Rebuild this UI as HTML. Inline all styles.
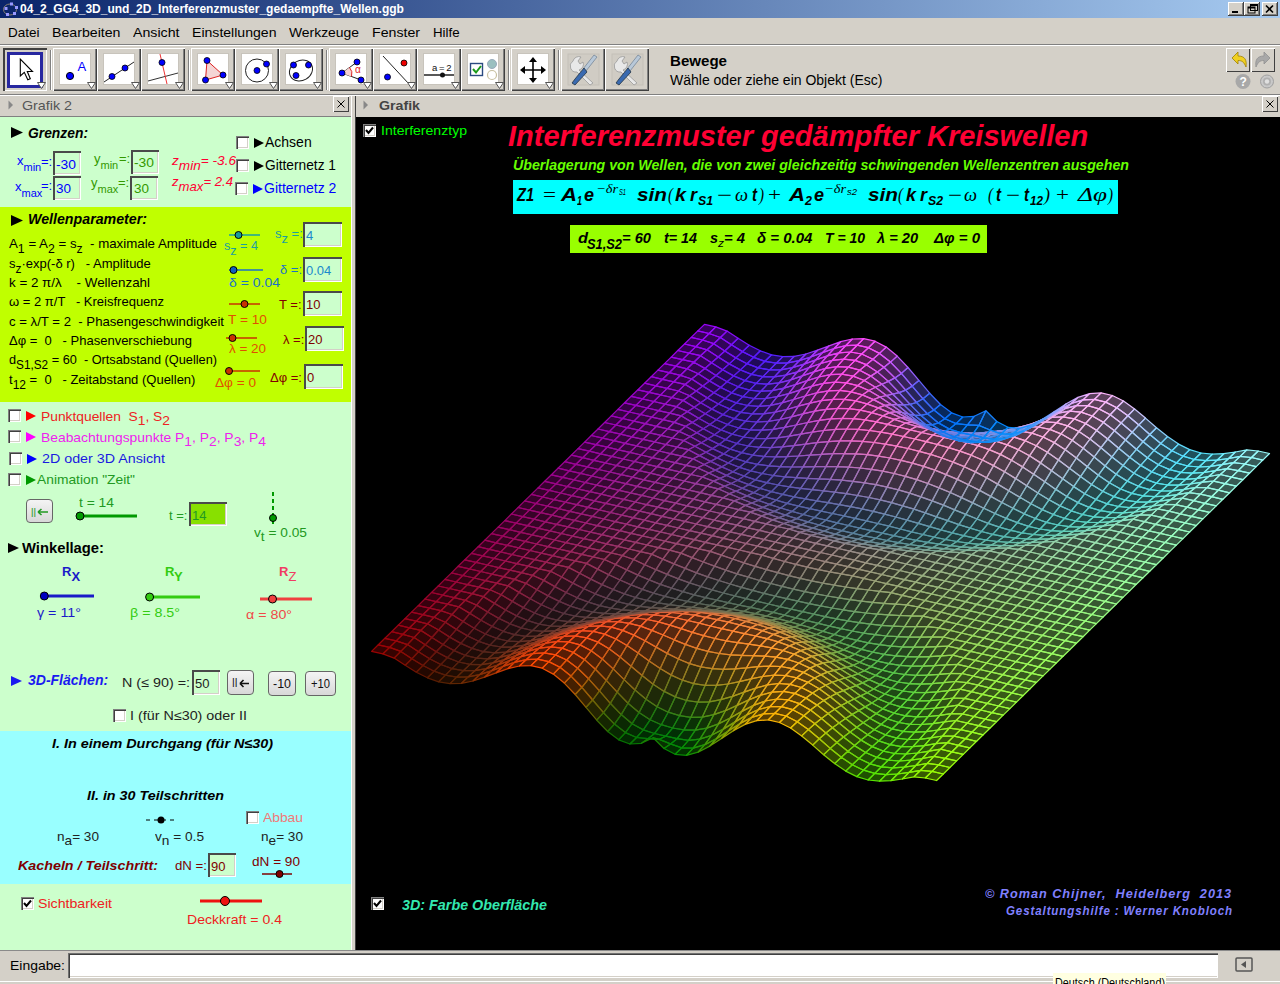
<!DOCTYPE html><html><head><meta charset="utf-8"><style>html,body{margin:0;padding:0;width:1280px;height:984px;overflow:hidden;background:#d4d0c8;}.t{position:absolute;white-space:nowrap;line-height:1;font-family:'Liberation Sans', sans-serif;transform-origin:0 0;}.r{position:absolute;}</style></head><body><div class="r" style="left:0px;top:0px;width:1280px;height:18px;background:linear-gradient(to right,#0a246a,#a6caf0);"></div>
<svg class="r" style="left:2px;top:1px" width="16" height="16"><ellipse cx="8" cy="8.5" rx="6.5" ry="5.5" fill="none" stroke="#8a8070" stroke-width="1"/><rect x="2.5" y="6" width="3" height="3" fill="#99f" /><rect x="8" y="1.5" width="3" height="3" fill="#99f"/><rect x="13" y="5" width="3" height="3" fill="#99f"/><rect x="4" y="12" width="3" height="3" fill="#99f"/><rect x="11" y="11" width="3" height="3" fill="#99f"/></svg>
<div class="t" style="left:20.00px;top:2.84px;font-size:12px;color:#fff;font-weight:bold;">04_2_GG4_3D_und_2D_Interferenzmuster_gedaempfte_Wellen.ggb</div>
<div class="r" style="left:1228px;top:2px;width:16px;height:14px;background:#d4d0c8;box-shadow:inset -1px -1px #404040,inset 1px 1px #fff,inset -2px -2px #808080;"></div>
<div class="r" style="left:1244px;top:2px;width:16px;height:14px;background:#d4d0c8;box-shadow:inset -1px -1px #404040,inset 1px 1px #fff,inset -2px -2px #808080;"></div>
<div class="r" style="left:1262px;top:2px;width:16px;height:14px;background:#d4d0c8;box-shadow:inset -1px -1px #404040,inset 1px 1px #fff,inset -2px -2px #808080;"></div>
<svg class="r" style="left:1228px;top:2px" width="52" height="14"><rect x="4" y="9" width="6" height="2" fill="#000"/><rect x="20" y="5" width="7" height="6" fill="none" stroke="#000" stroke-width="1"/><rect x="20" y="5" width="7" height="1.5" fill="#000"/><rect x="22.5" y="2.5" width="7" height="6" fill="none" stroke="#000" stroke-width="1"/><rect x="22" y="2" width="8" height="2" fill="#000"/><path d="M38 3.5 L45 10.5 M45 3.5 L38 10.5" stroke="#000" stroke-width="1.6"/></svg>
<div class="r" style="left:0px;top:18px;width:1280px;height:77px;background:#d4d0c8;"></div>
<div class="t" style="transform:scaleX(1.0376);left:7.50px;top:25.99px;font-size:13px;color:#000;">Datei</div>
<div class="t" style="transform:scaleX(1.0892);left:52.00px;top:25.99px;font-size:13px;color:#000;">Bearbeiten</div>
<div class="t" style="transform:scaleX(1.0905);left:132.80px;top:25.99px;font-size:13px;color:#000;">Ansicht</div>
<div class="t" style="transform:scaleX(1.0825);left:192.20px;top:25.99px;font-size:13px;color:#000;">Einstellungen</div>
<div class="t" style="transform:scaleX(1.0684);left:289.00px;top:25.99px;font-size:13px;color:#000;">Werkzeuge</div>
<div class="t" style="transform:scaleX(1.0890);left:372.00px;top:25.99px;font-size:13px;color:#000;">Fenster</div>
<div class="t" style="transform:scaleX(1.0225);left:432.80px;top:25.99px;font-size:13px;color:#000;">Hilfe</div>
<div class="r" style="left:0px;top:44px;width:1280px;height:1px;background:#808080;"></div>
<div class="r" style="left:0px;top:45px;width:1280px;height:1px;background:#fff;"></div>
<div class="r" style="left:0px;top:94px;width:1280px;height:1px;background:#808080;"></div>
<div class="r" style="left:0px;top:95px;width:1280px;height:1px;background:#fff;"></div>
<div class="r" style="left:49.5px;top:50px;width:1px;height:40px;background:#808080;"></div>
<div class="r" style="left:50.5px;top:50px;width:1px;height:40px;background:#fff;"></div>
<div class="r" style="left:187.5px;top:50px;width:1px;height:40px;background:#808080;"></div>
<div class="r" style="left:188.5px;top:50px;width:1px;height:40px;background:#fff;"></div>
<div class="r" style="left:325.5px;top:50px;width:1px;height:40px;background:#808080;"></div>
<div class="r" style="left:326.5px;top:50px;width:1px;height:40px;background:#fff;"></div>
<div class="r" style="left:507.5px;top:50px;width:1px;height:40px;background:#808080;"></div>
<div class="r" style="left:508.5px;top:50px;width:1px;height:40px;background:#fff;"></div>
<div class="r" style="left:557.5px;top:50px;width:1px;height:40px;background:#808080;"></div>
<div class="r" style="left:558.5px;top:50px;width:1px;height:40px;background:#fff;"></div>
<div class="r" style="left:3px;top:48px;width:44px;height:43px;background:#d4d0c8;box-shadow:inset 2px 2px #404040,inset -1px -1px #fff;"></div>
<div class="r" style="left:53px;top:48px;width:44px;height:43px;background:#d4d0c8;box-shadow:inset 1px 1px #fff,inset -1px -1px #404040,inset -2px -2px #808080;"></div>
<div class="r" style="left:97px;top:48px;width:44px;height:43px;background:#d4d0c8;box-shadow:inset 1px 1px #fff,inset -1px -1px #404040,inset -2px -2px #808080;"></div>
<div class="r" style="left:141px;top:48px;width:44px;height:43px;background:#d4d0c8;box-shadow:inset 1px 1px #fff,inset -1px -1px #404040,inset -2px -2px #808080;"></div>
<div class="r" style="left:191px;top:48px;width:44px;height:43px;background:#d4d0c8;box-shadow:inset 1px 1px #fff,inset -1px -1px #404040,inset -2px -2px #808080;"></div>
<div class="r" style="left:235px;top:48px;width:44px;height:43px;background:#d4d0c8;box-shadow:inset 1px 1px #fff,inset -1px -1px #404040,inset -2px -2px #808080;"></div>
<div class="r" style="left:279px;top:48px;width:44px;height:43px;background:#d4d0c8;box-shadow:inset 1px 1px #fff,inset -1px -1px #404040,inset -2px -2px #808080;"></div>
<div class="r" style="left:329px;top:48px;width:44px;height:43px;background:#d4d0c8;box-shadow:inset 1px 1px #fff,inset -1px -1px #404040,inset -2px -2px #808080;"></div>
<div class="r" style="left:373px;top:48px;width:44px;height:43px;background:#d4d0c8;box-shadow:inset 1px 1px #fff,inset -1px -1px #404040,inset -2px -2px #808080;"></div>
<div class="r" style="left:417px;top:48px;width:44px;height:43px;background:#d4d0c8;box-shadow:inset 1px 1px #fff,inset -1px -1px #404040,inset -2px -2px #808080;"></div>
<div class="r" style="left:461px;top:48px;width:44px;height:43px;background:#d4d0c8;box-shadow:inset 1px 1px #fff,inset -1px -1px #404040,inset -2px -2px #808080;"></div>
<div class="r" style="left:511px;top:48px;width:44px;height:43px;background:#d4d0c8;box-shadow:inset 1px 1px #fff,inset -1px -1px #404040,inset -2px -2px #808080;"></div>
<div class="r" style="left:561px;top:48px;width:44px;height:43px;background:#d4d0c8;box-shadow:inset 1px 1px #fff,inset -1px -1px #404040,inset -2px -2px #808080;"></div>
<div class="r" style="left:605px;top:48px;width:44px;height:43px;background:#d4d0c8;box-shadow:inset 1px 1px #fff,inset -1px -1px #404040,inset -2px -2px #808080;"></div>
<svg class="r" style="left:7px;top:52px" width="36" height="36"><rect x="1.5" y="1.5" width="33" height="33" fill="#fff" stroke="#2828a0" stroke-width="3"/><path d="M13.3 7 L13.3 24 L17.3 20.3 L20.8 27.8 L23.3 26.8 L20.3 19.5 L25.5 19.5 Z" fill="#fff" stroke="#000" stroke-width="1.1" stroke-linejoin="miter"/></svg>
<svg class="r" style="left:37px;top:82px" width="9" height="7"><path d="M0.5 0.5 L8.5 0.5 L4.5 6.5 Z" fill="#fff" stroke="#555"/></svg>
<div class="r" style="left:59px;top:53px;width:32px;height:32px;background:#fff;box-shadow:inset 0 0 0 1px #c8c4bc;"></div>
<svg class="r" style="left:60px;top:54px" width="30" height="30"><circle cx="10" cy="22" r="3.6" fill="#00f" stroke="#000" stroke-width="1"/><text x="17.5" y="17" font-family="Liberation Sans" font-size="13" fill="#00f">A</text></svg>
<svg class="r" style="left:87px;top:82px" width="9" height="7"><path d="M0.5 0.5 L8.5 0.5 L4.5 6.5 Z" fill="#fff" stroke="#555"/></svg>
<div class="r" style="left:103px;top:53px;width:32px;height:32px;background:#fff;box-shadow:inset 0 0 0 1px #c8c4bc;"></div>
<svg class="r" style="left:104px;top:54px" width="30" height="30"><path d="M0 28 L30 8" stroke="#222" stroke-width="1"/><circle cx="8" cy="22.5" r="3" fill="#00f" stroke="#000" stroke-width="0.8"/><circle cx="21" cy="14" r="3" fill="#00f" stroke="#000" stroke-width="0.8"/></svg>
<svg class="r" style="left:131px;top:82px" width="9" height="7"><path d="M0.5 0.5 L8.5 0.5 L4.5 6.5 Z" fill="#fff" stroke="#555"/></svg>
<div class="r" style="left:147px;top:53px;width:32px;height:32px;background:#fff;box-shadow:inset 0 0 0 1px #c8c4bc;"></div>
<svg class="r" style="left:148px;top:54px" width="30" height="30"><path d="M0 27 L30 19" stroke="#333" stroke-width="1"/><path d="M12 0 L19 30" stroke="#e33" stroke-width="1"/><circle cx="14" cy="8.5" r="3" fill="#00f" stroke="#000" stroke-width="0.8"/></svg>
<svg class="r" style="left:175px;top:82px" width="9" height="7"><path d="M0.5 0.5 L8.5 0.5 L4.5 6.5 Z" fill="#fff" stroke="#555"/></svg>
<div class="r" style="left:197px;top:53px;width:32px;height:32px;background:#fff;box-shadow:inset 0 0 0 1px #c8c4bc;"></div>
<svg class="r" style="left:198px;top:54px" width="30" height="30"><path d="M9 6.5 L25 21 L7.5 26 Z" fill="#f4d4d4" stroke="#d22" stroke-width="1"/><circle cx="9" cy="6.5" r="3" fill="#00f" stroke="#000" stroke-width="0.8"/><circle cx="25" cy="21" r="3" fill="#00f" stroke="#000" stroke-width="0.8"/><circle cx="7.5" cy="26" r="3" fill="#00f" stroke="#000" stroke-width="0.8"/></svg>
<svg class="r" style="left:225px;top:82px" width="9" height="7"><path d="M0.5 0.5 L8.5 0.5 L4.5 6.5 Z" fill="#fff" stroke="#555"/></svg>
<div class="r" style="left:241px;top:53px;width:32px;height:32px;background:#fff;box-shadow:inset 0 0 0 1px #c8c4bc;"></div>
<svg class="r" style="left:242px;top:54px" width="30" height="30"><circle cx="15" cy="16.5" r="11.5" fill="none" stroke="#222" stroke-width="1"/><circle cx="15" cy="16.5" r="3" fill="#00f" stroke="#000" stroke-width="0.8"/><circle cx="24.5" cy="10" r="3" fill="#00f" stroke="#000" stroke-width="0.8"/></svg>
<svg class="r" style="left:269px;top:82px" width="9" height="7"><path d="M0.5 0.5 L8.5 0.5 L4.5 6.5 Z" fill="#fff" stroke="#555"/></svg>
<div class="r" style="left:285px;top:53px;width:32px;height:32px;background:#fff;box-shadow:inset 0 0 0 1px #c8c4bc;"></div>
<svg class="r" style="left:286px;top:54px" width="30" height="30"><ellipse cx="15" cy="16.5" rx="12" ry="10" transform="rotate(-30 15 16.5)" fill="none" stroke="#222" stroke-width="1"/><circle cx="7.5" cy="11" r="3" fill="#00f" stroke="#000" stroke-width="0.8"/><circle cx="22.5" cy="11" r="3" fill="#00f" stroke="#000" stroke-width="0.8"/><circle cx="10" cy="21.5" r="3" fill="#00f" stroke="#000" stroke-width="0.8"/></svg>
<svg class="r" style="left:313px;top:82px" width="9" height="7"><path d="M0.5 0.5 L8.5 0.5 L4.5 6.5 Z" fill="#fff" stroke="#555"/></svg>
<div class="r" style="left:335px;top:53px;width:32px;height:32px;background:#fff;box-shadow:inset 0 0 0 1px #c8c4bc;"></div>
<svg class="r" style="left:336px;top:54px" width="30" height="30"><path d="M21 8 L6 19 L25 26" fill="none" stroke="#222" stroke-width="1"/><path d="M13.5 13.5 A9 9 0 0 1 15 22.5 L6 19 Z" fill="#f6d0d0"/><path d="M13.5 13.5 A9 9 0 0 1 15.5 22.5" fill="none" stroke="#d22" stroke-width="1"/><text x="19" y="19" font-family="Liberation Sans" font-size="10" fill="#d22">&#945;</text><circle cx="21" cy="8" r="3" fill="#00f" stroke="#000" stroke-width="0.8"/><circle cx="6" cy="19" r="3" fill="#00f" stroke="#000" stroke-width="0.8"/><circle cx="25" cy="26" r="3" fill="#00f" stroke="#000" stroke-width="0.8"/></svg>
<svg class="r" style="left:363px;top:82px" width="9" height="7"><path d="M0.5 0.5 L8.5 0.5 L4.5 6.5 Z" fill="#fff" stroke="#555"/></svg>
<div class="r" style="left:379px;top:53px;width:32px;height:32px;background:#fff;box-shadow:inset 0 0 0 1px #c8c4bc;"></div>
<svg class="r" style="left:380px;top:54px" width="30" height="30"><path d="M3 2 L29 30" stroke="#222" stroke-width="1"/><circle cx="24" cy="9" r="3" fill="#e00" stroke="#000" stroke-width="0.8"/><circle cx="7.5" cy="23" r="3" fill="#00f" stroke="#000" stroke-width="0.8"/></svg>
<svg class="r" style="left:407px;top:82px" width="9" height="7"><path d="M0.5 0.5 L8.5 0.5 L4.5 6.5 Z" fill="#fff" stroke="#555"/></svg>
<div class="r" style="left:423px;top:53px;width:32px;height:32px;background:#fff;box-shadow:inset 0 0 0 1px #c8c4bc;"></div>
<svg class="r" style="left:424px;top:54px" width="30" height="30"><path d="M0 21 L30 21" stroke="#111" stroke-width="1.4"/><circle cx="18.5" cy="21" r="2.5" fill="#111"/><text x="8" y="17" font-family="Liberation Sans" font-size="9.5" textLength="19.5" fill="#111">a = 2</text></svg>
<svg class="r" style="left:451px;top:82px" width="9" height="7"><path d="M0.5 0.5 L8.5 0.5 L4.5 6.5 Z" fill="#fff" stroke="#555"/></svg>
<div class="r" style="left:467px;top:53px;width:32px;height:32px;background:#fff;box-shadow:inset 0 0 0 1px #c8c4bc;"></div>
<svg class="r" style="left:468px;top:54px" width="30" height="30"><rect x="2.5" y="9.5" width="12" height="12" fill="#fff" stroke="#2a4a80" stroke-width="1.4"/><path d="M5 15 L8 18.5 L13 12" fill="none" stroke="#1a9a1a" stroke-width="2"/><circle cx="24" cy="10" r="4.5" fill="#9ac0c0" stroke="#9ab" stroke-width="1"/><circle cx="24" cy="21" r="4.5" fill="#fff" stroke="#c8c0a0" stroke-width="1.2"/></svg>
<svg class="r" style="left:495px;top:82px" width="9" height="7"><path d="M0.5 0.5 L8.5 0.5 L4.5 6.5 Z" fill="#fff" stroke="#555"/></svg>
<div class="r" style="left:517px;top:53px;width:32px;height:32px;background:#fff;box-shadow:inset 0 0 0 1px #c8c4bc;"></div>
<svg class="r" style="left:518px;top:54px" width="30" height="30"><path d="M15 6 L15 26 M5 16 L25 16" stroke="#000" stroke-width="1.6"/><path d="M15 3 L11 8 L19 8 Z M15 29 L11 24 L19 24 Z M2 16 L7 12 L7 20 Z M28 16 L23 12 L23 20 Z" fill="#000"/></svg>
<svg class="r" style="left:545px;top:82px" width="9" height="7"><path d="M0.5 0.5 L8.5 0.5 L4.5 6.5 Z" fill="#fff" stroke="#555"/></svg>
<svg class="r" style="left:567px;top:53px" width="33" height="33"><rect x="1" y="1" width="31" height="31" fill="#d0ccc4" stroke="#c4c0b8"/><path d="M6 8 A6 6 0 0 1 14 4 L11 8 L13 11 L16 9 A6 6 0 0 1 12 17 L26 30 L23 32 L10 19 A6 6 0 0 1 6 8Z" fill="#e8e8e8" stroke="#999" stroke-width="0.8"/><path d="M30 4 L27 2 L16 16 L19 18 Z" fill="#b8c8d8" stroke="#789" stroke-width="0.8"/><path d="M17 15 L8 26 L5 30 L8 32 L20 19 Z" fill="#3a6ab0" stroke="#234" stroke-width="0.8"/></svg>
<svg class="r" style="left:611px;top:53px" width="33" height="33"><rect x="1" y="1" width="31" height="31" fill="#d0ccc4" stroke="#c4c0b8"/><path d="M6 8 A6 6 0 0 1 14 4 L11 8 L13 11 L16 9 A6 6 0 0 1 12 17 L26 30 L23 32 L10 19 A6 6 0 0 1 6 8Z" fill="#e8e8e8" stroke="#999" stroke-width="0.8"/><path d="M30 4 L27 2 L16 16 L19 18 Z" fill="#b8c8d8" stroke="#789" stroke-width="0.8"/><path d="M17 15 L8 26 L5 30 L8 32 L20 19 Z" fill="#3a6ab0" stroke="#234" stroke-width="0.8"/></svg>
<div class="t" style="transform:scaleX(1.0771);left:670.00px;top:54.15px;font-size:14px;color:#000;font-weight:bold;">Bewege</div>
<div class="t" style="left:670.00px;top:73.15px;font-size:14px;color:#000;">W&auml;hle oder ziehe ein Objekt (Esc)</div>
<div class="r" style="left:1226px;top:48px;width:24px;height:24px;background:#d4d0c8;box-shadow:inset 1px 1px #fff,inset -1px -1px #404040;"></div>
<div class="r" style="left:1251px;top:48px;width:24px;height:24px;background:#d4d0c8;box-shadow:inset 1px 1px #fff,inset -1px -1px #404040;"></div>
<svg class="r" style="left:1226px;top:48px" width="50" height="24"><path d="M6 10 L12 4 L12 8 C19 8 21 12 20 19 C18 14 16 12.5 12 12.5 L12 16 Z" fill="#f0d020" stroke="#a08000" stroke-width="0.8"/><path d="M44 10 L38 4 L38 8 C31 8 29 12 30 19 C32 14 34 12.5 38 12.5 L38 16 Z" fill="#a8a8a8" stroke="#909090" stroke-width="0.8"/></svg>
<svg class="r" style="left:1234px;top:73px" width="44" height="18"><circle cx="9" cy="8.5" r="7.5" fill="#a8a8a8"/><text x="5.5" y="13" font-family="Liberation Sans" font-size="12" font-weight="bold" fill="#fff">?</text><g transform="translate(33 8.5)"><circle r="6.5" fill="#c8c8c8" stroke="#a0a0a0" stroke-width="1"/><circle r="4" fill="#b0b0b0"/><circle r="2.2" fill="#e0e0e0"/></g></svg>
<div class="r" style="left:0px;top:96px;width:351px;height:20px;background:#d4d0c8;"></div>
<div class="r" style="left:0px;top:116px;width:351px;height:1px;background:#808080;"></div>
<svg class="r" style="left:8px;top:100px" width="6" height="10"><path d="M0.5 0.5 L5 5 L0.5 9.5 Z" fill="#888"/></svg>
<div class="t" style="transform:scaleX(1.0985);left:22.00px;top:99.49px;font-size:13px;color:#555;">Grafik 2</div>
<div class="r" style="left:333px;top:96px;width:16px;height:16px;background:#d4d0c8;box-shadow:inset 1px 1px #fff,inset -1px -1px #404040;"></div>
<svg class="r" style="left:333px;top:96px" width="16" height="16"><path d="M4.5 4.5 L11.5 11.5 M11.5 4.5 L4.5 11.5" stroke="#000" stroke-width="1"/></svg>
<div class="r" style="left:351px;top:96px;width:5px;height:854px;background:#d4d0c8;box-shadow:inset 1px 0 #fff,inset -1px 0 #404040;"></div>
<div class="r" style="left:356px;top:96px;width:924px;height:21px;background:#d4d0c8;"></div>
<svg class="r" style="left:363px;top:100px" width="6" height="10"><path d="M0.5 0.5 L5 5 L0.5 9.5 Z" fill="#888"/></svg>
<div class="t" style="transform:scaleX(1.0911);left:378.50px;top:99.49px;font-size:13px;color:#444;font-weight:bold;">Grafik</div>
<div class="r" style="left:1262px;top:96px;width:16px;height:16px;background:#d4d0c8;box-shadow:inset 1px 1px #fff,inset -1px -1px #404040;"></div>
<svg class="r" style="left:1262px;top:96px" width="16" height="16"><path d="M4.5 4.5 L11.5 11.5 M11.5 4.5 L4.5 11.5" stroke="#000" stroke-width="1"/></svg>
<div class="r" style="left:0px;top:117px;width:351px;height:833px;background:#ccffcc;"></div>
<div class="r" style="left:0px;top:207px;width:351px;height:195px;background:#c0ff00;"></div>
<div class="r" style="left:0px;top:731px;width:351px;height:153px;background:#99ffff;"></div>
<svg class="r" style="left:11px;top:127px" width="12" height="11"><path d="M0 0 L12 5.5 L0 11 Z" fill="#000"/></svg>
<div class="t" style="transform:scaleX(0.9887);left:28.00px;top:125.65px;font-size:14px;color:#000;font-weight:bold;font-style:italic;">Grenzen:</div>
<div class="t" style="left:17.00px;top:154.49px;font-size:13px;color:#0000ff;">x<span style="position:relative;top:6px;font-size:11px;">min</span></div>
<div class="t" style="left:41.00px;top:154.99px;font-size:13px;color:#0000ff;">=:</div>
<div class="r" style="left:53px;top:151px;width:28px;height:24px;background:#ccffcc;box-shadow:inset 2px 2px #4a4a4a,inset -1px -1px #fff,inset -2px -2px #d4d0c8;"></div>
<div class="t" style="transform:scaleX(1.0640);left:56.00px;top:157.69px;font-size:13px;color:#0000ff;">-30</div>
<div class="t" style="left:15.00px;top:179.59px;font-size:13px;color:#0000ff;">x<span style="position:relative;top:6px;font-size:11px;">max</span></div>
<div class="t" style="left:41.00px;top:178.99px;font-size:13px;color:#0000ff;">=:</div>
<div class="r" style="left:53px;top:176px;width:28px;height:24px;background:#ccffcc;box-shadow:inset 2px 2px #4a4a4a,inset -1px -1px #fff,inset -2px -2px #d4d0c8;"></div>
<div class="t" style="transform:scaleX(1.0367);left:56.00px;top:182.49px;font-size:13px;color:#0000ff;">30</div>
<div class="t" style="left:94.00px;top:152.49px;font-size:13px;color:#339900;">y<span style="position:relative;top:6px;font-size:11px;">min</span></div>
<div class="t" style="left:119.00px;top:151.99px;font-size:13px;color:#339900;">=:</div>
<div class="r" style="left:131px;top:150px;width:28px;height:24px;background:#ccffcc;box-shadow:inset 2px 2px #4a4a4a,inset -1px -1px #fff,inset -2px -2px #d4d0c8;"></div>
<div class="t" style="transform:scaleX(1.0640);left:134.00px;top:156.49px;font-size:13px;color:#339900;">-30</div>
<div class="t" style="left:91.00px;top:175.99px;font-size:13px;color:#339900;">y<span style="position:relative;top:6px;font-size:11px;">max</span></div>
<div class="t" style="left:118.00px;top:175.99px;font-size:13px;color:#339900;">=:</div>
<div class="r" style="left:130px;top:176px;width:28px;height:24px;background:#ccffcc;box-shadow:inset 2px 2px #4a4a4a,inset -1px -1px #fff,inset -2px -2px #d4d0c8;"></div>
<div class="t" style="transform:scaleX(1.0367);left:134.00px;top:181.99px;font-size:13px;color:#339900;">30</div>
<div class="t" style="transform:scaleX(1.0481);left:172.00px;top:153.99px;font-size:13px;color:#ff0033;font-style:italic;">z<span style="position:relative;top:5px;">min</span>= -3.6</div>
<div class="t" style="transform:scaleX(1.0109);left:172.00px;top:175.49px;font-size:13px;color:#ff0033;font-style:italic;">z<span style="position:relative;top:5px;">max</span>= 2.4</div>
<div class="r" style="left:236px;top:136px;width:13px;height:13px;background:#fff;box-shadow:inset 1px 1px #808080,inset 2px 2px #404040,inset -1px -1px #fff,inset -2px -2px #d4d0c8;"></div>
<svg class="r" style="left:254px;top:138px" width="10" height="10"><path d="M0 0 L10 5.0 L0 10 Z" fill="#000"/></svg>
<div class="t" style="left:265.00px;top:134.85px;font-size:14px;color:#000;">Achsen</div>
<div class="r" style="left:236px;top:159px;width:13px;height:13px;background:#fff;box-shadow:inset 1px 1px #808080,inset 2px 2px #404040,inset -1px -1px #fff,inset -2px -2px #d4d0c8;"></div>
<svg class="r" style="left:254px;top:161px" width="10" height="10"><path d="M0 0 L10 5.0 L0 10 Z" fill="#000"/></svg>
<div class="t" style="transform:scaleX(0.9810);left:265.00px;top:157.75px;font-size:14px;color:#000;">Gitternetz 1</div>
<div class="r" style="left:235px;top:182px;width:13px;height:13px;background:#fff;box-shadow:inset 1px 1px #808080,inset 2px 2px #404040,inset -1px -1px #fff,inset -2px -2px #d4d0c8;"></div>
<svg class="r" style="left:253px;top:184px" width="10" height="10"><path d="M0 0 L10 5.0 L0 10 Z" fill="#0000ff"/></svg>
<div class="t" style="left:264.00px;top:180.55px;font-size:14px;color:#0000ff;">Gitternetz 2</div>
<svg class="r" style="left:11px;top:215px" width="12" height="11"><path d="M0 0 L12 5.5 L0 11 Z" fill="#000"/></svg>
<div class="t" style="transform:scaleX(1.0151);left:28.00px;top:212.45px;font-size:14px;color:#000;font-weight:bold;font-style:italic;">Wellenparameter:</div>
<div class="t" style="transform:scaleX(1.0213);left:9.00px;top:236.59px;font-size:13px;color:#000;">A<span style="position:relative;top:5px;font-size:12px;">1</span> = A<span style="position:relative;top:5px;font-size:12px;">2</span> = s<span style="position:relative;top:5px;font-size:12px;">z</span>&nbsp; - maximale Amplitude</div>
<div class="t" style="left:9.00px;top:256.99px;font-size:13px;color:#000;">s<span style="position:relative;top:5px;font-size:12px;">z</span>&middot;exp(-&delta; r) &nbsp; - Amplitude</div>
<div class="t" style="transform:scaleX(1.0293);left:9.00px;top:275.59px;font-size:13px;color:#000;">k = 2 &pi;/&lambda; &nbsp; &nbsp;- Wellenzahl</div>
<div class="t" style="left:9.00px;top:295.49px;font-size:13px;color:#000;">&omega; = 2 &pi;/T &nbsp; - Kreisfrequenz</div>
<div class="t" style="transform:scaleX(1.0131);left:9.00px;top:314.59px;font-size:13px;color:#000;">c = &lambda;/T = 2 &nbsp;- Phasengeschwindigkeit</div>
<div class="t" style="left:9.00px;top:334.19px;font-size:13px;color:#000;">&Delta;&phi; = &nbsp;0 &nbsp; - Phasenverschiebung</div>
<div class="t" style="transform:scaleX(0.9798);left:9.00px;top:353.19px;font-size:13px;color:#000;">d<span style="position:relative;top:5px;font-size:12px;">S1,S2</span> = 60 &nbsp;- Ortsabstand (Quellen)</div>
<div class="t" style="left:9.00px;top:373.29px;font-size:13px;color:#000;">t<span style="position:relative;top:5px;font-size:12px;">12</span> = &nbsp;0 &nbsp; - Zeitabstand (Quellen)</div>
<svg class="r" style="left:223px;top:228.5px" width="43" height="12"><path d="M6 6 L37 6" stroke="#1aa0a0" stroke-width="1.5"/><circle cx="15.5" cy="6" r="3.5" fill="#1a9a9a" stroke="#000" stroke-width="1"/></svg>
<div class="t" style="transform:scaleX(0.9701);left:224.00px;top:239.49px;font-size:13px;color:#1aa0a0;">s<span style="position:relative;top:5px;">z</span> = 4</div>
<div class="t" style="left:275.00px;top:226.99px;font-size:13px;color:#1aa0a0;">s<span style="position:relative;top:5px;">z</span> =:</div>
<div class="r" style="left:303px;top:222px;width:39px;height:25px;background:#ccffcc;box-shadow:inset 2px 2px #4a4a4a,inset -1px -1px #fff,inset -2px -2px #d4d0c8;"></div>
<div class="t" style="left:306.00px;top:228.99px;font-size:13px;color:#1a8acc;">4</div>
<svg class="r" style="left:223px;top:264px" width="46" height="12"><path d="M6 6 L40 6" stroke="#1a70c8" stroke-width="1.5"/><circle cx="10.5" cy="6" r="3.5" fill="#1060c0" stroke="#000" stroke-width="1"/></svg>
<div class="t" style="transform:scaleX(1.0769);left:229.00px;top:276.49px;font-size:13px;color:#1a70c8;">&delta; = 0.04</div>
<div class="t" style="left:280.00px;top:262.99px;font-size:13px;color:#1a70c8;">&delta; =:</div>
<div class="r" style="left:303px;top:257px;width:39px;height:25px;background:#ccffcc;box-shadow:inset 2px 2px #4a4a4a,inset -1px -1px #fff,inset -2px -2px #d4d0c8;"></div>
<div class="t" style="left:306.00px;top:263.99px;font-size:13px;color:#1a8acc;">0.04</div>
<svg class="r" style="left:223px;top:298.4px" width="43" height="12"><path d="M6 6 L37 6" stroke="#c83200" stroke-width="1.5"/><circle cx="21.5" cy="6" r="3.5" fill="#c83200" stroke="#000" stroke-width="1"/></svg>
<div class="t" style="transform:scaleX(1.0545);left:228.00px;top:312.69px;font-size:13px;color:#e05000;">T = 10</div>
<div class="t" style="left:279.00px;top:297.59px;font-size:13px;color:#800000;">T =:</div>
<div class="r" style="left:303px;top:291px;width:39px;height:25px;background:#ccffcc;box-shadow:inset 2px 2px #4a4a4a,inset -1px -1px #fff,inset -2px -2px #d4d0c8;"></div>
<div class="t" style="left:306.00px;top:297.99px;font-size:13px;color:#800000;">10</div>
<svg class="r" style="left:220px;top:332.3px" width="43" height="12"><path d="M6 6 L37 6" stroke="#c83200" stroke-width="1.5"/><circle cx="12.5" cy="6" r="3.5" fill="#c83200" stroke="#000" stroke-width="1"/></svg>
<div class="t" style="transform:scaleX(1.0341);left:229.00px;top:342.39px;font-size:13px;color:#e05000;">&lambda; = 20</div>
<div class="t" style="left:283.00px;top:332.69px;font-size:13px;color:#800000;">&lambda; =:</div>
<div class="r" style="left:305px;top:326px;width:39px;height:25px;background:#ccffcc;box-shadow:inset 2px 2px #4a4a4a,inset -1px -1px #fff,inset -2px -2px #d4d0c8;"></div>
<div class="t" style="left:308.00px;top:332.99px;font-size:13px;color:#800000;">20</div>
<svg class="r" style="left:223px;top:365.3px" width="43" height="12"><path d="M6 6 L37 6" stroke="#c83200" stroke-width="1.5"/><circle cx="6" cy="6" r="3.5" fill="#c83200" stroke="#000" stroke-width="1"/></svg>
<div class="t" style="transform:scaleX(1.0467);left:215.00px;top:376.29px;font-size:13px;color:#e05000;">&Delta;&phi; = 0</div>
<div class="t" style="left:270.00px;top:370.89px;font-size:13px;color:#800000;">&Delta;&phi; =:</div>
<div class="r" style="left:304px;top:364px;width:39px;height:25px;background:#ccffcc;box-shadow:inset 2px 2px #4a4a4a,inset -1px -1px #fff,inset -2px -2px #d4d0c8;"></div>
<div class="t" style="left:307.00px;top:370.99px;font-size:13px;color:#800000;">0</div>
<div class="r" style="left:8px;top:409px;width:13px;height:13px;background:#fff;box-shadow:inset 1px 1px #808080,inset 2px 2px #404040,inset -1px -1px #fff,inset -2px -2px #d4d0c8;"></div>
<svg class="r" style="left:26px;top:411px" width="10" height="10"><path d="M0 0 L10 5.0 L0 10 Z" fill="#ff0000"/></svg>
<div class="t" style="transform:scaleX(1.0621);left:41.00px;top:409.79px;font-size:13px;color:#ee2222;">Punktquellen &nbsp;S<span style="position:relative;top:4px;">1</span>, S<span style="position:relative;top:4px;">2</span></div>
<div class="r" style="left:8px;top:430px;width:13px;height:13px;background:#fff;box-shadow:inset 1px 1px #808080,inset 2px 2px #404040,inset -1px -1px #fff,inset -2px -2px #d4d0c8;"></div>
<svg class="r" style="left:26px;top:432px" width="10" height="10"><path d="M0 0 L10 5.0 L0 10 Z" fill="#ff00ff"/></svg>
<div class="t" style="transform:scaleX(1.0659);left:41.00px;top:430.59px;font-size:13px;color:#ee22ee;">Beabachtungspunkte P<span style="position:relative;top:4px;">1</span>, P<span style="position:relative;top:4px;">2</span>, P<span style="position:relative;top:4px;">3</span>, P<span style="position:relative;top:4px;">4</span></div>
<div class="r" style="left:9px;top:452px;width:13px;height:13px;background:#fff;box-shadow:inset 1px 1px #808080,inset 2px 2px #404040,inset -1px -1px #fff,inset -2px -2px #d4d0c8;"></div>
<svg class="r" style="left:27px;top:454px" width="10" height="10"><path d="M0 0 L10 5.0 L0 10 Z" fill="#0000ff"/></svg>
<div class="t" style="transform:scaleX(1.0981);left:42.00px;top:452.39px;font-size:13px;color:#1a1ae0;">2D oder 3D Ansicht</div>
<div class="r" style="left:8px;top:473px;width:13px;height:13px;background:#fff;box-shadow:inset 1px 1px #808080,inset 2px 2px #404040,inset -1px -1px #fff,inset -2px -2px #d4d0c8;"></div>
<svg class="r" style="left:26px;top:475px" width="10" height="10"><path d="M0 0 L10 5.0 L0 10 Z" fill="#009900"/></svg>
<div class="t" style="transform:scaleX(1.0614);left:37.00px;top:473.19px;font-size:13px;color:#229922;">Animation &quot;Zeit&quot;</div>
<div class="r" style="left:26px;top:499px;width:27px;height:24px;background:linear-gradient(#f4f4f4,#d8d8d8);border:1px solid #666;border-radius:4px;box-sizing:border-box;"></div>
<div class="t" style="transform:scaleX(0.7494);left:31.00px;top:506.84px;font-size:12px;color:#229922;">II</div>
<svg class="r" style="left:37px;top:508px" width="12" height="8"><path d="M1 4 L11 4 M1 4 L4.5 1 M1 4 L4.5 7" stroke="#229922" stroke-width="1.6" fill="none"/></svg>
<div class="t" style="transform:scaleX(1.0641);left:79.00px;top:495.99px;font-size:13px;color:#229922;">t = 14</div>
<svg class="r" style="left:74px;top:510.29999999999995px" width="69" height="12"><path d="M6 6 L63 6" stroke="#009900" stroke-width="3"/><circle cx="6" cy="6" r="4" fill="#009900" stroke="#000" stroke-width="1"/></svg>
<div class="t" style="left:169.00px;top:508.99px;font-size:13px;color:#229922;">t =:</div>
<div class="r" style="left:189px;top:502px;width:38px;height:24px;background:#88e000;box-shadow:inset 2px 2px #4a4a4a,inset -1px -1px #fff,inset -2px -2px #d4d0c8;"></div>
<div class="t" style="left:192.00px;top:508.99px;font-size:13px;color:#229922;">14</div>
<svg class="r" style="left:268px;top:490px" width="10" height="40"><path d="M5 2 L5 36" stroke="#009900" stroke-width="2" stroke-dasharray="4 3"/><circle cx="5" cy="28" r="3.5" fill="#009900" stroke="#000" stroke-width="1"/></svg>
<div class="t" style="transform:scaleX(1.0547);left:254.00px;top:526.49px;font-size:13px;color:#229922;">v<span style="position:relative;top:4px;">t</span> = 0.05</div>
<svg class="r" style="left:8px;top:543px" width="11" height="10"><path d="M0 0 L11 5.0 L0 10 Z" fill="#000"/></svg>
<div class="t" style="transform:scaleX(1.0557);left:22.00px;top:540.65px;font-size:14px;color:#000;font-weight:bold;">Winkellage:</div>
<div class="t" style="left:62.00px;top:565.19px;font-size:13px;color:#1a1ac8;font-weight:bold;">R<span style="position:relative;top:5px;">X</span></div>
<svg class="r" style="left:38px;top:590.2px" width="62" height="12"><path d="M6 6 L56 6" stroke="#1a1ac8" stroke-width="3"/><circle cx="6.299999999999997" cy="6" r="4" fill="#0000c0" stroke="#000" stroke-width="1"/></svg>
<div class="t" style="transform:scaleX(1.0996);left:37.00px;top:605.59px;font-size:13px;color:#1a1ac8;">&gamma; = 11&deg;</div>
<div class="t" style="left:165.00px;top:564.99px;font-size:13px;color:#33cc11;font-weight:bold;">R<span style="position:relative;top:5px;">Y</span></div>
<svg class="r" style="left:143px;top:591px" width="63" height="12"><path d="M6 6 L57 6" stroke="#33cc11" stroke-width="3"/><circle cx="6.599999999999994" cy="6" r="4" fill="#33cc11" stroke="#000" stroke-width="1"/></svg>
<div class="t" style="transform:scaleX(1.0970);left:130.00px;top:605.99px;font-size:13px;color:#33cc11;">&beta; = 8.5&deg;</div>
<div class="t" style="left:279.00px;top:565.49px;font-size:13px;color:#f03c64;font-weight:bold;">R<span style="position:relative;top:5px;font-weight:normal;">Z</span></div>
<svg class="r" style="left:254px;top:593px" width="64" height="12"><path d="M6 6 L58 6" stroke="#f04040" stroke-width="3"/><circle cx="18.5" cy="6" r="4" fill="#f04040" stroke="#000" stroke-width="1"/></svg>
<div class="t" style="transform:scaleX(1.0952);left:246.00px;top:607.69px;font-size:13px;color:#f04848;">&alpha; = 80&deg;</div>
<svg class="r" style="left:11px;top:676px" width="11" height="10"><path d="M0 0 L11 5.0 L0 10 Z" fill="#1a1af0"/></svg>
<div class="t" style="left:28.00px;top:673.35px;font-size:14px;color:#1a1af0;font-weight:bold;font-style:italic;">3D-Fl&auml;chen:</div>
<div class="t" style="transform:scaleX(1.1023);left:122.00px;top:675.99px;font-size:13px;color:#222;">N (&le; 90) =:</div>
<div class="r" style="left:192px;top:670px;width:28px;height:25px;background:#ccffcc;box-shadow:inset 2px 2px #4a4a4a,inset -1px -1px #fff,inset -2px -2px #d4d0c8;"></div>
<div class="t" style="left:195.00px;top:676.99px;font-size:13px;color:#222;">50</div>
<div class="r" style="left:227px;top:670px;width:27px;height:25px;background:linear-gradient(#f4f4f4,#d8d8d8);border:1px solid #666;border-radius:4px;box-sizing:border-box;"></div>
<div class="t" style="transform:scaleX(0.7603);left:232.00px;top:676.49px;font-size:13px;color:#111;">II</div>
<svg class="r" style="left:238.5px;top:679px" width="11" height="9"><path d="M1 4.5 L10 4.5 M1 4.5 L4.5 1 M1 4.5 L4.5 8" stroke="#111" stroke-width="1.6" fill="none"/></svg>
<div class="r" style="left:268px;top:671px;width:28px;height:25px;background:linear-gradient(#f4f4f4,#d8d8d8);border:1px solid #666;border-radius:4px;box-sizing:border-box;"></div>
<div class="t" style="transform:scaleX(0.9576);left:273.00px;top:676.99px;font-size:13px;color:#111;">-10</div>
<div class="r" style="left:305px;top:671px;width:31px;height:25px;background:linear-gradient(#f4f4f4,#d8d8d8);border:1px solid #666;border-radius:4px;box-sizing:border-box;"></div>
<div class="t" style="transform:scaleX(0.8612);left:311.00px;top:676.99px;font-size:13px;color:#111;">+10</div>
<div class="r" style="left:113px;top:709px;width:13px;height:13px;background:#fff;box-shadow:inset 1px 1px #808080,inset 2px 2px #404040,inset -1px -1px #fff,inset -2px -2px #d4d0c8;"></div>
<div class="t" style="transform:scaleX(1.1025);left:130.00px;top:708.79px;font-size:13px;color:#222;">I (f&uuml;r N&le;30) oder II</div>
<div class="t" style="transform:scaleX(1.1050);left:52.00px;top:736.99px;font-size:13px;color:#000;font-weight:bold;font-style:italic;">I. In einem Durchgang (f&uuml;r N&le;30)</div>
<div class="t" style="transform:scaleX(1.1004);left:87.00px;top:789.49px;font-size:13px;color:#000;font-weight:bold;font-style:italic;">II. in 30 Teilschritten</div>
<svg class="r" style="left:144px;top:814px" width="36" height="12"><path d="M2 6 L34 6" stroke="#000" stroke-width="1" stroke-dasharray="4 4"/><circle cx="17" cy="6" r="3.5" fill="#000"/></svg>
<div class="r" style="left:246px;top:811px;width:13px;height:13px;background:#fff;box-shadow:inset 1px 1px #808080,inset 2px 2px #404040,inset -1px -1px #fff,inset -2px -2px #d4d0c8;"></div>
<div class="t" style="transform:scaleX(1.0640);left:263.00px;top:810.99px;font-size:13px;color:#f07878;">Abbau</div>
<div class="t" style="transform:scaleX(1.0463);left:57.00px;top:829.79px;font-size:13px;color:#222;">n<span style="position:relative;top:4px;">a</span>= 30</div>
<div class="t" style="transform:scaleX(1.0509);left:155.00px;top:829.99px;font-size:13px;color:#222;">v<span style="position:relative;top:4px;">n</span> = 0.5</div>
<div class="t" style="transform:scaleX(1.0463);left:261.00px;top:829.99px;font-size:13px;color:#222;">n<span style="position:relative;top:4px;">e</span>= 30</div>
<div class="t" style="transform:scaleX(1.0990);left:18.00px;top:858.99px;font-size:13px;color:#800000;font-weight:bold;font-style:italic;">Kacheln / Teilschritt:</div>
<div class="t" style="transform:scaleX(1.0179);left:175.00px;top:858.99px;font-size:13px;color:#800000;">dN =:</div>
<div class="r" style="left:208px;top:853px;width:28px;height:24px;background:#ccffcc;box-shadow:inset 2px 2px #4a4a4a,inset -1px -1px #fff,inset -2px -2px #d4d0c8;"></div>
<div class="t" style="left:211.00px;top:859.99px;font-size:13px;color:#800000;">90</div>
<div class="t" style="transform:scaleX(1.0456);left:252.00px;top:854.99px;font-size:13px;color:#800000;">dN = 90</div>
<svg class="r" style="left:256px;top:868.3px" width="42" height="12"><path d="M6 6 L36 6" stroke="#800000" stroke-width="1.5"/><circle cx="23.5" cy="6" r="3.5" fill="#800000" stroke="#000" stroke-width="1"/></svg>
<div class="r" style="left:21px;top:897px;width:13px;height:13px;background:#fff;box-shadow:inset 1px 1px #808080,inset 2px 2px #404040,inset -1px -1px #fff,inset -2px -2px #d4d0c8;"></div>
<svg class="r" style="left:21px;top:897px" width="13" height="13"><path d="M3 6 L5.5 9 L10 3.5" fill="none" stroke="#000" stroke-width="2"/></svg>
<div class="t" style="transform:scaleX(1.0895);left:38.00px;top:896.59px;font-size:13px;color:#ee2222;">Sichtbarkeit</div>
<svg class="r" style="left:194px;top:895px" width="74" height="12"><path d="M6 6 L68 6" stroke="#ee1111" stroke-width="3"/><circle cx="31" cy="6" r="4.5" fill="#ee1111" stroke="#000" stroke-width="1"/></svg>
<div class="t" style="transform:scaleX(1.0820);left:187.00px;top:912.59px;font-size:13px;color:#ee2222;">Deckkraft = 0.4</div>
<div class="r" style="left:356px;top:117px;width:924px;height:833px;background:#000;"></div>
<div class="r" style="left:363px;top:124px;width:13px;height:13px;background:#fff;box-shadow:inset 1px 1px #808080,inset 2px 2px #404040,inset -1px -1px #fff,inset -2px -2px #d4d0c8;"></div>
<svg class="r" style="left:363px;top:124px" width="13" height="13"><path d="M3 6 L5.5 9 L10 3.5" fill="none" stroke="#000" stroke-width="2"/></svg>
<div class="t" style="transform:scaleX(1.0818);left:380.50px;top:123.99px;font-size:13px;color:#00ff00;">Interferenztyp</div>
<svg width="923" height="833" viewBox="357 117 923 833" style="position:absolute;left:357px;top:117px"><g fill-opacity="0.36" stroke-width="1.25" stroke-linejoin="round"><path d="M378.3 644.8 389.6 647.4 382.9 653.9 371.6 651.4Z" fill="#990303" stroke="#990303"/><path d="M389.6 647.4 400.8 651.4 394.1 658.1 382.9 653.9Z" fill="#960803" stroke="#960803"/><path d="M400.8 651.4 411.9 658.7 405.2 665.3 394.1 658.1Z" fill="#870d03" stroke="#870d03"/><path d="M411.9 658.7 423.0 665.5 416.3 672.2 405.2 665.3Z" fill="#731203" stroke="#731203"/><path d="M423.0 665.5 434.1 671.2 427.4 677.8 416.3 672.2Z" fill="#621703" stroke="#621703"/><path d="M434.1 671.2 445.3 675.2 438.7 681.8 427.4 677.8Z" fill="#581c03" stroke="#581c03"/><path d="M445.3 675.2 456.7 677.1 450.0 683.6 438.7 681.8Z" fill="#562103" stroke="#562103"/><path d="M456.7 677.1 468.1 676.9 461.5 683.3 450.0 683.6Z" fill="#5f2603" stroke="#5f2603"/><path d="M468.1 676.9 479.6 674.6 473.0 681.0 461.5 683.3Z" fill="#702b03" stroke="#702b03"/><path d="M479.6 674.6 491.3 670.9 484.6 677.2 473.0 681.0Z" fill="#8a3003" stroke="#8a3003"/><path d="M491.3 670.9 502.9 666.5 496.2 672.8 484.6 677.2Z" fill="#a83603" stroke="#a83603"/><path d="M502.9 666.5 514.5 662.4 507.9 668.7 496.2 672.8Z" fill="#c83b03" stroke="#c83b03"/><path d="M514.5 662.4 526.1 659.7 519.4 666.0 507.9 668.7Z" fill="#e34003" stroke="#e34003"/><path d="M526.1 659.7 537.5 659.2 530.9 665.6 519.4 666.0Z" fill="#f64503" stroke="#f64503"/><path d="M537.5 659.2 548.8 661.6 542.2 668.2 530.9 665.6Z" fill="#fd4a03" stroke="#fd4a03"/><path d="M548.8 661.6 560.0 667.3 553.3 674.1 542.2 668.2Z" fill="#f64f03" stroke="#f64f03"/><path d="M560.0 667.3 571.0 676.1 564.3 683.1 553.3 674.1Z" fill="#e05403" stroke="#e05403"/><path d="M571.0 676.1 581.9 687.3 575.2 694.5 564.3 683.1Z" fill="#be5903" stroke="#be5903"/><path d="M581.9 687.3 592.7 700.0 586.0 707.4 575.2 694.5Z" fill="#935e03" stroke="#935e03"/><path d="M592.7 700.0 603.5 712.7 596.8 720.2 586.0 707.4Z" fill="#646303" stroke="#646303"/><path d="M603.5 712.7 614.4 724.1 607.7 731.5 596.8 720.2Z" fill="#396903" stroke="#396903"/><path d="M614.4 724.1 625.4 732.6 618.7 739.8 607.7 731.5Z" fill="#176e03" stroke="#176e03"/><path d="M625.4 732.6 636.6 737.5 629.9 744.0 618.7 739.8Z" fill="#067303" stroke="#067303"/><path d="M636.6 737.5 647.9 738.7 641.4 743.3 629.9 744.0Z" fill="#067803" stroke="#067803"/><path d="M647.9 738.7 659.3 739.3 653.1 737.8 641.4 743.3Z" fill="#177d03" stroke="#177d03"/><path d="M659.3 739.3 670.5 743.9 664.0 748.5 653.1 737.8Z" fill="#178203" stroke="#178203"/><path d="M670.5 743.9 681.8 747.8 675.1 754.3 664.0 748.5Z" fill="#068703" stroke="#068703"/><path d="M681.8 747.8 693.2 748.1 686.5 755.3 675.1 754.3Z" fill="#068c03" stroke="#068c03"/><path d="M693.2 748.1 704.8 744.7 698.1 752.2 686.5 755.3Z" fill="#179103" stroke="#179103"/><path d="M704.8 744.7 716.5 738.6 709.8 746.1 698.1 752.2Z" fill="#399603" stroke="#399603"/><path d="M716.5 738.6 728.3 731.0 721.6 738.4 709.8 746.1Z" fill="#649c03" stroke="#649c03"/><path d="M728.3 731.0 740.1 723.5 733.4 730.7 721.6 738.4Z" fill="#93a103" stroke="#93a103"/><path d="M740.1 723.5 751.8 717.4 745.1 724.4 733.4 730.7Z" fill="#bea603" stroke="#bea603"/><path d="M751.8 717.4 763.4 713.8 756.7 720.6 745.1 724.4Z" fill="#e0ab03" stroke="#e0ab03"/><path d="M763.4 713.8 774.8 713.3 768.2 719.9 756.7 720.6Z" fill="#f6b003" stroke="#f6b003"/><path d="M774.8 713.3 786.1 716.0 779.5 722.5 768.2 719.9Z" fill="#fdb503" stroke="#fdb503"/><path d="M786.1 716.0 797.3 721.7 790.6 728.0 779.5 722.5Z" fill="#f6ba03" stroke="#f6ba03"/><path d="M797.3 721.7 808.3 729.6 801.7 735.9 790.6 728.0Z" fill="#e3bf03" stroke="#e3bf03"/><path d="M808.3 729.6 819.3 738.8 812.7 745.1 801.7 735.9Z" fill="#c8c403" stroke="#c8c403"/><path d="M819.3 738.8 830.3 748.4 823.6 754.7 812.7 745.1Z" fill="#a8c903" stroke="#a8c903"/><path d="M830.3 748.4 841.3 757.3 834.6 763.6 823.6 754.7Z" fill="#8acf03" stroke="#8acf03"/><path d="M841.3 757.3 852.3 764.7 845.7 771.1 834.6 763.6Z" fill="#70d403" stroke="#70d403"/><path d="M852.3 764.7 863.5 770.2 856.8 776.6 845.7 771.1Z" fill="#5fd903" stroke="#5fd903"/><path d="M863.5 770.2 874.8 773.4 868.1 780.0 856.8 776.6Z" fill="#56de03" stroke="#56de03"/><path d="M874.8 773.4 886.1 774.6 879.5 781.2 868.1 780.0Z" fill="#58e303" stroke="#58e303"/><path d="M886.1 774.6 897.6 774.0 890.9 780.7 879.5 781.2Z" fill="#62e803" stroke="#62e803"/><path d="M897.6 774.0 909.1 772.4 902.4 779.0 890.9 780.7Z" fill="#73ed03" stroke="#73ed03"/><path d="M909.1 772.4 920.6 770.3 913.9 776.9 902.4 779.0Z" fill="#87f203" stroke="#87f203"/><path d="M920.6 770.3 932.0 771.4 925.3 778.0 913.9 776.9Z" fill="#96f703" stroke="#96f703"/><path d="M932.0 771.4 943.3 774.0 936.6 780.5 925.3 778.0Z" fill="#99fc03" stroke="#99fc03"/><path d="M384.9 638.3 396.2 640.9 389.6 647.4 378.3 644.8Z" fill="#990308" stroke="#990308"/><path d="M396.2 640.9 407.5 644.6 400.8 651.4 389.6 647.4Z" fill="#960808" stroke="#960808"/><path d="M407.5 644.6 418.5 651.8 411.9 658.7 400.8 651.4Z" fill="#880d08" stroke="#880d08"/><path d="M418.5 651.8 429.6 658.7 423.0 665.5 411.9 658.7Z" fill="#741208" stroke="#741208"/><path d="M429.6 658.7 440.8 664.5 434.1 671.2 423.0 665.5Z" fill="#631708" stroke="#631708"/><path d="M440.8 664.5 452.0 668.6 445.3 675.2 434.1 671.2Z" fill="#581c08" stroke="#581c08"/><path d="M452.0 668.6 463.3 670.7 456.7 677.1 445.3 675.2Z" fill="#562108" stroke="#562108"/><path d="M463.3 670.7 474.8 670.7 468.1 676.9 456.7 677.1Z" fill="#5e2608" stroke="#5e2608"/><path d="M474.8 670.7 486.3 668.6 479.6 674.6 468.1 676.9Z" fill="#6f2b08" stroke="#6f2b08"/><path d="M486.3 668.6 497.9 665.0 491.3 670.9 479.6 674.6Z" fill="#883008" stroke="#883008"/><path d="M497.9 665.0 509.5 660.7 502.9 666.5 491.3 670.9Z" fill="#a63608" stroke="#a63608"/><path d="M509.5 660.7 521.1 656.6 514.5 662.4 502.9 666.5Z" fill="#c53b08" stroke="#c53b08"/><path d="M521.1 656.6 532.7 653.7 526.1 659.7 514.5 662.4Z" fill="#e14008" stroke="#e14008"/><path d="M532.7 653.7 544.2 652.9 537.5 659.2 526.1 659.7Z" fill="#f54508" stroke="#f54508"/><path d="M544.2 652.9 555.5 654.9 548.8 661.6 537.5 659.2Z" fill="#fd4a08" stroke="#fd4a08"/><path d="M555.5 654.9 566.7 660.0 560.0 667.3 548.8 661.6Z" fill="#f74f08" stroke="#f74f08"/><path d="M566.7 660.0 577.7 668.2 571.0 676.1 560.0 667.3Z" fill="#e45408" stroke="#e45408"/><path d="M577.7 668.2 588.6 678.8 581.9 687.3 571.0 676.1Z" fill="#c35908" stroke="#c35908"/><path d="M588.6 678.8 599.5 690.9 592.7 700.0 581.9 687.3Z" fill="#995e08" stroke="#995e08"/><path d="M599.5 690.9 610.3 703.3 603.5 712.7 592.7 700.0Z" fill="#6c6308" stroke="#6c6308"/><path d="M610.3 703.3 621.2 714.6 614.4 724.1 603.5 712.7Z" fill="#416908" stroke="#416908"/><path d="M621.2 714.6 632.1 723.7 625.4 732.6 614.4 724.1Z" fill="#1f6e08" stroke="#1f6e08"/><path d="M632.1 723.7 643.3 729.9 636.6 737.5 625.4 732.6Z" fill="#0a7308" stroke="#0a7308"/><path d="M643.3 729.9 654.5 733.5 647.9 738.7 636.6 737.5Z" fill="#047808" stroke="#047808"/><path d="M654.5 733.5 665.8 736.1 659.3 739.3 647.9 738.7Z" fill="#067d08" stroke="#067d08"/><path d="M665.8 736.1 677.1 738.7 670.5 743.9 659.3 739.3Z" fill="#068208" stroke="#068208"/><path d="M677.1 738.7 688.5 740.3 681.8 747.8 670.5 743.9Z" fill="#048708" stroke="#048708"/><path d="M688.5 740.3 699.9 739.2 693.2 748.1 681.8 747.8Z" fill="#0a8c08" stroke="#0a8c08"/><path d="M699.9 739.2 711.6 735.3 704.8 744.7 693.2 748.1Z" fill="#1f9108" stroke="#1f9108"/><path d="M711.6 735.3 723.3 729.1 716.5 738.6 704.8 744.7Z" fill="#419608" stroke="#419608"/><path d="M723.3 729.1 735.1 721.9 728.3 731.0 716.5 738.6Z" fill="#6c9c08" stroke="#6c9c08"/><path d="M735.1 721.9 746.8 714.9 740.1 723.5 728.3 731.0Z" fill="#99a108" stroke="#99a108"/><path d="M746.8 714.9 758.5 709.5 751.8 717.4 740.1 723.5Z" fill="#c3a608" stroke="#c3a608"/><path d="M758.5 709.5 770.1 706.5 763.4 713.8 751.8 717.4Z" fill="#e4ab08" stroke="#e4ab08"/><path d="M770.1 706.5 781.5 706.6 774.8 713.3 763.4 713.8Z" fill="#f7b008" stroke="#f7b008"/><path d="M781.5 706.6 792.8 709.7 786.1 716.0 774.8 713.3Z" fill="#fdb508" stroke="#fdb508"/><path d="M792.8 709.7 803.9 715.7 797.3 721.7 786.1 716.0Z" fill="#f5ba08" stroke="#f5ba08"/><path d="M803.9 715.7 814.9 723.8 808.3 729.6 797.3 721.7Z" fill="#e1bf08" stroke="#e1bf08"/><path d="M814.9 723.8 825.9 733.0 819.3 738.8 808.3 729.6Z" fill="#c5c408" stroke="#c5c408"/><path d="M825.9 733.0 836.9 742.5 830.3 748.4 819.3 738.8Z" fill="#a6c908" stroke="#a6c908"/><path d="M836.9 742.5 847.9 751.3 841.3 757.3 830.3 748.4Z" fill="#88cf08" stroke="#88cf08"/><path d="M847.9 751.3 859.0 758.5 852.3 764.7 841.3 757.3Z" fill="#6fd408" stroke="#6fd408"/><path d="M859.0 758.5 870.1 763.8 863.5 770.2 852.3 764.7Z" fill="#5ed908" stroke="#5ed908"/><path d="M870.1 763.8 881.4 766.8 874.8 773.4 863.5 770.2Z" fill="#56de08" stroke="#56de08"/><path d="M881.4 766.8 892.8 767.8 886.1 774.6 874.8 773.4Z" fill="#58e308" stroke="#58e308"/><path d="M892.8 767.8 904.2 767.2 897.6 774.0 886.1 774.6Z" fill="#63e808" stroke="#63e808"/><path d="M904.2 767.2 915.8 765.5 909.1 772.4 897.6 774.0Z" fill="#74ed08" stroke="#74ed08"/><path d="M915.8 765.5 927.3 763.4 920.6 770.3 909.1 772.4Z" fill="#88f208" stroke="#88f208"/><path d="M927.3 763.4 938.6 764.9 932.0 771.4 920.6 770.3Z" fill="#96f708" stroke="#96f708"/><path d="M938.6 764.9 949.9 767.5 943.3 774.0 932.0 771.4Z" fill="#99fc08" stroke="#99fc08"/><path d="M391.6 631.7 402.9 634.3 396.2 640.9 384.9 638.3Z" fill="#99030d" stroke="#99030d"/><path d="M402.9 634.3 414.1 637.5 407.5 644.6 396.2 640.9Z" fill="#97080d" stroke="#97080d"/><path d="M414.1 637.5 425.2 644.8 418.5 651.8 407.5 644.6Z" fill="#8a0d0d" stroke="#8a0d0d"/><path d="M425.2 644.8 436.3 651.7 429.6 658.7 418.5 651.8Z" fill="#76120d" stroke="#76120d"/><path d="M436.3 651.7 447.4 657.6 440.8 664.5 429.6 658.7Z" fill="#64170d" stroke="#64170d"/><path d="M447.4 657.6 458.7 662.0 452.0 668.6 440.8 664.5Z" fill="#591c0d" stroke="#591c0d"/><path d="M458.7 662.0 470.0 664.4 463.3 670.7 452.0 668.6Z" fill="#56210d" stroke="#56210d"/><path d="M470.0 664.4 481.4 664.6 474.8 670.7 463.3 670.7Z" fill="#5d260d" stroke="#5d260d"/><path d="M481.4 664.6 492.9 662.9 486.3 668.6 474.8 670.7Z" fill="#6d2b0d" stroke="#6d2b0d"/><path d="M492.9 662.9 504.5 659.6 497.9 665.0 486.3 668.6Z" fill="#85300d" stroke="#85300d"/><path d="M504.5 659.6 516.1 655.4 509.5 660.7 497.9 665.0Z" fill="#a2360d" stroke="#a2360d"/><path d="M516.1 655.4 527.7 651.3 521.1 656.6 509.5 660.7Z" fill="#c13b0d" stroke="#c13b0d"/><path d="M527.7 651.3 539.3 648.1 532.7 653.7 521.1 656.6Z" fill="#dd400d" stroke="#dd400d"/><path d="M539.3 648.1 550.8 646.9 544.2 652.9 532.7 653.7Z" fill="#f2450d" stroke="#f2450d"/><path d="M550.8 646.9 562.2 648.2 555.5 654.9 544.2 652.9Z" fill="#fc4a0d" stroke="#fc4a0d"/><path d="M562.2 648.2 573.4 652.5 566.7 660.0 555.5 654.9Z" fill="#fa4f0d" stroke="#fa4f0d"/><path d="M573.4 652.5 584.5 659.6 577.7 668.2 566.7 660.0Z" fill="#e9540d" stroke="#e9540d"/><path d="M584.5 659.6 595.4 669.2 588.6 678.8 577.7 668.2Z" fill="#cd590d" stroke="#cd590d"/><path d="M595.4 669.2 606.3 680.4 599.5 690.9 588.6 678.8Z" fill="#a75e0d" stroke="#a75e0d"/><path d="M606.3 680.4 617.2 692.1 610.3 703.3 599.5 690.9Z" fill="#7c630d" stroke="#7c630d"/><path d="M617.2 692.1 628.0 703.2 621.2 714.6 610.3 703.3Z" fill="#53690d" stroke="#53690d"/><path d="M628.0 703.2 639.0 712.6 632.1 723.7 621.2 714.6Z" fill="#306e0d" stroke="#306e0d"/><path d="M639.0 712.6 650.1 719.8 643.3 729.9 632.1 723.7Z" fill="#17730d" stroke="#17730d"/><path d="M650.1 719.8 661.3 724.7 654.5 733.5 643.3 729.9Z" fill="#0a780d" stroke="#0a780d"/><path d="M661.3 724.7 672.6 728.0 665.8 736.1 654.5 733.5Z" fill="#067d0d" stroke="#067d0d"/><path d="M672.6 728.0 683.9 729.9 677.1 738.7 665.8 736.1Z" fill="#06820d" stroke="#06820d"/><path d="M683.9 729.9 695.3 730.1 688.5 740.3 677.1 738.7Z" fill="#0a870d" stroke="#0a870d"/><path d="M695.3 730.1 706.8 728.1 699.9 739.2 688.5 740.3Z" fill="#178c0d" stroke="#178c0d"/><path d="M706.8 728.1 718.5 723.9 711.6 735.3 699.9 739.2Z" fill="#30910d" stroke="#30910d"/><path d="M718.5 723.9 730.2 718.0 723.3 729.1 711.6 735.3Z" fill="#53960d" stroke="#53960d"/><path d="M730.2 718.0 741.9 711.4 735.1 721.9 723.3 729.1Z" fill="#7c9c0d" stroke="#7c9c0d"/><path d="M741.9 711.4 753.6 705.4 746.8 714.9 735.1 721.9Z" fill="#a7a10d" stroke="#a7a10d"/><path d="M753.6 705.4 765.3 701.0 758.5 709.5 746.8 714.9Z" fill="#cda60d" stroke="#cda60d"/><path d="M765.3 701.0 776.8 699.0 770.1 706.5 758.5 709.5Z" fill="#e9ab0d" stroke="#e9ab0d"/><path d="M776.8 699.0 788.2 699.9 781.5 706.6 770.1 706.5Z" fill="#fab00d" stroke="#fab00d"/><path d="M788.2 699.9 799.4 703.7 792.8 709.7 781.5 706.6Z" fill="#fcb50d" stroke="#fcb50d"/><path d="M799.4 703.7 810.5 710.1 803.9 715.7 792.8 709.7Z" fill="#f2ba0d" stroke="#f2ba0d"/><path d="M810.5 710.1 821.5 718.4 814.9 723.8 803.9 715.7Z" fill="#ddbf0d" stroke="#ddbf0d"/><path d="M821.5 718.4 832.5 727.7 825.9 733.0 814.9 723.8Z" fill="#c1c40d" stroke="#c1c40d"/><path d="M832.5 727.7 843.5 737.1 836.9 742.5 825.9 733.0Z" fill="#a2c90d" stroke="#a2c90d"/><path d="M843.5 737.1 854.5 745.6 847.9 751.3 836.9 742.5Z" fill="#85cf0d" stroke="#85cf0d"/><path d="M854.5 745.6 865.6 752.5 859.0 758.5 847.9 751.3Z" fill="#6dd40d" stroke="#6dd40d"/><path d="M865.6 752.5 876.8 757.4 870.1 763.8 859.0 758.5Z" fill="#5dd90d" stroke="#5dd90d"/><path d="M876.8 757.4 888.1 760.2 881.4 766.8 870.1 763.8Z" fill="#56de0d" stroke="#56de0d"/><path d="M888.1 760.2 899.5 761.0 892.8 767.8 881.4 766.8Z" fill="#59e30d" stroke="#59e30d"/><path d="M899.5 761.0 910.9 760.2 904.2 767.2 892.8 767.8Z" fill="#64e80d" stroke="#64e80d"/><path d="M910.9 760.2 922.4 758.5 915.8 765.5 904.2 767.2Z" fill="#76ed0d" stroke="#76ed0d"/><path d="M922.4 758.5 934.0 756.4 927.3 763.4 915.8 765.5Z" fill="#8af20d" stroke="#8af20d"/><path d="M934.0 756.4 945.3 758.3 938.6 764.9 927.3 763.4Z" fill="#97f70d" stroke="#97f70d"/><path d="M945.3 758.3 956.6 760.9 949.9 767.5 938.6 764.9Z" fill="#99fc0d" stroke="#99fc0d"/><path d="M398.2 625.2 409.5 627.8 402.9 634.3 391.6 631.7Z" fill="#990312" stroke="#990312"/><path d="M409.5 627.8 420.8 630.4 414.1 637.5 402.9 634.3Z" fill="#980812" stroke="#980812"/><path d="M420.8 630.4 431.9 637.5 425.2 644.8 414.1 637.5Z" fill="#8d0d12" stroke="#8d0d12"/><path d="M431.9 637.5 443.0 644.5 436.3 651.7 425.2 644.8Z" fill="#781212" stroke="#781212"/><path d="M443.0 644.5 454.1 650.6 447.4 657.6 436.3 651.7Z" fill="#671712" stroke="#671712"/><path d="M454.1 650.6 465.3 655.3 458.7 662.0 447.4 657.6Z" fill="#5a1c12" stroke="#5a1c12"/><path d="M465.3 655.3 476.6 658.1 470.0 664.4 458.7 662.0Z" fill="#562112" stroke="#562112"/><path d="M476.6 658.1 488.0 658.8 481.4 664.6 470.0 664.4Z" fill="#5b2612" stroke="#5b2612"/><path d="M488.0 658.8 499.5 657.4 492.9 662.9 481.4 664.6Z" fill="#692b12" stroke="#692b12"/><path d="M499.5 657.4 511.1 654.5 504.5 659.6 492.9 662.9Z" fill="#7f3012" stroke="#7f3012"/><path d="M511.1 654.5 522.7 650.6 516.1 655.4 504.5 659.6Z" fill="#9c3612" stroke="#9c3612"/><path d="M522.7 650.6 534.3 646.5 527.7 651.3 516.1 655.4Z" fill="#ba3b12" stroke="#ba3b12"/><path d="M534.3 646.5 545.9 643.1 539.3 648.1 527.7 651.3Z" fill="#d74012" stroke="#d74012"/><path d="M545.9 643.1 557.4 641.3 550.8 646.9 539.3 648.1Z" fill="#ee4512" stroke="#ee4512"/><path d="M557.4 641.3 568.8 641.8 562.2 648.2 550.8 646.9Z" fill="#fb4a12" stroke="#fb4a12"/><path d="M568.8 641.8 580.1 644.9 573.4 652.5 562.2 648.2Z" fill="#fc4f12" stroke="#fc4f12"/><path d="M580.1 644.9 591.2 650.8 584.5 659.6 573.4 652.5Z" fill="#f15412" stroke="#f15412"/><path d="M591.2 650.8 602.3 659.0 595.4 669.2 584.5 659.6Z" fill="#d95912" stroke="#d95912"/><path d="M602.3 659.0 613.2 668.9 606.3 680.4 595.4 669.2Z" fill="#b85e12" stroke="#b85e12"/><path d="M613.2 668.9 624.1 679.6 617.2 692.1 606.3 680.4Z" fill="#936312" stroke="#936312"/><path d="M624.1 679.6 635.0 690.0 628.0 703.2 617.2 692.1Z" fill="#6c6912" stroke="#6c6912"/><path d="M635.0 690.0 646.0 699.2 639.0 712.6 628.0 703.2Z" fill="#4a6e12" stroke="#4a6e12"/><path d="M646.0 699.2 657.1 706.7 650.1 719.8 639.0 712.6Z" fill="#307312" stroke="#307312"/><path d="M657.1 706.7 668.2 712.2 661.3 724.7 650.1 719.8Z" fill="#1f7812" stroke="#1f7812"/><path d="M668.2 712.2 679.5 715.7 672.6 728.0 661.3 724.7Z" fill="#177d12" stroke="#177d12"/><path d="M679.5 715.7 690.8 717.4 683.9 729.9 672.6 728.0Z" fill="#178212" stroke="#178212"/><path d="M690.8 717.4 702.3 717.1 695.3 730.1 683.9 729.9Z" fill="#1f8712" stroke="#1f8712"/><path d="M702.3 717.1 713.8 714.7 706.8 728.1 695.3 730.1Z" fill="#308c12" stroke="#308c12"/><path d="M713.8 714.7 725.4 710.7 718.5 723.9 706.8 728.1Z" fill="#4a9112" stroke="#4a9112"/><path d="M725.4 710.7 737.1 705.4 730.2 718.0 718.5 723.9Z" fill="#6c9612" stroke="#6c9612"/><path d="M737.1 705.4 748.8 699.9 741.9 711.4 730.2 718.0Z" fill="#939c12" stroke="#939c12"/><path d="M748.8 699.9 760.5 695.2 753.6 705.4 741.9 711.4Z" fill="#b8a112" stroke="#b8a112"/><path d="M760.5 695.2 772.0 692.1 765.3 701.0 753.6 705.4Z" fill="#d9a612" stroke="#d9a612"/><path d="M772.0 692.1 783.5 691.4 776.8 699.0 765.3 701.0Z" fill="#f1ab12" stroke="#f1ab12"/><path d="M783.5 691.4 794.8 693.4 788.2 699.9 776.8 699.0Z" fill="#fcb012" stroke="#fcb012"/><path d="M794.8 693.4 806.0 698.1 799.4 703.7 788.2 699.9Z" fill="#fbb512" stroke="#fbb512"/><path d="M806.0 698.1 817.1 705.1 810.5 710.1 799.4 703.7Z" fill="#eeba12" stroke="#eeba12"/><path d="M817.1 705.1 828.1 713.6 821.5 718.4 810.5 710.1Z" fill="#d7bf12" stroke="#d7bf12"/><path d="M828.1 713.6 839.1 722.9 832.5 727.7 821.5 718.4Z" fill="#bac412" stroke="#bac412"/><path d="M839.1 722.9 850.1 732.0 843.5 737.1 832.5 727.7Z" fill="#9cc912" stroke="#9cc912"/><path d="M850.1 732.0 861.1 740.1 854.5 745.6 843.5 737.1Z" fill="#7fcf12" stroke="#7fcf12"/><path d="M861.1 740.1 872.2 746.6 865.6 752.5 854.5 745.6Z" fill="#69d412" stroke="#69d412"/><path d="M872.2 746.6 883.4 751.1 876.8 757.4 865.6 752.5Z" fill="#5bd912" stroke="#5bd912"/><path d="M883.4 751.1 894.7 753.5 888.1 760.2 876.8 757.4Z" fill="#56de12" stroke="#56de12"/><path d="M894.7 753.5 906.1 754.0 899.5 761.0 888.1 760.2Z" fill="#5ae312" stroke="#5ae312"/><path d="M906.1 754.0 917.6 753.0 910.9 760.2 899.5 761.0Z" fill="#67e812" stroke="#67e812"/><path d="M917.6 753.0 929.1 751.2 922.4 758.5 910.9 760.2Z" fill="#78ed12" stroke="#78ed12"/><path d="M929.1 751.2 940.6 749.2 934.0 756.4 922.4 758.5Z" fill="#8df212" stroke="#8df212"/><path d="M940.6 749.2 951.9 751.8 945.3 758.3 934.0 756.4Z" fill="#98f712" stroke="#98f712"/><path d="M951.9 751.8 963.3 754.4 956.6 760.9 945.3 758.3Z" fill="#99fc12" stroke="#99fc12"/><path d="M404.9 618.7 416.2 621.2 409.5 627.8 398.2 625.2Z" fill="#990317" stroke="#990317"/><path d="M416.2 621.2 427.5 623.8 420.8 630.4 409.5 627.8Z" fill="#990817" stroke="#990817"/><path d="M427.5 623.8 438.6 630.0 431.9 637.5 420.8 630.4Z" fill="#900d17" stroke="#900d17"/><path d="M438.6 630.0 449.7 637.1 443.0 644.5 431.9 637.5Z" fill="#7c1217" stroke="#7c1217"/><path d="M449.7 637.1 460.8 643.4 454.1 650.6 443.0 644.5Z" fill="#6a1717" stroke="#6a1717"/><path d="M460.8 643.4 472.0 648.4 465.3 655.3 454.1 650.6Z" fill="#5c1c17" stroke="#5c1c17"/><path d="M472.0 648.4 483.3 651.7 476.6 658.1 465.3 655.3Z" fill="#562117" stroke="#562117"/><path d="M483.3 651.7 494.6 652.9 488.0 658.8 476.6 658.1Z" fill="#592617" stroke="#592617"/><path d="M494.6 652.9 506.1 652.2 499.5 657.4 488.0 658.8Z" fill="#652b17" stroke="#652b17"/><path d="M506.1 652.2 517.6 649.7 511.1 654.5 499.5 657.4Z" fill="#793017" stroke="#793017"/><path d="M517.6 649.7 529.2 646.2 522.7 650.6 511.1 654.5Z" fill="#943617" stroke="#943617"/><path d="M529.2 646.2 540.9 642.2 534.3 646.5 522.7 650.6Z" fill="#b13b17" stroke="#b13b17"/><path d="M540.9 642.2 552.5 638.6 545.9 643.1 534.3 646.5Z" fill="#ce4017" stroke="#ce4017"/><path d="M552.5 638.6 564.0 636.3 557.4 641.3 545.9 643.1Z" fill="#e74517" stroke="#e74517"/><path d="M564.0 636.3 575.4 635.8 568.8 641.8 557.4 641.3Z" fill="#f74a17" stroke="#f74a17"/><path d="M575.4 635.8 586.8 637.8 580.1 644.9 568.8 641.8Z" fill="#fd4f17" stroke="#fd4f17"/><path d="M586.8 637.8 598.0 642.1 591.2 650.8 580.1 644.9Z" fill="#f75417" stroke="#f75417"/><path d="M598.0 642.1 609.1 648.8 602.3 659.0 591.2 650.8Z" fill="#e75917" stroke="#e75917"/><path d="M609.1 648.8 620.1 657.1 613.2 668.9 602.3 659.0Z" fill="#cd5e17" stroke="#cd5e17"/><path d="M620.1 657.1 631.1 666.3 624.1 679.6 613.2 668.9Z" fill="#ad6317" stroke="#ad6317"/><path d="M631.1 666.3 642.1 675.6 635.0 690.0 624.1 679.6Z" fill="#8b6917" stroke="#8b6917"/><path d="M642.1 675.6 653.1 684.2 646.0 699.2 635.0 690.0Z" fill="#6c6e17" stroke="#6c6e17"/><path d="M653.1 684.2 664.2 691.4 657.1 706.7 646.0 699.2Z" fill="#537317" stroke="#537317"/><path d="M664.2 691.4 675.3 696.9 668.2 712.2 657.1 706.7Z" fill="#417817" stroke="#417817"/><path d="M675.3 696.9 686.6 700.5 679.5 715.7 668.2 712.2Z" fill="#397d17" stroke="#397d17"/><path d="M686.6 700.5 697.9 702.1 690.8 717.4 679.5 715.7Z" fill="#398217" stroke="#398217"/><path d="M697.9 702.1 709.4 701.8 702.3 717.1 690.8 717.4Z" fill="#418717" stroke="#418717"/><path d="M709.4 701.8 720.9 699.7 713.8 714.7 702.3 717.1Z" fill="#538c17" stroke="#538c17"/><path d="M720.9 699.7 732.5 696.3 725.4 710.7 713.8 714.7Z" fill="#6c9117" stroke="#6c9117"/><path d="M732.5 696.3 744.1 692.1 737.1 705.4 725.4 710.7Z" fill="#8b9617" stroke="#8b9617"/><path d="M744.1 692.1 755.7 688.1 748.8 699.9 737.1 705.4Z" fill="#ad9c17" stroke="#ad9c17"/><path d="M755.7 688.1 767.3 684.9 760.5 695.2 748.8 699.9Z" fill="#cda117" stroke="#cda117"/><path d="M767.3 684.9 778.8 683.5 772.0 692.1 760.5 695.2Z" fill="#e7a617" stroke="#e7a617"/><path d="M778.8 683.5 790.2 684.3 783.5 691.4 772.0 692.1Z" fill="#f7ab17" stroke="#f7ab17"/><path d="M790.2 684.3 801.4 687.5 794.8 693.4 783.5 691.4Z" fill="#fdb017" stroke="#fdb017"/><path d="M801.4 687.5 812.6 693.1 806.0 698.1 794.8 693.4Z" fill="#f7b517" stroke="#f7b517"/><path d="M812.6 693.1 823.7 700.6 817.1 705.1 806.0 698.1Z" fill="#e7ba17" stroke="#e7ba17"/><path d="M823.7 700.6 834.7 709.3 828.1 713.6 817.1 705.1Z" fill="#cebf17" stroke="#cebf17"/><path d="M834.7 709.3 845.6 718.5 839.1 722.9 828.1 713.6Z" fill="#b1c417" stroke="#b1c417"/><path d="M845.6 718.5 856.7 727.2 850.1 732.0 839.1 722.9Z" fill="#94c917" stroke="#94c917"/><path d="M856.7 727.2 867.7 734.8 861.1 740.1 850.1 732.0Z" fill="#79cf17" stroke="#79cf17"/><path d="M867.7 734.8 878.8 740.8 872.2 746.6 861.1 740.1Z" fill="#65d417" stroke="#65d417"/><path d="M878.8 740.8 890.1 744.7 883.4 751.1 872.2 746.6Z" fill="#59d917" stroke="#59d917"/><path d="M890.1 744.7 901.4 746.6 894.7 753.5 883.4 751.1Z" fill="#56de17" stroke="#56de17"/><path d="M901.4 746.6 912.8 746.7 906.1 754.0 894.7 753.5Z" fill="#5ce317" stroke="#5ce317"/><path d="M912.8 746.7 924.3 745.6 917.6 753.0 906.1 754.0Z" fill="#6ae817" stroke="#6ae817"/><path d="M924.3 745.6 935.8 743.7 929.1 751.2 917.6 753.0Z" fill="#7ced17" stroke="#7ced17"/><path d="M935.8 743.7 947.3 742.7 940.6 749.2 929.1 751.2Z" fill="#90f217" stroke="#90f217"/><path d="M947.3 742.7 958.6 745.3 951.9 751.8 940.6 749.2Z" fill="#99f717" stroke="#99f717"/><path d="M958.6 745.3 969.9 747.8 963.3 754.4 951.9 751.8Z" fill="#99fc17" stroke="#99fc17"/><path d="M411.5 612.1 422.8 614.7 416.2 621.2 404.9 618.7Z" fill="#99031c" stroke="#99031c"/><path d="M422.8 614.7 434.1 617.3 427.5 623.8 416.2 621.2Z" fill="#99081c" stroke="#99081c"/><path d="M434.1 617.3 445.3 622.3 438.6 630.0 427.5 623.8Z" fill="#920d1c" stroke="#920d1c"/><path d="M445.3 622.3 456.4 629.4 449.7 637.1 438.6 630.0Z" fill="#81121c" stroke="#81121c"/><path d="M456.4 629.4 467.5 635.9 460.8 643.4 449.7 637.1Z" fill="#6e171c" stroke="#6e171c"/><path d="M467.5 635.9 478.7 641.3 472.0 648.4 460.8 643.4Z" fill="#5f1c1c" stroke="#5f1c1c"/><path d="M478.7 641.3 489.9 645.1 483.3 651.7 472.0 648.4Z" fill="#57211c" stroke="#57211c"/><path d="M489.9 645.1 501.3 647.0 494.6 652.9 483.3 651.7Z" fill="#57261c" stroke="#57261c"/><path d="M501.3 647.0 512.7 647.0 506.1 652.2 494.6 652.9Z" fill="#602b1c" stroke="#602b1c"/><path d="M512.7 647.0 524.2 645.2 517.6 649.7 506.1 652.2Z" fill="#72301c" stroke="#72301c"/><path d="M524.2 645.2 535.8 642.1 529.2 646.2 517.6 649.7Z" fill="#8a361c" stroke="#8a361c"/><path d="M535.8 642.1 547.4 638.4 540.9 642.2 529.2 646.2Z" fill="#a63b1c" stroke="#a63b1c"/><path d="M547.4 638.4 559.0 634.7 552.5 638.6 540.9 642.2Z" fill="#c3401c" stroke="#c3401c"/><path d="M559.0 634.7 570.5 631.9 564.0 636.3 552.5 638.6Z" fill="#dd451c" stroke="#dd451c"/><path d="M570.5 631.9 582.0 630.6 575.4 635.8 564.0 636.3Z" fill="#f14a1c" stroke="#f14a1c"/><path d="M582.0 630.6 593.4 631.3 586.8 637.8 575.4 635.8Z" fill="#fb4f1c" stroke="#fb4f1c"/><path d="M593.4 631.3 604.7 634.1 598.0 642.1 586.8 637.8Z" fill="#fc541c" stroke="#fc541c"/><path d="M604.7 634.1 615.9 639.0 609.1 648.8 598.0 642.1Z" fill="#f3591c" stroke="#f3591c"/><path d="M615.9 639.0 627.0 645.5 620.1 657.1 609.1 648.8Z" fill="#e05e1c" stroke="#e05e1c"/><path d="M627.0 645.5 638.1 653.1 631.1 666.3 620.1 657.1Z" fill="#c8631c" stroke="#c8631c"/><path d="M638.1 653.1 649.1 661.0 642.1 675.6 631.1 666.3Z" fill="#ad691c" stroke="#ad691c"/><path d="M649.1 661.0 660.2 668.5 653.1 684.2 642.1 675.6Z" fill="#936e1c" stroke="#936e1c"/><path d="M660.2 668.5 671.3 675.1 664.2 691.4 653.1 684.2Z" fill="#7c731c" stroke="#7c731c"/><path d="M671.3 675.1 682.5 680.2 675.3 696.9 664.2 691.4Z" fill="#6c781c" stroke="#6c781c"/><path d="M682.5 680.2 693.7 683.6 686.6 700.5 675.3 696.9Z" fill="#647d1c" stroke="#647d1c"/><path d="M693.7 683.6 705.1 685.4 697.9 702.1 686.6 700.5Z" fill="#64821c" stroke="#64821c"/><path d="M705.1 685.4 716.5 685.4 709.4 701.8 697.9 702.1Z" fill="#6c871c" stroke="#6c871c"/><path d="M716.5 685.4 728.0 684.0 720.9 699.7 709.4 701.8Z" fill="#7c8c1c" stroke="#7c8c1c"/><path d="M728.0 684.0 739.5 681.7 732.5 696.3 720.9 699.7Z" fill="#93911c" stroke="#93911c"/><path d="M739.5 681.7 751.1 678.9 744.1 692.1 732.5 696.3Z" fill="#ad961c" stroke="#ad961c"/><path d="M751.1 678.9 762.6 676.5 755.7 688.1 744.1 692.1Z" fill="#c89c1c" stroke="#c89c1c"/><path d="M762.6 676.5 774.1 675.2 767.3 684.9 755.7 688.1Z" fill="#e0a11c" stroke="#e0a11c"/><path d="M774.1 675.2 785.5 675.5 778.8 683.5 767.3 684.9Z" fill="#f3a61c" stroke="#f3a61c"/><path d="M785.5 675.5 796.8 677.8 790.2 684.3 778.8 683.5Z" fill="#fcab1c" stroke="#fcab1c"/><path d="M796.8 677.8 808.0 682.3 801.4 687.5 790.2 684.3Z" fill="#fbb01c" stroke="#fbb01c"/><path d="M808.0 682.3 819.2 688.8 812.6 693.1 801.4 687.5Z" fill="#f1b51c" stroke="#f1b51c"/><path d="M819.2 688.8 830.2 696.7 823.7 700.6 812.6 693.1Z" fill="#ddba1c" stroke="#ddba1c"/><path d="M830.2 696.7 841.2 705.5 834.7 709.3 823.7 700.6Z" fill="#c3bf1c" stroke="#c3bf1c"/><path d="M841.2 705.5 852.2 714.4 845.6 718.5 834.7 709.3Z" fill="#a6c41c" stroke="#a6c41c"/><path d="M852.2 714.4 863.2 722.7 856.7 727.2 845.6 718.5Z" fill="#8ac91c" stroke="#8ac91c"/><path d="M863.2 722.7 874.3 729.7 867.7 734.8 856.7 727.2Z" fill="#72cf1c" stroke="#72cf1c"/><path d="M874.3 729.7 885.5 734.9 878.8 740.8 867.7 734.8Z" fill="#60d41c" stroke="#60d41c"/><path d="M885.5 734.9 896.7 738.1 890.1 744.7 878.8 740.8Z" fill="#57d91c" stroke="#57d91c"/><path d="M896.7 738.1 908.1 739.5 901.4 746.6 890.1 744.7Z" fill="#57de1c" stroke="#57de1c"/><path d="M908.1 739.5 919.5 739.3 912.8 746.7 901.4 746.6Z" fill="#5fe31c" stroke="#5fe31c"/><path d="M919.5 739.3 931.0 737.9 924.3 745.6 912.8 746.7Z" fill="#6ee81c" stroke="#6ee81c"/><path d="M931.0 737.9 942.5 736.0 935.8 743.7 924.3 745.6Z" fill="#81ed1c" stroke="#81ed1c"/><path d="M942.5 736.0 954.0 736.1 947.3 742.7 935.8 743.7Z" fill="#92f21c" stroke="#92f21c"/><path d="M954.0 736.1 965.3 738.7 958.6 745.3 947.3 742.7Z" fill="#99f71c" stroke="#99f71c"/><path d="M965.3 738.7 976.6 741.3 969.9 747.8 958.6 745.3Z" fill="#99fc1c" stroke="#99fc1c"/><path d="M418.2 605.6 429.5 608.2 422.8 614.7 411.5 612.1Z" fill="#990321" stroke="#990321"/><path d="M429.5 608.2 440.8 610.7 434.1 617.3 422.8 614.7Z" fill="#990821" stroke="#990821"/><path d="M440.8 610.7 452.0 614.5 445.3 622.3 434.1 617.3Z" fill="#950d21" stroke="#950d21"/><path d="M452.0 614.5 463.1 621.5 456.4 629.4 445.3 622.3Z" fill="#871221" stroke="#871221"/><path d="M463.1 621.5 474.2 628.2 467.5 635.9 456.4 629.4Z" fill="#731721" stroke="#731721"/><path d="M474.2 628.2 485.4 634.0 478.7 641.3 467.5 635.9Z" fill="#631c21" stroke="#631c21"/><path d="M485.4 634.0 496.6 638.4 489.9 645.1 478.7 641.3Z" fill="#592121" stroke="#592121"/><path d="M496.6 638.4 507.9 641.0 501.3 647.0 489.9 645.1Z" fill="#562621" stroke="#562621"/><path d="M507.9 641.0 519.3 641.7 512.7 647.0 501.3 647.0Z" fill="#5c2b21" stroke="#5c2b21"/><path d="M519.3 641.7 530.8 640.7 524.2 645.2 512.7 647.0Z" fill="#6a3021" stroke="#6a3021"/><path d="M530.8 640.7 542.3 638.3 535.8 642.1 524.2 645.2Z" fill="#7f3621" stroke="#7f3621"/><path d="M542.3 638.3 553.9 635.0 547.4 638.4 535.8 642.1Z" fill="#9a3b21" stroke="#9a3b21"/><path d="M553.9 635.0 565.5 631.4 559.0 634.7 547.4 638.4Z" fill="#b64021" stroke="#b64021"/><path d="M565.5 631.4 577.1 628.3 570.5 631.9 559.0 634.7Z" fill="#d04521" stroke="#d04521"/><path d="M577.1 628.3 588.6 626.3 582.0 630.6 570.5 631.9Z" fill="#e74a21" stroke="#e74a21"/><path d="M588.6 626.3 600.0 625.9 593.4 631.3 582.0 630.6Z" fill="#f64f21" stroke="#f64f21"/><path d="M600.0 625.9 611.4 627.2 604.7 634.1 593.4 631.3Z" fill="#fd5421" stroke="#fd5421"/><path d="M611.4 627.2 622.7 630.4 615.9 639.0 604.7 634.1Z" fill="#fb5921" stroke="#fb5921"/><path d="M622.7 630.4 633.9 635.1 627.0 645.5 615.9 639.0Z" fill="#f15e21" stroke="#f15e21"/><path d="M633.9 635.1 645.0 640.8 638.1 653.1 627.0 645.5Z" fill="#e06321" stroke="#e06321"/><path d="M645.0 640.8 656.1 647.1 649.1 661.0 638.1 653.1Z" fill="#cd6921" stroke="#cd6921"/><path d="M656.1 647.1 667.2 653.4 660.2 668.5 649.1 661.0Z" fill="#b86e21" stroke="#b86e21"/><path d="M667.2 653.4 678.4 659.0 671.3 675.1 660.2 668.5Z" fill="#a77321" stroke="#a77321"/><path d="M678.4 659.0 689.6 663.6 682.5 680.2 671.3 675.1Z" fill="#997821" stroke="#997821"/><path d="M689.6 663.6 700.9 666.8 693.7 683.6 682.5 680.2Z" fill="#937d21" stroke="#937d21"/><path d="M700.9 666.8 712.2 668.7 705.1 685.4 693.7 683.6Z" fill="#938221" stroke="#938221"/><path d="M712.2 668.7 723.6 669.3 716.5 685.4 705.1 685.4Z" fill="#998721" stroke="#998721"/><path d="M723.6 669.3 735.1 668.9 728.0 684.0 716.5 685.4Z" fill="#a78c21" stroke="#a78c21"/><path d="M735.1 668.9 746.5 667.8 739.5 681.7 728.0 684.0Z" fill="#b89121" stroke="#b89121"/><path d="M746.5 667.8 758.0 666.7 751.1 678.9 739.5 681.7Z" fill="#cd9621" stroke="#cd9621"/><path d="M758.0 666.7 769.5 666.1 762.6 676.5 751.1 678.9Z" fill="#e09c21" stroke="#e09c21"/><path d="M769.5 666.1 780.9 666.5 774.1 675.2 762.6 676.5Z" fill="#f1a121" stroke="#f1a121"/><path d="M780.9 666.5 792.2 668.6 785.5 675.5 774.1 675.2Z" fill="#fba621" stroke="#fba621"/><path d="M792.2 668.6 803.4 672.4 796.8 677.8 785.5 675.5Z" fill="#fdab21" stroke="#fdab21"/><path d="M803.4 672.4 814.6 678.0 808.0 682.3 796.8 677.8Z" fill="#f6b021" stroke="#f6b021"/><path d="M814.6 678.0 825.7 685.2 819.2 688.8 808.0 682.3Z" fill="#e7b521" stroke="#e7b521"/><path d="M825.7 685.2 836.7 693.4 830.2 696.7 819.2 688.8Z" fill="#d0ba21" stroke="#d0ba21"/><path d="M836.7 693.4 847.7 702.1 841.2 705.5 830.2 696.7Z" fill="#b6bf21" stroke="#b6bf21"/><path d="M847.7 702.1 858.7 710.6 852.2 714.4 841.2 705.5Z" fill="#9ac421" stroke="#9ac421"/><path d="M858.7 710.6 869.8 718.2 863.2 722.7 852.2 714.4Z" fill="#7fc921" stroke="#7fc921"/><path d="M869.8 718.2 880.9 724.4 874.3 729.7 863.2 722.7Z" fill="#6acf21" stroke="#6acf21"/><path d="M880.9 724.4 892.1 728.8 885.5 734.9 874.3 729.7Z" fill="#5cd421" stroke="#5cd421"/><path d="M892.1 728.8 903.4 731.4 896.7 738.1 885.5 734.9Z" fill="#56d921" stroke="#56d921"/><path d="M903.4 731.4 914.8 732.2 908.1 739.5 896.7 738.1Z" fill="#59de21" stroke="#59de21"/><path d="M914.8 732.2 926.3 731.6 919.5 739.3 908.1 739.5Z" fill="#63e321" stroke="#63e321"/><path d="M926.3 731.6 937.8 730.0 931.0 737.9 919.5 739.3Z" fill="#73e821" stroke="#73e821"/><path d="M937.8 730.0 949.3 728.1 942.5 736.0 931.0 737.9Z" fill="#87ed21" stroke="#87ed21"/><path d="M949.3 728.1 960.6 729.6 954.0 736.1 942.5 736.0Z" fill="#95f221" stroke="#95f221"/><path d="M960.6 729.6 971.9 732.2 965.3 738.7 954.0 736.1Z" fill="#99f721" stroke="#99f721"/><path d="M971.9 732.2 983.2 734.8 976.6 741.3 965.3 738.7Z" fill="#99fc21" stroke="#99fc21"/><path d="M424.9 599.0 436.2 601.6 429.5 608.2 418.2 605.6Z" fill="#990326" stroke="#990326"/><path d="M436.2 601.6 447.5 604.2 440.8 610.7 429.5 608.2Z" fill="#990826" stroke="#990826"/><path d="M447.5 604.2 458.8 606.8 452.0 614.5 440.8 610.7Z" fill="#980d26" stroke="#980d26"/><path d="M458.8 606.8 469.9 613.4 463.1 621.5 452.0 614.5Z" fill="#8d1226" stroke="#8d1226"/><path d="M469.9 613.4 481.0 620.2 474.2 628.2 463.1 621.5Z" fill="#791726" stroke="#791726"/><path d="M481.0 620.2 492.1 626.4 485.4 634.0 474.2 628.2Z" fill="#681c26" stroke="#681c26"/><path d="M492.1 626.4 503.3 631.3 496.6 638.4 485.4 634.0Z" fill="#5c2126" stroke="#5c2126"/><path d="M503.3 631.3 514.5 634.7 507.9 641.0 496.6 638.4Z" fill="#562626" stroke="#562626"/><path d="M514.5 634.7 525.9 636.3 519.3 641.7 507.9 641.0Z" fill="#582b26" stroke="#582b26"/><path d="M525.9 636.3 537.3 636.1 530.8 640.7 519.3 641.7Z" fill="#633026" stroke="#633026"/><path d="M537.3 636.1 548.8 634.5 542.3 638.3 530.8 640.7Z" fill="#753626" stroke="#753626"/><path d="M548.8 634.5 560.4 631.8 553.9 635.0 542.3 638.3Z" fill="#8c3b26" stroke="#8c3b26"/><path d="M560.4 631.8 572.0 628.6 565.5 631.4 553.9 635.0Z" fill="#a64026" stroke="#a64026"/><path d="M572.0 628.6 583.5 625.5 577.1 628.3 565.5 631.4Z" fill="#c14526" stroke="#c14526"/><path d="M583.5 625.5 595.1 623.0 588.6 626.3 577.1 628.3Z" fill="#d94a26" stroke="#d94a26"/><path d="M595.1 623.0 606.6 621.6 600.0 625.9 588.6 626.3Z" fill="#ec4f26" stroke="#ec4f26"/><path d="M606.6 621.6 618.0 621.7 611.4 627.2 600.0 625.9Z" fill="#f85426" stroke="#f85426"/><path d="M618.0 621.7 629.3 623.3 622.7 630.4 611.4 627.2Z" fill="#fd5926" stroke="#fd5926"/><path d="M629.3 623.3 640.6 626.2 633.9 635.1 622.7 630.4Z" fill="#fb5e26" stroke="#fb5e26"/><path d="M640.6 626.2 651.9 630.3 645.0 640.8 633.9 635.1Z" fill="#f36326" stroke="#f36326"/><path d="M651.9 630.3 663.1 635.0 656.1 647.1 645.0 640.8Z" fill="#e76926" stroke="#e76926"/><path d="M663.1 635.0 674.2 639.8 667.2 653.4 656.1 647.1Z" fill="#d96e26" stroke="#d96e26"/><path d="M674.2 639.8 685.4 644.4 678.4 659.0 667.2 653.4Z" fill="#cd7326" stroke="#cd7326"/><path d="M685.4 644.4 696.7 648.4 689.6 663.6 678.4 659.0Z" fill="#c37826" stroke="#c37826"/><path d="M696.7 648.4 708.0 651.4 700.9 666.8 689.6 663.6Z" fill="#be7d26" stroke="#be7d26"/><path d="M708.0 651.4 719.3 653.5 712.2 668.7 700.9 666.8Z" fill="#be8226" stroke="#be8226"/><path d="M719.3 653.5 730.7 654.8 723.6 669.3 712.2 668.7Z" fill="#c38726" stroke="#c38726"/><path d="M730.7 654.8 742.0 655.3 735.1 668.9 723.6 669.3Z" fill="#cd8c26" stroke="#cd8c26"/><path d="M742.0 655.3 753.5 655.6 746.5 667.8 735.1 668.9Z" fill="#d99126" stroke="#d99126"/><path d="M753.5 655.6 764.9 656.1 758.0 666.7 746.5 667.8Z" fill="#e79626" stroke="#e79626"/><path d="M764.9 656.1 776.2 657.2 769.5 666.1 758.0 666.7Z" fill="#f39c26" stroke="#f39c26"/><path d="M776.2 657.2 787.6 659.4 780.9 666.5 769.5 666.1Z" fill="#fba126" stroke="#fba126"/><path d="M787.6 659.4 798.8 663.0 792.2 668.6 780.9 666.5Z" fill="#fda626" stroke="#fda626"/><path d="M798.8 663.0 810.0 668.1 803.4 672.4 792.2 668.6Z" fill="#f8ab26" stroke="#f8ab26"/><path d="M810.0 668.1 821.1 674.7 814.6 678.0 803.4 672.4Z" fill="#ecb026" stroke="#ecb026"/><path d="M821.1 674.7 832.1 682.3 825.7 685.2 814.6 678.0Z" fill="#d9b526" stroke="#d9b526"/><path d="M832.1 682.3 843.2 690.6 836.7 693.4 825.7 685.2Z" fill="#c1ba26" stroke="#c1ba26"/><path d="M843.2 690.6 854.2 699.0 847.7 702.1 836.7 693.4Z" fill="#a6bf26" stroke="#a6bf26"/><path d="M854.2 699.0 865.2 706.9 858.7 710.6 847.7 702.1Z" fill="#8cc426" stroke="#8cc426"/><path d="M865.2 706.9 876.3 713.6 869.8 718.2 858.7 710.6Z" fill="#75c926" stroke="#75c926"/><path d="M876.3 713.6 887.5 718.9 880.9 724.4 869.8 718.2Z" fill="#63cf26" stroke="#63cf26"/><path d="M887.5 718.9 898.8 722.5 892.1 728.8 880.9 724.4Z" fill="#58d426" stroke="#58d426"/><path d="M898.8 722.5 910.1 724.3 903.4 731.4 892.1 728.8Z" fill="#56d926" stroke="#56d926"/><path d="M910.1 724.3 921.5 724.5 914.8 732.2 903.4 731.4Z" fill="#5cde26" stroke="#5cde26"/><path d="M921.5 724.5 933.0 723.6 926.3 731.6 914.8 732.2Z" fill="#68e326" stroke="#68e326"/><path d="M933.0 723.6 944.5 721.9 937.8 730.0 926.3 731.6Z" fill="#79e826" stroke="#79e826"/><path d="M944.5 721.9 956.0 720.5 949.3 728.1 937.8 730.0Z" fill="#8ded26" stroke="#8ded26"/><path d="M956.0 720.5 967.3 723.1 960.6 729.6 949.3 728.1Z" fill="#98f226" stroke="#98f226"/><path d="M967.3 723.1 978.6 725.6 971.9 732.2 960.6 729.6Z" fill="#99f726" stroke="#99f726"/><path d="M978.6 725.6 989.9 728.2 983.2 734.8 971.9 732.2Z" fill="#99fc26" stroke="#99fc26"/><path d="M431.5 592.5 442.8 595.1 436.2 601.6 424.9 599.0Z" fill="#99032b" stroke="#99032b"/><path d="M442.8 595.1 454.1 597.7 447.5 604.2 436.2 601.6Z" fill="#99082b" stroke="#99082b"/><path d="M454.1 597.7 465.4 600.3 458.8 606.8 447.5 604.2Z" fill="#990d2b" stroke="#990d2b"/><path d="M465.4 600.3 476.6 605.1 469.9 613.4 458.8 606.8Z" fill="#92122b" stroke="#92122b"/><path d="M476.6 605.1 487.7 612.0 481.0 620.2 469.9 613.4Z" fill="#81172b" stroke="#81172b"/><path d="M487.7 612.0 498.8 618.4 492.1 626.4 481.0 620.2Z" fill="#6f1c2b" stroke="#6f1c2b"/><path d="M498.8 618.4 510.0 623.8 503.3 631.3 492.1 626.4Z" fill="#60212b" stroke="#60212b"/><path d="M510.0 623.8 521.2 627.9 514.5 634.7 503.3 631.3Z" fill="#58262b" stroke="#58262b"/><path d="M521.2 627.9 532.5 630.5 525.9 636.3 514.5 634.7Z" fill="#562b2b" stroke="#562b2b"/><path d="M532.5 630.5 543.9 631.3 537.3 636.1 525.9 636.3Z" fill="#5d302b" stroke="#5d302b"/><path d="M543.9 631.3 555.4 630.6 548.8 634.5 537.3 636.1Z" fill="#6a362b" stroke="#6a362b"/><path d="M555.4 630.6 566.9 628.7 560.4 631.8 548.8 634.5Z" fill="#7e3b2b" stroke="#7e3b2b"/><path d="M566.9 628.7 578.4 626.1 572.0 628.6 560.4 631.8Z" fill="#96402b" stroke="#96402b"/><path d="M578.4 626.1 590.0 623.2 583.5 625.5 572.0 628.6Z" fill="#af452b" stroke="#af452b"/><path d="M590.0 623.2 601.5 620.5 595.1 623.0 583.5 625.5Z" fill="#c84a2b" stroke="#c84a2b"/><path d="M601.5 620.5 613.1 618.6 606.6 621.6 595.1 623.0Z" fill="#dd4f2b" stroke="#dd4f2b"/><path d="M613.1 618.6 624.5 617.7 618.0 621.7 606.6 621.6Z" fill="#ee542b" stroke="#ee542b"/><path d="M624.5 617.7 635.9 618.0 629.3 623.3 618.0 621.7Z" fill="#f8592b" stroke="#f8592b"/><path d="M635.9 618.0 647.3 619.5 640.6 626.2 629.3 623.3Z" fill="#fd5e2b" stroke="#fd5e2b"/><path d="M647.3 619.5 658.6 621.9 651.9 630.3 640.6 626.2Z" fill="#fc632b" stroke="#fc632b"/><path d="M658.6 621.9 669.9 625.1 663.1 635.0 651.9 630.3Z" fill="#f7692b" stroke="#f7692b"/><path d="M669.9 625.1 681.1 628.7 674.2 639.8 663.1 635.0Z" fill="#f16e2b" stroke="#f16e2b"/><path d="M681.1 628.7 692.4 632.3 685.4 644.4 674.2 639.8Z" fill="#e9732b" stroke="#e9732b"/><path d="M692.4 632.3 703.6 635.6 696.7 648.4 685.4 644.4Z" fill="#e4782b" stroke="#e4782b"/><path d="M703.6 635.6 714.9 638.5 708.0 651.4 696.7 648.4Z" fill="#e07d2b" stroke="#e07d2b"/><path d="M714.9 638.5 726.2 640.8 719.3 653.5 708.0 651.4Z" fill="#e0822b" stroke="#e0822b"/><path d="M726.2 640.8 737.6 642.6 730.7 654.8 719.3 653.5Z" fill="#e4872b" stroke="#e4872b"/><path d="M737.6 642.6 748.9 644.2 742.0 655.3 730.7 654.8Z" fill="#e98c2b" stroke="#e98c2b"/><path d="M748.9 644.2 760.3 645.8 753.5 655.6 742.0 655.3Z" fill="#f1912b" stroke="#f1912b"/><path d="M760.3 645.8 771.6 647.8 764.9 656.1 753.5 655.6Z" fill="#f7962b" stroke="#f7962b"/><path d="M771.6 647.8 782.9 650.5 776.2 657.2 764.9 656.1Z" fill="#fc9c2b" stroke="#fc9c2b"/><path d="M782.9 650.5 794.1 654.1 787.6 659.4 776.2 657.2Z" fill="#fda12b" stroke="#fda12b"/><path d="M794.1 654.1 805.3 659.0 798.8 663.0 787.6 659.4Z" fill="#f8a62b" stroke="#f8a62b"/><path d="M805.3 659.0 816.5 665.1 810.0 668.1 798.8 663.0Z" fill="#eeab2b" stroke="#eeab2b"/><path d="M816.5 665.1 827.6 672.2 821.1 674.7 810.0 668.1Z" fill="#ddb02b" stroke="#ddb02b"/><path d="M827.6 672.2 838.6 680.0 832.1 682.3 821.1 674.7Z" fill="#c8b52b" stroke="#c8b52b"/><path d="M838.6 680.0 849.6 688.1 843.2 690.6 832.1 682.3Z" fill="#afba2b" stroke="#afba2b"/><path d="M849.6 688.1 860.7 695.9 854.2 699.0 843.2 690.6Z" fill="#96bf2b" stroke="#96bf2b"/><path d="M860.7 695.9 871.8 703.0 865.2 706.9 854.2 699.0Z" fill="#7ec42b" stroke="#7ec42b"/><path d="M871.8 703.0 882.9 708.8 876.3 713.6 865.2 706.9Z" fill="#6ac92b" stroke="#6ac92b"/><path d="M882.9 708.8 894.1 713.1 887.5 718.9 876.3 713.6Z" fill="#5dcf2b" stroke="#5dcf2b"/><path d="M894.1 713.1 905.4 715.8 898.8 722.5 887.5 718.9Z" fill="#56d42b" stroke="#56d42b"/><path d="M905.4 715.8 916.8 716.8 910.1 724.3 898.8 722.5Z" fill="#58d92b" stroke="#58d92b"/><path d="M916.8 716.8 928.2 716.5 921.5 724.5 910.1 724.3Z" fill="#60de2b" stroke="#60de2b"/><path d="M928.2 716.5 939.7 715.3 933.0 723.6 921.5 724.5Z" fill="#6fe32b" stroke="#6fe32b"/><path d="M939.7 715.3 951.2 713.6 944.5 721.9 933.0 723.6Z" fill="#81e82b" stroke="#81e82b"/><path d="M951.2 713.6 962.6 713.9 956.0 720.5 944.5 721.9Z" fill="#92ed2b" stroke="#92ed2b"/><path d="M962.6 713.9 973.9 716.5 967.3 723.1 956.0 720.5Z" fill="#99f22b" stroke="#99f22b"/><path d="M973.9 716.5 985.2 719.1 978.6 725.6 967.3 723.1Z" fill="#99f72b" stroke="#99f72b"/><path d="M985.2 719.1 996.5 721.7 989.9 728.2 978.6 725.6Z" fill="#99fc2b" stroke="#99fc2b"/><path d="M438.2 586.0 449.5 588.5 442.8 595.1 431.5 592.5Z" fill="#990330" stroke="#990330"/><path d="M449.5 588.5 460.8 591.1 454.1 597.7 442.8 595.1Z" fill="#990830" stroke="#990830"/><path d="M460.8 591.1 472.1 593.7 465.4 600.3 454.1 597.7Z" fill="#990d30" stroke="#990d30"/><path d="M472.1 593.7 483.4 596.6 476.6 605.1 465.4 600.3Z" fill="#961230" stroke="#961230"/><path d="M483.4 596.6 494.5 603.4 487.7 612.0 476.6 605.1Z" fill="#891730" stroke="#891730"/><path d="M494.5 603.4 505.6 610.0 498.8 618.4 487.7 612.0Z" fill="#771c30" stroke="#771c30"/><path d="M505.6 610.0 516.7 615.9 510.0 623.8 498.8 618.4Z" fill="#672130" stroke="#672130"/><path d="M516.7 615.9 527.9 620.7 521.2 627.9 510.0 623.8Z" fill="#5b2630" stroke="#5b2630"/><path d="M527.9 620.7 539.2 624.2 532.5 630.5 521.2 627.9Z" fill="#562b30" stroke="#562b30"/><path d="M539.2 624.2 550.5 626.0 543.9 631.3 532.5 630.5Z" fill="#583030" stroke="#583030"/><path d="M550.5 626.0 561.9 626.4 555.4 630.6 543.9 631.3Z" fill="#613630" stroke="#613630"/><path d="M561.9 626.4 573.4 625.5 566.9 628.7 555.4 630.6Z" fill="#703b30" stroke="#703b30"/><path d="M573.4 625.5 584.9 623.6 578.4 626.1 566.9 628.7Z" fill="#854030" stroke="#854030"/><path d="M584.9 623.6 596.4 621.2 590.0 623.2 578.4 626.1Z" fill="#9c4530" stroke="#9c4530"/><path d="M596.4 621.2 608.0 618.7 601.5 620.5 590.0 623.2Z" fill="#b34a30" stroke="#b34a30"/><path d="M608.0 618.7 619.5 616.6 613.1 618.6 601.5 620.5Z" fill="#ca4f30" stroke="#ca4f30"/><path d="M619.5 616.6 631.0 615.1 624.5 617.7 613.1 618.6Z" fill="#dd5430" stroke="#dd5430"/><path d="M631.0 615.1 642.5 614.5 635.9 618.0 624.5 617.7Z" fill="#ec5930" stroke="#ec5930"/><path d="M642.5 614.5 653.9 614.8 647.3 619.5 635.9 618.0Z" fill="#f65e30" stroke="#f65e30"/><path d="M653.9 614.8 665.2 616.1 658.6 621.9 647.3 619.5Z" fill="#fb6330" stroke="#fb6330"/><path d="M665.2 616.1 676.6 618.0 669.9 625.1 658.6 621.9Z" fill="#fd6930" stroke="#fd6930"/><path d="M676.6 618.0 687.9 620.5 681.1 628.7 669.9 625.1Z" fill="#fc6e30" stroke="#fc6e30"/><path d="M687.9 620.5 699.2 623.2 692.4 632.3 681.1 628.7Z" fill="#fa7330" stroke="#fa7330"/><path d="M699.2 623.2 710.4 626.0 703.6 635.6 692.4 632.3Z" fill="#f77830" stroke="#f77830"/><path d="M710.4 626.0 721.7 628.7 714.9 638.5 703.6 635.6Z" fill="#f67d30" stroke="#f67d30"/><path d="M721.7 628.7 733.0 631.2 726.2 640.8 714.9 638.5Z" fill="#f68230" stroke="#f68230"/><path d="M733.0 631.2 744.4 633.6 737.6 642.6 726.2 640.8Z" fill="#f78730" stroke="#f78730"/><path d="M744.4 633.6 755.7 636.0 748.9 644.2 737.6 642.6Z" fill="#fa8c30" stroke="#fa8c30"/><path d="M755.7 636.0 767.0 638.7 760.3 645.8 748.9 644.2Z" fill="#fc9130" stroke="#fc9130"/><path d="M767.0 638.7 778.2 641.9 771.6 647.8 760.3 645.8Z" fill="#fd9630" stroke="#fd9630"/><path d="M778.2 641.9 789.5 645.8 782.9 650.5 771.6 647.8Z" fill="#fb9c30" stroke="#fb9c30"/><path d="M789.5 645.8 800.7 650.6 794.1 654.1 782.9 650.5Z" fill="#f6a130" stroke="#f6a130"/><path d="M800.7 650.6 811.8 656.4 805.3 659.0 794.1 654.1Z" fill="#eca630" stroke="#eca630"/><path d="M811.8 656.4 822.9 663.1 816.5 665.1 805.3 659.0Z" fill="#ddab30" stroke="#ddab30"/><path d="M822.9 663.1 834.0 670.4 827.6 672.2 816.5 665.1Z" fill="#cab030" stroke="#cab030"/><path d="M834.0 670.4 845.0 678.0 838.6 680.0 827.6 672.2Z" fill="#b3b530" stroke="#b3b530"/><path d="M845.0 678.0 856.1 685.6 849.6 688.1 838.6 680.0Z" fill="#9cba30" stroke="#9cba30"/><path d="M856.1 685.6 867.2 692.7 860.7 695.9 849.6 688.1Z" fill="#85bf30" stroke="#85bf30"/><path d="M867.2 692.7 878.3 698.8 871.8 703.0 860.7 695.9Z" fill="#70c430" stroke="#70c430"/><path d="M878.3 698.8 889.5 703.5 882.9 708.8 871.8 703.0Z" fill="#61c930" stroke="#61c930"/><path d="M889.5 703.5 900.8 706.8 894.1 713.1 882.9 708.8Z" fill="#58cf30" stroke="#58cf30"/><path d="M900.8 706.8 912.1 708.6 905.4 715.8 894.1 713.1Z" fill="#56d430" stroke="#56d430"/><path d="M912.1 708.6 923.5 709.0 916.8 716.8 905.4 715.8Z" fill="#5bd930" stroke="#5bd930"/><path d="M923.5 709.0 935.0 708.2 928.2 716.5 916.8 716.8Z" fill="#67de30" stroke="#67de30"/><path d="M935.0 708.2 946.5 706.8 939.7 715.3 928.2 716.5Z" fill="#77e330" stroke="#77e330"/><path d="M946.5 706.8 958.0 705.1 951.2 713.6 939.7 715.3Z" fill="#89e830" stroke="#89e830"/><path d="M958.0 705.1 969.3 707.4 962.6 713.9 951.2 713.6Z" fill="#96ed30" stroke="#96ed30"/><path d="M969.3 707.4 980.6 710.0 973.9 716.5 962.6 713.9Z" fill="#99f230" stroke="#99f230"/><path d="M980.6 710.0 991.9 712.6 985.2 719.1 973.9 716.5Z" fill="#99f730" stroke="#99f730"/><path d="M991.9 712.6 1003.2 715.1 996.5 721.7 985.2 719.1Z" fill="#99fc30" stroke="#99fc30"/><path d="M444.8 579.4 456.1 582.0 449.5 588.5 438.2 586.0Z" fill="#990336" stroke="#990336"/><path d="M456.1 582.0 467.4 584.6 460.8 591.1 449.5 588.5Z" fill="#990836" stroke="#990836"/><path d="M467.4 584.6 478.7 587.2 472.1 593.7 460.8 591.1Z" fill="#990d36" stroke="#990d36"/><path d="M478.7 587.2 490.0 589.8 483.4 596.6 472.1 593.7Z" fill="#991236" stroke="#991236"/><path d="M490.0 589.8 501.2 594.7 494.5 603.4 483.4 596.6Z" fill="#911736" stroke="#911736"/><path d="M501.2 594.7 512.3 601.4 505.6 610.0 494.5 603.4Z" fill="#801c36" stroke="#801c36"/><path d="M512.3 601.4 523.4 607.6 516.7 615.9 505.6 610.0Z" fill="#6f2136" stroke="#6f2136"/><path d="M523.4 607.6 534.6 613.0 527.9 620.7 516.7 615.9Z" fill="#612636" stroke="#612636"/><path d="M534.6 613.0 545.8 617.3 539.2 624.2 527.9 620.7Z" fill="#582b36" stroke="#582b36"/><path d="M545.8 617.3 557.1 620.1 550.5 626.0 539.2 624.2Z" fill="#563036" stroke="#563036"/><path d="M557.1 620.1 568.5 621.6 561.9 626.4 550.5 626.0Z" fill="#5a3636" stroke="#5a3636"/><path d="M568.5 621.6 579.9 621.8 573.4 625.5 561.9 626.4Z" fill="#653b36" stroke="#653b36"/><path d="M579.9 621.8 591.4 620.9 584.9 623.6 573.4 625.5Z" fill="#754036" stroke="#754036"/><path d="M591.4 620.9 602.9 619.3 596.4 621.2 584.9 623.6Z" fill="#884536" stroke="#884536"/><path d="M602.9 619.3 614.4 617.3 608.0 618.7 596.4 621.2Z" fill="#9e4a36" stroke="#9e4a36"/><path d="M614.4 617.3 625.9 615.3 619.5 616.6 608.0 618.7Z" fill="#b34f36" stroke="#b34f36"/><path d="M625.9 615.3 637.4 613.6 631.0 615.1 619.5 616.6Z" fill="#c85436" stroke="#c85436"/><path d="M637.4 613.6 648.9 612.5 642.5 614.5 631.0 615.1Z" fill="#d95936" stroke="#d95936"/><path d="M648.9 612.5 660.3 612.2 653.9 614.8 642.5 614.5Z" fill="#e75e36" stroke="#e75e36"/><path d="M660.3 612.2 671.7 612.5 665.2 616.1 653.9 614.8Z" fill="#f16336" stroke="#f16336"/><path d="M671.7 612.5 683.1 613.6 676.6 618.0 665.2 616.1Z" fill="#f76936" stroke="#f76936"/><path d="M683.1 613.6 694.5 615.2 687.9 620.5 676.6 618.0Z" fill="#fb6e36" stroke="#fb6e36"/><path d="M694.5 615.2 705.8 617.3 699.2 623.2 687.9 620.5Z" fill="#fc7336" stroke="#fc7336"/><path d="M705.8 617.3 717.1 619.6 710.4 626.0 699.2 623.2Z" fill="#fd7836" stroke="#fd7836"/><path d="M717.1 619.6 728.4 622.1 721.7 628.7 710.4 626.0Z" fill="#fd7d36" stroke="#fd7d36"/><path d="M728.4 622.1 739.7 624.8 733.0 631.2 721.7 628.7Z" fill="#fd8236" stroke="#fd8236"/><path d="M739.7 624.8 751.0 627.6 744.4 633.6 733.0 631.2Z" fill="#fd8736" stroke="#fd8736"/><path d="M751.0 627.6 762.3 630.7 755.7 636.0 744.4 633.6Z" fill="#fc8c36" stroke="#fc8c36"/><path d="M762.3 630.7 773.5 634.3 767.0 638.7 755.7 636.0Z" fill="#fb9136" stroke="#fb9136"/><path d="M773.5 634.3 784.7 638.4 778.2 641.9 767.0 638.7Z" fill="#f79636" stroke="#f79636"/><path d="M784.7 638.4 795.9 643.2 789.5 645.8 778.2 641.9Z" fill="#f19c36" stroke="#f19c36"/><path d="M795.9 643.2 807.1 648.7 800.7 650.6 789.5 645.8Z" fill="#e7a136" stroke="#e7a136"/><path d="M807.1 648.7 818.2 654.9 811.8 656.4 800.7 650.6Z" fill="#d9a636" stroke="#d9a636"/><path d="M818.2 654.9 829.3 661.8 822.9 663.1 811.8 656.4Z" fill="#c8ab36" stroke="#c8ab36"/><path d="M829.3 661.8 840.4 668.9 834.0 670.4 822.9 663.1Z" fill="#b3b036" stroke="#b3b036"/><path d="M840.4 668.9 851.5 676.1 845.0 678.0 834.0 670.4Z" fill="#9eb536" stroke="#9eb536"/><path d="M851.5 676.1 862.6 682.9 856.1 685.6 845.0 678.0Z" fill="#88ba36" stroke="#88ba36"/><path d="M862.6 682.9 873.7 689.0 867.2 692.7 856.1 685.6Z" fill="#75bf36" stroke="#75bf36"/><path d="M873.7 689.0 884.9 694.0 878.3 698.8 867.2 692.7Z" fill="#65c436" stroke="#65c436"/><path d="M884.9 694.0 896.1 697.7 889.5 703.5 878.3 698.8Z" fill="#5ac936" stroke="#5ac936"/><path d="M896.1 697.7 907.4 699.9 900.8 706.8 889.5 703.5Z" fill="#56cf36" stroke="#56cf36"/><path d="M907.4 699.9 918.8 700.9 912.1 708.6 900.8 706.8Z" fill="#58d436" stroke="#58d436"/><path d="M918.8 700.9 930.3 700.6 923.5 709.0 912.1 708.6Z" fill="#61d936" stroke="#61d936"/><path d="M930.3 700.6 941.7 699.5 935.0 708.2 923.5 709.0Z" fill="#6fde36" stroke="#6fde36"/><path d="M941.7 699.5 953.2 698.0 946.5 706.8 935.0 708.2Z" fill="#80e336" stroke="#80e336"/><path d="M953.2 698.0 964.7 698.3 958.0 705.1 946.5 706.8Z" fill="#91e836" stroke="#91e836"/><path d="M964.7 698.3 976.0 700.8 969.3 707.4 958.0 705.1Z" fill="#99ed36" stroke="#99ed36"/><path d="M976.0 700.8 987.3 703.4 980.6 710.0 969.3 707.4Z" fill="#99f236" stroke="#99f236"/><path d="M987.3 703.4 998.6 706.0 991.9 712.6 980.6 710.0Z" fill="#99f736" stroke="#99f736"/><path d="M998.6 706.0 1009.9 708.6 1003.2 715.1 991.9 712.6Z" fill="#99fc36" stroke="#99fc36"/><path d="M451.5 572.9 462.8 575.5 456.1 582.0 444.8 579.4Z" fill="#99033b" stroke="#99033b"/><path d="M462.8 575.5 474.1 578.0 467.4 584.6 456.1 582.0Z" fill="#99083b" stroke="#99083b"/><path d="M474.1 578.0 485.4 580.6 478.7 587.2 467.4 584.6Z" fill="#990d3b" stroke="#990d3b"/><path d="M485.4 580.6 496.7 583.2 490.0 589.8 478.7 587.2Z" fill="#99123b" stroke="#99123b"/><path d="M496.7 583.2 508.0 585.8 501.2 594.7 490.0 589.8Z" fill="#96173b" stroke="#96173b"/><path d="M508.0 585.8 519.1 592.4 512.3 601.4 501.2 594.7Z" fill="#8a1c3b" stroke="#8a1c3b"/><path d="M519.1 592.4 530.2 598.8 523.4 607.6 512.3 601.4Z" fill="#78213b" stroke="#78213b"/><path d="M530.2 598.8 541.4 604.7 534.6 613.0 523.4 607.6Z" fill="#69263b" stroke="#69263b"/><path d="M541.4 604.7 552.5 609.7 545.8 617.3 534.6 613.0Z" fill="#5d2b3b" stroke="#5d2b3b"/><path d="M552.5 609.7 563.8 613.5 557.1 620.1 545.8 617.3Z" fill="#57303b" stroke="#57303b"/><path d="M563.8 613.5 575.1 616.1 568.5 621.6 557.1 620.1Z" fill="#56363b" stroke="#56363b"/><path d="M575.1 616.1 586.4 617.4 579.9 621.8 568.5 621.6Z" fill="#5c3b3b" stroke="#5c3b3b"/><path d="M586.4 617.4 597.9 617.6 591.4 620.9 579.9 621.8Z" fill="#67403b" stroke="#67403b"/><path d="M597.9 617.6 609.3 616.9 602.9 619.3 591.4 620.9Z" fill="#76453b" stroke="#76453b"/><path d="M609.3 616.9 620.8 615.7 614.4 617.3 602.9 619.3Z" fill="#884a3b" stroke="#884a3b"/><path d="M620.8 615.7 632.3 614.2 625.9 615.3 614.4 617.3Z" fill="#9c4f3b" stroke="#9c4f3b"/><path d="M632.3 614.2 643.8 612.8 637.4 613.6 625.9 615.3Z" fill="#af543b" stroke="#af543b"/><path d="M643.8 612.8 655.3 611.6 648.9 612.5 637.4 613.6Z" fill="#c1593b" stroke="#c1593b"/><path d="M655.3 611.6 666.7 611.0 660.3 612.2 648.9 612.5Z" fill="#d05e3b" stroke="#d05e3b"/><path d="M666.7 611.0 678.2 610.9 671.7 612.5 660.3 612.2Z" fill="#dd633b" stroke="#dd633b"/><path d="M678.2 610.9 689.6 611.4 683.1 613.6 671.7 612.5Z" fill="#e7693b" stroke="#e7693b"/><path d="M689.6 611.4 700.9 612.5 694.5 615.2 683.1 613.6Z" fill="#ee6e3b" stroke="#ee6e3b"/><path d="M700.9 612.5 712.3 614.1 705.8 617.3 694.5 615.2Z" fill="#f2733b" stroke="#f2733b"/><path d="M712.3 614.1 723.6 616.1 717.1 619.6 705.8 617.3Z" fill="#f5783b" stroke="#f5783b"/><path d="M723.6 616.1 734.9 618.5 728.4 622.1 717.1 619.6Z" fill="#f67d3b" stroke="#f67d3b"/><path d="M734.9 618.5 746.2 621.3 739.7 624.8 728.4 622.1Z" fill="#f6823b" stroke="#f6823b"/><path d="M746.2 621.3 757.5 624.5 751.0 627.6 739.7 624.8Z" fill="#f5873b" stroke="#f5873b"/><path d="M757.5 624.5 768.7 628.0 762.3 630.7 751.0 627.6Z" fill="#f28c3b" stroke="#f28c3b"/><path d="M768.7 628.0 780.0 632.1 773.5 634.3 762.3 630.7Z" fill="#ee913b" stroke="#ee913b"/><path d="M780.0 632.1 791.2 636.7 784.7 638.4 773.5 634.3Z" fill="#e7963b" stroke="#e7963b"/><path d="M791.2 636.7 802.3 642.0 795.9 643.2 784.7 638.4Z" fill="#dd9c3b" stroke="#dd9c3b"/><path d="M802.3 642.0 813.5 647.8 807.1 648.7 795.9 643.2Z" fill="#d0a13b" stroke="#d0a13b"/><path d="M813.5 647.8 824.6 654.1 818.2 654.9 807.1 648.7Z" fill="#c1a63b" stroke="#c1a63b"/><path d="M824.6 654.1 835.7 660.7 829.3 661.8 818.2 654.9Z" fill="#afab3b" stroke="#afab3b"/><path d="M835.7 660.7 846.8 667.4 840.4 668.9 829.3 661.8Z" fill="#9cb03b" stroke="#9cb03b"/><path d="M846.8 667.4 857.9 673.8 851.5 676.1 840.4 668.9Z" fill="#88b53b" stroke="#88b53b"/><path d="M857.9 673.8 869.1 679.6 862.6 682.9 851.5 676.1Z" fill="#76ba3b" stroke="#76ba3b"/><path d="M869.1 679.6 880.3 684.6 873.7 689.0 862.6 682.9Z" fill="#67bf3b" stroke="#67bf3b"/><path d="M880.3 684.6 891.5 688.4 884.9 694.0 873.7 689.0Z" fill="#5cc43b" stroke="#5cc43b"/><path d="M891.5 688.4 902.8 691.0 896.1 697.7 884.9 694.0Z" fill="#56c93b" stroke="#56c93b"/><path d="M902.8 691.0 914.2 692.4 907.4 699.9 896.1 697.7Z" fill="#57cf3b" stroke="#57cf3b"/><path d="M914.2 692.4 925.6 692.6 918.8 700.9 907.4 699.9Z" fill="#5dd43b" stroke="#5dd43b"/><path d="M925.6 692.6 937.0 691.8 930.3 700.6 918.8 700.9Z" fill="#69d93b" stroke="#69d93b"/><path d="M937.0 691.8 948.5 690.6 941.7 699.5 930.3 700.6Z" fill="#78de3b" stroke="#78de3b"/><path d="M948.5 690.6 960.0 689.2 953.2 698.0 941.7 699.5Z" fill="#8ae33b" stroke="#8ae33b"/><path d="M960.0 689.2 971.3 691.7 964.7 698.3 953.2 698.0Z" fill="#96e83b" stroke="#96e83b"/><path d="M971.3 691.7 982.6 694.3 976.0 700.8 964.7 698.3Z" fill="#99ed3b" stroke="#99ed3b"/><path d="M982.6 694.3 993.9 696.9 987.3 703.4 976.0 700.8Z" fill="#99f23b" stroke="#99f23b"/><path d="M993.9 696.9 1005.2 699.5 998.6 706.0 987.3 703.4Z" fill="#99f73b" stroke="#99f73b"/><path d="M1005.2 699.5 1016.5 702.1 1009.9 708.6 998.6 706.0Z" fill="#99fc3b" stroke="#99fc3b"/><path d="M458.1 566.3 469.4 568.9 462.8 575.5 451.5 572.9Z" fill="#990340" stroke="#990340"/><path d="M469.4 568.9 480.7 571.5 474.1 578.0 462.8 575.5Z" fill="#990840" stroke="#990840"/><path d="M480.7 571.5 492.0 574.1 485.4 580.6 474.1 578.0Z" fill="#990d40" stroke="#990d40"/><path d="M492.0 574.1 503.4 576.7 496.7 583.2 485.4 580.6Z" fill="#991240" stroke="#991240"/><path d="M503.4 576.7 514.7 579.3 508.0 585.8 496.7 583.2Z" fill="#991740" stroke="#991740"/><path d="M514.7 579.3 525.9 583.3 519.1 592.4 508.0 585.8Z" fill="#931c40" stroke="#931c40"/><path d="M525.9 583.3 537.0 589.7 530.2 598.8 519.1 592.4Z" fill="#842140" stroke="#842140"/><path d="M537.0 589.7 548.1 595.9 541.4 604.7 530.2 598.8Z" fill="#732640" stroke="#732640"/><path d="M548.1 595.9 559.3 601.4 552.5 609.7 541.4 604.7Z" fill="#652b40" stroke="#652b40"/><path d="M559.3 601.4 570.5 606.1 563.8 613.5 552.5 609.7Z" fill="#5b3040" stroke="#5b3040"/><path d="M570.5 606.1 581.7 609.6 575.1 616.1 563.8 613.5Z" fill="#563640" stroke="#563640"/><path d="M581.7 609.6 593.0 612.1 586.4 617.4 575.1 616.1Z" fill="#573b40" stroke="#573b40"/><path d="M593.0 612.1 604.4 613.4 597.9 617.6 586.4 617.4Z" fill="#5d4040" stroke="#5d4040"/><path d="M604.4 613.4 615.8 613.9 609.3 616.9 597.9 617.6Z" fill="#674540" stroke="#674540"/><path d="M615.8 613.9 627.2 613.6 620.8 615.7 609.3 616.9Z" fill="#754a40" stroke="#754a40"/><path d="M627.2 613.6 638.7 612.9 632.3 614.2 620.8 615.7Z" fill="#854f40" stroke="#854f40"/><path d="M638.7 612.9 650.2 612.0 643.8 612.8 632.3 614.2Z" fill="#965440" stroke="#965440"/><path d="M650.2 612.0 661.6 611.2 655.3 611.6 643.8 612.8Z" fill="#a65940" stroke="#a65940"/><path d="M661.6 611.2 673.1 610.7 666.7 611.0 655.3 611.6Z" fill="#b65e40" stroke="#b65e40"/><path d="M673.1 610.7 684.5 610.5 678.2 610.9 666.7 611.0Z" fill="#c36340" stroke="#c36340"/><path d="M684.5 610.5 695.9 610.9 689.6 611.4 678.2 610.9Z" fill="#ce6940" stroke="#ce6940"/><path d="M695.9 610.9 707.3 611.7 700.9 612.5 689.6 611.4Z" fill="#d76e40" stroke="#d76e40"/><path d="M707.3 611.7 718.7 613.1 712.3 614.1 700.9 612.5Z" fill="#dd7340" stroke="#dd7340"/><path d="M718.7 613.1 730.0 614.9 723.6 616.1 712.3 614.1Z" fill="#e17840" stroke="#e17840"/><path d="M730.0 614.9 741.3 617.3 734.9 618.5 723.6 616.1Z" fill="#e37d40" stroke="#e37d40"/><path d="M741.3 617.3 752.6 620.1 746.2 621.3 734.9 618.5Z" fill="#e38240" stroke="#e38240"/><path d="M752.6 620.1 763.9 623.4 757.5 624.5 746.2 621.3Z" fill="#e18740" stroke="#e18740"/><path d="M763.9 623.4 775.1 627.2 768.7 628.0 757.5 624.5Z" fill="#dd8c40" stroke="#dd8c40"/><path d="M775.1 627.2 786.3 631.5 780.0 632.1 768.7 628.0Z" fill="#d79140" stroke="#d79140"/><path d="M786.3 631.5 797.5 636.4 791.2 636.7 780.0 632.1Z" fill="#ce9640" stroke="#ce9640"/><path d="M797.5 636.4 808.7 641.7 802.3 642.0 791.2 636.7Z" fill="#c39c40" stroke="#c39c40"/><path d="M808.7 641.7 819.8 647.4 813.5 647.8 802.3 642.0Z" fill="#b6a140" stroke="#b6a140"/><path d="M819.8 647.4 831.0 653.4 824.6 654.1 813.5 647.8Z" fill="#a6a640" stroke="#a6a640"/><path d="M831.0 653.4 842.1 659.4 835.7 660.7 824.6 654.1Z" fill="#96ab40" stroke="#96ab40"/><path d="M842.1 659.4 853.2 665.3 846.8 667.4 835.7 660.7Z" fill="#85b040" stroke="#85b040"/><path d="M853.2 665.3 864.4 670.7 857.9 673.8 846.8 667.4Z" fill="#75b540" stroke="#75b540"/><path d="M864.4 670.7 875.6 675.4 869.1 679.6 857.9 673.8Z" fill="#67ba40" stroke="#67ba40"/><path d="M875.6 675.4 886.9 679.2 880.3 684.6 869.1 679.6Z" fill="#5dbf40" stroke="#5dbf40"/><path d="M886.9 679.2 898.1 682.0 891.5 688.4 880.3 684.6Z" fill="#57c440" stroke="#57c440"/><path d="M898.1 682.0 909.5 683.6 902.8 691.0 891.5 688.4Z" fill="#56c940" stroke="#56c940"/><path d="M909.5 683.6 920.9 684.1 914.2 692.4 902.8 691.0Z" fill="#5bcf40" stroke="#5bcf40"/><path d="M920.9 684.1 932.3 683.7 925.6 692.6 914.2 692.4Z" fill="#65d440" stroke="#65d440"/><path d="M932.3 683.7 943.8 682.7 937.0 691.8 925.6 692.6Z" fill="#73d940" stroke="#73d940"/><path d="M943.8 682.7 955.3 681.5 948.5 690.6 937.0 691.8Z" fill="#84de40" stroke="#84de40"/><path d="M955.3 681.5 966.7 682.6 960.0 689.2 948.5 690.6Z" fill="#93e340" stroke="#93e340"/><path d="M966.7 682.6 978.0 685.2 971.3 691.7 960.0 689.2Z" fill="#99e840" stroke="#99e840"/><path d="M978.0 685.2 989.3 687.8 982.6 694.3 971.3 691.7Z" fill="#99ed40" stroke="#99ed40"/><path d="M989.3 687.8 1000.6 690.4 993.9 696.9 982.6 694.3Z" fill="#99f240" stroke="#99f240"/><path d="M1000.6 690.4 1011.9 692.9 1005.2 699.5 993.9 696.9Z" fill="#99f740" stroke="#99f740"/><path d="M1011.9 692.9 1023.2 695.5 1016.5 702.1 1005.2 699.5Z" fill="#99fc40" stroke="#99fc40"/><path d="M464.8 559.8 476.1 562.4 469.4 568.9 458.1 566.3Z" fill="#990345" stroke="#990345"/><path d="M476.1 562.4 487.4 565.0 480.7 571.5 469.4 568.9Z" fill="#990845" stroke="#990845"/><path d="M487.4 565.0 498.7 567.6 492.0 574.1 480.7 571.5Z" fill="#990d45" stroke="#990d45"/><path d="M498.7 567.6 510.0 570.1 503.4 576.7 492.0 574.1Z" fill="#991245" stroke="#991245"/><path d="M510.0 570.1 521.3 572.7 514.7 579.3 503.4 576.7Z" fill="#991745" stroke="#991745"/><path d="M521.3 572.7 532.6 575.3 525.9 583.3 514.7 579.3Z" fill="#971c45" stroke="#971c45"/><path d="M532.6 575.3 543.8 580.4 537.0 589.7 525.9 583.3Z" fill="#8e2145" stroke="#8e2145"/><path d="M543.8 580.4 554.9 586.6 548.1 595.9 537.0 589.7Z" fill="#7f2645" stroke="#7f2645"/><path d="M554.9 586.6 566.1 592.5 559.3 601.4 548.1 595.9Z" fill="#702b45" stroke="#702b45"/><path d="M566.1 592.5 577.2 597.8 570.5 606.1 559.3 601.4Z" fill="#633045" stroke="#633045"/><path d="M577.2 597.8 588.4 602.2 581.7 609.6 570.5 606.1Z" fill="#5a3645" stroke="#5a3645"/><path d="M588.4 602.2 599.7 605.7 593.0 612.1 581.7 609.6Z" fill="#563b45" stroke="#563b45"/><path d="M599.7 605.7 611.0 608.2 604.4 613.4 593.0 612.1Z" fill="#574045" stroke="#574045"/><path d="M611.0 608.2 622.3 609.8 615.8 613.9 604.4 613.4Z" fill="#5c4545" stroke="#5c4545"/><path d="M622.3 609.8 633.7 610.6 627.2 613.6 615.8 613.9Z" fill="#654a45" stroke="#654a45"/><path d="M633.7 610.6 645.1 610.9 638.7 612.9 627.2 613.6Z" fill="#704f45" stroke="#704f45"/><path d="M645.1 610.9 656.6 610.8 650.2 612.0 638.7 612.9Z" fill="#7e5445" stroke="#7e5445"/><path d="M656.6 610.8 668.0 610.6 661.6 611.2 650.2 612.0Z" fill="#8c5945" stroke="#8c5945"/><path d="M668.0 610.6 679.4 610.4 673.1 610.7 661.6 611.2Z" fill="#9a5e45" stroke="#9a5e45"/><path d="M679.4 610.4 690.9 610.6 684.5 610.5 673.1 610.7Z" fill="#a66345" stroke="#a66345"/><path d="M690.9 610.6 702.3 611.0 695.9 610.9 684.5 610.5Z" fill="#b16945" stroke="#b16945"/><path d="M702.3 611.0 713.6 611.9 707.3 611.7 695.9 610.9Z" fill="#ba6e45" stroke="#ba6e45"/><path d="M713.6 611.9 725.0 613.2 718.7 613.1 707.3 611.7Z" fill="#c17345" stroke="#c17345"/><path d="M725.0 613.2 736.3 615.1 730.0 614.9 718.7 613.1Z" fill="#c57845" stroke="#c57845"/><path d="M736.3 615.1 747.7 617.4 741.3 617.3 730.0 614.9Z" fill="#c87d45" stroke="#c87d45"/><path d="M747.7 617.4 758.9 620.2 752.6 620.1 741.3 617.3Z" fill="#c88245" stroke="#c88245"/><path d="M758.9 620.2 770.2 623.6 763.9 623.4 752.6 620.1Z" fill="#c58745" stroke="#c58745"/><path d="M770.2 623.6 781.4 627.4 775.1 627.2 763.9 623.4Z" fill="#c18c45" stroke="#c18c45"/><path d="M781.4 627.4 792.7 631.7 786.3 631.5 775.1 627.2Z" fill="#ba9145" stroke="#ba9145"/><path d="M792.7 631.7 803.9 636.4 797.5 636.4 786.3 631.5Z" fill="#b19645" stroke="#b19645"/><path d="M803.9 636.4 815.0 641.5 808.7 641.7 797.5 636.4Z" fill="#a69c45" stroke="#a69c45"/><path d="M815.0 641.5 826.2 646.7 819.8 647.4 808.7 641.7Z" fill="#9aa145" stroke="#9aa145"/><path d="M826.2 646.7 837.4 652.1 831.0 653.4 819.8 647.4Z" fill="#8ca645" stroke="#8ca645"/><path d="M837.4 652.1 848.5 657.4 842.1 659.4 831.0 653.4Z" fill="#7eab45" stroke="#7eab45"/><path d="M848.5 657.4 859.7 662.3 853.2 665.3 842.1 659.4Z" fill="#70b045" stroke="#70b045"/><path d="M859.7 662.3 871.0 666.6 864.4 670.7 853.2 665.3Z" fill="#65b545" stroke="#65b545"/><path d="M871.0 666.6 882.2 670.2 875.6 675.4 864.4 670.7Z" fill="#5cba45" stroke="#5cba45"/><path d="M882.2 670.2 893.5 672.8 886.9 679.2 875.6 675.4Z" fill="#57bf45" stroke="#57bf45"/><path d="M893.5 672.8 904.8 674.5 898.1 682.0 886.9 679.2Z" fill="#56c445" stroke="#56c445"/><path d="M904.8 674.5 916.2 675.3 909.5 683.6 898.1 682.0Z" fill="#5ac945" stroke="#5ac945"/><path d="M916.2 675.3 927.7 675.2 920.9 684.1 909.5 683.6Z" fill="#63cf45" stroke="#63cf45"/><path d="M927.7 675.2 939.1 674.4 932.3 683.7 920.9 684.1Z" fill="#70d445" stroke="#70d445"/><path d="M939.1 674.4 950.6 673.4 943.8 682.7 932.3 683.7Z" fill="#7fd945" stroke="#7fd945"/><path d="M950.6 673.4 962.0 673.5 955.3 681.5 943.8 682.7Z" fill="#8ede45" stroke="#8ede45"/><path d="M962.0 673.5 973.3 676.1 966.7 682.6 955.3 681.5Z" fill="#97e345" stroke="#97e345"/><path d="M973.3 676.1 984.6 678.6 978.0 685.2 966.7 682.6Z" fill="#99e845" stroke="#99e845"/><path d="M984.6 678.6 995.9 681.2 989.3 687.8 978.0 685.2Z" fill="#99ed45" stroke="#99ed45"/><path d="M995.9 681.2 1007.2 683.8 1000.6 690.4 989.3 687.8Z" fill="#99f245" stroke="#99f245"/><path d="M1007.2 683.8 1018.5 686.4 1011.9 692.9 1000.6 690.4Z" fill="#99f745" stroke="#99f745"/><path d="M1018.5 686.4 1029.8 689.0 1023.2 695.5 1011.9 692.9Z" fill="#99fc45" stroke="#99fc45"/><path d="M471.5 553.3 482.8 555.8 476.1 562.4 464.8 559.8Z" fill="#99034a" stroke="#99034a"/><path d="M482.8 555.8 494.1 558.4 487.4 565.0 476.1 562.4Z" fill="#99084a" stroke="#99084a"/><path d="M494.1 558.4 505.4 561.0 498.7 567.6 487.4 565.0Z" fill="#990d4a" stroke="#990d4a"/><path d="M505.4 561.0 516.7 563.6 510.0 570.1 498.7 567.6Z" fill="#99124a" stroke="#99124a"/><path d="M516.7 563.6 528.0 566.2 521.3 572.7 510.0 570.1Z" fill="#99174a" stroke="#99174a"/><path d="M528.0 566.2 539.3 568.8 532.6 575.3 521.3 572.7Z" fill="#991c4a" stroke="#991c4a"/><path d="M539.3 568.8 550.6 571.3 543.8 580.4 532.6 575.3Z" fill="#96214a" stroke="#96214a"/><path d="M550.6 571.3 561.7 577.0 554.9 586.6 543.8 580.4Z" fill="#8c264a" stroke="#8c264a"/><path d="M561.7 577.0 572.9 583.1 566.1 592.5 554.9 586.6Z" fill="#7c2b4a" stroke="#7c2b4a"/><path d="M572.9 583.1 584.0 588.7 577.2 597.8 566.1 592.5Z" fill="#6e304a" stroke="#6e304a"/><path d="M584.0 588.7 595.2 593.8 588.4 602.2 577.2 597.8Z" fill="#62364a" stroke="#62364a"/><path d="M595.2 593.8 606.4 598.1 599.7 605.7 588.4 602.2Z" fill="#5a3b4a" stroke="#5a3b4a"/><path d="M606.4 598.1 617.7 601.6 611.0 608.2 599.7 605.7Z" fill="#56404a" stroke="#56404a"/><path d="M617.7 601.6 628.9 604.3 622.3 609.8 611.0 608.2Z" fill="#56454a" stroke="#56454a"/><path d="M628.9 604.3 640.3 606.3 633.7 610.6 622.3 609.8Z" fill="#5a4a4a" stroke="#5a4a4a"/><path d="M640.3 606.3 651.6 607.6 645.1 610.9 633.7 610.6Z" fill="#614f4a" stroke="#614f4a"/><path d="M651.6 607.6 663.0 608.4 656.6 610.8 645.1 610.9Z" fill="#6a544a" stroke="#6a544a"/><path d="M663.0 608.4 674.4 609.1 668.0 610.6 656.6 610.8Z" fill="#75594a" stroke="#75594a"/><path d="M674.4 609.1 685.8 609.6 679.4 610.4 668.0 610.6Z" fill="#7f5e4a" stroke="#7f5e4a"/><path d="M685.8 609.6 697.2 610.2 690.9 610.6 679.4 610.4Z" fill="#8a634a" stroke="#8a634a"/><path d="M697.2 610.2 708.6 611.0 702.3 611.0 690.9 610.6Z" fill="#94694a" stroke="#94694a"/><path d="M708.6 611.0 720.0 612.1 713.6 611.9 702.3 611.0Z" fill="#9c6e4a" stroke="#9c6e4a"/><path d="M720.0 612.1 731.3 613.6 725.0 613.2 713.6 611.9Z" fill="#a2734a" stroke="#a2734a"/><path d="M731.3 613.6 742.7 615.5 736.3 615.1 725.0 613.2Z" fill="#a6784a" stroke="#a6784a"/><path d="M742.7 615.5 754.0 617.9 747.7 617.4 736.3 615.1Z" fill="#a87d4a" stroke="#a87d4a"/><path d="M754.0 617.9 765.3 620.7 758.9 620.2 747.7 617.4Z" fill="#a8824a" stroke="#a8824a"/><path d="M765.3 620.7 776.5 623.9 770.2 623.6 758.9 620.2Z" fill="#a6874a" stroke="#a6874a"/><path d="M776.5 623.9 787.8 627.6 781.4 627.4 770.2 623.6Z" fill="#a28c4a" stroke="#a28c4a"/><path d="M787.8 627.6 799.0 631.7 792.7 631.7 781.4 627.4Z" fill="#9c914a" stroke="#9c914a"/><path d="M799.0 631.7 810.2 636.0 803.9 636.4 792.7 631.7Z" fill="#94964a" stroke="#94964a"/><path d="M810.2 636.0 821.4 640.6 815.0 641.5 803.9 636.4Z" fill="#8a9c4a" stroke="#8a9c4a"/><path d="M821.4 640.6 832.6 645.2 826.2 646.7 815.0 641.5Z" fill="#7fa14a" stroke="#7fa14a"/><path d="M832.6 645.2 843.8 649.8 837.4 652.1 826.2 646.7Z" fill="#75a64a" stroke="#75a64a"/><path d="M843.8 649.8 855.0 654.1 848.5 657.4 837.4 652.1Z" fill="#6aab4a" stroke="#6aab4a"/><path d="M855.0 654.1 866.3 657.9 859.7 662.3 848.5 657.4Z" fill="#61b04a" stroke="#61b04a"/><path d="M866.3 657.9 877.6 661.2 871.0 666.6 859.7 662.3Z" fill="#5ab54a" stroke="#5ab54a"/><path d="M877.6 661.2 888.9 663.6 882.2 670.2 871.0 666.6Z" fill="#56ba4a" stroke="#56ba4a"/><path d="M888.9 663.6 900.2 665.3 893.5 672.8 882.2 670.2Z" fill="#56bf4a" stroke="#56bf4a"/><path d="M900.2 665.3 911.6 666.1 904.8 674.5 893.5 672.8Z" fill="#5ac44a" stroke="#5ac44a"/><path d="M911.6 666.1 923.0 666.2 916.2 675.3 904.8 674.5Z" fill="#62c94a" stroke="#62c94a"/><path d="M923.0 666.2 934.5 665.7 927.7 675.2 916.2 675.3Z" fill="#6ecf4a" stroke="#6ecf4a"/><path d="M934.5 665.7 945.9 664.9 939.1 674.4 927.7 675.2Z" fill="#7cd44a" stroke="#7cd44a"/><path d="M945.9 664.9 957.4 664.4 950.6 673.4 939.1 674.4Z" fill="#8cd94a" stroke="#8cd94a"/><path d="M957.4 664.4 968.7 666.9 962.0 673.5 950.6 673.4Z" fill="#96de4a" stroke="#96de4a"/><path d="M968.7 666.9 980.0 669.5 973.3 676.1 962.0 673.5Z" fill="#99e34a" stroke="#99e34a"/><path d="M980.0 669.5 991.3 672.1 984.6 678.6 973.3 676.1Z" fill="#99e84a" stroke="#99e84a"/><path d="M991.3 672.1 1002.6 674.7 995.9 681.2 984.6 678.6Z" fill="#99ed4a" stroke="#99ed4a"/><path d="M1002.6 674.7 1013.9 677.3 1007.2 683.8 995.9 681.2Z" fill="#99f24a" stroke="#99f24a"/><path d="M1013.9 677.3 1025.2 679.9 1018.5 686.4 1007.2 683.8Z" fill="#99f74a" stroke="#99f74a"/><path d="M1025.2 679.9 1036.5 682.4 1029.8 689.0 1018.5 686.4Z" fill="#99fc4a" stroke="#99fc4a"/><path d="M478.1 546.7 489.4 549.3 482.8 555.8 471.5 553.3Z" fill="#99034f" stroke="#99034f"/><path d="M489.4 549.3 500.7 551.9 494.1 558.4 482.8 555.8Z" fill="#99084f" stroke="#99084f"/><path d="M500.7 551.9 512.0 554.5 505.4 561.0 494.1 558.4Z" fill="#990d4f" stroke="#990d4f"/><path d="M512.0 554.5 523.3 557.1 516.7 563.6 505.4 561.0Z" fill="#99124f" stroke="#99124f"/><path d="M523.3 557.1 534.6 559.6 528.0 566.2 516.7 563.6Z" fill="#99174f" stroke="#99174f"/><path d="M534.6 559.6 545.9 562.2 539.3 568.8 528.0 566.2Z" fill="#991c4f" stroke="#991c4f"/><path d="M545.9 562.2 557.2 564.8 550.6 571.3 539.3 568.8Z" fill="#99214f" stroke="#99214f"/><path d="M557.2 564.8 568.5 567.4 561.7 577.0 550.6 571.3Z" fill="#95264f" stroke="#95264f"/><path d="M568.5 567.4 579.7 573.3 572.9 583.1 561.7 577.0Z" fill="#8a2b4f" stroke="#8a2b4f"/><path d="M579.7 573.3 590.8 579.1 584.0 588.7 572.9 583.1Z" fill="#7b304f" stroke="#7b304f"/><path d="M590.8 579.1 602.0 584.6 595.2 593.8 584.0 588.7Z" fill="#6e364f" stroke="#6e364f"/><path d="M602.0 584.6 613.2 589.5 606.4 598.1 595.2 593.8Z" fill="#633b4f" stroke="#633b4f"/><path d="M613.2 589.5 624.4 593.9 617.7 601.6 606.4 598.1Z" fill="#5b404f" stroke="#5b404f"/><path d="M624.4 593.9 635.6 597.5 628.9 604.3 617.7 601.6Z" fill="#57454f" stroke="#57454f"/><path d="M635.6 597.5 646.9 600.4 640.3 606.3 628.9 604.3Z" fill="#564a4f" stroke="#564a4f"/><path d="M646.9 600.4 658.2 602.8 651.6 607.6 640.3 606.3Z" fill="#584f4f" stroke="#584f4f"/><path d="M658.2 602.8 669.6 604.6 663.0 608.4 651.6 607.6Z" fill="#5d544f" stroke="#5d544f"/><path d="M669.6 604.6 680.9 606.1 674.4 609.1 663.0 608.4Z" fill="#63594f" stroke="#63594f"/><path d="M680.9 606.1 692.3 607.4 685.8 609.6 674.4 609.1Z" fill="#6a5e4f" stroke="#6a5e4f"/><path d="M692.3 607.4 703.6 608.7 697.2 610.2 685.8 609.6Z" fill="#72634f" stroke="#72634f"/><path d="M703.6 608.7 715.0 610.0 708.6 611.0 697.2 610.2Z" fill="#79694f" stroke="#79694f"/><path d="M715.0 610.0 726.3 611.5 720.0 612.1 708.6 611.0Z" fill="#7f6e4f" stroke="#7f6e4f"/><path d="M726.3 611.5 737.7 613.2 731.3 613.6 720.0 612.1Z" fill="#85734f" stroke="#85734f"/><path d="M737.7 613.2 749.0 615.3 742.7 615.5 731.3 613.6Z" fill="#88784f" stroke="#88784f"/><path d="M749.0 615.3 760.3 617.7 754.0 617.9 742.7 615.5Z" fill="#8a7d4f" stroke="#8a7d4f"/><path d="M760.3 617.7 771.6 620.4 765.3 620.7 754.0 617.9Z" fill="#8a824f" stroke="#8a824f"/><path d="M771.6 620.4 782.9 623.5 776.5 623.9 765.3 620.7Z" fill="#88874f" stroke="#88874f"/><path d="M782.9 623.5 794.2 627.0 787.8 627.6 776.5 623.9Z" fill="#858c4f" stroke="#858c4f"/><path d="M794.2 627.0 805.4 630.6 799.0 631.7 787.8 627.6Z" fill="#7f914f" stroke="#7f914f"/><path d="M805.4 630.6 816.6 634.5 810.2 636.0 799.0 631.7Z" fill="#79964f" stroke="#79964f"/><path d="M816.6 634.5 827.9 638.4 821.4 640.6 810.2 636.0Z" fill="#729c4f" stroke="#729c4f"/><path d="M827.9 638.4 839.1 642.3 832.6 645.2 821.4 640.6Z" fill="#6aa14f" stroke="#6aa14f"/><path d="M839.1 642.3 850.4 645.9 843.8 649.8 832.6 645.2Z" fill="#63a64f" stroke="#63a64f"/><path d="M850.4 645.9 861.6 649.3 855.0 654.1 843.8 649.8Z" fill="#5dab4f" stroke="#5dab4f"/><path d="M861.6 649.3 872.9 652.1 866.3 657.9 855.0 654.1Z" fill="#58b04f" stroke="#58b04f"/><path d="M872.9 652.1 884.2 654.3 877.6 661.2 866.3 657.9Z" fill="#56b54f" stroke="#56b54f"/><path d="M884.2 654.3 895.6 655.9 888.9 663.6 877.6 661.2Z" fill="#57ba4f" stroke="#57ba4f"/><path d="M895.6 655.9 907.0 656.7 900.2 665.3 888.9 663.6Z" fill="#5bbf4f" stroke="#5bbf4f"/><path d="M907.0 656.7 918.4 656.9 911.6 666.1 900.2 665.3Z" fill="#63c44f" stroke="#63c44f"/><path d="M918.4 656.9 929.8 656.6 923.0 666.2 911.6 666.1Z" fill="#6ec94f" stroke="#6ec94f"/><path d="M929.8 656.6 941.3 655.9 934.5 665.7 923.0 666.2Z" fill="#7bcf4f" stroke="#7bcf4f"/><path d="M941.3 655.9 952.7 655.2 945.9 664.9 934.5 665.7Z" fill="#8ad44f" stroke="#8ad44f"/><path d="M952.7 655.2 964.0 657.8 957.4 664.4 945.9 664.9Z" fill="#95d94f" stroke="#95d94f"/><path d="M964.0 657.8 975.3 660.4 968.7 666.9 957.4 664.4Z" fill="#99de4f" stroke="#99de4f"/><path d="M975.3 660.4 986.6 663.0 980.0 669.5 968.7 666.9Z" fill="#99e34f" stroke="#99e34f"/><path d="M986.6 663.0 997.9 665.6 991.3 672.1 980.0 669.5Z" fill="#99e84f" stroke="#99e84f"/><path d="M997.9 665.6 1009.2 668.1 1002.6 674.7 991.3 672.1Z" fill="#99ed4f" stroke="#99ed4f"/><path d="M1009.2 668.1 1020.5 670.7 1013.9 677.3 1002.6 674.7Z" fill="#99f24f" stroke="#99f24f"/><path d="M1020.5 670.7 1031.8 673.3 1025.2 679.9 1013.9 677.3Z" fill="#99f74f" stroke="#99f74f"/><path d="M1031.8 673.3 1043.1 675.9 1036.5 682.4 1025.2 679.9Z" fill="#99fc4f" stroke="#99fc4f"/><path d="M484.8 540.2 496.1 542.8 489.4 549.3 478.1 546.7Z" fill="#990354" stroke="#990354"/><path d="M496.1 542.8 507.4 545.3 500.7 551.9 489.4 549.3Z" fill="#990854" stroke="#990854"/><path d="M507.4 545.3 518.7 547.9 512.0 554.5 500.7 551.9Z" fill="#990d54" stroke="#990d54"/><path d="M518.7 547.9 530.0 550.5 523.3 557.1 512.0 554.5Z" fill="#991254" stroke="#991254"/><path d="M530.0 550.5 541.3 553.1 534.6 559.6 523.3 557.1Z" fill="#991754" stroke="#991754"/><path d="M541.3 553.1 552.6 555.7 545.9 562.2 534.6 559.6Z" fill="#991c54" stroke="#991c54"/><path d="M552.6 555.7 563.9 558.3 557.2 564.8 545.9 562.2Z" fill="#992154" stroke="#992154"/><path d="M563.9 558.3 575.2 560.8 568.5 567.4 557.2 564.8Z" fill="#992654" stroke="#992654"/><path d="M575.2 560.8 586.5 563.4 579.7 573.3 568.5 567.4Z" fill="#952b54" stroke="#952b54"/><path d="M586.5 563.4 597.6 569.1 590.8 579.1 579.7 573.3Z" fill="#8a3054" stroke="#8a3054"/><path d="M597.6 569.1 608.8 574.7 602.0 584.6 590.8 579.1Z" fill="#7c3654" stroke="#7c3654"/><path d="M608.8 574.7 620.0 580.0 613.2 589.5 602.0 584.6Z" fill="#703b54" stroke="#703b54"/><path d="M620.0 580.0 631.1 584.9 624.4 593.9 613.2 589.5Z" fill="#654054" stroke="#654054"/><path d="M631.1 584.9 642.4 589.3 635.6 597.5 624.4 593.9Z" fill="#5d4554" stroke="#5d4554"/><path d="M642.4 589.3 653.6 593.1 646.9 600.4 635.6 597.5Z" fill="#584a54" stroke="#584a54"/><path d="M653.6 593.1 664.9 596.3 658.2 602.8 646.9 600.4Z" fill="#564f54" stroke="#564f54"/><path d="M664.9 596.3 676.2 599.0 669.6 604.6 658.2 602.8Z" fill="#565454" stroke="#565454"/><path d="M676.2 599.0 687.5 601.4 680.9 606.1 669.6 604.6Z" fill="#585954" stroke="#585954"/><path d="M687.5 601.4 698.8 603.5 692.3 607.4 680.9 606.1Z" fill="#5c5e54" stroke="#5c5e54"/><path d="M698.8 603.5 710.1 605.4 703.6 608.7 692.3 607.4Z" fill="#606354" stroke="#606354"/><path d="M710.1 605.4 721.5 607.3 715.0 610.0 703.6 608.7Z" fill="#656954" stroke="#656954"/><path d="M721.5 607.3 732.8 609.3 726.3 611.5 715.0 610.0Z" fill="#696e54" stroke="#696e54"/><path d="M732.8 609.3 744.1 611.3 737.7 613.2 726.3 611.5Z" fill="#6d7354" stroke="#6d7354"/><path d="M744.1 611.3 755.4 613.6 749.0 615.3 737.7 613.2Z" fill="#6f7854" stroke="#6f7854"/><path d="M755.4 613.6 766.7 616.0 760.3 617.7 749.0 615.3Z" fill="#707d54" stroke="#707d54"/><path d="M766.7 616.0 778.0 618.7 771.6 620.4 760.3 617.7Z" fill="#708254" stroke="#708254"/><path d="M778.0 618.7 789.3 621.7 782.9 623.5 771.6 620.4Z" fill="#6f8754" stroke="#6f8754"/><path d="M789.3 621.7 800.6 624.8 794.2 627.0 782.9 623.5Z" fill="#6d8c54" stroke="#6d8c54"/><path d="M800.6 624.8 811.9 628.0 805.4 630.6 794.2 627.0Z" fill="#699154" stroke="#699154"/><path d="M811.9 628.0 823.1 631.3 816.6 634.5 805.4 630.6Z" fill="#659654" stroke="#659654"/><path d="M823.1 631.3 834.4 634.5 827.9 638.4 816.6 634.5Z" fill="#609c54" stroke="#609c54"/><path d="M834.4 634.5 845.7 637.6 839.1 642.3 827.9 638.4Z" fill="#5ca154" stroke="#5ca154"/><path d="M845.7 637.6 857.0 640.4 850.4 645.9 839.1 642.3Z" fill="#58a654" stroke="#58a654"/><path d="M857.0 640.4 868.3 642.8 861.6 649.3 850.4 645.9Z" fill="#56ab54" stroke="#56ab54"/><path d="M868.3 642.8 879.6 644.7 872.9 652.1 861.6 649.3Z" fill="#56b054" stroke="#56b054"/><path d="M879.6 644.7 891.0 646.1 884.2 654.3 872.9 652.1Z" fill="#58b554" stroke="#58b554"/><path d="M891.0 646.1 902.4 646.9 895.6 655.9 884.2 654.3Z" fill="#5dba54" stroke="#5dba54"/><path d="M902.4 646.9 913.8 647.2 907.0 656.7 895.6 655.9Z" fill="#65bf54" stroke="#65bf54"/><path d="M913.8 647.2 925.2 647.1 918.4 656.9 907.0 656.7Z" fill="#70c454" stroke="#70c454"/><path d="M925.2 647.1 936.6 646.6 929.8 656.6 918.4 656.9Z" fill="#7cc954" stroke="#7cc954"/><path d="M936.6 646.6 948.1 646.1 941.3 655.9 929.8 656.6Z" fill="#8acf54" stroke="#8acf54"/><path d="M948.1 646.1 959.4 648.7 952.7 655.2 941.3 655.9Z" fill="#95d454" stroke="#95d454"/><path d="M959.4 648.7 970.7 651.3 964.0 657.8 952.7 655.2Z" fill="#99d954" stroke="#99d954"/><path d="M970.7 651.3 982.0 653.9 975.3 660.4 964.0 657.8Z" fill="#99de54" stroke="#99de54"/><path d="M982.0 653.9 993.3 656.4 986.6 663.0 975.3 660.4Z" fill="#99e354" stroke="#99e354"/><path d="M993.3 656.4 1004.6 659.0 997.9 665.6 986.6 663.0Z" fill="#99e854" stroke="#99e854"/><path d="M1004.6 659.0 1015.9 661.6 1009.2 668.1 997.9 665.6Z" fill="#99ed54" stroke="#99ed54"/><path d="M1015.9 661.6 1027.2 664.2 1020.5 670.7 1009.2 668.1Z" fill="#99f254" stroke="#99f254"/><path d="M1027.2 664.2 1038.5 666.8 1031.8 673.3 1020.5 670.7Z" fill="#99f754" stroke="#99f754"/><path d="M1038.5 666.8 1049.8 669.4 1043.1 675.9 1031.8 673.3Z" fill="#99fc54" stroke="#99fc54"/><path d="M491.4 533.6 502.7 536.2 496.1 542.8 484.8 540.2Z" fill="#990359" stroke="#990359"/><path d="M502.7 536.2 514.0 538.8 507.4 545.3 496.1 542.8Z" fill="#990859" stroke="#990859"/><path d="M514.0 538.8 525.3 541.4 518.7 547.9 507.4 545.3Z" fill="#990d59" stroke="#990d59"/><path d="M525.3 541.4 536.6 544.0 530.0 550.5 518.7 547.9Z" fill="#991259" stroke="#991259"/><path d="M536.6 544.0 547.9 546.6 541.3 553.1 530.0 550.5Z" fill="#991759" stroke="#991759"/><path d="M547.9 546.6 559.2 549.1 552.6 555.7 541.3 553.1Z" fill="#991c59" stroke="#991c59"/><path d="M559.2 549.1 570.5 551.7 563.9 558.3 552.6 555.7Z" fill="#992159" stroke="#992159"/><path d="M570.5 551.7 581.8 554.3 575.2 560.8 563.9 558.3Z" fill="#992659" stroke="#992659"/><path d="M581.8 554.3 593.1 556.9 586.5 563.4 575.2 560.8Z" fill="#992b59" stroke="#992b59"/><path d="M593.1 556.9 604.4 559.5 597.6 569.1 586.5 563.4Z" fill="#953059" stroke="#953059"/><path d="M604.4 559.5 615.6 564.5 608.8 574.7 597.6 569.1Z" fill="#8c3659" stroke="#8c3659"/><path d="M615.6 564.5 626.8 569.9 620.0 580.0 608.8 574.7Z" fill="#7f3b59" stroke="#7f3b59"/><path d="M626.8 569.9 638.0 575.1 631.1 584.9 620.0 580.0Z" fill="#734059" stroke="#734059"/><path d="M638.0 575.1 649.2 579.9 642.4 589.3 631.1 584.9Z" fill="#694559" stroke="#694559"/><path d="M649.2 579.9 660.4 584.3 653.6 593.1 642.4 589.3Z" fill="#614a59" stroke="#614a59"/><path d="M660.4 584.3 671.6 588.2 664.9 596.3 653.6 593.1Z" fill="#5b4f59" stroke="#5b4f59"/><path d="M671.6 588.2 682.9 591.7 676.2 599.0 664.9 596.3Z" fill="#585459" stroke="#585459"/><path d="M682.9 591.7 694.1 594.8 687.5 601.4 676.2 599.0Z" fill="#565959" stroke="#565959"/><path d="M694.1 594.8 705.4 597.7 698.8 603.5 687.5 601.4Z" fill="#565e59" stroke="#565e59"/><path d="M705.4 597.7 716.7 600.2 710.1 605.4 698.8 603.5Z" fill="#576359" stroke="#576359"/><path d="M716.7 600.2 728.0 602.7 721.5 607.3 710.1 605.4Z" fill="#596959" stroke="#596959"/><path d="M728.0 602.7 739.3 605.1 732.8 609.3 721.5 607.3Z" fill="#5b6e59" stroke="#5b6e59"/><path d="M739.3 605.1 750.7 607.4 744.1 611.3 732.8 609.3Z" fill="#5d7359" stroke="#5d7359"/><path d="M750.7 607.4 762.0 609.9 755.4 613.6 744.1 611.3Z" fill="#5e7859" stroke="#5e7859"/><path d="M762.0 609.9 773.3 612.4 766.7 616.0 755.4 613.6Z" fill="#5f7d59" stroke="#5f7d59"/><path d="M773.3 612.4 784.6 615.1 778.0 618.7 766.7 616.0Z" fill="#5f8259" stroke="#5f8259"/><path d="M784.6 615.1 795.9 617.8 789.3 621.7 778.0 618.7Z" fill="#5e8759" stroke="#5e8759"/><path d="M795.9 617.8 807.1 620.6 800.6 624.8 789.3 621.7Z" fill="#5d8c59" stroke="#5d8c59"/><path d="M807.1 620.6 818.4 623.3 811.9 628.0 800.6 624.8Z" fill="#5b9159" stroke="#5b9159"/><path d="M818.4 623.3 829.7 626.1 823.1 631.3 811.9 628.0Z" fill="#599659" stroke="#599659"/><path d="M829.7 626.1 841.0 628.7 834.4 634.5 823.1 631.3Z" fill="#579c59" stroke="#579c59"/><path d="M841.0 628.7 852.3 631.0 845.7 637.6 834.4 634.5Z" fill="#56a159" stroke="#56a159"/><path d="M852.3 631.0 863.7 633.1 857.0 640.4 845.7 637.6Z" fill="#56a659" stroke="#56a659"/><path d="M863.7 633.1 875.0 634.7 868.3 642.8 857.0 640.4Z" fill="#58ab59" stroke="#58ab59"/><path d="M875.0 634.7 886.4 636.0 879.6 644.7 868.3 642.8Z" fill="#5bb059" stroke="#5bb059"/><path d="M886.4 636.0 897.8 636.7 891.0 646.1 879.6 644.7Z" fill="#61b559" stroke="#61b559"/><path d="M897.8 636.7 909.2 637.1 902.4 646.9 891.0 646.1Z" fill="#69ba59" stroke="#69ba59"/><path d="M909.2 637.1 920.6 637.1 913.8 647.2 902.4 646.9Z" fill="#73bf59" stroke="#73bf59"/><path d="M920.6 637.1 932.0 636.9 925.2 647.1 913.8 647.2Z" fill="#7fc459" stroke="#7fc459"/><path d="M932.0 636.9 943.5 637.0 936.6 646.6 925.2 647.1Z" fill="#8cc959" stroke="#8cc959"/><path d="M943.5 637.0 954.8 639.6 948.1 646.1 936.6 646.6Z" fill="#95cf59" stroke="#95cf59"/><path d="M954.8 639.6 966.1 642.2 959.4 648.7 948.1 646.1Z" fill="#99d459" stroke="#99d459"/><path d="M966.1 642.2 977.4 644.7 970.7 651.3 959.4 648.7Z" fill="#99d959" stroke="#99d959"/><path d="M977.4 644.7 988.7 647.3 982.0 653.9 970.7 651.3Z" fill="#99de59" stroke="#99de59"/><path d="M988.7 647.3 1000.0 649.9 993.3 656.4 982.0 653.9Z" fill="#99e359" stroke="#99e359"/><path d="M1000.0 649.9 1011.3 652.5 1004.6 659.0 993.3 656.4Z" fill="#99e859" stroke="#99e859"/><path d="M1011.3 652.5 1022.6 655.1 1015.9 661.6 1004.6 659.0Z" fill="#99ed59" stroke="#99ed59"/><path d="M1022.6 655.1 1033.9 657.7 1027.2 664.2 1015.9 661.6Z" fill="#99f259" stroke="#99f259"/><path d="M1033.9 657.7 1045.2 660.2 1038.5 666.8 1027.2 664.2Z" fill="#99f759" stroke="#99f759"/><path d="M1045.2 660.2 1056.5 662.8 1049.8 669.4 1038.5 666.8Z" fill="#99fc59" stroke="#99fc59"/><path d="M498.1 527.1 509.4 529.7 502.7 536.2 491.4 533.6Z" fill="#99035e" stroke="#99035e"/><path d="M509.4 529.7 520.7 532.3 514.0 538.8 502.7 536.2Z" fill="#99085e" stroke="#99085e"/><path d="M520.7 532.3 532.0 534.9 525.3 541.4 514.0 538.8Z" fill="#990d5e" stroke="#990d5e"/><path d="M532.0 534.9 543.3 537.4 536.6 544.0 525.3 541.4Z" fill="#99125e" stroke="#99125e"/><path d="M543.3 537.4 554.6 540.0 547.9 546.6 536.6 544.0Z" fill="#99175e" stroke="#99175e"/><path d="M554.6 540.0 565.9 542.6 559.2 549.1 547.9 546.6Z" fill="#991c5e" stroke="#991c5e"/><path d="M565.9 542.6 577.2 545.2 570.5 551.7 559.2 549.1Z" fill="#99215e" stroke="#99215e"/><path d="M577.2 545.2 588.5 547.8 581.8 554.3 570.5 551.7Z" fill="#99265e" stroke="#99265e"/><path d="M588.5 547.8 599.8 550.4 593.1 556.9 581.8 554.3Z" fill="#992b5e" stroke="#992b5e"/><path d="M599.8 550.4 611.1 552.9 604.4 559.5 593.1 556.9Z" fill="#99305e" stroke="#99305e"/><path d="M611.1 552.9 622.4 555.5 615.6 564.5 604.4 559.5Z" fill="#96365e" stroke="#96365e"/><path d="M622.4 555.5 633.6 559.5 626.8 569.9 615.6 564.5Z" fill="#8e3b5e" stroke="#8e3b5e"/><path d="M633.6 559.5 644.8 564.7 638.0 575.1 626.8 569.9Z" fill="#84405e" stroke="#84405e"/><path d="M644.8 564.7 656.0 569.7 649.2 579.9 638.0 575.1Z" fill="#78455e" stroke="#78455e"/><path d="M656.0 569.7 667.2 574.4 660.4 584.3 649.2 579.9Z" fill="#6f4a5e" stroke="#6f4a5e"/><path d="M667.2 574.4 678.4 578.8 671.6 588.2 660.4 584.3Z" fill="#674f5e" stroke="#674f5e"/><path d="M678.4 578.8 689.6 582.8 682.9 591.7 671.6 588.2Z" fill="#60545e" stroke="#60545e"/><path d="M689.6 582.8 700.9 586.5 694.1 594.8 682.9 591.7Z" fill="#5c595e" stroke="#5c595e"/><path d="M700.9 586.5 712.1 589.9 705.4 597.7 694.1 594.8Z" fill="#595e5e" stroke="#595e5e"/><path d="M712.1 589.9 723.4 593.0 716.7 600.2 705.4 597.7Z" fill="#57635e" stroke="#57635e"/><path d="M723.4 593.0 734.7 595.9 728.0 602.7 716.7 600.2Z" fill="#56695e" stroke="#56695e"/><path d="M734.7 595.9 746.0 598.7 739.3 605.1 728.0 602.7Z" fill="#566e5e" stroke="#566e5e"/><path d="M746.0 598.7 757.3 601.4 750.7 607.4 739.3 605.1Z" fill="#56735e" stroke="#56735e"/><path d="M757.3 601.4 768.6 604.0 762.0 609.9 750.7 607.4Z" fill="#56785e" stroke="#56785e"/><path d="M768.6 604.0 779.9 606.6 773.3 612.4 762.0 609.9Z" fill="#567d5e" stroke="#567d5e"/><path d="M779.9 606.6 791.2 609.2 784.6 615.1 773.3 612.4Z" fill="#56825e" stroke="#56825e"/><path d="M791.2 609.2 802.5 611.7 795.9 617.8 784.6 615.1Z" fill="#56875e" stroke="#56875e"/><path d="M802.5 611.7 813.8 614.2 807.1 620.6 795.9 617.8Z" fill="#568c5e" stroke="#568c5e"/><path d="M813.8 614.2 825.1 616.6 818.4 623.3 807.1 620.6Z" fill="#56915e" stroke="#56915e"/><path d="M825.1 616.6 836.4 618.9 829.7 626.1 818.4 623.3Z" fill="#56965e" stroke="#56965e"/><path d="M836.4 618.9 847.7 620.9 841.0 628.7 829.7 626.1Z" fill="#579c5e" stroke="#579c5e"/><path d="M847.7 620.9 859.1 622.7 852.3 631.0 841.0 628.7Z" fill="#59a15e" stroke="#59a15e"/><path d="M859.1 622.7 870.4 624.2 863.7 633.1 852.3 631.0Z" fill="#5ca65e" stroke="#5ca65e"/><path d="M870.4 624.2 881.8 625.3 875.0 634.7 863.7 633.1Z" fill="#60ab5e" stroke="#60ab5e"/><path d="M881.8 625.3 893.2 626.1 886.4 636.0 875.0 634.7Z" fill="#67b05e" stroke="#67b05e"/><path d="M893.2 626.1 904.6 626.6 897.8 636.7 886.4 636.0Z" fill="#6fb55e" stroke="#6fb55e"/><path d="M904.6 626.6 916.0 626.7 909.2 637.1 897.8 636.7Z" fill="#78ba5e" stroke="#78ba5e"/><path d="M916.0 626.7 927.4 626.7 920.6 637.1 909.2 637.1Z" fill="#84bf5e" stroke="#84bf5e"/><path d="M927.4 626.7 938.8 627.9 932.0 636.9 920.6 637.1Z" fill="#8ec45e" stroke="#8ec45e"/><path d="M938.8 627.9 950.1 630.4 943.5 637.0 932.0 636.9Z" fill="#96c95e" stroke="#96c95e"/><path d="M950.1 630.4 961.4 633.0 954.8 639.6 943.5 637.0Z" fill="#99cf5e" stroke="#99cf5e"/><path d="M961.4 633.0 972.7 635.6 966.1 642.2 954.8 639.6Z" fill="#99d45e" stroke="#99d45e"/><path d="M972.7 635.6 984.0 638.2 977.4 644.7 966.1 642.2Z" fill="#99d95e" stroke="#99d95e"/><path d="M984.0 638.2 995.3 640.8 988.7 647.3 977.4 644.7Z" fill="#99de5e" stroke="#99de5e"/><path d="M995.3 640.8 1006.6 643.4 1000.0 649.9 988.7 647.3Z" fill="#99e35e" stroke="#99e35e"/><path d="M1006.6 643.4 1017.9 645.9 1011.3 652.5 1000.0 649.9Z" fill="#99e85e" stroke="#99e85e"/><path d="M1017.9 645.9 1029.2 648.5 1022.6 655.1 1011.3 652.5Z" fill="#99ed5e" stroke="#99ed5e"/><path d="M1029.2 648.5 1040.5 651.1 1033.9 657.7 1022.6 655.1Z" fill="#99f25e" stroke="#99f25e"/><path d="M1040.5 651.1 1051.8 653.7 1045.2 660.2 1033.9 657.7Z" fill="#99f75e" stroke="#99f75e"/><path d="M1051.8 653.7 1063.1 656.3 1056.5 662.8 1045.2 660.2Z" fill="#99fc5e" stroke="#99fc5e"/><path d="M504.8 520.6 516.1 523.1 509.4 529.7 498.1 527.1Z" fill="#990363" stroke="#990363"/><path d="M516.1 523.1 527.4 525.7 520.7 532.3 509.4 529.7Z" fill="#990863" stroke="#990863"/><path d="M527.4 525.7 538.7 528.3 532.0 534.9 520.7 532.3Z" fill="#990d63" stroke="#990d63"/><path d="M538.7 528.3 550.0 530.9 543.3 537.4 532.0 534.9Z" fill="#991263" stroke="#991263"/><path d="M550.0 530.9 561.3 533.5 554.6 540.0 543.3 537.4Z" fill="#991763" stroke="#991763"/><path d="M561.3 533.5 572.6 536.1 565.9 542.6 554.6 540.0Z" fill="#991c63" stroke="#991c63"/><path d="M572.6 536.1 583.9 538.6 577.2 545.2 565.9 542.6Z" fill="#992163" stroke="#992163"/><path d="M583.9 538.6 595.2 541.2 588.5 547.8 577.2 545.2Z" fill="#992663" stroke="#992663"/><path d="M595.2 541.2 606.5 543.8 599.8 550.4 588.5 547.8Z" fill="#992b63" stroke="#992b63"/><path d="M606.5 543.8 617.8 546.4 611.1 552.9 599.8 550.4Z" fill="#993063" stroke="#993063"/><path d="M617.8 546.4 629.1 549.0 622.4 555.5 611.1 552.9Z" fill="#993663" stroke="#993663"/><path d="M629.1 549.0 640.4 551.6 633.6 559.5 622.4 555.5Z" fill="#973b63" stroke="#973b63"/><path d="M640.4 551.6 651.7 554.2 644.8 564.7 633.6 559.5Z" fill="#934063" stroke="#934063"/><path d="M651.7 554.2 662.8 559.1 656.0 569.7 644.8 564.7Z" fill="#8a4563" stroke="#8a4563"/><path d="M662.8 559.1 674.0 563.9 667.2 574.4 656.0 569.7Z" fill="#804a63" stroke="#804a63"/><path d="M674.0 563.9 685.2 568.4 678.4 578.8 667.2 574.4Z" fill="#774f63" stroke="#774f63"/><path d="M685.2 568.4 696.5 572.8 689.6 582.8 678.4 578.8Z" fill="#6f5463" stroke="#6f5463"/><path d="M696.5 572.8 707.7 576.8 700.9 586.5 689.6 582.8Z" fill="#685963" stroke="#685963"/><path d="M707.7 576.8 718.9 580.5 712.1 589.9 700.9 586.5Z" fill="#635e63" stroke="#635e63"/><path d="M718.9 580.5 730.2 584.0 723.4 593.0 712.1 589.9Z" fill="#5f6363" stroke="#5f6363"/><path d="M730.2 584.0 741.5 587.3 734.7 595.9 723.4 593.0Z" fill="#5c6963" stroke="#5c6963"/><path d="M741.5 587.3 752.7 590.4 746.0 598.7 734.7 595.9Z" fill="#5a6e63" stroke="#5a6e63"/><path d="M752.7 590.4 764.0 593.3 757.3 601.4 746.0 598.7Z" fill="#597363" stroke="#597363"/><path d="M764.0 593.3 775.3 596.1 768.6 604.0 757.3 601.4Z" fill="#587863" stroke="#587863"/><path d="M775.3 596.1 786.6 598.7 779.9 606.6 768.6 604.0Z" fill="#587d63" stroke="#587d63"/><path d="M786.6 598.7 797.9 601.2 791.2 609.2 779.9 606.6Z" fill="#588263" stroke="#588263"/><path d="M797.9 601.2 809.2 603.6 802.5 611.7 791.2 609.2Z" fill="#588763" stroke="#588763"/><path d="M809.2 603.6 820.5 605.9 813.8 614.2 802.5 611.7Z" fill="#598c63" stroke="#598c63"/><path d="M820.5 605.9 831.9 608.0 825.1 616.6 813.8 614.2Z" fill="#5a9163" stroke="#5a9163"/><path d="M831.9 608.0 843.2 609.9 836.4 618.9 825.1 616.6Z" fill="#5c9663" stroke="#5c9663"/><path d="M843.2 609.9 854.5 611.6 847.7 620.9 836.4 618.9Z" fill="#5f9c63" stroke="#5f9c63"/><path d="M854.5 611.6 865.9 613.0 859.1 622.7 847.7 620.9Z" fill="#63a163" stroke="#63a163"/><path d="M865.9 613.0 877.3 614.1 870.4 624.2 859.1 622.7Z" fill="#68a663" stroke="#68a663"/><path d="M877.3 614.1 888.6 614.9 881.8 625.3 870.4 624.2Z" fill="#6fab63" stroke="#6fab63"/><path d="M888.6 614.9 900.0 615.5 893.2 626.1 881.8 625.3Z" fill="#77b063" stroke="#77b063"/><path d="M900.0 615.5 911.5 615.9 904.6 626.6 893.2 626.1Z" fill="#80b563" stroke="#80b563"/><path d="M911.5 615.9 922.9 616.2 916.0 626.7 904.6 626.6Z" fill="#8aba63" stroke="#8aba63"/><path d="M922.9 616.2 934.2 618.7 927.4 626.7 916.0 626.7Z" fill="#93bf63" stroke="#93bf63"/><path d="M934.2 618.7 945.5 621.3 938.8 627.9 927.4 626.7Z" fill="#97c463" stroke="#97c463"/><path d="M945.5 621.3 956.8 623.9 950.1 630.4 938.8 627.9Z" fill="#99c963" stroke="#99c963"/><path d="M956.8 623.9 968.1 626.5 961.4 633.0 950.1 630.4Z" fill="#99cf63" stroke="#99cf63"/><path d="M968.1 626.5 979.4 629.1 972.7 635.6 961.4 633.0Z" fill="#99d463" stroke="#99d463"/><path d="M979.4 629.1 990.7 631.7 984.0 638.2 972.7 635.6Z" fill="#99d963" stroke="#99d963"/><path d="M990.7 631.7 1002.0 634.2 995.3 640.8 984.0 638.2Z" fill="#99de63" stroke="#99de63"/><path d="M1002.0 634.2 1013.3 636.8 1006.6 643.4 995.3 640.8Z" fill="#99e363" stroke="#99e363"/><path d="M1013.3 636.8 1024.6 639.4 1017.9 645.9 1006.6 643.4Z" fill="#99e863" stroke="#99e863"/><path d="M1024.6 639.4 1035.9 642.0 1029.2 648.5 1017.9 645.9Z" fill="#99ed63" stroke="#99ed63"/><path d="M1035.9 642.0 1047.2 644.6 1040.5 651.1 1029.2 648.5Z" fill="#99f263" stroke="#99f263"/><path d="M1047.2 644.6 1058.5 647.2 1051.8 653.7 1040.5 651.1Z" fill="#99f763" stroke="#99f763"/><path d="M1058.5 647.2 1069.8 649.7 1063.1 656.3 1051.8 653.7Z" fill="#99fc63" stroke="#99fc63"/><path d="M511.4 514.0 522.7 516.6 516.1 523.1 504.8 520.6Z" fill="#990369" stroke="#990369"/><path d="M522.7 516.6 534.0 519.2 527.4 525.7 516.1 523.1Z" fill="#990869" stroke="#990869"/><path d="M534.0 519.2 545.3 521.8 538.7 528.3 527.4 525.7Z" fill="#990d69" stroke="#990d69"/><path d="M545.3 521.8 556.6 524.4 550.0 530.9 538.7 528.3Z" fill="#991269" stroke="#991269"/><path d="M556.6 524.4 567.9 526.9 561.3 533.5 550.0 530.9Z" fill="#991769" stroke="#991769"/><path d="M567.9 526.9 579.2 529.5 572.6 536.1 561.3 533.5Z" fill="#991c69" stroke="#991c69"/><path d="M579.2 529.5 590.5 532.1 583.9 538.6 572.6 536.1Z" fill="#992169" stroke="#992169"/><path d="M590.5 532.1 601.8 534.7 595.2 541.2 583.9 538.6Z" fill="#992669" stroke="#992669"/><path d="M601.8 534.7 613.1 537.3 606.5 543.8 595.2 541.2Z" fill="#992b69" stroke="#992b69"/><path d="M613.1 537.3 624.4 539.9 617.8 546.4 606.5 543.8Z" fill="#993069" stroke="#993069"/><path d="M624.4 539.9 635.7 542.4 629.1 549.0 617.8 546.4Z" fill="#993669" stroke="#993669"/><path d="M635.7 542.4 647.0 545.0 640.4 551.6 629.1 549.0Z" fill="#993b69" stroke="#993b69"/><path d="M647.0 545.0 658.3 547.6 651.7 554.2 640.4 551.6Z" fill="#994069" stroke="#994069"/><path d="M658.3 547.6 669.6 550.2 662.8 559.1 651.7 554.2Z" fill="#964569" stroke="#964569"/><path d="M669.6 550.2 680.9 553.1 674.0 563.9 662.8 559.1Z" fill="#914a69" stroke="#914a69"/><path d="M680.9 553.1 692.1 557.6 685.2 568.4 674.0 563.9Z" fill="#894f69" stroke="#894f69"/><path d="M692.1 557.6 703.3 562.0 696.5 572.8 685.2 568.4Z" fill="#815469" stroke="#815469"/><path d="M703.3 562.0 714.5 566.1 707.7 576.8 696.5 572.8Z" fill="#795969" stroke="#795969"/><path d="M714.5 566.1 725.8 570.1 718.9 580.5 707.7 576.8Z" fill="#735e69" stroke="#735e69"/><path d="M725.8 570.1 737.0 573.8 730.2 584.0 718.9 580.5Z" fill="#6e6369" stroke="#6e6369"/><path d="M737.0 573.8 748.3 577.2 741.5 587.3 730.2 584.0Z" fill="#6a6969" stroke="#6a6969"/><path d="M748.3 577.2 759.6 580.5 752.7 590.4 741.5 587.3Z" fill="#676e69" stroke="#676e69"/><path d="M759.6 580.5 770.8 583.5 764.0 593.3 752.7 590.4Z" fill="#647369" stroke="#647369"/><path d="M770.8 583.5 782.1 586.4 775.3 596.1 764.0 593.3Z" fill="#637869" stroke="#637869"/><path d="M782.1 586.4 793.4 589.1 786.6 598.7 775.3 596.1Z" fill="#627d69" stroke="#627d69"/><path d="M793.4 589.1 804.7 591.6 797.9 601.2 786.6 598.7Z" fill="#628269" stroke="#628269"/><path d="M804.7 591.6 816.0 593.9 809.2 603.6 797.9 601.2Z" fill="#638769" stroke="#638769"/><path d="M816.0 593.9 827.4 596.0 820.5 605.9 809.2 603.6Z" fill="#648c69" stroke="#648c69"/><path d="M827.4 596.0 838.7 597.9 831.9 608.0 820.5 605.9Z" fill="#679169" stroke="#679169"/><path d="M838.7 597.9 850.0 599.6 843.2 609.9 831.9 608.0Z" fill="#6a9669" stroke="#6a9669"/><path d="M850.0 599.6 861.4 601.1 854.5 611.6 843.2 609.9Z" fill="#6e9c69" stroke="#6e9c69"/><path d="M861.4 601.1 872.8 602.3 865.9 613.0 854.5 611.6Z" fill="#73a169" stroke="#73a169"/><path d="M872.8 602.3 884.1 603.3 877.3 614.1 865.9 613.0Z" fill="#79a669" stroke="#79a669"/><path d="M884.1 603.3 895.5 604.1 888.6 614.9 877.3 614.1Z" fill="#81ab69" stroke="#81ab69"/><path d="M895.5 604.1 906.9 604.8 900.0 615.5 888.6 614.9Z" fill="#89b069" stroke="#89b069"/><path d="M906.9 604.8 918.2 607.0 911.5 615.9 900.0 615.5Z" fill="#91b569" stroke="#91b569"/><path d="M918.2 607.0 929.5 609.6 922.9 616.2 911.5 615.9Z" fill="#96ba69" stroke="#96ba69"/><path d="M929.5 609.6 940.8 612.2 934.2 618.7 922.9 616.2Z" fill="#99bf69" stroke="#99bf69"/><path d="M940.8 612.2 952.1 614.8 945.5 621.3 934.2 618.7Z" fill="#99c469" stroke="#99c469"/><path d="M952.1 614.8 963.4 617.4 956.8 623.9 945.5 621.3Z" fill="#99c969" stroke="#99c969"/><path d="M963.4 617.4 974.7 619.9 968.1 626.5 956.8 623.9Z" fill="#99cf69" stroke="#99cf69"/><path d="M974.7 619.9 986.0 622.5 979.4 629.1 968.1 626.5Z" fill="#99d469" stroke="#99d469"/><path d="M986.0 622.5 997.3 625.1 990.7 631.7 979.4 629.1Z" fill="#99d969" stroke="#99d969"/><path d="M997.3 625.1 1008.6 627.7 1002.0 634.2 990.7 631.7Z" fill="#99de69" stroke="#99de69"/><path d="M1008.6 627.7 1019.9 630.3 1013.3 636.8 1002.0 634.2Z" fill="#99e369" stroke="#99e369"/><path d="M1019.9 630.3 1031.2 632.9 1024.6 639.4 1013.3 636.8Z" fill="#99e869" stroke="#99e869"/><path d="M1031.2 632.9 1042.5 635.4 1035.9 642.0 1024.6 639.4Z" fill="#99ed69" stroke="#99ed69"/><path d="M1042.5 635.4 1053.8 638.0 1047.2 644.6 1035.9 642.0Z" fill="#99f269" stroke="#99f269"/><path d="M1053.8 638.0 1065.1 640.6 1058.5 647.2 1047.2 644.6Z" fill="#99f769" stroke="#99f769"/><path d="M1065.1 640.6 1076.4 643.2 1069.8 649.7 1058.5 647.2Z" fill="#99fc69" stroke="#99fc69"/><path d="M518.1 507.5 529.4 510.1 522.7 516.6 511.4 514.0Z" fill="#99036e" stroke="#99036e"/><path d="M529.4 510.1 540.7 512.6 534.0 519.2 522.7 516.6Z" fill="#99086e" stroke="#99086e"/><path d="M540.7 512.6 552.0 515.2 545.3 521.8 534.0 519.2Z" fill="#990d6e" stroke="#990d6e"/><path d="M552.0 515.2 563.3 517.8 556.6 524.4 545.3 521.8Z" fill="#99126e" stroke="#99126e"/><path d="M563.3 517.8 574.6 520.4 567.9 526.9 556.6 524.4Z" fill="#99176e" stroke="#99176e"/><path d="M574.6 520.4 585.9 523.0 579.2 529.5 567.9 526.9Z" fill="#991c6e" stroke="#991c6e"/><path d="M585.9 523.0 597.2 525.6 590.5 532.1 579.2 529.5Z" fill="#99216e" stroke="#99216e"/><path d="M597.2 525.6 608.5 528.1 601.8 534.7 590.5 532.1Z" fill="#99266e" stroke="#99266e"/><path d="M608.5 528.1 619.8 530.7 613.1 537.3 601.8 534.7Z" fill="#992b6e" stroke="#992b6e"/><path d="M619.8 530.7 631.1 533.3 624.4 539.9 613.1 537.3Z" fill="#99306e" stroke="#99306e"/><path d="M631.1 533.3 642.4 535.9 635.7 542.4 624.4 539.9Z" fill="#99366e" stroke="#99366e"/><path d="M642.4 535.9 653.7 538.5 647.0 545.0 635.7 542.4Z" fill="#993b6e" stroke="#993b6e"/><path d="M653.7 538.5 665.0 541.1 658.3 547.6 647.0 545.0Z" fill="#99406e" stroke="#99406e"/><path d="M665.0 541.1 676.3 543.7 669.6 550.2 658.3 547.6Z" fill="#99456e" stroke="#99456e"/><path d="M676.3 543.7 687.6 546.2 680.9 553.1 669.6 550.2Z" fill="#994a6e" stroke="#994a6e"/><path d="M687.6 546.2 698.9 548.8 692.1 557.6 680.9 553.1Z" fill="#964f6e" stroke="#964f6e"/><path d="M698.9 548.8 710.2 551.4 703.3 562.0 692.1 557.6Z" fill="#92546e" stroke="#92546e"/><path d="M710.2 551.4 721.4 555.1 714.5 566.1 703.3 562.0Z" fill="#8d596e" stroke="#8d596e"/><path d="M721.4 555.1 732.7 559.0 725.8 570.1 714.5 566.1Z" fill="#875e6e" stroke="#875e6e"/><path d="M732.7 559.0 743.9 562.8 737.0 573.8 725.8 570.1Z" fill="#81636e" stroke="#81636e"/><path d="M743.9 562.8 755.2 566.3 748.3 577.2 737.0 573.8Z" fill="#7c696e" stroke="#7c696e"/><path d="M755.2 566.3 766.4 569.6 759.6 580.5 748.3 577.2Z" fill="#786e6e" stroke="#786e6e"/><path d="M766.4 569.6 777.7 572.7 770.8 583.5 759.6 580.5Z" fill="#76736e" stroke="#76736e"/><path d="M777.7 572.7 789.0 575.6 782.1 586.4 770.8 583.5Z" fill="#74786e" stroke="#74786e"/><path d="M789.0 575.6 800.3 578.3 793.4 589.1 782.1 586.4Z" fill="#737d6e" stroke="#737d6e"/><path d="M800.3 578.3 811.6 580.8 804.7 591.6 793.4 589.1Z" fill="#73826e" stroke="#73826e"/><path d="M811.6 580.8 822.9 583.1 816.0 593.9 804.7 591.6Z" fill="#74876e" stroke="#74876e"/><path d="M822.9 583.1 834.2 585.1 827.4 596.0 816.0 593.9Z" fill="#768c6e" stroke="#768c6e"/><path d="M834.2 585.1 845.6 587.0 838.7 597.9 827.4 596.0Z" fill="#78916e" stroke="#78916e"/><path d="M845.6 587.0 856.9 588.6 850.0 599.6 838.7 597.9Z" fill="#7c966e" stroke="#7c966e"/><path d="M856.9 588.6 868.3 590.0 861.4 601.1 850.0 599.6Z" fill="#819c6e" stroke="#819c6e"/><path d="M868.3 590.0 879.6 591.3 872.8 602.3 861.4 601.1Z" fill="#87a16e" stroke="#87a16e"/><path d="M879.6 591.3 891.0 592.7 884.1 603.3 872.8 602.3Z" fill="#8da66e" stroke="#8da66e"/><path d="M891.0 592.7 902.3 595.3 895.5 604.1 884.1 603.3Z" fill="#92ab6e" stroke="#92ab6e"/><path d="M902.3 595.3 913.6 597.9 906.9 604.8 895.5 604.1Z" fill="#96b06e" stroke="#96b06e"/><path d="M913.6 597.9 924.9 600.5 918.2 607.0 906.9 604.8Z" fill="#99b56e" stroke="#99b56e"/><path d="M924.9 600.5 936.2 603.1 929.5 609.6 918.2 607.0Z" fill="#99ba6e" stroke="#99ba6e"/><path d="M936.2 603.1 947.5 605.7 940.8 612.2 929.5 609.6Z" fill="#99bf6e" stroke="#99bf6e"/><path d="M947.5 605.7 958.8 608.2 952.1 614.8 940.8 612.2Z" fill="#99c46e" stroke="#99c46e"/><path d="M958.8 608.2 970.1 610.8 963.4 617.4 952.1 614.8Z" fill="#99c96e" stroke="#99c96e"/><path d="M970.1 610.8 981.4 613.4 974.7 619.9 963.4 617.4Z" fill="#99cf6e" stroke="#99cf6e"/><path d="M981.4 613.4 992.7 616.0 986.0 622.5 974.7 619.9Z" fill="#99d46e" stroke="#99d46e"/><path d="M992.7 616.0 1004.0 618.6 997.3 625.1 986.0 622.5Z" fill="#99d96e" stroke="#99d96e"/><path d="M1004.0 618.6 1015.3 621.2 1008.6 627.7 997.3 625.1Z" fill="#99de6e" stroke="#99de6e"/><path d="M1015.3 621.2 1026.6 623.7 1019.9 630.3 1008.6 627.7Z" fill="#99e36e" stroke="#99e36e"/><path d="M1026.6 623.7 1037.9 626.3 1031.2 632.9 1019.9 630.3Z" fill="#99e86e" stroke="#99e86e"/><path d="M1037.9 626.3 1049.2 628.9 1042.5 635.4 1031.2 632.9Z" fill="#99ed6e" stroke="#99ed6e"/><path d="M1049.2 628.9 1060.5 631.5 1053.8 638.0 1042.5 635.4Z" fill="#99f26e" stroke="#99f26e"/><path d="M1060.5 631.5 1071.8 634.1 1065.1 640.6 1053.8 638.0Z" fill="#99f76e" stroke="#99f76e"/><path d="M1071.8 634.1 1083.1 636.7 1076.4 643.2 1065.1 640.6Z" fill="#99fc6e" stroke="#99fc6e"/><path d="M524.7 500.9 536.0 503.5 529.4 510.1 518.1 507.5Z" fill="#990373" stroke="#990373"/><path d="M536.0 503.5 547.3 506.1 540.7 512.6 529.4 510.1Z" fill="#990873" stroke="#990873"/><path d="M547.3 506.1 558.6 508.7 552.0 515.2 540.7 512.6Z" fill="#990d73" stroke="#990d73"/><path d="M558.6 508.7 569.9 511.3 563.3 517.8 552.0 515.2Z" fill="#991273" stroke="#991273"/><path d="M569.9 511.3 581.2 513.9 574.6 520.4 563.3 517.8Z" fill="#991773" stroke="#991773"/><path d="M581.2 513.9 592.5 516.4 585.9 523.0 574.6 520.4Z" fill="#991c73" stroke="#991c73"/><path d="M592.5 516.4 603.8 519.0 597.2 525.6 585.9 523.0Z" fill="#992173" stroke="#992173"/><path d="M603.8 519.0 615.1 521.6 608.5 528.1 597.2 525.6Z" fill="#992673" stroke="#992673"/><path d="M615.1 521.6 626.4 524.2 619.8 530.7 608.5 528.1Z" fill="#992b73" stroke="#992b73"/><path d="M626.4 524.2 637.7 526.8 631.1 533.3 619.8 530.7Z" fill="#993073" stroke="#993073"/><path d="M637.7 526.8 649.0 529.4 642.4 535.9 631.1 533.3Z" fill="#993673" stroke="#993673"/><path d="M649.0 529.4 660.3 531.9 653.7 538.5 642.4 535.9Z" fill="#993b73" stroke="#993b73"/><path d="M660.3 531.9 671.6 534.5 665.0 541.1 653.7 538.5Z" fill="#994073" stroke="#994073"/><path d="M671.6 534.5 682.9 537.1 676.3 543.7 665.0 541.1Z" fill="#994573" stroke="#994573"/><path d="M682.9 537.1 694.2 539.7 687.6 546.2 676.3 543.7Z" fill="#994a73" stroke="#994a73"/><path d="M694.2 539.7 705.5 542.3 698.9 548.8 687.6 546.2Z" fill="#994f73" stroke="#994f73"/><path d="M705.5 542.3 716.8 544.9 710.2 551.4 698.9 548.8Z" fill="#995473" stroke="#995473"/><path d="M716.8 544.9 728.1 547.4 721.4 555.1 710.2 551.4Z" fill="#985973" stroke="#985973"/><path d="M728.1 547.4 739.4 550.0 732.7 559.0 721.4 555.1Z" fill="#955e73" stroke="#955e73"/><path d="M739.4 550.0 750.7 552.6 743.9 562.8 732.7 559.0Z" fill="#926373" stroke="#926373"/><path d="M750.7 552.6 762.0 555.2 755.2 566.3 743.9 562.8Z" fill="#906973" stroke="#906973"/><path d="M762.0 555.2 773.3 558.4 766.4 569.6 755.2 566.3Z" fill="#8d6e73" stroke="#8d6e73"/><path d="M773.3 558.4 784.6 561.5 777.7 572.7 766.4 569.6Z" fill="#8a7373" stroke="#8a7373"/><path d="M784.6 561.5 795.9 564.4 789.0 575.6 777.7 572.7Z" fill="#887873" stroke="#887873"/><path d="M795.9 564.4 807.2 567.1 800.3 578.3 789.0 575.6Z" fill="#877d73" stroke="#877d73"/><path d="M807.2 567.1 818.5 569.6 811.6 580.8 800.3 578.3Z" fill="#878273" stroke="#878273"/><path d="M818.5 569.6 829.8 571.8 822.9 583.1 811.6 580.8Z" fill="#888773" stroke="#888773"/><path d="M829.8 571.8 841.1 573.9 834.2 585.1 822.9 583.1Z" fill="#8a8c73" stroke="#8a8c73"/><path d="M841.1 573.9 852.4 575.9 845.6 587.0 834.2 585.1Z" fill="#8d9173" stroke="#8d9173"/><path d="M852.4 575.9 863.7 578.4 856.9 588.6 845.6 587.0Z" fill="#909673" stroke="#909673"/><path d="M863.7 578.4 875.0 581.0 868.3 590.0 856.9 588.6Z" fill="#929c73" stroke="#929c73"/><path d="M875.0 581.0 886.3 583.6 879.6 591.3 868.3 590.0Z" fill="#95a173" stroke="#95a173"/><path d="M886.3 583.6 897.6 586.2 891.0 592.7 879.6 591.3Z" fill="#98a673" stroke="#98a673"/><path d="M897.6 586.2 908.9 588.8 902.3 595.3 891.0 592.7Z" fill="#99ab73" stroke="#99ab73"/><path d="M908.9 588.8 920.2 591.4 913.6 597.9 902.3 595.3Z" fill="#99b073" stroke="#99b073"/><path d="M920.2 591.4 931.5 593.9 924.9 600.5 913.6 597.9Z" fill="#99b573" stroke="#99b573"/><path d="M931.5 593.9 942.8 596.5 936.2 603.1 924.9 600.5Z" fill="#99ba73" stroke="#99ba73"/><path d="M942.8 596.5 954.1 599.1 947.5 605.7 936.2 603.1Z" fill="#99bf73" stroke="#99bf73"/><path d="M954.1 599.1 965.4 601.7 958.8 608.2 947.5 605.7Z" fill="#99c473" stroke="#99c473"/><path d="M965.4 601.7 976.7 604.3 970.1 610.8 958.8 608.2Z" fill="#99c973" stroke="#99c973"/><path d="M976.7 604.3 988.0 606.9 981.4 613.4 970.1 610.8Z" fill="#99cf73" stroke="#99cf73"/><path d="M988.0 606.9 999.3 609.5 992.7 616.0 981.4 613.4Z" fill="#99d473" stroke="#99d473"/><path d="M999.3 609.5 1010.6 612.0 1004.0 618.6 992.7 616.0Z" fill="#99d973" stroke="#99d973"/><path d="M1010.6 612.0 1021.9 614.6 1015.3 621.2 1004.0 618.6Z" fill="#99de73" stroke="#99de73"/><path d="M1021.9 614.6 1033.2 617.2 1026.6 623.7 1015.3 621.2Z" fill="#99e373" stroke="#99e373"/><path d="M1033.2 617.2 1044.5 619.8 1037.9 626.3 1026.6 623.7Z" fill="#99e873" stroke="#99e873"/><path d="M1044.5 619.8 1055.8 622.4 1049.2 628.9 1037.9 626.3Z" fill="#99ed73" stroke="#99ed73"/><path d="M1055.8 622.4 1067.1 625.0 1060.5 631.5 1049.2 628.9Z" fill="#99f273" stroke="#99f273"/><path d="M1067.1 625.0 1078.4 627.5 1071.8 634.1 1060.5 631.5Z" fill="#99f773" stroke="#99f773"/><path d="M1078.4 627.5 1089.7 630.1 1083.1 636.7 1071.8 634.1Z" fill="#99fc73" stroke="#99fc73"/><path d="M531.4 494.4 542.7 497.0 536.0 503.5 524.7 500.9Z" fill="#990378" stroke="#990378"/><path d="M542.7 497.0 554.0 499.6 547.3 506.1 536.0 503.5Z" fill="#990878" stroke="#990878"/><path d="M554.0 499.6 565.3 502.2 558.6 508.7 547.3 506.1Z" fill="#990d78" stroke="#990d78"/><path d="M565.3 502.2 576.6 504.7 569.9 511.3 558.6 508.7Z" fill="#991278" stroke="#991278"/><path d="M576.6 504.7 587.9 507.3 581.2 513.9 569.9 511.3Z" fill="#991778" stroke="#991778"/><path d="M587.9 507.3 599.2 509.9 592.5 516.4 581.2 513.9Z" fill="#991c78" stroke="#991c78"/><path d="M599.2 509.9 610.5 512.5 603.8 519.0 592.5 516.4Z" fill="#992178" stroke="#992178"/><path d="M610.5 512.5 621.8 515.1 615.1 521.6 603.8 519.0Z" fill="#992678" stroke="#992678"/><path d="M621.8 515.1 633.1 517.7 626.4 524.2 615.1 521.6Z" fill="#992b78" stroke="#992b78"/><path d="M633.1 517.7 644.4 520.2 637.7 526.8 626.4 524.2Z" fill="#993078" stroke="#993078"/><path d="M644.4 520.2 655.7 522.8 649.0 529.4 637.7 526.8Z" fill="#993678" stroke="#993678"/><path d="M655.7 522.8 667.0 525.4 660.3 531.9 649.0 529.4Z" fill="#993b78" stroke="#993b78"/><path d="M667.0 525.4 678.3 528.0 671.6 534.5 660.3 531.9Z" fill="#994078" stroke="#994078"/><path d="M678.3 528.0 689.6 530.6 682.9 537.1 671.6 534.5Z" fill="#994578" stroke="#994578"/><path d="M689.6 530.6 700.9 533.2 694.2 539.7 682.9 537.1Z" fill="#994a78" stroke="#994a78"/><path d="M700.9 533.2 712.2 535.7 705.5 542.3 694.2 539.7Z" fill="#994f78" stroke="#994f78"/><path d="M712.2 535.7 723.5 538.3 716.8 544.9 705.5 542.3Z" fill="#995478" stroke="#995478"/><path d="M723.5 538.3 734.8 540.9 728.1 547.4 716.8 544.9Z" fill="#995978" stroke="#995978"/><path d="M734.8 540.9 746.1 543.5 739.4 550.0 728.1 547.4Z" fill="#995e78" stroke="#995e78"/><path d="M746.1 543.5 757.4 546.1 750.7 552.6 739.4 550.0Z" fill="#996378" stroke="#996378"/><path d="M757.4 546.1 768.7 548.7 762.0 555.2 750.7 552.6Z" fill="#996978" stroke="#996978"/><path d="M768.7 548.7 780.0 551.2 773.3 558.4 762.0 555.2Z" fill="#986e78" stroke="#986e78"/><path d="M780.0 551.2 791.3 553.8 784.6 561.5 773.3 558.4Z" fill="#977378" stroke="#977378"/><path d="M791.3 553.8 802.6 556.4 795.9 564.4 784.6 561.5Z" fill="#967878" stroke="#967878"/><path d="M802.6 556.4 813.9 559.0 807.2 567.1 795.9 564.4Z" fill="#967d78" stroke="#967d78"/><path d="M813.9 559.0 825.2 561.6 818.5 569.6 807.2 567.1Z" fill="#968278" stroke="#968278"/><path d="M825.2 561.6 836.5 564.2 829.8 571.8 818.5 569.6Z" fill="#968778" stroke="#968778"/><path d="M836.5 564.2 847.8 566.7 841.1 573.9 829.8 571.8Z" fill="#978c78" stroke="#978c78"/><path d="M847.8 566.7 859.1 569.3 852.4 575.9 841.1 573.9Z" fill="#989178" stroke="#989178"/><path d="M859.1 569.3 870.4 571.9 863.7 578.4 852.4 575.9Z" fill="#999678" stroke="#999678"/><path d="M870.4 571.9 881.7 574.5 875.0 581.0 863.7 578.4Z" fill="#999c78" stroke="#999c78"/><path d="M881.7 574.5 893.0 577.1 886.3 583.6 875.0 581.0Z" fill="#99a178" stroke="#99a178"/><path d="M893.0 577.1 904.3 579.7 897.6 586.2 886.3 583.6Z" fill="#99a678" stroke="#99a678"/><path d="M904.3 579.7 915.6 582.2 908.9 588.8 897.6 586.2Z" fill="#99ab78" stroke="#99ab78"/><path d="M915.6 582.2 926.9 584.8 920.2 591.4 908.9 588.8Z" fill="#99b078" stroke="#99b078"/><path d="M926.9 584.8 938.2 587.4 931.5 593.9 920.2 591.4Z" fill="#99b578" stroke="#99b578"/><path d="M938.2 587.4 949.5 590.0 942.8 596.5 931.5 593.9Z" fill="#99ba78" stroke="#99ba78"/><path d="M949.5 590.0 960.8 592.6 954.1 599.1 942.8 596.5Z" fill="#99bf78" stroke="#99bf78"/><path d="M960.8 592.6 972.1 595.2 965.4 601.7 954.1 599.1Z" fill="#99c478" stroke="#99c478"/><path d="M972.1 595.2 983.4 597.7 976.7 604.3 965.4 601.7Z" fill="#99c978" stroke="#99c978"/><path d="M983.4 597.7 994.7 600.3 988.0 606.9 976.7 604.3Z" fill="#99cf78" stroke="#99cf78"/><path d="M994.7 600.3 1006.0 602.9 999.3 609.5 988.0 606.9Z" fill="#99d478" stroke="#99d478"/><path d="M1006.0 602.9 1017.3 605.5 1010.6 612.0 999.3 609.5Z" fill="#99d978" stroke="#99d978"/><path d="M1017.3 605.5 1028.6 608.1 1021.9 614.6 1010.6 612.0Z" fill="#99de78" stroke="#99de78"/><path d="M1028.6 608.1 1039.9 610.7 1033.2 617.2 1021.9 614.6Z" fill="#99e378" stroke="#99e378"/><path d="M1039.9 610.7 1051.2 613.2 1044.5 619.8 1033.2 617.2Z" fill="#99e878" stroke="#99e878"/><path d="M1051.2 613.2 1062.5 615.8 1055.8 622.4 1044.5 619.8Z" fill="#99ed78" stroke="#99ed78"/><path d="M1062.5 615.8 1073.8 618.4 1067.1 625.0 1055.8 622.4Z" fill="#99f278" stroke="#99f278"/><path d="M1073.8 618.4 1085.1 621.0 1078.4 627.5 1067.1 625.0Z" fill="#99f778" stroke="#99f778"/><path d="M1085.1 621.0 1096.4 623.6 1089.7 630.1 1078.4 627.5Z" fill="#99fc78" stroke="#99fc78"/><path d="M538.0 487.9 549.3 490.4 542.7 497.0 531.4 494.4Z" fill="#99037d" stroke="#99037d"/><path d="M549.3 490.4 560.6 493.0 554.0 499.6 542.7 497.0Z" fill="#99087d" stroke="#99087d"/><path d="M560.6 493.0 571.9 495.6 565.3 502.2 554.0 499.6Z" fill="#990d7d" stroke="#990d7d"/><path d="M571.9 495.6 583.2 498.2 576.6 504.7 565.3 502.2Z" fill="#99127d" stroke="#99127d"/><path d="M583.2 498.2 594.5 500.8 587.9 507.3 576.6 504.7Z" fill="#99177d" stroke="#99177d"/><path d="M594.5 500.8 605.8 503.4 599.2 509.9 587.9 507.3Z" fill="#991c7d" stroke="#991c7d"/><path d="M605.8 503.4 617.1 505.9 610.5 512.5 599.2 509.9Z" fill="#99217d" stroke="#99217d"/><path d="M617.1 505.9 628.4 508.5 621.8 515.1 610.5 512.5Z" fill="#99267d" stroke="#99267d"/><path d="M628.4 508.5 639.7 511.1 633.1 517.7 621.8 515.1Z" fill="#992b7d" stroke="#992b7d"/><path d="M639.7 511.1 651.0 513.7 644.4 520.2 633.1 517.7Z" fill="#99307d" stroke="#99307d"/><path d="M651.0 513.7 662.3 516.3 655.7 522.8 644.4 520.2Z" fill="#99367d" stroke="#99367d"/><path d="M662.3 516.3 673.6 518.9 667.0 525.4 655.7 522.8Z" fill="#993b7d" stroke="#993b7d"/><path d="M673.6 518.9 684.9 521.4 678.3 528.0 667.0 525.4Z" fill="#99407d" stroke="#99407d"/><path d="M684.9 521.4 696.2 524.0 689.6 530.6 678.3 528.0Z" fill="#99457d" stroke="#99457d"/><path d="M696.2 524.0 707.5 526.6 700.9 533.2 689.6 530.6Z" fill="#994a7d" stroke="#994a7d"/><path d="M707.5 526.6 718.8 529.2 712.2 535.7 700.9 533.2Z" fill="#994f7d" stroke="#994f7d"/><path d="M718.8 529.2 730.1 531.8 723.5 538.3 712.2 535.7Z" fill="#99547d" stroke="#99547d"/><path d="M730.1 531.8 741.4 534.4 734.8 540.9 723.5 538.3Z" fill="#99597d" stroke="#99597d"/><path d="M741.4 534.4 752.7 536.9 746.1 543.5 734.8 540.9Z" fill="#995e7d" stroke="#995e7d"/><path d="M752.7 536.9 764.0 539.5 757.4 546.1 746.1 543.5Z" fill="#99637d" stroke="#99637d"/><path d="M764.0 539.5 775.3 542.1 768.7 548.7 757.4 546.1Z" fill="#99697d" stroke="#99697d"/><path d="M775.3 542.1 786.6 544.7 780.0 551.2 768.7 548.7Z" fill="#996e7d" stroke="#996e7d"/><path d="M786.6 544.7 797.9 547.3 791.3 553.8 780.0 551.2Z" fill="#99737d" stroke="#99737d"/><path d="M797.9 547.3 809.2 549.9 802.6 556.4 791.3 553.8Z" fill="#99787d" stroke="#99787d"/><path d="M809.2 549.9 820.5 552.5 813.9 559.0 802.6 556.4Z" fill="#997d7d" stroke="#997d7d"/><path d="M820.5 552.5 831.9 555.0 825.2 561.6 813.9 559.0Z" fill="#99827d" stroke="#99827d"/><path d="M831.9 555.0 843.2 557.6 836.5 564.2 825.2 561.6Z" fill="#99877d" stroke="#99877d"/><path d="M843.2 557.6 854.5 560.2 847.8 566.7 836.5 564.2Z" fill="#998c7d" stroke="#998c7d"/><path d="M854.5 560.2 865.8 562.8 859.1 569.3 847.8 566.7Z" fill="#99917d" stroke="#99917d"/><path d="M865.8 562.8 877.1 565.4 870.4 571.9 859.1 569.3Z" fill="#99967d" stroke="#99967d"/><path d="M877.1 565.4 888.4 568.0 881.7 574.5 870.4 571.9Z" fill="#999c7d" stroke="#999c7d"/><path d="M888.4 568.0 899.7 570.5 893.0 577.1 881.7 574.5Z" fill="#99a17d" stroke="#99a17d"/><path d="M899.7 570.5 911.0 573.1 904.3 579.7 893.0 577.1Z" fill="#99a67d" stroke="#99a67d"/><path d="M911.0 573.1 922.3 575.7 915.6 582.2 904.3 579.7Z" fill="#99ab7d" stroke="#99ab7d"/><path d="M922.3 575.7 933.6 578.3 926.9 584.8 915.6 582.2Z" fill="#99b07d" stroke="#99b07d"/><path d="M933.6 578.3 944.9 580.9 938.2 587.4 926.9 584.8Z" fill="#99b57d" stroke="#99b57d"/><path d="M944.9 580.9 956.2 583.5 949.5 590.0 938.2 587.4Z" fill="#99ba7d" stroke="#99ba7d"/><path d="M956.2 583.5 967.5 586.0 960.8 592.6 949.5 590.0Z" fill="#99bf7d" stroke="#99bf7d"/><path d="M967.5 586.0 978.8 588.6 972.1 595.2 960.8 592.6Z" fill="#99c47d" stroke="#99c47d"/><path d="M978.8 588.6 990.1 591.2 983.4 597.7 972.1 595.2Z" fill="#99c97d" stroke="#99c97d"/><path d="M990.1 591.2 1001.4 593.8 994.7 600.3 983.4 597.7Z" fill="#99cf7d" stroke="#99cf7d"/><path d="M1001.4 593.8 1012.7 596.4 1006.0 602.9 994.7 600.3Z" fill="#99d47d" stroke="#99d47d"/><path d="M1012.7 596.4 1024.0 599.0 1017.3 605.5 1006.0 602.9Z" fill="#99d97d" stroke="#99d97d"/><path d="M1024.0 599.0 1035.3 601.5 1028.6 608.1 1017.3 605.5Z" fill="#99de7d" stroke="#99de7d"/><path d="M1035.3 601.5 1046.6 604.1 1039.9 610.7 1028.6 608.1Z" fill="#99e37d" stroke="#99e37d"/><path d="M1046.6 604.1 1057.9 606.7 1051.2 613.2 1039.9 610.7Z" fill="#99e87d" stroke="#99e87d"/><path d="M1057.9 606.7 1069.2 609.3 1062.5 615.8 1051.2 613.2Z" fill="#99ed7d" stroke="#99ed7d"/><path d="M1069.2 609.3 1080.5 611.9 1073.8 618.4 1062.5 615.8Z" fill="#99f27d" stroke="#99f27d"/><path d="M1080.5 611.9 1091.8 614.5 1085.1 621.0 1073.8 618.4Z" fill="#99f77d" stroke="#99f77d"/><path d="M1091.8 614.5 1103.1 617.0 1096.4 623.6 1085.1 621.0Z" fill="#99fc7d" stroke="#99fc7d"/><path d="M544.7 481.3 556.0 483.9 549.3 490.4 538.0 487.9Z" fill="#990382" stroke="#990382"/><path d="M556.0 483.9 567.3 486.5 560.6 493.0 549.3 490.4Z" fill="#990882" stroke="#990882"/><path d="M567.3 486.5 578.6 489.1 571.9 495.6 560.6 493.0Z" fill="#990d82" stroke="#990d82"/><path d="M578.6 489.1 589.9 491.7 583.2 498.2 571.9 495.6Z" fill="#991282" stroke="#991282"/><path d="M589.9 491.7 601.2 494.2 594.5 500.8 583.2 498.2Z" fill="#991782" stroke="#991782"/><path d="M601.2 494.2 612.5 496.8 605.8 503.4 594.5 500.8Z" fill="#991c82" stroke="#991c82"/><path d="M612.5 496.8 623.8 499.4 617.1 505.9 605.8 503.4Z" fill="#992182" stroke="#992182"/><path d="M623.8 499.4 635.1 502.0 628.4 508.5 617.1 505.9Z" fill="#992682" stroke="#992682"/><path d="M635.1 502.0 646.4 504.6 639.7 511.1 628.4 508.5Z" fill="#992b82" stroke="#992b82"/><path d="M646.4 504.6 657.7 507.2 651.0 513.7 639.7 511.1Z" fill="#993082" stroke="#993082"/><path d="M657.7 507.2 669.0 509.7 662.3 516.3 651.0 513.7Z" fill="#993682" stroke="#993682"/><path d="M669.0 509.7 680.3 512.3 673.6 518.9 662.3 516.3Z" fill="#993b82" stroke="#993b82"/><path d="M680.3 512.3 691.6 514.9 684.9 521.4 673.6 518.9Z" fill="#994082" stroke="#994082"/><path d="M691.6 514.9 702.9 517.5 696.2 524.0 684.9 521.4Z" fill="#994582" stroke="#994582"/><path d="M702.9 517.5 714.2 520.1 707.5 526.6 696.2 524.0Z" fill="#994a82" stroke="#994a82"/><path d="M714.2 520.1 725.5 522.7 718.8 529.2 707.5 526.6Z" fill="#994f82" stroke="#994f82"/><path d="M725.5 522.7 736.8 525.2 730.1 531.8 718.8 529.2Z" fill="#995482" stroke="#995482"/><path d="M736.8 525.2 748.1 527.8 741.4 534.4 730.1 531.8Z" fill="#995982" stroke="#995982"/><path d="M748.1 527.8 759.4 530.4 752.7 536.9 741.4 534.4Z" fill="#995e82" stroke="#995e82"/><path d="M759.4 530.4 770.7 533.0 764.0 539.5 752.7 536.9Z" fill="#996382" stroke="#996382"/><path d="M770.7 533.0 782.0 535.6 775.3 542.1 764.0 539.5Z" fill="#996982" stroke="#996982"/><path d="M782.0 535.6 793.3 538.2 786.6 544.7 775.3 542.1Z" fill="#996e82" stroke="#996e82"/><path d="M793.3 538.2 804.6 540.7 797.9 547.3 786.6 544.7Z" fill="#997382" stroke="#997382"/><path d="M804.6 540.7 815.9 543.3 809.2 549.9 797.9 547.3Z" fill="#997882" stroke="#997882"/><path d="M815.9 543.3 827.2 545.9 820.5 552.5 809.2 549.9Z" fill="#997d82" stroke="#997d82"/><path d="M827.2 545.9 838.5 548.5 831.9 555.0 820.5 552.5Z" fill="#998282" stroke="#998282"/><path d="M838.5 548.5 849.8 551.1 843.2 557.6 831.9 555.0Z" fill="#998782" stroke="#998782"/><path d="M849.8 551.1 861.1 553.7 854.5 560.2 843.2 557.6Z" fill="#998c82" stroke="#998c82"/><path d="M861.1 553.7 872.4 556.2 865.8 562.8 854.5 560.2Z" fill="#999182" stroke="#999182"/><path d="M872.4 556.2 883.7 558.8 877.1 565.4 865.8 562.8Z" fill="#999682" stroke="#999682"/><path d="M883.7 558.8 895.0 561.4 888.4 568.0 877.1 565.4Z" fill="#999c82" stroke="#999c82"/><path d="M895.0 561.4 906.3 564.0 899.7 570.5 888.4 568.0Z" fill="#99a182" stroke="#99a182"/><path d="M906.3 564.0 917.6 566.6 911.0 573.1 899.7 570.5Z" fill="#99a682" stroke="#99a682"/><path d="M917.6 566.6 928.9 569.2 922.3 575.7 911.0 573.1Z" fill="#99ab82" stroke="#99ab82"/><path d="M928.9 569.2 940.2 571.7 933.6 578.3 922.3 575.7Z" fill="#99b082" stroke="#99b082"/><path d="M940.2 571.7 951.5 574.3 944.9 580.9 933.6 578.3Z" fill="#99b582" stroke="#99b582"/><path d="M951.5 574.3 962.8 576.9 956.2 583.5 944.9 580.9Z" fill="#99ba82" stroke="#99ba82"/><path d="M962.8 576.9 974.1 579.5 967.5 586.0 956.2 583.5Z" fill="#99bf82" stroke="#99bf82"/><path d="M974.1 579.5 985.4 582.1 978.8 588.6 967.5 586.0Z" fill="#99c482" stroke="#99c482"/><path d="M985.4 582.1 996.7 584.7 990.1 591.2 978.8 588.6Z" fill="#99c982" stroke="#99c982"/><path d="M996.7 584.7 1008.0 587.2 1001.4 593.8 990.1 591.2Z" fill="#99cf82" stroke="#99cf82"/><path d="M1008.0 587.2 1019.3 589.8 1012.7 596.4 1001.4 593.8Z" fill="#99d482" stroke="#99d482"/><path d="M1019.3 589.8 1030.6 592.4 1024.0 599.0 1012.7 596.4Z" fill="#99d982" stroke="#99d982"/><path d="M1030.6 592.4 1041.9 595.0 1035.3 601.5 1024.0 599.0Z" fill="#99de82" stroke="#99de82"/><path d="M1041.9 595.0 1053.2 597.6 1046.6 604.1 1035.3 601.5Z" fill="#99e382" stroke="#99e382"/><path d="M1053.2 597.6 1064.5 600.2 1057.9 606.7 1046.6 604.1Z" fill="#99e882" stroke="#99e882"/><path d="M1064.5 600.2 1075.8 602.7 1069.2 609.3 1057.9 606.7Z" fill="#99ed82" stroke="#99ed82"/><path d="M1075.8 602.7 1087.1 605.3 1080.5 611.9 1069.2 609.3Z" fill="#99f282" stroke="#99f282"/><path d="M1087.1 605.3 1098.4 607.9 1091.8 614.5 1080.5 611.9Z" fill="#99f782" stroke="#99f782"/><path d="M1098.4 607.9 1109.7 610.5 1103.1 617.0 1091.8 614.5Z" fill="#99fc82" stroke="#99fc82"/><path d="M551.4 474.8 562.7 477.4 556.0 483.9 544.7 481.3Z" fill="#990387" stroke="#990387"/><path d="M562.7 477.4 574.0 479.9 567.3 486.5 556.0 483.9Z" fill="#990887" stroke="#990887"/><path d="M574.0 479.9 585.3 482.5 578.6 489.1 567.3 486.5Z" fill="#990d87" stroke="#990d87"/><path d="M585.3 482.5 596.6 485.1 589.9 491.7 578.6 489.1Z" fill="#991287" stroke="#991287"/><path d="M596.6 485.1 607.9 487.7 601.2 494.2 589.9 491.7Z" fill="#991787" stroke="#991787"/><path d="M607.9 487.7 619.2 490.3 612.5 496.8 601.2 494.2Z" fill="#991c87" stroke="#991c87"/><path d="M619.2 490.3 630.5 492.9 623.8 499.4 612.5 496.8Z" fill="#992187" stroke="#992187"/><path d="M630.5 492.9 641.8 495.4 635.1 502.0 623.8 499.4Z" fill="#992687" stroke="#992687"/><path d="M641.8 495.4 653.1 498.0 646.4 504.6 635.1 502.0Z" fill="#992b87" stroke="#992b87"/><path d="M653.1 498.0 664.4 500.6 657.7 507.2 646.4 504.6Z" fill="#993087" stroke="#993087"/><path d="M664.4 500.6 675.7 503.2 669.0 509.7 657.7 507.2Z" fill="#993687" stroke="#993687"/><path d="M675.7 503.2 687.0 505.8 680.3 512.3 669.0 509.7Z" fill="#993b87" stroke="#993b87"/><path d="M687.0 505.8 698.3 508.4 691.6 514.9 680.3 512.3Z" fill="#994087" stroke="#994087"/><path d="M698.3 508.4 709.6 511.0 702.9 517.5 691.6 514.9Z" fill="#994587" stroke="#994587"/><path d="M709.6 511.0 720.9 513.5 714.2 520.1 702.9 517.5Z" fill="#994a87" stroke="#994a87"/><path d="M720.9 513.5 732.2 516.1 725.5 522.7 714.2 520.1Z" fill="#994f87" stroke="#994f87"/><path d="M732.2 516.1 743.5 518.7 736.8 525.2 725.5 522.7Z" fill="#995487" stroke="#995487"/><path d="M743.5 518.7 754.8 521.3 748.1 527.8 736.8 525.2Z" fill="#995987" stroke="#995987"/><path d="M754.8 521.3 766.1 523.9 759.4 530.4 748.1 527.8Z" fill="#995e87" stroke="#995e87"/><path d="M766.1 523.9 777.4 526.5 770.7 533.0 759.4 530.4Z" fill="#996387" stroke="#996387"/><path d="M777.4 526.5 788.7 529.0 782.0 535.6 770.7 533.0Z" fill="#996987" stroke="#996987"/><path d="M788.7 529.0 799.9 532.3 793.3 538.2 782.0 535.6Z" fill="#986e87" stroke="#986e87"/><path d="M799.9 532.3 811.2 535.3 804.6 540.7 793.3 538.2Z" fill="#977387" stroke="#977387"/><path d="M811.2 535.3 822.5 538.2 815.9 543.3 804.6 540.7Z" fill="#967887" stroke="#967887"/><path d="M822.5 538.2 833.8 540.9 827.2 545.9 815.9 543.3Z" fill="#967d87" stroke="#967d87"/><path d="M833.8 540.9 845.1 543.4 838.5 548.5 827.2 545.9Z" fill="#968287" stroke="#968287"/><path d="M845.1 543.4 856.4 545.7 849.8 551.1 838.5 548.5Z" fill="#968787" stroke="#968787"/><path d="M856.4 545.7 867.7 547.8 861.1 553.7 849.8 551.1Z" fill="#978c87" stroke="#978c87"/><path d="M867.7 547.8 879.1 549.7 872.4 556.2 861.1 553.7Z" fill="#989187" stroke="#989187"/><path d="M879.1 549.7 890.4 552.3 883.7 558.8 872.4 556.2Z" fill="#999687" stroke="#999687"/><path d="M890.4 552.3 901.7 554.9 895.0 561.4 883.7 558.8Z" fill="#999c87" stroke="#999c87"/><path d="M901.7 554.9 913.0 557.5 906.3 564.0 895.0 561.4Z" fill="#99a187" stroke="#99a187"/><path d="M913.0 557.5 924.3 560.0 917.6 566.6 906.3 564.0Z" fill="#99a687" stroke="#99a687"/><path d="M924.3 560.0 935.6 562.6 928.9 569.2 917.6 566.6Z" fill="#99ab87" stroke="#99ab87"/><path d="M935.6 562.6 946.9 565.2 940.2 571.7 928.9 569.2Z" fill="#99b087" stroke="#99b087"/><path d="M946.9 565.2 958.2 567.8 951.5 574.3 940.2 571.7Z" fill="#99b587" stroke="#99b587"/><path d="M958.2 567.8 969.5 570.4 962.8 576.9 951.5 574.3Z" fill="#99ba87" stroke="#99ba87"/><path d="M969.5 570.4 980.8 573.0 974.1 579.5 962.8 576.9Z" fill="#99bf87" stroke="#99bf87"/><path d="M980.8 573.0 992.1 575.5 985.4 582.1 974.1 579.5Z" fill="#99c487" stroke="#99c487"/><path d="M992.1 575.5 1003.4 578.1 996.7 584.7 985.4 582.1Z" fill="#99c987" stroke="#99c987"/><path d="M1003.4 578.1 1014.7 580.7 1008.0 587.2 996.7 584.7Z" fill="#99cf87" stroke="#99cf87"/><path d="M1014.7 580.7 1026.0 583.3 1019.3 589.8 1008.0 587.2Z" fill="#99d487" stroke="#99d487"/><path d="M1026.0 583.3 1037.3 585.9 1030.6 592.4 1019.3 589.8Z" fill="#99d987" stroke="#99d987"/><path d="M1037.3 585.9 1048.6 588.5 1041.9 595.0 1030.6 592.4Z" fill="#99de87" stroke="#99de87"/><path d="M1048.6 588.5 1059.9 591.0 1053.2 597.6 1041.9 595.0Z" fill="#99e387" stroke="#99e387"/><path d="M1059.9 591.0 1071.2 593.6 1064.5 600.2 1053.2 597.6Z" fill="#99e887" stroke="#99e887"/><path d="M1071.2 593.6 1082.5 596.2 1075.8 602.7 1064.5 600.2Z" fill="#99ed87" stroke="#99ed87"/><path d="M1082.5 596.2 1093.8 598.8 1087.1 605.3 1075.8 602.7Z" fill="#99f287" stroke="#99f287"/><path d="M1093.8 598.8 1105.1 601.4 1098.4 607.9 1087.1 605.3Z" fill="#99f787" stroke="#99f787"/><path d="M1105.1 601.4 1116.4 604.0 1109.7 610.5 1098.4 607.9Z" fill="#99fc87" stroke="#99fc87"/><path d="M558.0 468.2 569.3 470.8 562.7 477.4 551.4 474.8Z" fill="#99038c" stroke="#99038c"/><path d="M569.3 470.8 580.6 473.4 574.0 479.9 562.7 477.4Z" fill="#99088c" stroke="#99088c"/><path d="M580.6 473.4 591.9 476.0 585.3 482.5 574.0 479.9Z" fill="#990d8c" stroke="#990d8c"/><path d="M591.9 476.0 603.2 478.6 596.6 485.1 585.3 482.5Z" fill="#99128c" stroke="#99128c"/><path d="M603.2 478.6 614.5 481.2 607.9 487.7 596.6 485.1Z" fill="#99178c" stroke="#99178c"/><path d="M614.5 481.2 625.8 483.7 619.2 490.3 607.9 487.7Z" fill="#991c8c" stroke="#991c8c"/><path d="M625.8 483.7 637.1 486.3 630.5 492.9 619.2 490.3Z" fill="#99218c" stroke="#99218c"/><path d="M637.1 486.3 648.4 488.9 641.8 495.4 630.5 492.9Z" fill="#99268c" stroke="#99268c"/><path d="M648.4 488.9 659.7 491.5 653.1 498.0 641.8 495.4Z" fill="#992b8c" stroke="#992b8c"/><path d="M659.7 491.5 671.0 494.1 664.4 500.6 653.1 498.0Z" fill="#99308c" stroke="#99308c"/><path d="M671.0 494.1 682.3 496.7 675.7 503.2 664.4 500.6Z" fill="#99368c" stroke="#99368c"/><path d="M682.3 496.7 693.6 499.2 687.0 505.8 675.7 503.2Z" fill="#993b8c" stroke="#993b8c"/><path d="M693.6 499.2 704.9 501.8 698.3 508.4 687.0 505.8Z" fill="#99408c" stroke="#99408c"/><path d="M704.9 501.8 716.2 504.4 709.6 511.0 698.3 508.4Z" fill="#99458c" stroke="#99458c"/><path d="M716.2 504.4 727.5 507.0 720.9 513.5 709.6 511.0Z" fill="#994a8c" stroke="#994a8c"/><path d="M727.5 507.0 738.8 509.6 732.2 516.1 720.9 513.5Z" fill="#994f8c" stroke="#994f8c"/><path d="M738.8 509.6 750.1 512.2 743.5 518.7 732.2 516.1Z" fill="#99548c" stroke="#99548c"/><path d="M750.1 512.2 761.4 515.9 754.8 521.3 743.5 518.7Z" fill="#98598c" stroke="#98598c"/><path d="M761.4 515.9 772.6 519.8 766.1 523.9 754.8 521.3Z" fill="#955e8c" stroke="#955e8c"/><path d="M772.6 519.8 783.8 523.5 777.4 526.5 766.1 523.9Z" fill="#92638c" stroke="#92638c"/><path d="M783.8 523.5 795.1 527.1 788.7 529.0 777.4 526.5Z" fill="#90698c" stroke="#90698c"/><path d="M795.1 527.1 806.4 530.4 799.9 532.3 788.7 529.0Z" fill="#8d6e8c" stroke="#8d6e8c"/><path d="M806.4 530.4 817.6 533.5 811.2 535.3 799.9 532.3Z" fill="#8a738c" stroke="#8a738c"/><path d="M817.6 533.5 828.9 536.4 822.5 538.2 811.2 535.3Z" fill="#88788c" stroke="#88788c"/><path d="M828.9 536.4 840.2 539.1 833.8 540.9 822.5 538.2Z" fill="#877d8c" stroke="#877d8c"/><path d="M840.2 539.1 851.5 541.5 845.1 543.4 833.8 540.9Z" fill="#87828c" stroke="#87828c"/><path d="M851.5 541.5 862.8 543.8 856.4 545.7 845.1 543.4Z" fill="#88878c" stroke="#88878c"/><path d="M862.8 543.8 874.2 545.9 867.7 547.8 856.4 545.7Z" fill="#8a8c8c" stroke="#8a8c8c"/><path d="M874.2 545.9 885.5 547.7 879.1 549.7 867.7 547.8Z" fill="#8d918c" stroke="#8d918c"/><path d="M885.5 547.7 896.8 549.4 890.4 552.3 879.1 549.7Z" fill="#90968c" stroke="#90968c"/><path d="M896.8 549.4 908.2 550.8 901.7 554.9 890.4 552.3Z" fill="#929c8c" stroke="#929c8c"/><path d="M908.2 550.8 919.6 552.1 913.0 557.5 901.7 554.9Z" fill="#95a18c" stroke="#95a18c"/><path d="M919.6 552.1 930.9 553.5 924.3 560.0 913.0 557.5Z" fill="#98a68c" stroke="#98a68c"/><path d="M930.9 553.5 942.2 556.1 935.6 562.6 924.3 560.0Z" fill="#99ab8c" stroke="#99ab8c"/><path d="M942.2 556.1 953.5 558.7 946.9 565.2 935.6 562.6Z" fill="#99b08c" stroke="#99b08c"/><path d="M953.5 558.7 964.8 561.2 958.2 567.8 946.9 565.2Z" fill="#99b58c" stroke="#99b58c"/><path d="M964.8 561.2 976.1 563.8 969.5 570.4 958.2 567.8Z" fill="#99ba8c" stroke="#99ba8c"/><path d="M976.1 563.8 987.4 566.4 980.8 573.0 969.5 570.4Z" fill="#99bf8c" stroke="#99bf8c"/><path d="M987.4 566.4 998.7 569.0 992.1 575.5 980.8 573.0Z" fill="#99c48c" stroke="#99c48c"/><path d="M998.7 569.0 1010.0 571.6 1003.4 578.1 992.1 575.5Z" fill="#99c98c" stroke="#99c98c"/><path d="M1010.0 571.6 1021.3 574.2 1014.7 580.7 1003.4 578.1Z" fill="#99cf8c" stroke="#99cf8c"/><path d="M1021.3 574.2 1032.6 576.8 1026.0 583.3 1014.7 580.7Z" fill="#99d48c" stroke="#99d48c"/><path d="M1032.6 576.8 1043.9 579.3 1037.3 585.9 1026.0 583.3Z" fill="#99d98c" stroke="#99d98c"/><path d="M1043.9 579.3 1055.2 581.9 1048.6 588.5 1037.3 585.9Z" fill="#99de8c" stroke="#99de8c"/><path d="M1055.2 581.9 1066.5 584.5 1059.9 591.0 1048.6 588.5Z" fill="#99e38c" stroke="#99e38c"/><path d="M1066.5 584.5 1077.8 587.1 1071.2 593.6 1059.9 591.0Z" fill="#99e88c" stroke="#99e88c"/><path d="M1077.8 587.1 1089.1 589.7 1082.5 596.2 1071.2 593.6Z" fill="#99ed8c" stroke="#99ed8c"/><path d="M1089.1 589.7 1100.4 592.3 1093.8 598.8 1082.5 596.2Z" fill="#99f28c" stroke="#99f28c"/><path d="M1100.4 592.3 1111.7 594.8 1105.1 601.4 1093.8 598.8Z" fill="#99f78c" stroke="#99f78c"/><path d="M1111.7 594.8 1123.0 597.4 1116.4 604.0 1105.1 601.4Z" fill="#99fc8c" stroke="#99fc8c"/><path d="M564.7 461.7 576.0 464.3 569.3 470.8 558.0 468.2Z" fill="#990391" stroke="#990391"/><path d="M576.0 464.3 587.3 466.9 580.6 473.4 569.3 470.8Z" fill="#990891" stroke="#990891"/><path d="M587.3 466.9 598.6 469.5 591.9 476.0 580.6 473.4Z" fill="#990d91" stroke="#990d91"/><path d="M598.6 469.5 609.9 472.0 603.2 478.6 591.9 476.0Z" fill="#991291" stroke="#991291"/><path d="M609.9 472.0 621.2 474.6 614.5 481.2 603.2 478.6Z" fill="#991791" stroke="#991791"/><path d="M621.2 474.6 632.5 477.2 625.8 483.7 614.5 481.2Z" fill="#991c91" stroke="#991c91"/><path d="M632.5 477.2 643.8 479.8 637.1 486.3 625.8 483.7Z" fill="#992191" stroke="#992191"/><path d="M643.8 479.8 655.1 482.4 648.4 488.9 637.1 486.3Z" fill="#992691" stroke="#992691"/><path d="M655.1 482.4 666.4 485.0 659.7 491.5 648.4 488.9Z" fill="#992b91" stroke="#992b91"/><path d="M666.4 485.0 677.7 487.5 671.0 494.1 659.7 491.5Z" fill="#993091" stroke="#993091"/><path d="M677.7 487.5 689.0 490.1 682.3 496.7 671.0 494.1Z" fill="#993691" stroke="#993691"/><path d="M689.0 490.1 700.3 492.7 693.6 499.2 682.3 496.7Z" fill="#993b91" stroke="#993b91"/><path d="M700.3 492.7 711.6 495.3 704.9 501.8 693.6 499.2Z" fill="#994091" stroke="#994091"/><path d="M711.6 495.3 722.9 497.9 716.2 504.4 704.9 501.8Z" fill="#994591" stroke="#994591"/><path d="M722.9 497.9 734.2 500.8 727.5 507.0 716.2 504.4Z" fill="#994a91" stroke="#994a91"/><path d="M734.2 500.8 745.4 505.3 738.8 509.6 727.5 507.0Z" fill="#964f91" stroke="#964f91"/><path d="M745.4 505.3 756.6 509.7 750.1 512.2 738.8 509.6Z" fill="#925491" stroke="#925491"/><path d="M756.6 509.7 767.8 513.8 761.4 515.9 750.1 512.2Z" fill="#8d5991" stroke="#8d5991"/><path d="M767.8 513.8 779.0 517.7 772.6 519.8 761.4 515.9Z" fill="#875e91" stroke="#875e91"/><path d="M779.0 517.7 790.3 521.4 783.8 523.5 772.6 519.8Z" fill="#816391" stroke="#816391"/><path d="M790.3 521.4 801.5 524.9 795.1 527.1 783.8 523.5Z" fill="#7c6991" stroke="#7c6991"/><path d="M801.5 524.9 812.8 528.2 806.4 530.4 795.1 527.1Z" fill="#786e91" stroke="#786e91"/><path d="M812.8 528.2 824.1 531.2 817.6 533.5 806.4 530.4Z" fill="#767391" stroke="#767391"/><path d="M824.1 531.2 835.4 534.1 828.9 536.4 817.6 533.5Z" fill="#747891" stroke="#747891"/><path d="M835.4 534.1 846.7 536.8 840.2 539.1 828.9 536.4Z" fill="#737d91" stroke="#737d91"/><path d="M846.7 536.8 858.0 539.2 851.5 541.5 840.2 539.1Z" fill="#738291" stroke="#738291"/><path d="M858.0 539.2 869.3 541.6 862.8 543.8 851.5 541.5Z" fill="#748791" stroke="#748791"/><path d="M869.3 541.6 880.6 543.7 874.2 545.9 862.8 543.8Z" fill="#768c91" stroke="#768c91"/><path d="M880.6 543.7 891.9 545.6 885.5 547.7 874.2 545.9Z" fill="#789191" stroke="#789191"/><path d="M891.9 545.6 903.3 547.3 896.8 549.4 885.5 547.7Z" fill="#7c9691" stroke="#7c9691"/><path d="M903.3 547.3 914.6 548.7 908.2 550.8 896.8 549.4Z" fill="#819c91" stroke="#819c91"/><path d="M914.6 548.7 926.0 550.0 919.6 552.1 908.2 550.8Z" fill="#87a191" stroke="#87a191"/><path d="M926.0 550.0 937.4 551.0 930.9 553.5 919.6 552.1Z" fill="#8da691" stroke="#8da691"/><path d="M937.4 551.0 948.8 551.8 942.2 556.1 930.9 553.5Z" fill="#92ab91" stroke="#92ab91"/><path d="M948.8 551.8 960.2 552.5 953.5 558.7 942.2 556.1Z" fill="#96b091" stroke="#96b091"/><path d="M960.2 552.5 971.5 554.7 964.8 561.2 953.5 558.7Z" fill="#99b591" stroke="#99b591"/><path d="M971.5 554.7 982.8 557.3 976.1 563.8 964.8 561.2Z" fill="#99ba91" stroke="#99ba91"/><path d="M982.8 557.3 994.1 559.9 987.4 566.4 976.1 563.8Z" fill="#99bf91" stroke="#99bf91"/><path d="M994.1 559.9 1005.4 562.5 998.7 569.0 987.4 566.4Z" fill="#99c491" stroke="#99c491"/><path d="M1005.4 562.5 1016.7 565.0 1010.0 571.6 998.7 569.0Z" fill="#99c991" stroke="#99c991"/><path d="M1016.7 565.0 1028.0 567.6 1021.3 574.2 1010.0 571.6Z" fill="#99cf91" stroke="#99cf91"/><path d="M1028.0 567.6 1039.3 570.2 1032.6 576.8 1021.3 574.2Z" fill="#99d491" stroke="#99d491"/><path d="M1039.3 570.2 1050.6 572.8 1043.9 579.3 1032.6 576.8Z" fill="#99d991" stroke="#99d991"/><path d="M1050.6 572.8 1061.9 575.4 1055.2 581.9 1043.9 579.3Z" fill="#99de91" stroke="#99de91"/><path d="M1061.9 575.4 1073.2 578.0 1066.5 584.5 1055.2 581.9Z" fill="#99e391" stroke="#99e391"/><path d="M1073.2 578.0 1084.5 580.5 1077.8 587.1 1066.5 584.5Z" fill="#99e891" stroke="#99e891"/><path d="M1084.5 580.5 1095.8 583.1 1089.1 589.7 1077.8 587.1Z" fill="#99ed91" stroke="#99ed91"/><path d="M1095.8 583.1 1107.1 585.7 1100.4 592.3 1089.1 589.7Z" fill="#99f291" stroke="#99f291"/><path d="M1107.1 585.7 1118.4 588.3 1111.7 594.8 1100.4 592.3Z" fill="#99f791" stroke="#99f791"/><path d="M1118.4 588.3 1129.7 590.9 1123.0 597.4 1111.7 594.8Z" fill="#99fc91" stroke="#99fc91"/><path d="M571.3 455.2 582.6 457.7 576.0 464.3 564.7 461.7Z" fill="#990396" stroke="#990396"/><path d="M582.6 457.7 593.9 460.3 587.3 466.9 576.0 464.3Z" fill="#990896" stroke="#990896"/><path d="M593.9 460.3 605.2 462.9 598.6 469.5 587.3 466.9Z" fill="#990d96" stroke="#990d96"/><path d="M605.2 462.9 616.5 465.5 609.9 472.0 598.6 469.5Z" fill="#991296" stroke="#991296"/><path d="M616.5 465.5 627.8 468.1 621.2 474.6 609.9 472.0Z" fill="#991796" stroke="#991796"/><path d="M627.8 468.1 639.1 470.7 632.5 477.2 621.2 474.6Z" fill="#991c96" stroke="#991c96"/><path d="M639.1 470.7 650.4 473.2 643.8 479.8 632.5 477.2Z" fill="#992196" stroke="#992196"/><path d="M650.4 473.2 661.7 475.8 655.1 482.4 643.8 479.8Z" fill="#992696" stroke="#992696"/><path d="M661.7 475.8 673.0 478.4 666.4 485.0 655.1 482.4Z" fill="#992b96" stroke="#992b96"/><path d="M673.0 478.4 684.3 481.0 677.7 487.5 666.4 485.0Z" fill="#993096" stroke="#993096"/><path d="M684.3 481.0 695.6 483.6 689.0 490.1 677.7 487.5Z" fill="#993696" stroke="#993696"/><path d="M695.6 483.6 706.9 486.2 700.3 492.7 689.0 490.1Z" fill="#993b96" stroke="#993b96"/><path d="M706.9 486.2 718.2 488.8 711.6 495.3 700.3 492.7Z" fill="#994096" stroke="#994096"/><path d="M718.2 488.8 729.4 493.7 722.9 497.9 711.6 495.3Z" fill="#964596" stroke="#964596"/><path d="M729.4 493.7 740.6 498.5 734.2 500.8 722.9 497.9Z" fill="#914a96" stroke="#914a96"/><path d="M740.6 498.5 751.8 503.0 745.4 505.3 734.2 500.8Z" fill="#894f96" stroke="#894f96"/><path d="M751.8 503.0 763.0 507.4 756.6 509.7 745.4 505.3Z" fill="#815496" stroke="#815496"/><path d="M763.0 507.4 774.3 511.4 767.8 513.8 756.6 509.7Z" fill="#795996" stroke="#795996"/><path d="M774.3 511.4 785.5 515.1 779.0 517.7 767.8 513.8Z" fill="#735e96" stroke="#735e96"/><path d="M785.5 515.1 796.8 518.6 790.3 521.4 779.0 517.7Z" fill="#6e6396" stroke="#6e6396"/><path d="M796.8 518.6 808.0 521.9 801.5 524.9 790.3 521.4Z" fill="#6a6996" stroke="#6a6996"/><path d="M808.0 521.9 819.3 525.0 812.8 528.2 801.5 524.9Z" fill="#676e96" stroke="#676e96"/><path d="M819.3 525.0 830.6 527.9 824.1 531.2 812.8 528.2Z" fill="#647396" stroke="#647396"/><path d="M830.6 527.9 841.9 530.7 835.4 534.1 824.1 531.2Z" fill="#637896" stroke="#637896"/><path d="M841.9 530.7 853.2 533.3 846.7 536.8 835.4 534.1Z" fill="#627d96" stroke="#627d96"/><path d="M853.2 533.3 864.5 535.8 858.0 539.2 846.7 536.8Z" fill="#628296" stroke="#628296"/><path d="M864.5 535.8 875.8 538.2 869.3 541.6 858.0 539.2Z" fill="#638796" stroke="#638796"/><path d="M875.8 538.2 887.1 540.5 880.6 543.7 869.3 541.6Z" fill="#648c96" stroke="#648c96"/><path d="M887.1 540.5 898.4 542.6 891.9 545.6 880.6 543.7Z" fill="#679196" stroke="#679196"/><path d="M898.4 542.6 909.8 544.5 903.3 547.3 891.9 545.6Z" fill="#6a9696" stroke="#6a9696"/><path d="M909.8 544.5 921.1 546.2 914.6 548.7 903.3 547.3Z" fill="#6e9c96" stroke="#6e9c96"/><path d="M921.1 546.2 932.5 547.6 926.0 550.0 914.6 548.7Z" fill="#73a196" stroke="#73a196"/><path d="M932.5 547.6 943.8 548.7 937.4 551.0 926.0 550.0Z" fill="#79a696" stroke="#79a696"/><path d="M943.8 548.7 955.2 549.5 948.8 551.8 937.4 551.0Z" fill="#81ab96" stroke="#81ab96"/><path d="M955.2 549.5 966.6 550.1 960.2 552.5 948.8 551.8Z" fill="#89b096" stroke="#89b096"/><path d="M966.6 550.1 978.0 550.5 971.5 554.7 960.2 552.5Z" fill="#91b596" stroke="#91b596"/><path d="M978.0 550.5 989.4 550.8 982.8 557.3 971.5 554.7Z" fill="#96ba96" stroke="#96ba96"/><path d="M989.4 550.8 1000.7 553.3 994.1 559.9 982.8 557.3Z" fill="#99bf96" stroke="#99bf96"/><path d="M1000.7 553.3 1012.0 555.9 1005.4 562.5 994.1 559.9Z" fill="#99c496" stroke="#99c496"/><path d="M1012.0 555.9 1023.3 558.5 1016.7 565.0 1005.4 562.5Z" fill="#99c996" stroke="#99c996"/><path d="M1023.3 558.5 1034.6 561.1 1028.0 567.6 1016.7 565.0Z" fill="#99cf96" stroke="#99cf96"/><path d="M1034.6 561.1 1045.9 563.7 1039.3 570.2 1028.0 567.6Z" fill="#99d496" stroke="#99d496"/><path d="M1045.9 563.7 1057.2 566.3 1050.6 572.8 1039.3 570.2Z" fill="#99d996" stroke="#99d996"/><path d="M1057.2 566.3 1068.5 568.8 1061.9 575.4 1050.6 572.8Z" fill="#99de96" stroke="#99de96"/><path d="M1068.5 568.8 1079.8 571.4 1073.2 578.0 1061.9 575.4Z" fill="#99e396" stroke="#99e396"/><path d="M1079.8 571.4 1091.1 574.0 1084.5 580.5 1073.2 578.0Z" fill="#99e896" stroke="#99e896"/><path d="M1091.1 574.0 1102.4 576.6 1095.8 583.1 1084.5 580.5Z" fill="#99ed96" stroke="#99ed96"/><path d="M1102.4 576.6 1113.7 579.2 1107.1 585.7 1095.8 583.1Z" fill="#99f296" stroke="#99f296"/><path d="M1113.7 579.2 1125.0 581.8 1118.4 588.3 1107.1 585.7Z" fill="#99f796" stroke="#99f796"/><path d="M1125.0 581.8 1136.3 584.3 1129.7 590.9 1118.4 588.3Z" fill="#99fc96" stroke="#99fc96"/><path d="M578.0 448.6 589.3 451.2 582.6 457.7 571.3 455.2Z" fill="#99039c" stroke="#99039c"/><path d="M589.3 451.2 600.6 453.8 593.9 460.3 582.6 457.7Z" fill="#99089c" stroke="#99089c"/><path d="M600.6 453.8 611.9 456.4 605.2 462.9 593.9 460.3Z" fill="#990d9c" stroke="#990d9c"/><path d="M611.9 456.4 623.2 459.0 616.5 465.5 605.2 462.9Z" fill="#99129c" stroke="#99129c"/><path d="M623.2 459.0 634.5 461.5 627.8 468.1 616.5 465.5Z" fill="#99179c" stroke="#99179c"/><path d="M634.5 461.5 645.8 464.1 639.1 470.7 627.8 468.1Z" fill="#991c9c" stroke="#991c9c"/><path d="M645.8 464.1 657.1 466.7 650.4 473.2 639.1 470.7Z" fill="#99219c" stroke="#99219c"/><path d="M657.1 466.7 668.4 469.3 661.7 475.8 650.4 473.2Z" fill="#99269c" stroke="#99269c"/><path d="M668.4 469.3 679.7 471.9 673.0 478.4 661.7 475.8Z" fill="#992b9c" stroke="#992b9c"/><path d="M679.7 471.9 691.0 474.5 684.3 481.0 673.0 478.4Z" fill="#99309c" stroke="#99309c"/><path d="M691.0 474.5 702.3 477.0 695.6 483.6 684.3 481.0Z" fill="#99369c" stroke="#99369c"/><path d="M702.3 477.0 713.5 481.1 706.9 486.2 695.6 483.6Z" fill="#973b9c" stroke="#973b9c"/><path d="M713.5 481.1 724.7 486.2 718.2 488.8 706.9 486.2Z" fill="#93409c" stroke="#93409c"/><path d="M724.7 486.2 735.9 491.2 729.4 493.7 718.2 488.8Z" fill="#8a459c" stroke="#8a459c"/><path d="M735.9 491.2 747.1 495.9 740.6 498.5 729.4 493.7Z" fill="#804a9c" stroke="#804a9c"/><path d="M747.1 495.9 758.3 500.3 751.8 503.0 740.6 498.5Z" fill="#774f9c" stroke="#774f9c"/><path d="M758.3 500.3 769.5 504.4 763.0 507.4 751.8 503.0Z" fill="#6f549c" stroke="#6f549c"/><path d="M769.5 504.4 780.8 508.0 774.3 511.4 763.0 507.4Z" fill="#68599c" stroke="#68599c"/><path d="M780.8 508.0 792.0 511.4 785.5 515.1 774.3 511.4Z" fill="#635e9c" stroke="#635e9c"/><path d="M792.0 511.4 803.3 514.5 796.8 518.6 785.5 515.1Z" fill="#5f639c" stroke="#5f639c"/><path d="M803.3 514.5 814.6 517.5 808.0 521.9 796.8 518.6Z" fill="#5c699c" stroke="#5c699c"/><path d="M814.6 517.5 825.9 520.2 819.3 525.0 808.0 521.9Z" fill="#5a6e9c" stroke="#5a6e9c"/><path d="M825.9 520.2 837.2 522.9 830.6 527.9 819.3 525.0Z" fill="#59739c" stroke="#59739c"/><path d="M837.2 522.9 848.5 525.5 841.9 530.7 830.6 527.9Z" fill="#58789c" stroke="#58789c"/><path d="M848.5 525.5 859.8 528.1 853.2 533.3 841.9 530.7Z" fill="#587d9c" stroke="#587d9c"/><path d="M859.8 528.1 871.1 530.7 864.5 535.8 853.2 533.3Z" fill="#58829c" stroke="#58829c"/><path d="M871.1 530.7 882.4 533.2 875.8 538.2 864.5 535.8Z" fill="#58879c" stroke="#58879c"/><path d="M882.4 533.2 893.7 535.7 887.1 540.5 875.8 538.2Z" fill="#598c9c" stroke="#598c9c"/><path d="M893.7 535.7 905.0 538.1 898.4 542.6 887.1 540.5Z" fill="#5a919c" stroke="#5a919c"/><path d="M905.0 538.1 916.3 540.4 909.8 544.5 898.4 542.6Z" fill="#5c969c" stroke="#5c969c"/><path d="M916.3 540.4 927.6 542.4 921.1 546.2 909.8 544.5Z" fill="#5f9c9c" stroke="#5f9c9c"/><path d="M927.6 542.4 939.0 544.2 932.5 547.6 921.1 546.2Z" fill="#63a19c" stroke="#63a19c"/><path d="M939.0 544.2 950.3 545.7 943.8 548.7 932.5 547.6Z" fill="#68a69c" stroke="#68a69c"/><path d="M950.3 545.7 961.7 546.8 955.2 549.5 943.8 548.7Z" fill="#6fab9c" stroke="#6fab9c"/><path d="M961.7 546.8 973.1 547.6 966.6 550.1 955.2 549.5Z" fill="#77b09c" stroke="#77b09c"/><path d="M973.1 547.6 984.5 548.1 978.0 550.5 966.6 550.1Z" fill="#80b59c" stroke="#80b59c"/><path d="M984.5 548.1 995.9 548.2 989.4 550.8 978.0 550.5Z" fill="#8aba9c" stroke="#8aba9c"/><path d="M995.9 548.2 1007.3 548.2 1000.7 553.3 989.4 550.8Z" fill="#93bf9c" stroke="#93bf9c"/><path d="M1007.3 548.2 1018.7 549.4 1012.0 555.9 1000.7 553.3Z" fill="#97c49c" stroke="#97c49c"/><path d="M1018.7 549.4 1030.0 552.0 1023.3 558.5 1012.0 555.9Z" fill="#99c99c" stroke="#99c99c"/><path d="M1030.0 552.0 1041.3 554.5 1034.6 561.1 1023.3 558.5Z" fill="#99cf9c" stroke="#99cf9c"/><path d="M1041.3 554.5 1052.6 557.1 1045.9 563.7 1034.6 561.1Z" fill="#99d49c" stroke="#99d49c"/><path d="M1052.6 557.1 1063.9 559.7 1057.2 566.3 1045.9 563.7Z" fill="#99d99c" stroke="#99d99c"/><path d="M1063.9 559.7 1075.2 562.3 1068.5 568.8 1057.2 566.3Z" fill="#99de9c" stroke="#99de9c"/><path d="M1075.2 562.3 1086.5 564.9 1079.8 571.4 1068.5 568.8Z" fill="#99e39c" stroke="#99e39c"/><path d="M1086.5 564.9 1097.8 567.5 1091.1 574.0 1079.8 571.4Z" fill="#99e89c" stroke="#99e89c"/><path d="M1097.8 567.5 1109.1 570.0 1102.4 576.6 1091.1 574.0Z" fill="#99ed9c" stroke="#99ed9c"/><path d="M1109.1 570.0 1120.4 572.6 1113.7 579.2 1102.4 576.6Z" fill="#99f29c" stroke="#99f29c"/><path d="M1120.4 572.6 1131.7 575.2 1125.0 581.8 1113.7 579.2Z" fill="#99f79c" stroke="#99f79c"/><path d="M1131.7 575.2 1143.0 577.8 1136.3 584.3 1125.0 581.8Z" fill="#99fc9c" stroke="#99fc9c"/><path d="M584.6 442.1 595.9 444.7 589.3 451.2 578.0 448.6Z" fill="#9903a1" stroke="#9903a1"/><path d="M595.9 444.7 607.2 447.2 600.6 453.8 589.3 451.2Z" fill="#9908a1" stroke="#9908a1"/><path d="M607.2 447.2 618.5 449.8 611.9 456.4 600.6 453.8Z" fill="#990da1" stroke="#990da1"/><path d="M618.5 449.8 629.8 452.4 623.2 459.0 611.9 456.4Z" fill="#9912a1" stroke="#9912a1"/><path d="M629.8 452.4 641.1 455.0 634.5 461.5 623.2 459.0Z" fill="#9917a1" stroke="#9917a1"/><path d="M641.1 455.0 652.4 457.6 645.8 464.1 634.5 461.5Z" fill="#991ca1" stroke="#991ca1"/><path d="M652.4 457.6 663.7 460.2 657.1 466.7 645.8 464.1Z" fill="#9921a1" stroke="#9921a1"/><path d="M663.7 460.2 675.0 462.7 668.4 469.3 657.1 466.7Z" fill="#9926a1" stroke="#9926a1"/><path d="M675.0 462.7 686.3 465.3 679.7 471.9 668.4 469.3Z" fill="#992ba1" stroke="#992ba1"/><path d="M686.3 465.3 697.6 467.9 691.0 474.5 679.7 471.9Z" fill="#9930a1" stroke="#9930a1"/><path d="M697.6 467.9 708.8 473.0 702.3 477.0 691.0 474.5Z" fill="#9636a1" stroke="#9636a1"/><path d="M708.8 473.0 720.0 478.4 713.5 481.1 702.3 477.0Z" fill="#8e3ba1" stroke="#8e3ba1"/><path d="M720.0 478.4 731.2 483.5 724.7 486.2 713.5 481.1Z" fill="#8440a1" stroke="#8440a1"/><path d="M731.2 483.5 742.4 488.3 735.9 491.2 724.7 486.2Z" fill="#7845a1" stroke="#7845a1"/><path d="M742.4 488.3 753.6 492.7 747.1 495.9 735.9 491.2Z" fill="#6f4aa1" stroke="#6f4aa1"/><path d="M753.6 492.7 764.8 496.7 758.3 500.3 747.1 495.9Z" fill="#674fa1" stroke="#674fa1"/><path d="M764.8 496.7 776.1 500.2 769.5 504.4 758.3 500.3Z" fill="#6054a1" stroke="#6054a1"/><path d="M776.1 500.2 787.3 503.3 780.8 508.0 769.5 504.4Z" fill="#5c59a1" stroke="#5c59a1"/><path d="M787.3 503.3 798.6 506.1 792.0 511.4 780.8 508.0Z" fill="#595ea1" stroke="#595ea1"/><path d="M798.6 506.1 809.9 508.7 803.3 514.5 792.0 511.4Z" fill="#5763a1" stroke="#5763a1"/><path d="M809.9 508.7 821.2 511.1 814.6 517.5 803.3 514.5Z" fill="#5669a1" stroke="#5669a1"/><path d="M821.2 511.1 832.5 513.5 825.9 520.2 814.6 517.5Z" fill="#566ea1" stroke="#566ea1"/><path d="M832.5 513.5 843.9 515.9 837.2 522.9 825.9 520.2Z" fill="#5673a1" stroke="#5673a1"/><path d="M843.9 515.9 855.2 518.3 848.5 525.5 837.2 522.9Z" fill="#5678a1" stroke="#5678a1"/><path d="M855.2 518.3 866.5 520.9 859.8 528.1 848.5 525.5Z" fill="#567da1" stroke="#567da1"/><path d="M866.5 520.9 877.8 523.5 871.1 530.7 859.8 528.1Z" fill="#5682a1" stroke="#5682a1"/><path d="M877.8 523.5 889.1 526.2 882.4 533.2 871.1 530.7Z" fill="#5687a1" stroke="#5687a1"/><path d="M889.1 526.2 900.3 529.0 893.7 535.7 882.4 533.2Z" fill="#568ca1" stroke="#568ca1"/><path d="M900.3 529.0 911.6 531.8 905.0 538.1 893.7 535.7Z" fill="#5691a1" stroke="#5691a1"/><path d="M911.6 531.8 922.9 534.5 916.3 540.4 905.0 538.1Z" fill="#5696a1" stroke="#5696a1"/><path d="M922.9 534.5 934.2 537.1 927.6 542.4 916.3 540.4Z" fill="#579ca1" stroke="#579ca1"/><path d="M934.2 537.1 945.5 539.5 939.0 544.2 927.6 542.4Z" fill="#59a1a1" stroke="#59a1a1"/><path d="M945.5 539.5 956.9 541.5 950.3 545.7 939.0 544.2Z" fill="#5ca6a1" stroke="#5ca6a1"/><path d="M956.9 541.5 968.2 543.2 961.7 546.8 950.3 545.7Z" fill="#60aba1" stroke="#60aba1"/><path d="M968.2 543.2 979.6 544.4 973.1 547.6 961.7 546.8Z" fill="#67b0a1" stroke="#67b0a1"/><path d="M979.6 544.4 991.0 545.2 984.5 548.1 973.1 547.6Z" fill="#6fb5a1" stroke="#6fb5a1"/><path d="M991.0 545.2 1002.4 545.5 995.9 548.2 984.5 548.1Z" fill="#78baa1" stroke="#78baa1"/><path d="M1002.4 545.5 1013.8 545.6 1007.3 548.2 995.9 548.2Z" fill="#84bfa1" stroke="#84bfa1"/><path d="M1013.8 545.6 1025.2 545.3 1018.7 549.4 1007.3 548.2Z" fill="#8ec4a1" stroke="#8ec4a1"/><path d="M1025.2 545.3 1036.7 545.4 1030.0 552.0 1018.7 549.4Z" fill="#96c9a1" stroke="#96c9a1"/><path d="M1036.7 545.4 1048.0 548.0 1041.3 554.5 1030.0 552.0Z" fill="#99cfa1" stroke="#99cfa1"/><path d="M1048.0 548.0 1059.3 550.6 1052.6 557.1 1041.3 554.5Z" fill="#99d4a1" stroke="#99d4a1"/><path d="M1059.3 550.6 1070.6 553.2 1063.9 559.7 1052.6 557.1Z" fill="#99d9a1" stroke="#99d9a1"/><path d="M1070.6 553.2 1081.9 555.8 1075.2 562.3 1063.9 559.7Z" fill="#99dea1" stroke="#99dea1"/><path d="M1081.9 555.8 1093.2 558.3 1086.5 564.9 1075.2 562.3Z" fill="#99e3a1" stroke="#99e3a1"/><path d="M1093.2 558.3 1104.5 560.9 1097.8 567.5 1086.5 564.9Z" fill="#99e8a1" stroke="#99e8a1"/><path d="M1104.5 560.9 1115.8 563.5 1109.1 570.0 1097.8 567.5Z" fill="#99eda1" stroke="#99eda1"/><path d="M1115.8 563.5 1127.1 566.1 1120.4 572.6 1109.1 570.0Z" fill="#99f2a1" stroke="#99f2a1"/><path d="M1127.1 566.1 1138.4 568.7 1131.7 575.2 1120.4 572.6Z" fill="#99f7a1" stroke="#99f7a1"/><path d="M1138.4 568.7 1149.7 571.3 1143.0 577.8 1131.7 575.2Z" fill="#99fca1" stroke="#99fca1"/><path d="M591.3 435.5 602.6 438.1 595.9 444.7 584.6 442.1Z" fill="#9903a6" stroke="#9903a6"/><path d="M602.6 438.1 613.9 440.7 607.2 447.2 595.9 444.7Z" fill="#9908a6" stroke="#9908a6"/><path d="M613.9 440.7 625.2 443.3 618.5 449.8 607.2 447.2Z" fill="#990da6" stroke="#990da6"/><path d="M625.2 443.3 636.5 445.9 629.8 452.4 618.5 449.8Z" fill="#9912a6" stroke="#9912a6"/><path d="M636.5 445.9 647.8 448.5 641.1 455.0 629.8 452.4Z" fill="#9917a6" stroke="#9917a6"/><path d="M647.8 448.5 659.1 451.0 652.4 457.6 641.1 455.0Z" fill="#991ca6" stroke="#991ca6"/><path d="M659.1 451.0 670.4 453.6 663.7 460.2 652.4 457.6Z" fill="#9921a6" stroke="#9921a6"/><path d="M670.4 453.6 681.7 456.2 675.0 462.7 663.7 460.2Z" fill="#9926a6" stroke="#9926a6"/><path d="M681.7 456.2 693.0 458.8 686.3 465.3 675.0 462.7Z" fill="#992ba6" stroke="#992ba6"/><path d="M693.0 458.8 704.2 464.5 697.6 467.9 686.3 465.3Z" fill="#9530a6" stroke="#9530a6"/><path d="M704.2 464.5 715.3 470.1 708.8 473.0 697.6 467.9Z" fill="#8c36a6" stroke="#8c36a6"/><path d="M715.3 470.1 726.5 475.4 720.0 478.4 708.8 473.0Z" fill="#7f3ba6" stroke="#7f3ba6"/><path d="M726.5 475.4 737.7 480.3 731.2 483.5 720.0 478.4Z" fill="#7340a6" stroke="#7340a6"/><path d="M737.7 480.3 748.9 484.6 742.4 488.3 731.2 483.5Z" fill="#6945a6" stroke="#6945a6"/><path d="M748.9 484.6 760.1 488.4 753.6 492.7 742.4 488.3Z" fill="#614aa6" stroke="#614aa6"/><path d="M760.1 488.4 771.4 491.6 764.8 496.7 753.6 492.7Z" fill="#5b4fa6" stroke="#5b4fa6"/><path d="M771.4 491.6 782.7 494.4 776.1 500.2 764.8 496.7Z" fill="#5854a6" stroke="#5854a6"/><path d="M782.7 494.4 794.0 496.8 787.3 503.3 776.1 500.2Z" fill="#5659a6" stroke="#5659a6"/><path d="M794.0 496.8 805.3 498.9 798.6 506.1 787.3 503.3Z" fill="#565ea6" stroke="#565ea6"/><path d="M805.3 498.9 816.7 500.8 809.9 508.7 798.6 506.1Z" fill="#5763a6" stroke="#5763a6"/><path d="M816.7 500.8 828.0 502.7 821.2 511.1 809.9 508.7Z" fill="#5969a6" stroke="#5969a6"/><path d="M828.0 502.7 839.3 504.6 832.5 513.5 821.2 511.1Z" fill="#5b6ea6" stroke="#5b6ea6"/><path d="M839.3 504.6 850.6 506.7 843.9 515.9 832.5 513.5Z" fill="#5d73a6" stroke="#5d73a6"/><path d="M850.6 506.7 862.0 508.9 855.2 518.3 843.9 515.9Z" fill="#5e78a6" stroke="#5e78a6"/><path d="M862.0 508.9 873.3 511.4 866.5 520.9 855.2 518.3Z" fill="#5f7da6" stroke="#5f7da6"/><path d="M873.3 511.4 884.6 514.1 877.8 523.5 866.5 520.9Z" fill="#5f82a6" stroke="#5f82a6"/><path d="M884.6 514.1 895.8 517.0 889.1 526.2 877.8 523.5Z" fill="#5e87a6" stroke="#5e87a6"/><path d="M895.8 517.0 907.1 520.1 900.3 529.0 889.1 526.2Z" fill="#5d8ca6" stroke="#5d8ca6"/><path d="M907.1 520.1 918.4 523.4 911.6 531.8 900.3 529.0Z" fill="#5b91a6" stroke="#5b91a6"/><path d="M918.4 523.4 929.7 526.6 922.9 534.5 911.6 531.8Z" fill="#5996a6" stroke="#5996a6"/><path d="M929.7 526.6 940.9 529.9 934.2 537.1 922.9 534.5Z" fill="#579ca6" stroke="#579ca6"/><path d="M940.9 529.9 952.2 532.9 945.5 539.5 934.2 537.1Z" fill="#56a1a6" stroke="#56a1a6"/><path d="M952.2 532.9 963.5 535.7 956.9 541.5 945.5 539.5Z" fill="#56a6a6" stroke="#56a6a6"/><path d="M963.5 535.7 974.8 538.2 968.2 543.2 956.9 541.5Z" fill="#58aba6" stroke="#58aba6"/><path d="M974.8 538.2 986.1 540.1 979.6 544.4 968.2 543.2Z" fill="#5bb0a6" stroke="#5bb0a6"/><path d="M986.1 540.1 997.5 541.5 991.0 545.2 979.6 544.4Z" fill="#61b5a6" stroke="#61b5a6"/><path d="M997.5 541.5 1008.9 542.3 1002.4 545.5 991.0 545.2Z" fill="#69baa6" stroke="#69baa6"/><path d="M1008.9 542.3 1020.3 542.6 1013.8 545.6 1002.4 545.5Z" fill="#73bfa6" stroke="#73bfa6"/><path d="M1020.3 542.6 1031.7 542.4 1025.2 545.3 1013.8 545.6Z" fill="#7fc4a6" stroke="#7fc4a6"/><path d="M1031.7 542.4 1043.2 542.0 1036.7 545.4 1025.2 545.3Z" fill="#8cc9a6" stroke="#8cc9a6"/><path d="M1043.2 542.0 1054.6 541.5 1048.0 548.0 1036.7 545.4Z" fill="#95cfa6" stroke="#95cfa6"/><path d="M1054.6 541.5 1065.9 544.1 1059.3 550.6 1048.0 548.0Z" fill="#99d4a6" stroke="#99d4a6"/><path d="M1065.9 544.1 1077.2 546.6 1070.6 553.2 1059.3 550.6Z" fill="#99d9a6" stroke="#99d9a6"/><path d="M1077.2 546.6 1088.5 549.2 1081.9 555.8 1070.6 553.2Z" fill="#99dea6" stroke="#99dea6"/><path d="M1088.5 549.2 1099.8 551.8 1093.2 558.3 1081.9 555.8Z" fill="#99e3a6" stroke="#99e3a6"/><path d="M1099.8 551.8 1111.1 554.4 1104.5 560.9 1093.2 558.3Z" fill="#99e8a6" stroke="#99e8a6"/><path d="M1111.1 554.4 1122.4 557.0 1115.8 563.5 1104.5 560.9Z" fill="#99eda6" stroke="#99eda6"/><path d="M1122.4 557.0 1133.7 559.6 1127.1 566.1 1115.8 563.5Z" fill="#99f2a6" stroke="#99f2a6"/><path d="M1133.7 559.6 1145.0 562.1 1138.4 568.7 1127.1 566.1Z" fill="#99f7a6" stroke="#99f7a6"/><path d="M1145.0 562.1 1156.3 564.7 1149.7 571.3 1138.4 568.7Z" fill="#99fca6" stroke="#99fca6"/><path d="M598.0 429.0 609.3 431.6 602.6 438.1 591.3 435.5Z" fill="#9903ab" stroke="#9903ab"/><path d="M609.3 431.6 620.6 434.2 613.9 440.7 602.6 438.1Z" fill="#9908ab" stroke="#9908ab"/><path d="M620.6 434.2 631.9 436.8 625.2 443.3 613.9 440.7Z" fill="#990dab" stroke="#990dab"/><path d="M631.9 436.8 643.2 439.3 636.5 445.9 625.2 443.3Z" fill="#9912ab" stroke="#9912ab"/><path d="M643.2 439.3 654.5 441.9 647.8 448.5 636.5 445.9Z" fill="#9917ab" stroke="#9917ab"/><path d="M654.5 441.9 665.8 444.5 659.1 451.0 647.8 448.5Z" fill="#991cab" stroke="#991cab"/><path d="M665.8 444.5 677.1 447.1 670.4 453.6 659.1 451.0Z" fill="#9921ab" stroke="#9921ab"/><path d="M677.1 447.1 688.4 449.7 681.7 456.2 670.4 453.6Z" fill="#9926ab" stroke="#9926ab"/><path d="M688.4 449.7 699.5 455.6 693.0 458.8 681.7 456.2Z" fill="#952bab" stroke="#952bab"/><path d="M699.5 455.6 710.6 461.4 704.2 464.5 693.0 458.8Z" fill="#8a30ab" stroke="#8a30ab"/><path d="M710.6 461.4 721.8 466.9 715.3 470.1 704.2 464.5Z" fill="#7c36ab" stroke="#7c36ab"/><path d="M721.8 466.9 733.0 471.8 726.5 475.4 715.3 470.1Z" fill="#703bab" stroke="#703bab"/><path d="M733.0 471.8 744.2 476.1 737.7 480.3 726.5 475.4Z" fill="#6540ab" stroke="#6540ab"/><path d="M744.2 476.1 755.5 479.8 748.9 484.6 737.7 480.3Z" fill="#5d45ab" stroke="#5d45ab"/><path d="M755.5 479.8 766.7 482.7 760.1 488.4 748.9 484.6Z" fill="#584aab" stroke="#584aab"/><path d="M766.7 482.7 778.1 485.0 771.4 491.6 760.1 488.4Z" fill="#564fab" stroke="#564fab"/><path d="M778.1 485.0 789.4 486.9 782.7 494.4 771.4 491.6Z" fill="#5654ab" stroke="#5654ab"/><path d="M789.4 486.9 800.7 488.4 794.0 496.8 782.7 494.4Z" fill="#5859ab" stroke="#5859ab"/><path d="M800.7 488.4 812.1 489.7 805.3 498.9 794.0 496.8Z" fill="#5c5eab" stroke="#5c5eab"/><path d="M812.1 489.7 823.5 490.9 816.7 500.8 805.3 498.9Z" fill="#6063ab" stroke="#6063ab"/><path d="M823.5 490.9 834.8 492.2 828.0 502.7 816.7 500.8Z" fill="#6569ab" stroke="#6569ab"/><path d="M834.8 492.2 846.2 493.7 839.3 504.6 828.0 502.7Z" fill="#696eab" stroke="#696eab"/><path d="M846.2 493.7 857.5 495.5 850.6 506.7 839.3 504.6Z" fill="#6d73ab" stroke="#6d73ab"/><path d="M857.5 495.5 868.9 497.5 862.0 508.9 850.6 506.7Z" fill="#6f78ab" stroke="#6f78ab"/><path d="M868.9 497.5 880.2 499.9 873.3 511.4 862.0 508.9Z" fill="#707dab" stroke="#707dab"/><path d="M880.2 499.9 891.5 502.7 884.6 514.1 873.3 511.4Z" fill="#7082ab" stroke="#7082ab"/><path d="M891.5 502.7 902.7 505.8 895.8 517.0 884.6 514.1Z" fill="#6f87ab" stroke="#6f87ab"/><path d="M902.7 505.8 914.0 509.2 907.1 520.1 895.8 517.0Z" fill="#6d8cab" stroke="#6d8cab"/><path d="M914.0 509.2 925.2 512.9 918.4 523.4 907.1 520.1Z" fill="#6991ab" stroke="#6991ab"/><path d="M925.2 512.9 936.5 516.8 929.7 526.6 918.4 523.4Z" fill="#6596ab" stroke="#6596ab"/><path d="M936.5 516.8 947.7 520.7 940.9 529.9 929.7 526.6Z" fill="#609cab" stroke="#609cab"/><path d="M947.7 520.7 958.9 524.6 952.2 532.9 940.9 529.9Z" fill="#5ca1ab" stroke="#5ca1ab"/><path d="M958.9 524.6 970.2 528.2 963.5 535.7 952.2 532.9Z" fill="#58a6ab" stroke="#58a6ab"/><path d="M970.2 528.2 981.5 531.5 974.8 538.2 963.5 535.7Z" fill="#56abab" stroke="#56abab"/><path d="M981.5 531.5 992.7 534.4 986.1 540.1 974.8 538.2Z" fill="#56b0ab" stroke="#56b0ab"/><path d="M992.7 534.4 1004.1 536.6 997.5 541.5 986.1 540.1Z" fill="#58b5ab" stroke="#58b5ab"/><path d="M1004.1 536.6 1015.4 538.1 1008.9 542.3 997.5 541.5Z" fill="#5dbaab" stroke="#5dbaab"/><path d="M1015.4 538.1 1026.8 539.0 1020.3 542.6 1008.9 542.3Z" fill="#65bfab" stroke="#65bfab"/><path d="M1026.8 539.0 1038.2 539.2 1031.7 542.4 1020.3 542.6Z" fill="#70c4ab" stroke="#70c4ab"/><path d="M1038.2 539.2 1049.7 538.9 1043.2 542.0 1031.7 542.4Z" fill="#7cc9ab" stroke="#7cc9ab"/><path d="M1049.7 538.9 1061.1 538.2 1054.6 541.5 1043.2 542.0Z" fill="#8acfab" stroke="#8acfab"/><path d="M1061.1 538.2 1072.6 537.5 1065.9 544.1 1054.6 541.5Z" fill="#95d4ab" stroke="#95d4ab"/><path d="M1072.6 537.5 1083.9 540.1 1077.2 546.6 1065.9 544.1Z" fill="#99d9ab" stroke="#99d9ab"/><path d="M1083.9 540.1 1095.2 542.7 1088.5 549.2 1077.2 546.6Z" fill="#99deab" stroke="#99deab"/><path d="M1095.2 542.7 1106.5 545.3 1099.8 551.8 1088.5 549.2Z" fill="#99e3ab" stroke="#99e3ab"/><path d="M1106.5 545.3 1117.8 547.8 1111.1 554.4 1099.8 551.8Z" fill="#99e8ab" stroke="#99e8ab"/><path d="M1117.8 547.8 1129.1 550.4 1122.4 557.0 1111.1 554.4Z" fill="#99edab" stroke="#99edab"/><path d="M1129.1 550.4 1140.4 553.0 1133.7 559.6 1122.4 557.0Z" fill="#99f2ab" stroke="#99f2ab"/><path d="M1140.4 553.0 1151.7 555.6 1145.0 562.1 1133.7 559.6Z" fill="#99f7ab" stroke="#99f7ab"/><path d="M1151.7 555.6 1163.0 558.2 1156.3 564.7 1145.0 562.1Z" fill="#99fcab" stroke="#99fcab"/><path d="M604.6 422.5 615.9 425.0 609.3 431.6 598.0 429.0Z" fill="#9903b0" stroke="#9903b0"/><path d="M615.9 425.0 627.2 427.6 620.6 434.2 609.3 431.6Z" fill="#9908b0" stroke="#9908b0"/><path d="M627.2 427.6 638.5 430.2 631.9 436.8 620.6 434.2Z" fill="#990db0" stroke="#990db0"/><path d="M638.5 430.2 649.8 432.8 643.2 439.3 631.9 436.8Z" fill="#9912b0" stroke="#9912b0"/><path d="M649.8 432.8 661.1 435.4 654.5 441.9 643.2 439.3Z" fill="#9917b0" stroke="#9917b0"/><path d="M661.1 435.4 672.4 438.0 665.8 444.5 654.5 441.9Z" fill="#991cb0" stroke="#991cb0"/><path d="M672.4 438.0 683.7 440.5 677.1 447.1 665.8 444.5Z" fill="#9921b0" stroke="#9921b0"/><path d="M683.7 440.5 694.9 446.2 688.4 449.7 677.1 447.1Z" fill="#9526b0" stroke="#9526b0"/><path d="M694.9 446.2 706.0 452.3 699.5 455.6 688.4 449.7Z" fill="#8a2bb0" stroke="#8a2bb0"/><path d="M706.0 452.3 717.2 457.9 710.6 461.4 699.5 455.6Z" fill="#7b30b0" stroke="#7b30b0"/><path d="M717.2 457.9 728.3 463.0 721.8 466.9 710.6 461.4Z" fill="#6e36b0" stroke="#6e36b0"/><path d="M728.3 463.0 739.5 467.3 733.0 471.8 721.8 466.9Z" fill="#633bb0" stroke="#633bb0"/><path d="M739.5 467.3 750.8 470.8 744.2 476.1 733.0 471.8Z" fill="#5b40b0" stroke="#5b40b0"/><path d="M750.8 470.8 762.1 473.5 755.5 479.8 744.2 476.1Z" fill="#5745b0" stroke="#5745b0"/><path d="M762.1 473.5 773.4 475.5 766.7 482.7 755.5 479.8Z" fill="#564ab0" stroke="#564ab0"/><path d="M773.4 475.5 784.8 476.8 778.1 485.0 766.7 482.7Z" fill="#584fb0" stroke="#584fb0"/><path d="M784.8 476.8 796.2 477.6 789.4 486.9 778.1 485.0Z" fill="#5d54b0" stroke="#5d54b0"/><path d="M796.2 477.6 807.6 478.3 800.7 488.4 789.4 486.9Z" fill="#6359b0" stroke="#6359b0"/><path d="M807.6 478.3 819.0 478.8 812.1 489.7 800.7 488.4Z" fill="#6a5eb0" stroke="#6a5eb0"/><path d="M819.0 478.8 830.4 479.4 823.5 490.9 812.1 489.7Z" fill="#7263b0" stroke="#7263b0"/><path d="M830.4 479.4 841.8 480.2 834.8 492.2 823.5 490.9Z" fill="#7969b0" stroke="#7969b0"/><path d="M841.8 480.2 853.1 481.3 846.2 493.7 834.8 492.2Z" fill="#7f6eb0" stroke="#7f6eb0"/><path d="M853.1 481.3 864.5 482.8 857.5 495.5 846.2 493.7Z" fill="#8573b0" stroke="#8573b0"/><path d="M864.5 482.8 875.8 484.7 868.9 497.5 857.5 495.5Z" fill="#8878b0" stroke="#8878b0"/><path d="M875.8 484.7 887.1 487.1 880.2 499.9 868.9 497.5Z" fill="#8a7db0" stroke="#8a7db0"/><path d="M887.1 487.1 898.4 489.9 891.5 502.7 880.2 499.9Z" fill="#8a82b0" stroke="#8a82b0"/><path d="M898.4 489.9 909.7 493.1 902.7 505.8 891.5 502.7Z" fill="#8887b0" stroke="#8887b0"/><path d="M909.7 493.1 920.9 496.8 914.0 509.2 902.7 505.8Z" fill="#858cb0" stroke="#858cb0"/><path d="M920.9 496.8 932.2 500.9 925.2 512.9 914.0 509.2Z" fill="#7f91b0" stroke="#7f91b0"/><path d="M932.2 500.9 943.4 505.2 936.5 516.8 925.2 512.9Z" fill="#7996b0" stroke="#7996b0"/><path d="M943.4 505.2 954.6 509.8 947.7 520.7 936.5 516.8Z" fill="#729cb0" stroke="#729cb0"/><path d="M954.6 509.8 965.8 514.4 958.9 524.6 947.7 520.7Z" fill="#6aa1b0" stroke="#6aa1b0"/><path d="M965.8 514.4 977.0 519.0 970.2 528.2 958.9 524.6Z" fill="#63a6b0" stroke="#63a6b0"/><path d="M977.0 519.0 988.2 523.3 981.5 531.5 970.2 528.2Z" fill="#5dabb0" stroke="#5dabb0"/><path d="M988.2 523.3 999.4 527.1 992.7 534.4 981.5 531.5Z" fill="#58b0b0" stroke="#58b0b0"/><path d="M999.4 527.1 1010.7 530.4 1004.1 536.6 992.7 534.4Z" fill="#56b5b0" stroke="#56b5b0"/><path d="M1010.7 530.4 1022.0 532.8 1015.4 538.1 1004.1 536.6Z" fill="#57bab0" stroke="#57bab0"/><path d="M1022.0 532.8 1033.4 534.5 1026.8 539.0 1015.4 538.1Z" fill="#5bbfb0" stroke="#5bbfb0"/><path d="M1033.4 534.5 1044.7 535.3 1038.2 539.2 1026.8 539.0Z" fill="#63c4b0" stroke="#63c4b0"/><path d="M1044.7 535.3 1056.2 535.4 1049.7 538.9 1038.2 539.2Z" fill="#6ec9b0" stroke="#6ec9b0"/><path d="M1056.2 535.4 1067.6 534.9 1061.1 538.2 1049.7 538.9Z" fill="#7bcfb0" stroke="#7bcfb0"/><path d="M1067.6 534.9 1079.1 534.1 1072.6 537.5 1061.1 538.2Z" fill="#8ad4b0" stroke="#8ad4b0"/><path d="M1079.1 534.1 1090.5 533.6 1083.9 540.1 1072.6 537.5Z" fill="#95d9b0" stroke="#95d9b0"/><path d="M1090.5 533.6 1101.8 536.1 1095.2 542.7 1083.9 540.1Z" fill="#99deb0" stroke="#99deb0"/><path d="M1101.8 536.1 1113.1 538.7 1106.5 545.3 1095.2 542.7Z" fill="#99e3b0" stroke="#99e3b0"/><path d="M1113.1 538.7 1124.4 541.3 1117.8 547.8 1106.5 545.3Z" fill="#99e8b0" stroke="#99e8b0"/><path d="M1124.4 541.3 1135.7 543.9 1129.1 550.4 1117.8 547.8Z" fill="#99edb0" stroke="#99edb0"/><path d="M1135.7 543.9 1147.0 546.5 1140.4 553.0 1129.1 550.4Z" fill="#99f2b0" stroke="#99f2b0"/><path d="M1147.0 546.5 1158.3 549.1 1151.7 555.6 1140.4 553.0Z" fill="#99f7b0" stroke="#99f7b0"/><path d="M1158.3 549.1 1169.6 551.6 1163.0 558.2 1151.7 555.6Z" fill="#99fcb0" stroke="#99fcb0"/><path d="M611.3 415.9 622.6 418.5 615.9 425.0 604.6 422.5Z" fill="#9903b5" stroke="#9903b5"/><path d="M622.6 418.5 633.9 421.1 627.2 427.6 615.9 425.0Z" fill="#9908b5" stroke="#9908b5"/><path d="M633.9 421.1 645.2 423.7 638.5 430.2 627.2 427.6Z" fill="#990db5" stroke="#990db5"/><path d="M645.2 423.7 656.5 426.3 649.8 432.8 638.5 430.2Z" fill="#9912b5" stroke="#9912b5"/><path d="M656.5 426.3 667.8 428.8 661.1 435.4 649.8 432.8Z" fill="#9917b5" stroke="#9917b5"/><path d="M667.8 428.8 679.1 431.4 672.4 438.0 661.1 435.4Z" fill="#991cb5" stroke="#991cb5"/><path d="M679.1 431.4 690.3 436.5 683.7 440.5 672.4 438.0Z" fill="#9621b5" stroke="#9621b5"/><path d="M690.3 436.5 701.4 442.7 694.9 446.2 683.7 440.5Z" fill="#8c26b5" stroke="#8c26b5"/><path d="M701.4 442.7 712.5 448.6 706.0 452.3 694.9 446.2Z" fill="#7c2bb5" stroke="#7c2bb5"/><path d="M712.5 448.6 723.7 453.9 717.2 457.9 706.0 452.3Z" fill="#6e30b5" stroke="#6e30b5"/><path d="M723.7 453.9 734.9 458.3 728.3 463.0 717.2 457.9Z" fill="#6236b5" stroke="#6236b5"/><path d="M734.9 458.3 746.2 461.8 739.5 467.3 728.3 463.0Z" fill="#5a3bb5" stroke="#5a3bb5"/><path d="M746.2 461.8 757.5 464.3 750.8 470.8 739.5 467.3Z" fill="#5640b5" stroke="#5640b5"/><path d="M757.5 464.3 768.8 465.9 762.1 473.5 750.8 470.8Z" fill="#5645b5" stroke="#5645b5"/><path d="M768.8 465.9 780.2 466.7 773.4 475.5 762.1 473.5Z" fill="#5a4ab5" stroke="#5a4ab5"/><path d="M780.2 466.7 791.6 467.0 784.8 476.8 773.4 475.5Z" fill="#614fb5" stroke="#614fb5"/><path d="M791.6 467.0 803.0 466.9 796.2 477.6 784.8 476.8Z" fill="#6a54b5" stroke="#6a54b5"/><path d="M803.0 466.9 814.5 466.7 807.6 478.3 796.2 477.6Z" fill="#7559b5" stroke="#7559b5"/><path d="M814.5 466.7 825.9 466.6 819.0 478.8 807.6 478.3Z" fill="#7f5eb5" stroke="#7f5eb5"/><path d="M825.9 466.6 837.3 466.7 830.4 479.4 819.0 478.8Z" fill="#8a63b5" stroke="#8a63b5"/><path d="M837.3 466.7 848.7 467.1 841.8 480.2 830.4 479.4Z" fill="#9469b5" stroke="#9469b5"/><path d="M848.7 467.1 860.1 468.0 853.1 481.3 841.8 480.2Z" fill="#9c6eb5" stroke="#9c6eb5"/><path d="M860.1 468.0 871.5 469.3 864.5 482.8 853.1 481.3Z" fill="#a273b5" stroke="#a273b5"/><path d="M871.5 469.3 882.8 471.2 875.8 484.7 864.5 482.8Z" fill="#a678b5" stroke="#a678b5"/><path d="M882.8 471.2 894.1 473.5 887.1 487.1 875.8 484.7Z" fill="#a87db5" stroke="#a87db5"/><path d="M894.1 473.5 905.4 476.3 898.4 489.9 887.1 487.1Z" fill="#a882b5" stroke="#a882b5"/><path d="M905.4 476.3 916.7 479.7 909.7 493.1 898.4 489.9Z" fill="#a687b5" stroke="#a687b5"/><path d="M916.7 479.7 927.9 483.5 920.9 496.8 909.7 493.1Z" fill="#a28cb5" stroke="#a28cb5"/><path d="M927.9 483.5 939.1 487.8 932.2 500.9 920.9 496.8Z" fill="#9c91b5" stroke="#9c91b5"/><path d="M939.1 487.8 950.3 492.5 943.4 505.2 932.2 500.9Z" fill="#9496b5" stroke="#9496b5"/><path d="M950.3 492.5 961.5 497.6 954.6 509.8 943.4 505.2Z" fill="#8a9cb5" stroke="#8a9cb5"/><path d="M961.5 497.6 972.7 502.9 965.8 514.4 954.6 509.8Z" fill="#7fa1b5" stroke="#7fa1b5"/><path d="M972.7 502.9 983.8 508.2 977.0 519.0 965.8 514.4Z" fill="#75a6b5" stroke="#75a6b5"/><path d="M983.8 508.2 995.0 513.5 988.2 523.3 977.0 519.0Z" fill="#6aabb5" stroke="#6aabb5"/><path d="M995.0 513.5 1006.2 518.4 999.4 527.1 988.2 523.3Z" fill="#61b0b5" stroke="#61b0b5"/><path d="M1006.2 518.4 1017.4 522.7 1010.7 530.4 999.4 527.1Z" fill="#5ab5b5" stroke="#5ab5b5"/><path d="M1017.4 522.7 1028.7 526.3 1022.0 532.8 1010.7 530.4Z" fill="#56bab5" stroke="#56bab5"/><path d="M1028.7 526.3 1040.0 529.0 1033.4 534.5 1022.0 532.8Z" fill="#56bfb5" stroke="#56bfb5"/><path d="M1040.0 529.0 1051.3 530.7 1044.7 535.3 1033.4 534.5Z" fill="#5ac4b5" stroke="#5ac4b5"/><path d="M1051.3 530.7 1062.7 531.4 1056.2 535.4 1044.7 535.3Z" fill="#62c9b5" stroke="#62c9b5"/><path d="M1062.7 531.4 1074.1 531.3 1067.6 534.9 1056.2 535.4Z" fill="#6ecfb5" stroke="#6ecfb5"/><path d="M1074.1 531.3 1085.6 530.6 1079.1 534.1 1067.6 534.9Z" fill="#7cd4b5" stroke="#7cd4b5"/><path d="M1085.6 530.6 1097.1 529.5 1090.5 533.6 1079.1 534.1Z" fill="#8cd9b5" stroke="#8cd9b5"/><path d="M1097.1 529.5 1108.5 529.6 1101.8 536.1 1090.5 533.6Z" fill="#96deb5" stroke="#96deb5"/><path d="M1108.5 529.6 1119.8 532.2 1113.1 538.7 1101.8 536.1Z" fill="#99e3b5" stroke="#99e3b5"/><path d="M1119.8 532.2 1131.1 534.8 1124.4 541.3 1113.1 538.7Z" fill="#99e8b5" stroke="#99e8b5"/><path d="M1131.1 534.8 1142.4 537.3 1135.7 543.9 1124.4 541.3Z" fill="#99edb5" stroke="#99edb5"/><path d="M1142.4 537.3 1153.7 539.9 1147.0 546.5 1135.7 543.9Z" fill="#99f2b5" stroke="#99f2b5"/><path d="M1153.7 539.9 1165.0 542.5 1158.3 549.1 1147.0 546.5Z" fill="#99f7b5" stroke="#99f7b5"/><path d="M1165.0 542.5 1176.3 545.1 1169.6 551.6 1158.3 549.1Z" fill="#99fcb5" stroke="#99fcb5"/><path d="M617.9 409.4 629.2 412.0 622.6 418.5 611.3 415.9Z" fill="#9903ba" stroke="#9903ba"/><path d="M629.2 412.0 640.5 414.5 633.9 421.1 622.6 418.5Z" fill="#9908ba" stroke="#9908ba"/><path d="M640.5 414.5 651.8 417.1 645.2 423.7 633.9 421.1Z" fill="#990dba" stroke="#990dba"/><path d="M651.8 417.1 663.1 419.7 656.5 426.3 645.2 423.7Z" fill="#9912ba" stroke="#9912ba"/><path d="M663.1 419.7 674.4 422.3 667.8 428.8 656.5 426.3Z" fill="#9917ba" stroke="#9917ba"/><path d="M674.4 422.3 685.7 426.3 679.1 431.4 667.8 428.8Z" fill="#971cba" stroke="#971cba"/><path d="M685.7 426.3 696.8 432.8 690.3 436.5 679.1 431.4Z" fill="#8e21ba" stroke="#8e21ba"/><path d="M696.8 432.8 707.9 438.9 701.4 442.7 690.3 436.5Z" fill="#7f26ba" stroke="#7f26ba"/><path d="M707.9 438.9 719.1 444.4 712.5 448.6 701.4 442.7Z" fill="#702bba" stroke="#702bba"/><path d="M719.1 444.4 730.3 449.1 723.7 453.9 712.5 448.6Z" fill="#6330ba" stroke="#6330ba"/><path d="M730.3 449.1 741.5 452.7 734.9 458.3 723.7 453.9Z" fill="#5a36ba" stroke="#5a36ba"/><path d="M741.5 452.7 752.8 455.1 746.2 461.8 734.9 458.3Z" fill="#563bba" stroke="#563bba"/><path d="M752.8 455.1 764.2 456.5 757.5 464.3 746.2 461.8Z" fill="#5740ba" stroke="#5740ba"/><path d="M764.2 456.5 775.6 456.9 768.8 465.9 757.5 464.3Z" fill="#5c45ba" stroke="#5c45ba"/><path d="M775.6 456.9 787.0 456.7 780.2 466.7 768.8 465.9Z" fill="#654aba" stroke="#654aba"/><path d="M787.0 456.7 798.5 456.0 791.6 467.0 780.2 466.7Z" fill="#704fba" stroke="#704fba"/><path d="M798.5 456.0 810.0 455.1 803.0 466.9 791.6 467.0Z" fill="#7e54ba" stroke="#7e54ba"/><path d="M810.0 455.1 821.4 454.3 814.5 466.7 803.0 466.9Z" fill="#8c59ba" stroke="#8c59ba"/><path d="M821.4 454.3 832.9 453.7 825.9 466.6 814.5 466.7Z" fill="#9a5eba" stroke="#9a5eba"/><path d="M832.9 453.7 844.3 453.6 837.3 466.7 825.9 466.6Z" fill="#a663ba" stroke="#a663ba"/><path d="M844.3 453.6 855.7 453.9 848.7 467.1 837.3 466.7Z" fill="#b169ba" stroke="#b169ba"/><path d="M855.7 453.9 867.1 454.7 860.1 468.0 848.7 467.1Z" fill="#ba6eba" stroke="#ba6eba"/><path d="M867.1 454.7 878.5 456.1 871.5 469.3 860.1 468.0Z" fill="#c173ba" stroke="#c173ba"/><path d="M878.5 456.1 889.8 458.0 882.8 471.2 871.5 469.3Z" fill="#c578ba" stroke="#c578ba"/><path d="M889.8 458.0 901.1 460.3 894.1 473.5 882.8 471.2Z" fill="#c87dba" stroke="#c87dba"/><path d="M901.1 460.3 912.4 463.1 905.4 476.3 894.1 473.5Z" fill="#c882ba" stroke="#c882ba"/><path d="M912.4 463.1 923.7 466.4 916.7 479.7 905.4 476.3Z" fill="#c587ba" stroke="#c587ba"/><path d="M923.7 466.4 934.9 470.2 927.9 483.5 916.7 479.7Z" fill="#c18cba" stroke="#c18cba"/><path d="M934.9 470.2 946.1 474.6 939.1 487.8 927.9 483.5Z" fill="#ba91ba" stroke="#ba91ba"/><path d="M946.1 474.6 957.3 479.4 950.3 492.5 939.1 487.8Z" fill="#b196ba" stroke="#b196ba"/><path d="M957.3 479.4 968.5 484.7 961.5 497.6 950.3 492.5Z" fill="#a69cba" stroke="#a69cba"/><path d="M968.5 484.7 979.6 490.4 972.7 502.9 961.5 497.6Z" fill="#9aa1ba" stroke="#9aa1ba"/><path d="M979.6 490.4 990.8 496.4 983.8 508.2 972.7 502.9Z" fill="#8ca6ba" stroke="#8ca6ba"/><path d="M990.8 496.4 1001.9 502.5 995.0 513.5 983.8 508.2Z" fill="#7eabba" stroke="#7eabba"/><path d="M1001.9 502.5 1013.0 508.3 1006.2 518.4 995.0 513.5Z" fill="#70b0ba" stroke="#70b0ba"/><path d="M1013.0 508.3 1024.2 513.8 1017.4 522.7 1006.2 518.4Z" fill="#65b5ba" stroke="#65b5ba"/><path d="M1024.2 513.8 1035.4 518.5 1028.7 526.3 1017.4 522.7Z" fill="#5cbaba" stroke="#5cbaba"/><path d="M1035.4 518.5 1046.6 522.3 1040.0 529.0 1028.7 526.3Z" fill="#57bfba" stroke="#57bfba"/><path d="M1046.6 522.3 1057.9 525.0 1051.3 530.7 1040.0 529.0Z" fill="#56c4ba" stroke="#56c4ba"/><path d="M1057.9 525.0 1069.3 526.6 1062.7 531.4 1051.3 530.7Z" fill="#5ac9ba" stroke="#5ac9ba"/><path d="M1069.3 526.6 1080.7 527.1 1074.1 531.3 1062.7 531.4Z" fill="#63cfba" stroke="#63cfba"/><path d="M1080.7 527.1 1092.1 526.8 1085.6 530.6 1074.1 531.3Z" fill="#70d4ba" stroke="#70d4ba"/><path d="M1092.1 526.8 1103.6 525.8 1097.1 529.5 1085.6 530.6Z" fill="#7fd9ba" stroke="#7fd9ba"/><path d="M1103.6 525.8 1115.1 524.5 1108.5 529.6 1097.1 529.5Z" fill="#8edeba" stroke="#8edeba"/><path d="M1115.1 524.5 1126.4 525.6 1119.8 532.2 1108.5 529.6Z" fill="#97e3ba" stroke="#97e3ba"/><path d="M1126.4 525.6 1137.7 528.2 1131.1 534.8 1119.8 532.2Z" fill="#99e8ba" stroke="#99e8ba"/><path d="M1137.7 528.2 1149.0 530.8 1142.4 537.3 1131.1 534.8Z" fill="#99edba" stroke="#99edba"/><path d="M1149.0 530.8 1160.4 533.4 1153.7 539.9 1142.4 537.3Z" fill="#99f2ba" stroke="#99f2ba"/><path d="M1160.4 533.4 1171.7 536.0 1165.0 542.5 1153.7 539.9Z" fill="#99f7ba" stroke="#99f7ba"/><path d="M1171.7 536.0 1183.0 538.6 1176.3 545.1 1165.0 542.5Z" fill="#99fcba" stroke="#99fcba"/><path d="M624.6 402.8 635.9 405.4 629.2 412.0 617.9 409.4Z" fill="#9903bf" stroke="#9903bf"/><path d="M635.9 405.4 647.2 408.0 640.5 414.5 629.2 412.0Z" fill="#9908bf" stroke="#9908bf"/><path d="M647.2 408.0 658.5 410.6 651.8 417.1 640.5 414.5Z" fill="#990dbf" stroke="#990dbf"/><path d="M658.5 410.6 669.8 413.2 663.1 419.7 651.8 417.1Z" fill="#9912bf" stroke="#9912bf"/><path d="M669.8 413.2 681.1 415.8 674.4 422.3 663.1 419.7Z" fill="#9917bf" stroke="#9917bf"/><path d="M681.1 415.8 692.2 422.4 685.7 426.3 674.4 422.3Z" fill="#931cbf" stroke="#931cbf"/><path d="M692.2 422.4 703.3 428.8 696.8 432.8 685.7 426.3Z" fill="#8421bf" stroke="#8421bf"/><path d="M703.3 428.8 714.5 434.7 707.9 438.9 696.8 432.8Z" fill="#7326bf" stroke="#7326bf"/><path d="M714.5 434.7 725.6 439.6 719.1 444.4 707.9 438.9Z" fill="#652bbf" stroke="#652bbf"/><path d="M725.6 439.6 736.9 443.5 730.3 449.1 719.1 444.4Z" fill="#5b30bf" stroke="#5b30bf"/><path d="M736.9 443.5 748.2 446.0 741.5 452.7 730.3 449.1Z" fill="#5636bf" stroke="#5636bf"/><path d="M748.2 446.0 759.5 447.4 752.8 455.1 741.5 452.7Z" fill="#573bbf" stroke="#573bbf"/><path d="M759.5 447.4 771.0 447.6 764.2 456.5 752.8 455.1Z" fill="#5d40bf" stroke="#5d40bf"/><path d="M771.0 447.6 782.4 446.9 775.6 456.9 764.2 456.5Z" fill="#6745bf" stroke="#6745bf"/><path d="M782.4 446.9 793.9 445.7 787.0 456.7 775.6 456.9Z" fill="#754abf" stroke="#754abf"/><path d="M793.9 445.7 805.4 444.2 798.5 456.0 787.0 456.7Z" fill="#854fbf" stroke="#854fbf"/><path d="M805.4 444.2 816.9 442.7 810.0 455.1 798.5 456.0Z" fill="#9654bf" stroke="#9654bf"/><path d="M816.9 442.7 828.4 441.6 821.4 454.3 810.0 455.1Z" fill="#a659bf" stroke="#a659bf"/><path d="M828.4 441.6 839.8 440.9 832.9 453.7 821.4 454.3Z" fill="#b65ebf" stroke="#b65ebf"/><path d="M839.8 440.9 851.3 440.9 844.3 453.6 832.9 453.7Z" fill="#c363bf" stroke="#c363bf"/><path d="M851.3 440.9 862.7 441.4 855.7 453.9 844.3 453.6Z" fill="#ce69bf" stroke="#ce69bf"/><path d="M862.7 441.4 874.0 442.5 867.1 454.7 855.7 453.9Z" fill="#d76ebf" stroke="#d76ebf"/><path d="M874.0 442.5 885.4 444.1 878.5 456.1 867.1 454.7Z" fill="#dd73bf" stroke="#dd73bf"/><path d="M885.4 444.1 896.7 446.1 889.8 458.0 878.5 456.1Z" fill="#e178bf" stroke="#e178bf"/><path d="M896.7 446.1 908.0 448.5 901.1 460.3 889.8 458.0Z" fill="#e37dbf" stroke="#e37dbf"/><path d="M908.0 448.5 919.3 451.3 912.4 463.1 901.1 460.3Z" fill="#e382bf" stroke="#e382bf"/><path d="M919.3 451.3 930.6 454.4 923.7 466.4 912.4 463.1Z" fill="#e187bf" stroke="#e187bf"/><path d="M930.6 454.4 941.8 458.0 934.9 470.2 923.7 466.4Z" fill="#dd8cbf" stroke="#dd8cbf"/><path d="M941.8 458.0 953.1 462.1 946.1 474.6 934.9 470.2Z" fill="#d791bf" stroke="#d791bf"/><path d="M953.1 462.1 964.3 466.7 957.3 479.4 946.1 474.6Z" fill="#ce96bf" stroke="#ce96bf"/><path d="M964.3 466.7 975.4 471.9 968.5 484.7 957.3 479.4Z" fill="#c39cbf" stroke="#c39cbf"/><path d="M975.4 471.9 986.6 477.8 979.6 490.4 968.5 484.7Z" fill="#b6a1bf" stroke="#b6a1bf"/><path d="M986.6 477.8 997.7 484.1 990.8 496.4 979.6 490.4Z" fill="#a6a6bf" stroke="#a6a6bf"/><path d="M997.7 484.1 1008.8 490.7 1001.9 502.5 990.8 496.4Z" fill="#96abbf" stroke="#96abbf"/><path d="M1008.8 490.7 1019.9 497.3 1013.0 508.3 1001.9 502.5Z" fill="#85b0bf" stroke="#85b0bf"/><path d="M1019.9 497.3 1031.0 503.7 1024.2 513.8 1013.0 508.3Z" fill="#75b5bf" stroke="#75b5bf"/><path d="M1031.0 503.7 1042.2 509.6 1035.4 518.5 1024.2 513.8Z" fill="#67babf" stroke="#67babf"/><path d="M1042.2 509.6 1053.4 514.5 1046.6 522.3 1035.4 518.5Z" fill="#5dbfbf" stroke="#5dbfbf"/><path d="M1053.4 514.5 1064.6 518.4 1057.9 525.0 1046.6 522.3Z" fill="#57c4bf" stroke="#57c4bf"/><path d="M1064.6 518.4 1075.9 521.0 1069.3 526.6 1057.9 525.0Z" fill="#56c9bf" stroke="#56c9bf"/><path d="M1075.9 521.0 1087.2 522.3 1080.7 527.1 1069.3 526.6Z" fill="#5bcfbf" stroke="#5bcfbf"/><path d="M1087.2 522.3 1098.7 522.5 1092.1 526.8 1080.7 527.1Z" fill="#65d4bf" stroke="#65d4bf"/><path d="M1098.7 522.5 1110.1 521.8 1103.6 525.8 1092.1 526.8Z" fill="#73d9bf" stroke="#73d9bf"/><path d="M1110.1 521.8 1121.6 520.6 1115.1 524.5 1103.6 525.8Z" fill="#84debf" stroke="#84debf"/><path d="M1121.6 520.6 1133.1 519.1 1126.4 525.6 1115.1 524.5Z" fill="#93e3bf" stroke="#93e3bf"/><path d="M1133.1 519.1 1144.4 521.7 1137.7 528.2 1126.4 525.6Z" fill="#99e8bf" stroke="#99e8bf"/><path d="M1144.4 521.7 1155.7 524.3 1149.0 530.8 1137.7 528.2Z" fill="#99edbf" stroke="#99edbf"/><path d="M1155.7 524.3 1167.0 526.9 1160.4 533.4 1149.0 530.8Z" fill="#99f2bf" stroke="#99f2bf"/><path d="M1167.0 526.9 1178.3 529.4 1171.7 536.0 1160.4 533.4Z" fill="#99f7bf" stroke="#99f7bf"/><path d="M1178.3 529.4 1189.6 532.0 1183.0 538.6 1171.7 536.0Z" fill="#99fcbf" stroke="#99fcbf"/><path d="M631.2 396.3 642.5 398.9 635.9 405.4 624.6 402.8Z" fill="#9903c4" stroke="#9903c4"/><path d="M642.5 398.9 653.8 401.5 647.2 408.0 635.9 405.4Z" fill="#9908c4" stroke="#9908c4"/><path d="M653.8 401.5 665.1 404.1 658.5 410.6 647.2 408.0Z" fill="#990dc4" stroke="#990dc4"/><path d="M665.1 404.1 676.4 406.6 669.8 413.2 658.5 410.6Z" fill="#9912c4" stroke="#9912c4"/><path d="M676.4 406.6 687.6 411.6 681.1 415.8 669.8 413.2Z" fill="#9617c4" stroke="#9617c4"/><path d="M687.6 411.6 698.7 418.2 692.2 422.4 681.1 415.8Z" fill="#8a1cc4" stroke="#8a1cc4"/><path d="M698.7 418.2 709.9 424.5 703.3 428.8 692.2 422.4Z" fill="#7821c4" stroke="#7821c4"/><path d="M709.9 424.5 721.0 429.9 714.5 434.7 703.3 428.8Z" fill="#6926c4" stroke="#6926c4"/><path d="M721.0 429.9 732.2 434.1 725.6 439.6 714.5 434.7Z" fill="#5d2bc4" stroke="#5d2bc4"/><path d="M732.2 434.1 743.5 437.0 736.9 443.5 725.6 439.6Z" fill="#5730c4" stroke="#5730c4"/><path d="M743.5 437.0 754.9 438.5 748.2 446.0 736.9 443.5Z" fill="#5636c4" stroke="#5636c4"/><path d="M754.9 438.5 766.3 438.7 759.5 447.4 748.2 446.0Z" fill="#5c3bc4" stroke="#5c3bc4"/><path d="M766.3 438.7 777.8 437.8 771.0 447.6 759.5 447.4Z" fill="#6740c4" stroke="#6740c4"/><path d="M777.8 437.8 789.3 436.1 782.4 446.9 771.0 447.6Z" fill="#7645c4" stroke="#7645c4"/><path d="M789.3 436.1 800.8 434.1 793.9 445.7 782.4 446.9Z" fill="#884ac4" stroke="#884ac4"/><path d="M800.8 434.1 812.3 432.1 805.4 444.2 793.9 445.7Z" fill="#9c4fc4" stroke="#9c4fc4"/><path d="M812.3 432.1 823.8 430.5 816.9 442.7 805.4 444.2Z" fill="#af54c4" stroke="#af54c4"/><path d="M823.8 430.5 835.3 429.4 828.4 441.6 816.9 442.7Z" fill="#c159c4" stroke="#c159c4"/><path d="M835.3 429.4 846.7 429.0 839.8 440.9 828.4 441.6Z" fill="#d05ec4" stroke="#d05ec4"/><path d="M846.7 429.0 858.2 429.4 851.3 440.9 839.8 440.9Z" fill="#dd63c4" stroke="#dd63c4"/><path d="M858.2 429.4 869.5 430.5 862.7 441.4 851.3 440.9Z" fill="#e769c4" stroke="#e769c4"/><path d="M869.5 430.5 880.9 432.1 874.0 442.5 862.7 441.4Z" fill="#ee6ec4" stroke="#ee6ec4"/><path d="M880.9 432.1 892.2 434.2 885.4 444.1 874.0 442.5Z" fill="#f273c4" stroke="#f273c4"/><path d="M892.2 434.2 903.5 436.5 896.7 446.1 885.4 444.1Z" fill="#f578c4" stroke="#f578c4"/><path d="M903.5 436.5 914.8 439.0 908.0 448.5 896.7 446.1Z" fill="#f67dc4" stroke="#f67dc4"/><path d="M914.8 439.0 926.1 441.7 919.3 451.3 908.0 448.5Z" fill="#f682c4" stroke="#f682c4"/><path d="M926.1 441.7 937.4 444.5 930.6 454.4 919.3 451.3Z" fill="#f587c4" stroke="#f587c4"/><path d="M937.4 444.5 948.7 447.6 941.8 458.0 930.6 454.4Z" fill="#f28cc4" stroke="#f28cc4"/><path d="M948.7 447.6 959.9 451.1 953.1 462.1 941.8 458.0Z" fill="#ee91c4" stroke="#ee91c4"/><path d="M959.9 451.1 971.2 455.2 964.3 466.7 953.1 462.1Z" fill="#e796c4" stroke="#e796c4"/><path d="M971.2 455.2 982.4 460.0 975.4 471.9 964.3 466.7Z" fill="#dd9cc4" stroke="#dd9cc4"/><path d="M982.4 460.0 993.5 465.6 986.6 477.8 975.4 471.9Z" fill="#d0a1c4" stroke="#d0a1c4"/><path d="M993.5 465.6 1004.6 471.8 997.7 484.1 986.6 477.8Z" fill="#c1a6c4" stroke="#c1a6c4"/><path d="M1004.6 471.8 1015.7 478.6 1008.8 490.7 997.7 484.1Z" fill="#afabc4" stroke="#afabc4"/><path d="M1015.7 478.6 1026.8 485.8 1019.9 497.3 1008.8 490.7Z" fill="#9cb0c4" stroke="#9cb0c4"/><path d="M1026.8 485.8 1037.9 493.0 1031.0 503.7 1019.9 497.3Z" fill="#88b5c4" stroke="#88b5c4"/><path d="M1037.9 493.0 1049.0 499.8 1042.2 509.6 1031.0 503.7Z" fill="#76bac4" stroke="#76bac4"/><path d="M1049.0 499.8 1060.1 505.9 1053.4 514.5 1042.2 509.6Z" fill="#67bfc4" stroke="#67bfc4"/><path d="M1060.1 505.9 1071.3 510.8 1064.6 518.4 1053.4 514.5Z" fill="#5cc4c4" stroke="#5cc4c4"/><path d="M1071.3 510.8 1082.5 514.5 1075.9 521.0 1064.6 518.4Z" fill="#56c9c4" stroke="#56c9c4"/><path d="M1082.5 514.5 1093.9 516.8 1087.2 522.3 1075.9 521.0Z" fill="#57cfc4" stroke="#57cfc4"/><path d="M1093.9 516.8 1105.2 517.7 1098.7 522.5 1087.2 522.3Z" fill="#5dd4c4" stroke="#5dd4c4"/><path d="M1105.2 517.7 1116.7 517.5 1110.1 521.8 1098.7 522.5Z" fill="#69d9c4" stroke="#69d9c4"/><path d="M1116.7 517.5 1128.2 516.4 1121.6 520.6 1110.1 521.8Z" fill="#78dec4" stroke="#78dec4"/><path d="M1128.2 516.4 1139.6 514.9 1133.1 519.1 1121.6 520.6Z" fill="#8ae3c4" stroke="#8ae3c4"/><path d="M1139.6 514.9 1151.1 515.1 1144.4 521.7 1133.1 519.1Z" fill="#96e8c4" stroke="#96e8c4"/><path d="M1151.1 515.1 1162.4 517.7 1155.7 524.3 1144.4 521.7Z" fill="#99edc4" stroke="#99edc4"/><path d="M1162.4 517.7 1173.7 520.3 1167.0 526.9 1155.7 524.3Z" fill="#99f2c4" stroke="#99f2c4"/><path d="M1173.7 520.3 1185.0 522.9 1178.3 529.4 1167.0 526.9Z" fill="#99f7c4" stroke="#99f7c4"/><path d="M1185.0 522.9 1196.3 525.5 1189.6 532.0 1178.3 529.4Z" fill="#99fcc4" stroke="#99fcc4"/><path d="M637.9 389.8 649.2 392.3 642.5 398.9 631.2 396.3Z" fill="#9903c9" stroke="#9903c9"/><path d="M649.2 392.3 660.5 394.9 653.8 401.5 642.5 398.9Z" fill="#9908c9" stroke="#9908c9"/><path d="M660.5 394.9 671.8 397.5 665.1 404.1 653.8 401.5Z" fill="#990dc9" stroke="#990dc9"/><path d="M671.8 397.5 683.1 400.4 676.4 406.6 665.1 404.1Z" fill="#9912c9" stroke="#9912c9"/><path d="M683.1 400.4 694.2 407.2 687.6 411.6 676.4 406.6Z" fill="#9117c9" stroke="#9117c9"/><path d="M694.2 407.2 705.3 413.8 698.7 418.2 687.6 411.6Z" fill="#801cc9" stroke="#801cc9"/><path d="M705.3 413.8 716.4 419.7 709.9 424.5 698.7 418.2Z" fill="#6f21c9" stroke="#6f21c9"/><path d="M716.4 419.7 727.6 424.5 721.0 429.9 709.9 424.5Z" fill="#6126c9" stroke="#6126c9"/><path d="M727.6 424.5 738.9 428.0 732.2 434.1 721.0 429.9Z" fill="#582bc9" stroke="#582bc9"/><path d="M738.9 428.0 750.2 429.8 743.5 437.0 732.2 434.1Z" fill="#5630c9" stroke="#5630c9"/><path d="M750.2 429.8 761.6 430.2 754.9 438.5 743.5 437.0Z" fill="#5a36c9" stroke="#5a36c9"/><path d="M761.6 430.2 773.1 429.3 766.3 438.7 754.9 438.5Z" fill="#653bc9" stroke="#653bc9"/><path d="M773.1 429.3 784.6 427.4 777.8 437.8 766.3 438.7Z" fill="#7540c9" stroke="#7540c9"/><path d="M784.6 427.4 796.2 425.0 789.3 436.1 777.8 437.8Z" fill="#8845c9" stroke="#8845c9"/><path d="M796.2 425.0 807.7 422.5 800.8 434.1 789.3 436.1Z" fill="#9e4ac9" stroke="#9e4ac9"/><path d="M807.7 422.5 819.2 420.4 812.3 432.1 800.8 434.1Z" fill="#b34fc9" stroke="#b34fc9"/><path d="M819.2 420.4 830.7 418.9 823.8 430.5 812.3 432.1Z" fill="#c854c9" stroke="#c854c9"/><path d="M830.7 418.9 842.2 418.3 835.3 429.4 823.8 430.5Z" fill="#d959c9" stroke="#d959c9"/><path d="M842.2 418.3 853.6 418.6 846.7 429.0 835.3 429.4Z" fill="#e75ec9" stroke="#e75ec9"/><path d="M853.6 418.6 865.0 419.9 858.2 429.4 846.7 429.0Z" fill="#f163c9" stroke="#f163c9"/><path d="M865.0 419.9 876.3 421.8 869.5 430.5 858.2 429.4Z" fill="#f769c9" stroke="#f769c9"/><path d="M876.3 421.8 887.6 424.3 880.9 432.1 869.5 430.5Z" fill="#fb6ec9" stroke="#fb6ec9"/><path d="M887.6 424.3 898.9 427.0 892.2 434.2 880.9 432.1Z" fill="#fc73c9" stroke="#fc73c9"/><path d="M898.9 427.0 910.2 429.8 903.5 436.5 892.2 434.2Z" fill="#fd78c9" stroke="#fd78c9"/><path d="M910.2 429.8 921.5 432.5 914.8 439.0 903.5 436.5Z" fill="#fd7dc9" stroke="#fd7dc9"/><path d="M921.5 432.5 932.8 435.0 926.1 441.7 914.8 439.0Z" fill="#fd82c9" stroke="#fd82c9"/><path d="M932.8 435.0 944.1 437.4 937.4 444.5 926.1 441.7Z" fill="#fd87c9" stroke="#fd87c9"/><path d="M944.1 437.4 955.4 439.8 948.7 447.6 937.4 444.5Z" fill="#fc8cc9" stroke="#fc8cc9"/><path d="M955.4 439.8 966.7 442.5 959.9 451.1 948.7 447.6Z" fill="#fb91c9" stroke="#fb91c9"/><path d="M966.7 442.5 978.0 445.7 971.2 455.2 959.9 451.1Z" fill="#f796c9" stroke="#f796c9"/><path d="M978.0 445.7 989.2 449.6 982.4 460.0 971.2 455.2Z" fill="#f19cc9" stroke="#f19cc9"/><path d="M989.2 449.6 1000.4 454.4 993.5 465.6 982.4 460.0Z" fill="#e7a1c9" stroke="#e7a1c9"/><path d="M1000.4 454.4 1011.5 460.2 1004.6 471.8 993.5 465.6Z" fill="#d9a6c9" stroke="#d9a6c9"/><path d="M1011.5 460.2 1022.6 466.9 1015.7 478.6 1004.6 471.8Z" fill="#c8abc9" stroke="#c8abc9"/><path d="M1022.6 466.9 1033.7 474.2 1026.8 485.8 1015.7 478.6Z" fill="#b3b0c9" stroke="#b3b0c9"/><path d="M1033.7 474.2 1044.8 481.8 1037.9 493.0 1026.8 485.8Z" fill="#9eb5c9" stroke="#9eb5c9"/><path d="M1044.8 481.8 1055.8 489.4 1049.0 499.8 1037.9 493.0Z" fill="#88bac9" stroke="#88bac9"/><path d="M1055.8 489.4 1066.9 496.5 1060.1 505.9 1049.0 499.8Z" fill="#75bfc9" stroke="#75bfc9"/><path d="M1066.9 496.5 1078.0 502.6 1071.3 510.8 1060.1 505.9Z" fill="#65c4c9" stroke="#65c4c9"/><path d="M1078.0 502.6 1089.2 507.3 1082.5 514.5 1071.3 510.8Z" fill="#5ac9c9" stroke="#5ac9c9"/><path d="M1089.2 507.3 1100.5 510.6 1093.9 516.8 1082.5 514.5Z" fill="#56cfc9" stroke="#56cfc9"/><path d="M1100.5 510.6 1111.8 512.4 1105.2 517.7 1093.9 516.8Z" fill="#58d4c9" stroke="#58d4c9"/><path d="M1111.8 512.4 1123.2 512.8 1116.7 517.5 1105.2 517.7Z" fill="#61d9c9" stroke="#61d9c9"/><path d="M1123.2 512.8 1134.7 512.0 1128.2 516.4 1116.7 517.5Z" fill="#6fdec9" stroke="#6fdec9"/><path d="M1134.7 512.0 1146.2 510.6 1139.6 514.9 1128.2 516.4Z" fill="#80e3c9" stroke="#80e3c9"/><path d="M1146.2 510.6 1157.7 508.9 1151.1 515.1 1139.6 514.9Z" fill="#91e8c9" stroke="#91e8c9"/><path d="M1157.7 508.9 1169.0 511.2 1162.4 517.7 1151.1 515.1Z" fill="#99edc9" stroke="#99edc9"/><path d="M1169.0 511.2 1180.3 513.8 1173.7 520.3 1162.4 517.7Z" fill="#99f2c9" stroke="#99f2c9"/><path d="M1180.3 513.8 1191.6 516.4 1185.0 522.9 1173.7 520.3Z" fill="#99f7c9" stroke="#99f7c9"/><path d="M1191.6 516.4 1202.9 518.9 1196.3 525.5 1185.0 522.9Z" fill="#99fcc9" stroke="#99fcc9"/><path d="M644.6 383.2 655.9 385.8 649.2 392.3 637.9 389.8Z" fill="#9903cf" stroke="#9903cf"/><path d="M655.9 385.8 667.2 388.4 660.5 394.9 649.2 392.3Z" fill="#9908cf" stroke="#9908cf"/><path d="M667.2 388.4 678.5 391.0 671.8 397.5 660.5 394.9Z" fill="#990dcf" stroke="#990dcf"/><path d="M678.5 391.0 689.7 395.8 683.1 400.4 671.8 397.5Z" fill="#9612cf" stroke="#9612cf"/><path d="M689.7 395.8 700.7 402.7 694.2 407.2 683.1 400.4Z" fill="#8917cf" stroke="#8917cf"/><path d="M700.7 402.7 711.9 409.1 705.3 413.8 694.2 407.2Z" fill="#771ccf" stroke="#771ccf"/><path d="M711.9 409.1 723.0 414.6 716.4 419.7 705.3 413.8Z" fill="#6721cf" stroke="#6721cf"/><path d="M723.0 414.6 734.3 418.7 727.6 424.5 716.4 419.7Z" fill="#5b26cf" stroke="#5b26cf"/><path d="M734.3 418.7 745.6 421.2 738.9 428.0 727.6 424.5Z" fill="#562bcf" stroke="#562bcf"/><path d="M745.6 421.2 756.9 422.0 750.2 429.8 738.9 428.0Z" fill="#5830cf" stroke="#5830cf"/><path d="M756.9 422.0 768.4 421.4 761.6 430.2 750.2 429.8Z" fill="#6136cf" stroke="#6136cf"/><path d="M768.4 421.4 779.9 419.5 773.1 429.3 761.6 430.2Z" fill="#703bcf" stroke="#703bcf"/><path d="M779.9 419.5 791.5 416.8 784.6 427.4 773.1 429.3Z" fill="#8540cf" stroke="#8540cf"/><path d="M791.5 416.8 803.0 413.9 796.2 425.0 784.6 427.4Z" fill="#9c45cf" stroke="#9c45cf"/><path d="M803.0 413.9 814.6 411.2 807.7 422.5 796.2 425.0Z" fill="#b34acf" stroke="#b34acf"/><path d="M814.6 411.2 826.1 409.3 819.2 420.4 807.7 422.5Z" fill="#ca4fcf" stroke="#ca4fcf"/><path d="M826.1 409.3 837.6 408.4 830.7 418.9 819.2 420.4Z" fill="#dd54cf" stroke="#dd54cf"/><path d="M837.6 408.4 849.0 408.7 842.2 418.3 830.7 418.9Z" fill="#ec59cf" stroke="#ec59cf"/><path d="M849.0 408.7 860.3 410.2 853.6 418.6 842.2 418.3Z" fill="#f65ecf" stroke="#f65ecf"/><path d="M860.3 410.2 871.6 412.7 865.0 419.9 853.6 418.6Z" fill="#fb63cf" stroke="#fb63cf"/><path d="M871.6 412.7 882.9 415.9 876.3 421.8 865.0 419.9Z" fill="#fd69cf" stroke="#fd69cf"/><path d="M882.9 415.9 894.2 419.4 887.6 424.3 876.3 421.8Z" fill="#fc6ecf" stroke="#fc6ecf"/><path d="M894.2 419.4 905.4 423.0 898.9 427.0 887.6 424.3Z" fill="#fa73cf" stroke="#fa73cf"/><path d="M905.4 423.0 916.7 426.4 910.2 429.8 898.9 427.0Z" fill="#f778cf" stroke="#f778cf"/><path d="M916.7 426.4 928.0 429.2 921.5 432.5 910.2 429.8Z" fill="#f67dcf" stroke="#f67dcf"/><path d="M928.0 429.2 939.3 431.5 932.8 435.0 921.5 432.5Z" fill="#f682cf" stroke="#f682cf"/><path d="M939.3 431.5 950.6 433.4 944.1 437.4 932.8 435.0Z" fill="#f787cf" stroke="#f787cf"/><path d="M950.6 433.4 962.0 434.9 955.4 439.8 944.1 437.4Z" fill="#fa8ccf" stroke="#fa8ccf"/><path d="M962.0 434.9 973.3 436.5 966.7 442.5 955.4 439.8Z" fill="#fc91cf" stroke="#fc91cf"/><path d="M973.3 436.5 984.6 438.5 978.0 445.7 966.7 442.5Z" fill="#fd96cf" stroke="#fd96cf"/><path d="M984.6 438.5 995.9 441.2 989.2 449.6 978.0 445.7Z" fill="#fb9ccf" stroke="#fb9ccf"/><path d="M995.9 441.2 1007.2 444.9 1000.4 454.4 989.2 449.6Z" fill="#f6a1cf" stroke="#f6a1cf"/><path d="M1007.2 444.9 1018.4 449.7 1011.5 460.2 1000.4 454.4Z" fill="#eca6cf" stroke="#eca6cf"/><path d="M1018.4 449.7 1029.5 455.8 1022.6 466.9 1011.5 460.2Z" fill="#ddabcf" stroke="#ddabcf"/><path d="M1029.5 455.8 1040.6 462.9 1033.7 474.2 1022.6 466.9Z" fill="#cab0cf" stroke="#cab0cf"/><path d="M1040.6 462.9 1051.6 470.7 1044.8 481.8 1033.7 474.2Z" fill="#b3b5cf" stroke="#b3b5cf"/><path d="M1051.6 470.7 1062.7 478.8 1055.8 489.4 1044.8 481.8Z" fill="#9cbacf" stroke="#9cbacf"/><path d="M1062.7 478.8 1073.7 486.6 1066.9 496.5 1055.8 489.4Z" fill="#85bfcf" stroke="#85bfcf"/><path d="M1073.7 486.6 1084.8 493.7 1078.0 502.6 1066.9 496.5Z" fill="#70c4cf" stroke="#70c4cf"/><path d="M1084.8 493.7 1095.9 499.5 1089.2 507.3 1078.0 502.6Z" fill="#61c9cf" stroke="#61c9cf"/><path d="M1095.9 499.5 1107.2 503.8 1100.5 510.6 1089.2 507.3Z" fill="#58cfcf" stroke="#58cfcf"/><path d="M1107.2 503.8 1118.5 506.5 1111.8 512.4 1100.5 510.6Z" fill="#56d4cf" stroke="#56d4cf"/><path d="M1118.5 506.5 1129.8 507.6 1123.2 512.8 1111.8 512.4Z" fill="#5bd9cf" stroke="#5bd9cf"/><path d="M1129.8 507.6 1141.3 507.3 1134.7 512.0 1123.2 512.8Z" fill="#67decf" stroke="#67decf"/><path d="M1141.3 507.3 1152.8 506.0 1146.2 510.6 1134.7 512.0Z" fill="#77e3cf" stroke="#77e3cf"/><path d="M1152.8 506.0 1164.3 504.3 1157.7 508.9 1146.2 510.6Z" fill="#89e8cf" stroke="#89e8cf"/><path d="M1164.3 504.3 1175.7 504.6 1169.0 511.2 1157.7 508.9Z" fill="#96edcf" stroke="#96edcf"/><path d="M1175.7 504.6 1187.0 507.2 1180.3 513.8 1169.0 511.2Z" fill="#99f2cf" stroke="#99f2cf"/><path d="M1187.0 507.2 1198.3 509.8 1191.6 516.4 1180.3 513.8Z" fill="#99f7cf" stroke="#99f7cf"/><path d="M1198.3 509.8 1209.6 512.4 1202.9 518.9 1191.6 516.4Z" fill="#99fccf" stroke="#99fccf"/><path d="M651.2 376.7 662.5 379.3 655.9 385.8 644.6 383.2Z" fill="#9903d4" stroke="#9903d4"/><path d="M662.5 379.3 673.8 381.8 667.2 388.4 655.9 385.8Z" fill="#9908d4" stroke="#9908d4"/><path d="M673.8 381.8 685.1 384.4 678.5 391.0 667.2 388.4Z" fill="#990dd4" stroke="#990dd4"/><path d="M685.1 384.4 696.2 391.0 689.7 395.8 678.5 391.0Z" fill="#9212d4" stroke="#9212d4"/><path d="M696.2 391.0 707.3 397.9 700.7 402.7 689.7 395.8Z" fill="#8117d4" stroke="#8117d4"/><path d="M707.3 397.9 718.4 404.0 711.9 409.1 700.7 402.7Z" fill="#6f1cd4" stroke="#6f1cd4"/><path d="M718.4 404.0 729.6 408.9 723.0 414.6 711.9 409.1Z" fill="#6021d4" stroke="#6021d4"/><path d="M729.6 408.9 740.9 412.3 734.3 418.7 723.0 414.6Z" fill="#5826d4" stroke="#5826d4"/><path d="M740.9 412.3 752.2 413.9 745.6 421.2 734.3 418.7Z" fill="#562bd4" stroke="#562bd4"/><path d="M752.2 413.9 763.7 413.8 756.9 422.0 745.6 421.2Z" fill="#5d30d4" stroke="#5d30d4"/><path d="M763.7 413.8 775.2 412.2 768.4 421.4 756.9 422.0Z" fill="#6a36d4" stroke="#6a36d4"/><path d="M775.2 412.2 786.7 409.5 779.9 419.5 768.4 421.4Z" fill="#7e3bd4" stroke="#7e3bd4"/><path d="M786.7 409.5 798.3 406.2 791.5 416.8 779.9 419.5Z" fill="#9640d4" stroke="#9640d4"/><path d="M798.3 406.2 809.9 403.1 803.0 413.9 791.5 416.8Z" fill="#af45d4" stroke="#af45d4"/><path d="M809.9 403.1 821.4 400.6 814.6 411.2 803.0 413.9Z" fill="#c84ad4" stroke="#c84ad4"/><path d="M821.4 400.6 832.9 399.3 826.1 409.3 814.6 411.2Z" fill="#dd4fd4" stroke="#dd4fd4"/><path d="M832.9 399.3 844.4 399.3 837.6 408.4 826.1 409.3Z" fill="#ee54d4" stroke="#ee54d4"/><path d="M844.4 399.3 855.7 400.9 849.0 408.7 837.6 408.4Z" fill="#f859d4" stroke="#f859d4"/><path d="M855.7 400.9 867.0 403.9 860.3 410.2 849.0 408.7Z" fill="#fd5ed4" stroke="#fd5ed4"/><path d="M867.0 403.9 878.2 407.9 871.6 412.7 860.3 410.2Z" fill="#fc63d4" stroke="#fc63d4"/><path d="M878.2 407.9 889.4 412.6 882.9 415.9 871.6 412.7Z" fill="#f769d4" stroke="#f769d4"/><path d="M889.4 412.6 900.6 417.5 894.2 419.4 882.9 415.9Z" fill="#f16ed4" stroke="#f16ed4"/><path d="M900.6 417.5 911.8 422.1 905.4 423.0 894.2 419.4Z" fill="#e973d4" stroke="#e973d4"/><path d="M911.8 422.1 923.0 426.0 916.7 426.4 905.4 423.0Z" fill="#e478d4" stroke="#e478d4"/><path d="M923.0 426.0 934.3 429.1 928.0 429.2 916.7 426.4Z" fill="#e07dd4" stroke="#e07dd4"/><path d="M934.3 429.1 945.6 431.2 939.3 431.5 928.0 429.2Z" fill="#e082d4" stroke="#e082d4"/><path d="M945.6 431.2 957.0 432.4 950.6 433.4 939.3 431.5Z" fill="#e487d4" stroke="#e487d4"/><path d="M957.0 432.4 968.4 433.0 962.0 434.9 950.6 433.4Z" fill="#e98cd4" stroke="#e98cd4"/><path d="M968.4 433.0 979.8 433.3 973.3 436.5 962.0 434.9Z" fill="#f191d4" stroke="#f191d4"/><path d="M979.8 433.3 991.2 433.8 984.6 438.5 973.3 436.5Z" fill="#f796d4" stroke="#f796d4"/><path d="M991.2 433.8 1002.6 434.9 995.9 441.2 984.6 438.5Z" fill="#fc9cd4" stroke="#fc9cd4"/><path d="M1002.6 434.9 1013.9 437.1 1007.2 444.9 995.9 441.2Z" fill="#fda1d4" stroke="#fda1d4"/><path d="M1013.9 437.1 1025.2 440.7 1018.4 449.7 1007.2 444.9Z" fill="#f8a6d4" stroke="#f8a6d4"/><path d="M1025.2 440.7 1036.3 445.8 1029.5 455.8 1018.4 449.7Z" fill="#eeabd4" stroke="#eeabd4"/><path d="M1036.3 445.8 1047.4 452.3 1040.6 462.9 1029.5 455.8Z" fill="#ddb0d4" stroke="#ddb0d4"/><path d="M1047.4 452.3 1058.5 459.9 1051.6 470.7 1040.6 462.9Z" fill="#c8b5d4" stroke="#c8b5d4"/><path d="M1058.5 459.9 1069.5 468.3 1062.7 478.8 1051.6 470.7Z" fill="#afbad4" stroke="#afbad4"/><path d="M1069.5 468.3 1080.5 476.6 1073.7 486.6 1062.7 478.8Z" fill="#96bfd4" stroke="#96bfd4"/><path d="M1080.5 476.6 1091.6 484.5 1084.8 493.7 1073.7 486.6Z" fill="#7ec4d4" stroke="#7ec4d4"/><path d="M1091.6 484.5 1102.7 491.3 1095.9 499.5 1084.8 493.7Z" fill="#6ac9d4" stroke="#6ac9d4"/><path d="M1102.7 491.3 1113.9 496.6 1107.2 503.8 1095.9 499.5Z" fill="#5dcfd4" stroke="#5dcfd4"/><path d="M1113.9 496.6 1125.1 500.1 1118.5 506.5 1107.2 503.8Z" fill="#56d4d4" stroke="#56d4d4"/><path d="M1125.1 500.1 1136.5 501.9 1129.8 507.6 1118.5 506.5Z" fill="#58d9d4" stroke="#58d9d4"/><path d="M1136.5 501.9 1147.9 502.2 1141.3 507.3 1129.8 507.6Z" fill="#60ded4" stroke="#60ded4"/><path d="M1147.9 502.2 1159.3 501.2 1152.8 506.0 1141.3 507.3Z" fill="#6fe3d4" stroke="#6fe3d4"/><path d="M1159.3 501.2 1170.8 499.6 1164.3 504.3 1152.8 506.0Z" fill="#81e8d4" stroke="#81e8d4"/><path d="M1170.8 499.6 1182.3 498.1 1175.7 504.6 1164.3 504.3Z" fill="#92edd4" stroke="#92edd4"/><path d="M1182.3 498.1 1193.6 500.7 1187.0 507.2 1175.7 504.6Z" fill="#99f2d4" stroke="#99f2d4"/><path d="M1193.6 500.7 1204.9 503.3 1198.3 509.8 1187.0 507.2Z" fill="#99f7d4" stroke="#99f7d4"/><path d="M1204.9 503.3 1216.2 505.9 1209.6 512.4 1198.3 509.8Z" fill="#99fcd4" stroke="#99fcd4"/><path d="M657.9 370.1 669.2 372.7 662.5 379.3 651.2 376.7Z" fill="#9903d9" stroke="#9903d9"/><path d="M669.2 372.7 680.5 375.3 673.8 381.8 662.5 379.3Z" fill="#9908d9" stroke="#9908d9"/><path d="M680.5 375.3 691.7 379.0 685.1 384.4 673.8 381.8Z" fill="#980dd9" stroke="#980dd9"/><path d="M691.7 379.0 702.8 386.1 696.2 391.0 685.1 384.4Z" fill="#8d12d9" stroke="#8d12d9"/><path d="M702.8 386.1 713.9 392.8 707.3 397.9 696.2 391.0Z" fill="#7917d9" stroke="#7917d9"/><path d="M713.9 392.8 725.1 398.6 718.4 404.0 707.3 397.9Z" fill="#681cd9" stroke="#681cd9"/><path d="M725.1 398.6 736.3 402.9 729.6 408.9 718.4 404.0Z" fill="#5c21d9" stroke="#5c21d9"/><path d="M736.3 402.9 747.6 405.5 740.9 412.3 729.6 408.9Z" fill="#5626d9" stroke="#5626d9"/><path d="M747.6 405.5 759.0 406.3 752.2 413.9 740.9 412.3Z" fill="#582bd9" stroke="#582bd9"/><path d="M759.0 406.3 770.4 405.3 763.7 413.8 752.2 413.9Z" fill="#6330d9" stroke="#6330d9"/><path d="M770.4 405.3 782.0 402.8 775.2 412.2 763.7 413.8Z" fill="#7536d9" stroke="#7536d9"/><path d="M782.0 402.8 793.6 399.5 786.7 409.5 775.2 412.2Z" fill="#8c3bd9" stroke="#8c3bd9"/><path d="M793.6 399.5 805.2 396.0 798.3 406.2 786.7 409.5Z" fill="#a640d9" stroke="#a640d9"/><path d="M805.2 396.0 816.7 392.9 809.9 403.1 798.3 406.2Z" fill="#c145d9" stroke="#c145d9"/><path d="M816.7 392.9 828.3 390.9 821.4 400.6 809.9 403.1Z" fill="#d94ad9" stroke="#d94ad9"/><path d="M828.3 390.9 839.7 390.4 832.9 399.3 821.4 400.6Z" fill="#ec4fd9" stroke="#ec4fd9"/><path d="M839.7 390.4 851.1 391.8 844.4 399.3 832.9 399.3Z" fill="#f854d9" stroke="#f854d9"/><path d="M851.1 391.8 862.3 394.9 855.7 400.9 844.4 399.3Z" fill="#fd59d9" stroke="#fd59d9"/><path d="M862.3 394.9 873.5 399.6 867.0 403.9 855.7 400.9Z" fill="#fb5ed9" stroke="#fb5ed9"/><path d="M873.5 399.6 884.7 405.4 878.2 407.9 867.0 403.9Z" fill="#f363d9" stroke="#f363d9"/><path d="M884.7 405.4 895.8 411.7 889.4 412.6 878.2 407.9Z" fill="#e769d9" stroke="#e769d9"/><path d="M895.8 411.7 906.9 417.9 900.6 417.5 889.4 412.6Z" fill="#d96ed9" stroke="#d96ed9"/><path d="M906.9 417.9 918.1 423.6 911.8 422.1 900.6 417.5Z" fill="#cd73d9" stroke="#cd73d9"/><path d="M918.1 423.6 929.3 428.1 923.0 426.0 911.8 422.1Z" fill="#c378d9" stroke="#c378d9"/><path d="M929.3 428.1 940.5 431.4 934.3 429.1 923.0 426.0Z" fill="#be7dd9" stroke="#be7dd9"/><path d="M940.5 431.4 951.9 433.3 945.6 431.2 934.3 429.1Z" fill="#be82d9" stroke="#be82d9"/><path d="M951.9 433.3 963.3 433.9 957.0 432.4 945.6 431.2Z" fill="#c387d9" stroke="#c387d9"/><path d="M963.3 433.9 974.7 433.4 968.4 433.0 957.0 432.4Z" fill="#cd8cd9" stroke="#cd8cd9"/><path d="M974.7 433.4 986.2 432.4 979.8 433.3 968.4 433.0Z" fill="#d991d9" stroke="#d991d9"/><path d="M986.2 432.4 997.7 431.2 991.2 433.8 979.8 433.3Z" fill="#e796d9" stroke="#e796d9"/><path d="M997.7 431.2 1009.1 430.6 1002.6 434.9 991.2 433.8Z" fill="#f39cd9" stroke="#f39cd9"/><path d="M1009.1 430.6 1020.5 431.1 1013.9 437.1 1002.6 434.9Z" fill="#fba1d9" stroke="#fba1d9"/><path d="M1020.5 431.1 1031.9 433.1 1025.2 440.7 1013.9 437.1Z" fill="#fda6d9" stroke="#fda6d9"/><path d="M1031.9 433.1 1043.1 437.0 1036.3 445.8 1025.2 440.7Z" fill="#f8abd9" stroke="#f8abd9"/><path d="M1043.1 437.0 1054.3 442.6 1047.4 452.3 1036.3 445.8Z" fill="#ecb0d9" stroke="#ecb0d9"/><path d="M1054.3 442.6 1065.3 449.7 1058.5 459.9 1047.4 452.3Z" fill="#d9b5d9" stroke="#d9b5d9"/><path d="M1065.3 449.7 1076.4 458.0 1069.5 468.3 1058.5 459.9Z" fill="#c1bad9" stroke="#c1bad9"/><path d="M1076.4 458.0 1087.4 466.7 1080.5 476.6 1069.5 468.3Z" fill="#a6bfd9" stroke="#a6bfd9"/><path d="M1087.4 466.7 1098.4 475.2 1091.6 484.5 1080.5 476.6Z" fill="#8cc4d9" stroke="#8cc4d9"/><path d="M1098.4 475.2 1109.4 482.8 1102.7 491.3 1091.6 484.5Z" fill="#75c9d9" stroke="#75c9d9"/><path d="M1109.4 482.8 1120.6 489.0 1113.9 496.6 1102.7 491.3Z" fill="#63cfd9" stroke="#63cfd9"/><path d="M1120.6 489.0 1131.8 493.4 1125.1 500.1 1113.9 496.6Z" fill="#58d4d9" stroke="#58d4d9"/><path d="M1131.8 493.4 1143.1 495.9 1136.5 501.9 1125.1 500.1Z" fill="#56d9d9" stroke="#56d9d9"/><path d="M1143.1 495.9 1154.5 496.7 1147.9 502.2 1136.5 501.9Z" fill="#5cded9" stroke="#5cded9"/><path d="M1154.5 496.7 1165.9 496.1 1159.3 501.2 1147.9 502.2Z" fill="#68e3d9" stroke="#68e3d9"/><path d="M1165.9 496.1 1177.4 494.6 1170.8 499.6 1159.3 501.2Z" fill="#79e8d9" stroke="#79e8d9"/><path d="M1177.4 494.6 1188.9 492.7 1182.3 498.1 1170.8 499.6Z" fill="#8dedd9" stroke="#8dedd9"/><path d="M1188.9 492.7 1200.3 494.2 1193.6 500.7 1182.3 498.1Z" fill="#98f2d9" stroke="#98f2d9"/><path d="M1200.3 494.2 1211.6 496.7 1204.9 503.3 1193.6 500.7Z" fill="#99f7d9" stroke="#99f7d9"/><path d="M1211.6 496.7 1222.9 499.3 1216.2 505.9 1204.9 503.3Z" fill="#99fcd9" stroke="#99fcd9"/><path d="M664.5 363.6 675.8 366.2 669.2 372.7 657.9 370.1Z" fill="#9903de" stroke="#9903de"/><path d="M675.8 366.2 687.1 368.8 680.5 375.3 669.2 372.7Z" fill="#9908de" stroke="#9908de"/><path d="M687.1 368.8 698.3 373.8 691.7 379.0 680.5 375.3Z" fill="#950dde" stroke="#950dde"/><path d="M698.3 373.8 709.4 380.9 702.8 386.1 691.7 379.0Z" fill="#8712de" stroke="#8712de"/><path d="M709.4 380.9 720.5 387.4 713.9 392.8 702.8 386.1Z" fill="#7317de" stroke="#7317de"/><path d="M720.5 387.4 731.7 392.8 725.1 398.6 713.9 392.8Z" fill="#631cde" stroke="#631cde"/><path d="M731.7 392.8 742.9 396.6 736.3 402.9 725.1 398.6Z" fill="#5921de" stroke="#5921de"/><path d="M742.9 396.6 754.2 398.5 747.6 405.5 736.3 402.9Z" fill="#5626de" stroke="#5626de"/><path d="M754.2 398.5 765.7 398.5 759.0 406.3 747.6 405.5Z" fill="#5c2bde" stroke="#5c2bde"/><path d="M765.7 398.5 777.2 396.7 770.4 405.3 759.0 406.3Z" fill="#6a30de" stroke="#6a30de"/><path d="M777.2 396.7 788.8 393.6 782.0 402.8 770.4 405.3Z" fill="#7f36de" stroke="#7f36de"/><path d="M788.8 393.6 800.4 389.8 793.6 399.5 782.0 402.8Z" fill="#9a3bde" stroke="#9a3bde"/><path d="M800.4 389.8 812.0 386.2 805.2 396.0 793.6 399.5Z" fill="#b640de" stroke="#b640de"/><path d="M812.0 386.2 823.5 383.4 816.7 392.9 805.2 396.0Z" fill="#d045de" stroke="#d045de"/><path d="M823.5 383.4 835.0 382.1 828.3 390.9 816.7 392.9Z" fill="#e74ade" stroke="#e74ade"/><path d="M835.0 382.1 846.4 382.8 839.7 390.4 828.3 390.9Z" fill="#f64fde" stroke="#f64fde"/><path d="M846.4 382.8 857.7 385.6 851.1 391.8 839.7 390.4Z" fill="#fd54de" stroke="#fd54de"/><path d="M857.7 385.6 868.9 390.5 862.3 394.9 851.1 391.8Z" fill="#fb59de" stroke="#fb59de"/><path d="M868.9 390.5 880.0 397.0 873.5 399.6 862.3 394.9Z" fill="#f15ede" stroke="#f15ede"/><path d="M880.0 397.0 891.1 404.6 884.7 405.4 873.5 399.6Z" fill="#e063de" stroke="#e063de"/><path d="M891.1 404.6 902.1 412.5 895.8 411.7 884.7 405.4Z" fill="#cd69de" stroke="#cd69de"/><path d="M902.1 412.5 913.2 420.0 906.9 417.9 895.8 411.7Z" fill="#b86ede" stroke="#b86ede"/><path d="M913.2 420.0 924.3 426.6 918.1 423.6 906.9 417.9Z" fill="#a773de" stroke="#a773de"/><path d="M924.3 426.6 935.5 431.7 929.3 428.1 918.1 423.6Z" fill="#9978de" stroke="#9978de"/><path d="M935.5 431.7 946.7 435.1 940.5 431.4 929.3 428.1Z" fill="#937dde" stroke="#937dde"/><path d="M946.7 435.1 958.1 436.8 951.9 433.3 940.5 431.4Z" fill="#9382de" stroke="#9382de"/><path d="M958.1 436.8 969.5 436.9 963.3 433.9 951.9 433.3Z" fill="#9987de" stroke="#9987de"/><path d="M969.5 436.9 981.0 435.5 974.7 433.4 963.3 433.9Z" fill="#a78cde" stroke="#a78cde"/><path d="M981.0 435.5 992.5 433.2 986.2 432.4 974.7 433.4Z" fill="#b891de" stroke="#b891de"/><path d="M992.5 433.2 1004.1 430.4 997.7 431.2 986.2 432.4Z" fill="#cd96de" stroke="#cd96de"/><path d="M1004.1 430.4 1015.6 428.0 1009.1 430.6 997.7 431.2Z" fill="#e09cde" stroke="#e09cde"/><path d="M1015.6 428.0 1027.1 426.7 1020.5 431.1 1009.1 430.6Z" fill="#f1a1de" stroke="#f1a1de"/><path d="M1027.1 426.7 1038.5 427.0 1031.9 433.1 1020.5 431.1Z" fill="#fba6de" stroke="#fba6de"/><path d="M1038.5 427.0 1049.8 429.3 1043.1 437.0 1031.9 433.1Z" fill="#fdabde" stroke="#fdabde"/><path d="M1049.8 429.3 1061.0 433.8 1054.3 442.6 1043.1 437.0Z" fill="#f6b0de" stroke="#f6b0de"/><path d="M1061.0 433.8 1072.1 440.3 1065.3 449.7 1054.3 442.6Z" fill="#e7b5de" stroke="#e7b5de"/><path d="M1072.1 440.3 1083.2 448.2 1076.4 458.0 1065.3 449.7Z" fill="#d0bade" stroke="#d0bade"/><path d="M1083.2 448.2 1094.2 457.0 1087.4 466.7 1076.4 458.0Z" fill="#b6bfde" stroke="#b6bfde"/><path d="M1094.2 457.0 1105.2 465.9 1098.4 475.2 1087.4 466.7Z" fill="#9ac4de" stroke="#9ac4de"/><path d="M1105.2 465.9 1116.2 474.2 1109.4 482.8 1098.4 475.2Z" fill="#7fc9de" stroke="#7fc9de"/><path d="M1116.2 474.2 1127.3 481.1 1120.6 489.0 1109.4 482.8Z" fill="#6acfde" stroke="#6acfde"/><path d="M1127.3 481.1 1138.5 486.3 1131.8 493.4 1120.6 489.0Z" fill="#5cd4de" stroke="#5cd4de"/><path d="M1138.5 486.3 1149.7 489.6 1143.1 495.9 1131.8 493.4Z" fill="#56d9de" stroke="#56d9de"/><path d="M1149.7 489.6 1161.1 491.0 1154.5 496.7 1143.1 495.9Z" fill="#59dede" stroke="#59dede"/><path d="M1161.1 491.0 1172.5 490.8 1165.9 496.1 1154.5 496.7Z" fill="#63e3de" stroke="#63e3de"/><path d="M1172.5 490.8 1184.0 489.4 1177.4 494.6 1165.9 496.1Z" fill="#73e8de" stroke="#73e8de"/><path d="M1184.0 489.4 1195.5 487.5 1188.9 492.7 1177.4 494.6Z" fill="#87edde" stroke="#87edde"/><path d="M1195.5 487.5 1207.0 487.6 1200.3 494.2 1188.9 492.7Z" fill="#95f2de" stroke="#95f2de"/><path d="M1207.0 487.6 1218.3 490.2 1211.6 496.7 1200.3 494.2Z" fill="#99f7de" stroke="#99f7de"/><path d="M1218.3 490.2 1229.6 492.8 1222.9 499.3 1211.6 496.7Z" fill="#99fcde" stroke="#99fcde"/><path d="M671.2 357.1 682.5 359.6 675.8 366.2 664.5 363.6Z" fill="#9903e3" stroke="#9903e3"/><path d="M682.5 359.6 693.8 362.2 687.1 368.8 675.8 366.2Z" fill="#9908e3" stroke="#9908e3"/><path d="M693.8 362.2 704.9 368.4 698.3 373.8 687.1 368.8Z" fill="#920de3" stroke="#920de3"/><path d="M704.9 368.4 716.0 375.5 709.4 380.9 698.3 373.8Z" fill="#8112e3" stroke="#8112e3"/><path d="M716.0 375.5 727.1 381.8 720.5 387.4 709.4 380.9Z" fill="#6e17e3" stroke="#6e17e3"/><path d="M727.1 381.8 738.3 386.8 731.7 392.8 720.5 387.4Z" fill="#5f1ce3" stroke="#5f1ce3"/><path d="M738.3 386.8 749.6 390.1 742.9 396.6 731.7 392.8Z" fill="#5721e3" stroke="#5721e3"/><path d="M749.6 390.1 760.9 391.3 754.2 398.5 742.9 396.6Z" fill="#5726e3" stroke="#5726e3"/><path d="M760.9 391.3 772.4 390.6 765.7 398.5 754.2 398.5Z" fill="#602be3" stroke="#602be3"/><path d="M772.4 390.6 783.9 388.1 777.2 396.7 765.7 398.5Z" fill="#7230e3" stroke="#7230e3"/><path d="M783.9 388.1 795.5 384.6 788.8 393.6 777.2 396.7Z" fill="#8a36e3" stroke="#8a36e3"/><path d="M795.5 384.6 807.2 380.6 800.4 389.8 788.8 393.6Z" fill="#a63be3" stroke="#a63be3"/><path d="M807.2 380.6 818.8 377.0 812.0 386.2 800.4 389.8Z" fill="#c340e3" stroke="#c340e3"/><path d="M818.8 377.0 830.3 374.7 823.5 383.4 812.0 386.2Z" fill="#dd45e3" stroke="#dd45e3"/><path d="M830.3 374.7 841.7 374.2 835.0 382.1 823.5 383.4Z" fill="#f14ae3" stroke="#f14ae3"/><path d="M841.7 374.2 853.1 376.2 846.4 382.8 835.0 382.1Z" fill="#fb4fe3" stroke="#fb4fe3"/><path d="M853.1 376.2 864.3 380.5 857.7 385.6 846.4 382.8Z" fill="#fc54e3" stroke="#fc54e3"/><path d="M864.3 380.5 875.4 387.2 868.9 390.5 857.7 385.6Z" fill="#f359e3" stroke="#f359e3"/><path d="M875.4 387.2 886.4 395.5 880.0 397.0 868.9 390.5Z" fill="#e05ee3" stroke="#e05ee3"/><path d="M886.4 395.5 897.4 404.7 891.1 404.6 880.0 397.0Z" fill="#c863e3" stroke="#c863e3"/><path d="M897.4 404.7 908.4 414.0 902.1 412.5 891.1 404.6Z" fill="#ad69e3" stroke="#ad69e3"/><path d="M908.4 414.0 919.4 422.6 913.2 420.0 902.1 412.5Z" fill="#936ee3" stroke="#936ee3"/><path d="M919.4 422.6 930.5 429.8 924.3 426.6 913.2 420.0Z" fill="#7c73e3" stroke="#7c73e3"/><path d="M930.5 429.8 941.6 435.3 935.5 431.7 924.3 426.6Z" fill="#6c78e3" stroke="#6c78e3"/><path d="M941.6 435.3 952.9 438.9 946.7 435.1 935.5 431.7Z" fill="#647de3" stroke="#647de3"/><path d="M952.9 438.9 964.2 440.5 958.1 436.8 946.7 435.1Z" fill="#6482e3" stroke="#6482e3"/><path d="M964.2 440.5 975.7 440.2 969.5 436.9 958.1 436.8Z" fill="#6c87e3" stroke="#6c87e3"/><path d="M975.7 440.2 987.2 438.1 981.0 435.5 969.5 436.9Z" fill="#7c8ce3" stroke="#7c8ce3"/><path d="M987.2 438.1 998.8 434.7 992.5 433.2 981.0 435.5Z" fill="#9391e3" stroke="#9391e3"/><path d="M998.8 434.7 1010.4 430.5 1004.1 430.4 992.5 433.2Z" fill="#ad96e3" stroke="#ad96e3"/><path d="M1010.4 430.5 1022.0 426.5 1015.6 428.0 1004.1 430.4Z" fill="#c89ce3" stroke="#c89ce3"/><path d="M1022.0 426.5 1033.6 423.3 1027.1 426.7 1015.6 428.0Z" fill="#e0a1e3" stroke="#e0a1e3"/><path d="M1033.6 423.3 1045.1 421.9 1038.5 427.0 1027.1 426.7Z" fill="#f3a6e3" stroke="#f3a6e3"/><path d="M1045.1 421.9 1056.5 422.7 1049.8 429.3 1038.5 427.0Z" fill="#fcabe3" stroke="#fcabe3"/><path d="M1056.5 422.7 1067.7 425.9 1061.0 433.8 1049.8 429.3Z" fill="#fbb0e3" stroke="#fbb0e3"/><path d="M1067.7 425.9 1078.9 431.5 1072.1 440.3 1061.0 433.8Z" fill="#f1b5e3" stroke="#f1b5e3"/><path d="M1078.9 431.5 1090.0 439.0 1083.2 448.2 1072.1 440.3Z" fill="#ddbae3" stroke="#ddbae3"/><path d="M1090.0 439.0 1101.0 447.7 1094.2 457.0 1083.2 448.2Z" fill="#c3bfe3" stroke="#c3bfe3"/><path d="M1101.0 447.7 1112.0 456.9 1105.2 465.9 1094.2 457.0Z" fill="#a6c4e3" stroke="#a6c4e3"/><path d="M1112.0 456.9 1123.0 465.6 1116.2 474.2 1105.2 465.9Z" fill="#8ac9e3" stroke="#8ac9e3"/><path d="M1123.0 465.6 1134.0 473.2 1127.3 481.1 1116.2 474.2Z" fill="#72cfe3" stroke="#72cfe3"/><path d="M1134.0 473.2 1145.2 479.2 1138.5 486.3 1127.3 481.1Z" fill="#60d4e3" stroke="#60d4e3"/><path d="M1145.2 479.2 1156.4 483.1 1149.7 489.6 1138.5 486.3Z" fill="#57d9e3" stroke="#57d9e3"/><path d="M1156.4 483.1 1167.7 485.0 1161.1 491.0 1149.7 489.6Z" fill="#57dee3" stroke="#57dee3"/><path d="M1167.7 485.0 1179.1 485.1 1172.5 490.8 1161.1 491.0Z" fill="#5fe3e3" stroke="#5fe3e3"/><path d="M1179.1 485.1 1190.6 484.0 1184.0 489.4 1172.5 490.8Z" fill="#6ee8e3" stroke="#6ee8e3"/><path d="M1190.6 484.0 1202.1 482.1 1195.5 487.5 1184.0 489.4Z" fill="#81ede3" stroke="#81ede3"/><path d="M1202.1 482.1 1213.6 481.1 1207.0 487.6 1195.5 487.5Z" fill="#92f2e3" stroke="#92f2e3"/><path d="M1213.6 481.1 1224.9 483.7 1218.3 490.2 1207.0 487.6Z" fill="#99f7e3" stroke="#99f7e3"/><path d="M1224.9 483.7 1236.2 486.2 1229.6 492.8 1218.3 490.2Z" fill="#99fce3" stroke="#99fce3"/><path d="M677.8 350.5 689.1 353.1 682.5 359.6 671.2 357.1Z" fill="#9903e8" stroke="#9903e8"/><path d="M689.1 353.1 700.5 355.7 693.8 362.2 682.5 359.6Z" fill="#9908e8" stroke="#9908e8"/><path d="M700.5 355.7 711.5 362.8 704.9 368.4 693.8 362.2Z" fill="#900de8" stroke="#900de8"/><path d="M711.5 362.8 722.6 369.8 716.0 375.5 704.9 368.4Z" fill="#7c12e8" stroke="#7c12e8"/><path d="M722.6 369.8 733.7 375.9 727.1 381.8 716.0 375.5Z" fill="#6a17e8" stroke="#6a17e8"/><path d="M733.7 375.9 744.9 380.6 738.3 386.8 727.1 381.8Z" fill="#5c1ce8" stroke="#5c1ce8"/><path d="M744.9 380.6 756.2 383.4 749.6 390.1 738.3 386.8Z" fill="#5621e8" stroke="#5621e8"/><path d="M756.2 383.4 767.6 384.1 760.9 391.3 749.6 390.1Z" fill="#5926e8" stroke="#5926e8"/><path d="M767.6 384.1 779.1 382.8 772.4 390.6 760.9 391.3Z" fill="#652be8" stroke="#652be8"/><path d="M779.1 382.8 790.7 379.8 783.9 388.1 772.4 390.6Z" fill="#7930e8" stroke="#7930e8"/><path d="M790.7 379.8 802.3 375.9 795.5 384.6 783.9 388.1Z" fill="#9436e8" stroke="#9436e8"/><path d="M802.3 375.9 813.9 371.8 807.2 380.6 795.5 384.6Z" fill="#b13be8" stroke="#b13be8"/><path d="M813.9 371.8 825.5 368.4 818.8 377.0 807.2 380.6Z" fill="#ce40e8" stroke="#ce40e8"/><path d="M825.5 368.4 837.0 366.6 830.3 374.7 818.8 377.0Z" fill="#e745e8" stroke="#e745e8"/><path d="M837.0 366.6 848.4 367.1 841.7 374.2 830.3 374.7Z" fill="#f74ae8" stroke="#f74ae8"/><path d="M848.4 367.1 859.7 370.2 853.1 376.2 841.7 374.2Z" fill="#fd4fe8" stroke="#fd4fe8"/><path d="M859.7 370.2 870.8 376.1 864.3 380.5 853.1 376.2Z" fill="#f754e8" stroke="#f754e8"/><path d="M870.8 376.1 881.9 384.3 875.4 387.2 864.3 380.5Z" fill="#e759e8" stroke="#e759e8"/><path d="M881.9 384.3 892.8 394.2 886.4 395.5 875.4 387.2Z" fill="#cd5ee8" stroke="#cd5ee8"/><path d="M892.8 394.2 903.7 404.9 897.4 404.7 886.4 395.5Z" fill="#ad63e8" stroke="#ad63e8"/><path d="M903.7 404.9 914.6 415.3 908.4 414.0 897.4 404.7Z" fill="#8b69e8" stroke="#8b69e8"/><path d="M914.6 415.3 925.6 424.6 919.4 422.6 908.4 414.0Z" fill="#6c6ee8" stroke="#6c6ee8"/><path d="M925.6 424.6 936.7 432.0 930.5 429.8 919.4 422.6Z" fill="#5373e8" stroke="#5373e8"/><path d="M936.7 432.0 947.9 437.5 941.6 435.3 930.5 429.8Z" fill="#4178e8" stroke="#4178e8"/><path d="M947.9 437.5 959.1 441.0 952.9 438.9 941.6 435.3Z" fill="#397de8" stroke="#397de8"/><path d="M959.1 441.0 970.5 442.7 964.2 440.5 952.9 438.9Z" fill="#3982e8" stroke="#3982e8"/><path d="M970.5 442.7 981.9 442.4 975.7 440.2 964.2 440.5Z" fill="#4187e8" stroke="#4187e8"/><path d="M981.9 442.4 993.4 440.1 987.2 438.1 975.7 440.2Z" fill="#538ce8" stroke="#538ce8"/><path d="M993.4 440.1 1005.1 436.0 998.8 434.7 987.2 438.1Z" fill="#6c91e8" stroke="#6c91e8"/><path d="M1005.1 436.0 1016.7 430.7 1010.4 430.5 998.8 434.7Z" fill="#8b96e8" stroke="#8b96e8"/><path d="M1016.7 430.7 1028.4 425.2 1022.0 426.5 1010.4 430.5Z" fill="#ad9ce8" stroke="#ad9ce8"/><path d="M1028.4 425.2 1040.1 420.5 1033.6 423.3 1022.0 426.5Z" fill="#cda1e8" stroke="#cda1e8"/><path d="M1040.1 420.5 1051.6 417.4 1045.1 421.9 1033.6 423.3Z" fill="#e7a6e8" stroke="#e7a6e8"/><path d="M1051.6 417.4 1063.1 416.8 1056.5 422.7 1045.1 421.9Z" fill="#f7abe8" stroke="#f7abe8"/><path d="M1063.1 416.8 1074.4 418.8 1067.7 425.9 1056.5 422.7Z" fill="#fdb0e8" stroke="#fdb0e8"/><path d="M1074.4 418.8 1085.6 423.5 1078.9 431.5 1067.7 425.9Z" fill="#f7b5e8" stroke="#f7b5e8"/><path d="M1085.6 423.5 1096.7 430.4 1090.0 439.0 1078.9 431.5Z" fill="#e7bae8" stroke="#e7bae8"/><path d="M1096.7 430.4 1107.7 439.0 1101.0 447.7 1090.0 439.0Z" fill="#cebfe8" stroke="#cebfe8"/><path d="M1107.7 439.0 1118.7 448.2 1112.0 456.9 1101.0 447.7Z" fill="#b1c4e8" stroke="#b1c4e8"/><path d="M1118.7 448.2 1129.7 457.3 1123.0 465.6 1112.0 456.9Z" fill="#94c9e8" stroke="#94c9e8"/><path d="M1129.7 457.3 1140.7 465.4 1134.0 473.2 1123.0 465.6Z" fill="#79cfe8" stroke="#79cfe8"/><path d="M1140.7 465.4 1151.8 471.9 1145.2 479.2 1134.0 473.2Z" fill="#65d4e8" stroke="#65d4e8"/><path d="M1151.8 471.9 1163.1 476.4 1156.4 483.1 1145.2 479.2Z" fill="#59d9e8" stroke="#59d9e8"/><path d="M1163.1 476.4 1174.4 478.8 1167.7 485.0 1156.4 483.1Z" fill="#56dee8" stroke="#56dee8"/><path d="M1174.4 478.8 1185.8 479.3 1179.1 485.1 1167.7 485.0Z" fill="#5ce3e8" stroke="#5ce3e8"/><path d="M1185.8 479.3 1197.2 478.3 1190.6 484.0 1179.1 485.1Z" fill="#6ae8e8" stroke="#6ae8e8"/><path d="M1197.2 478.3 1208.7 476.5 1202.1 482.1 1190.6 484.0Z" fill="#7cede8" stroke="#7cede8"/><path d="M1208.7 476.5 1220.3 474.5 1213.6 481.1 1202.1 482.1Z" fill="#90f2e8" stroke="#90f2e8"/><path d="M1220.3 474.5 1231.6 477.1 1224.9 483.7 1213.6 481.1Z" fill="#99f7e8" stroke="#99f7e8"/><path d="M1231.6 477.1 1242.9 479.7 1236.2 486.2 1224.9 483.7Z" fill="#99fce8" stroke="#99fce8"/><path d="M684.5 344.0 695.8 346.6 689.1 353.1 677.8 350.5Z" fill="#9903ed" stroke="#9903ed"/><path d="M695.8 346.6 707.1 349.8 700.5 355.7 689.1 353.1Z" fill="#9808ed" stroke="#9808ed"/><path d="M707.1 349.8 718.2 357.0 711.5 362.8 700.5 355.7Z" fill="#8d0ded" stroke="#8d0ded"/><path d="M718.2 357.0 729.2 363.9 722.6 369.8 711.5 362.8Z" fill="#7812ed" stroke="#7812ed"/><path d="M729.2 363.9 740.4 369.9 733.7 375.9 722.6 369.8Z" fill="#6717ed" stroke="#6717ed"/><path d="M740.4 369.9 751.6 374.3 744.9 380.6 733.7 375.9Z" fill="#5a1ced" stroke="#5a1ced"/><path d="M751.6 374.3 762.9 376.6 756.2 383.4 744.9 380.6Z" fill="#5621ed" stroke="#5621ed"/><path d="M762.9 376.6 774.3 376.9 767.6 384.1 756.2 383.4Z" fill="#5b26ed" stroke="#5b26ed"/><path d="M774.3 376.9 785.8 375.1 779.1 382.8 767.6 384.1Z" fill="#692bed" stroke="#692bed"/><path d="M785.8 375.1 797.4 371.8 790.7 379.8 779.1 382.8Z" fill="#7f30ed" stroke="#7f30ed"/><path d="M797.4 371.8 809.0 367.6 802.3 375.9 790.7 379.8Z" fill="#9c36ed" stroke="#9c36ed"/><path d="M809.0 367.6 820.7 363.5 813.9 371.8 802.3 375.9Z" fill="#ba3bed" stroke="#ba3bed"/><path d="M820.7 363.5 832.2 360.4 825.5 368.4 813.9 371.8Z" fill="#d740ed" stroke="#d740ed"/><path d="M832.2 360.4 843.7 359.1 837.0 366.6 825.5 368.4Z" fill="#ee45ed" stroke="#ee45ed"/><path d="M843.7 359.1 855.1 360.4 848.4 367.1 837.0 366.6Z" fill="#fb4aed" stroke="#fb4aed"/><path d="M855.1 360.4 866.3 364.7 859.7 370.2 848.4 367.1Z" fill="#fc4fed" stroke="#fc4fed"/><path d="M866.3 364.7 877.4 371.9 870.8 376.1 859.7 370.2Z" fill="#f154ed" stroke="#f154ed"/><path d="M877.4 371.9 888.4 381.4 881.9 384.3 870.8 376.1Z" fill="#d959ed" stroke="#d959ed"/><path d="M888.4 381.4 899.2 392.6 892.8 394.2 881.9 384.3Z" fill="#b85eed" stroke="#b85eed"/><path d="M899.2 392.6 910.1 404.4 903.7 404.9 892.8 394.2Z" fill="#9363ed" stroke="#9363ed"/><path d="M910.1 404.4 921.0 415.4 914.6 415.3 903.7 404.9Z" fill="#6c69ed" stroke="#6c69ed"/><path d="M921.0 415.4 932.0 424.8 925.6 424.6 914.6 415.3Z" fill="#4a6eed" stroke="#4a6eed"/><path d="M932.0 424.8 943.0 432.0 936.7 432.0 925.6 424.6Z" fill="#3073ed" stroke="#3073ed"/><path d="M943.0 432.0 954.2 437.0 947.9 437.5 936.7 432.0Z" fill="#1f78ed" stroke="#1f78ed"/><path d="M954.2 437.0 965.5 440.2 959.1 441.0 947.9 437.5Z" fill="#177ded" stroke="#177ded"/><path d="M965.5 440.2 976.8 442.1 970.5 442.7 959.1 441.0Z" fill="#1782ed" stroke="#1782ed"/><path d="M976.8 442.1 988.2 442.3 981.9 442.4 970.5 442.7Z" fill="#1f87ed" stroke="#1f87ed"/><path d="M988.2 442.3 999.8 440.4 993.4 440.1 981.9 442.4Z" fill="#308ced" stroke="#308ced"/><path d="M999.8 440.4 1011.4 436.1 1005.1 436.0 993.4 440.1Z" fill="#4a91ed" stroke="#4a91ed"/><path d="M1011.4 436.1 1023.1 430.2 1016.7 430.7 1005.1 436.0Z" fill="#6c96ed" stroke="#6c96ed"/><path d="M1023.1 430.2 1034.8 423.6 1028.4 425.2 1016.7 430.7Z" fill="#939ced" stroke="#939ced"/><path d="M1034.8 423.6 1046.6 417.6 1040.1 420.5 1028.4 425.2Z" fill="#b8a1ed" stroke="#b8a1ed"/><path d="M1046.6 417.6 1058.2 413.2 1051.6 417.4 1040.1 420.5Z" fill="#d9a6ed" stroke="#d9a6ed"/><path d="M1058.2 413.2 1069.7 411.2 1063.1 416.8 1051.6 417.4Z" fill="#f1abed" stroke="#f1abed"/><path d="M1069.7 411.2 1081.1 412.1 1074.4 418.8 1063.1 416.8Z" fill="#fcb0ed" stroke="#fcb0ed"/><path d="M1081.1 412.1 1092.3 416.0 1085.6 423.5 1074.4 418.8Z" fill="#fbb5ed" stroke="#fbb5ed"/><path d="M1092.3 416.0 1103.5 422.4 1096.7 430.4 1085.6 423.5Z" fill="#eebaed" stroke="#eebaed"/><path d="M1103.5 422.4 1114.5 430.7 1107.7 439.0 1096.7 430.4Z" fill="#d7bfed" stroke="#d7bfed"/><path d="M1114.5 430.7 1125.5 440.0 1118.7 448.2 1107.7 439.0Z" fill="#bac4ed" stroke="#bac4ed"/><path d="M1125.5 440.0 1136.4 449.3 1129.7 457.3 1118.7 448.2Z" fill="#9cc9ed" stroke="#9cc9ed"/><path d="M1136.4 449.3 1147.4 457.8 1140.7 465.4 1129.7 457.3Z" fill="#7fcfed" stroke="#7fcfed"/><path d="M1147.4 457.8 1158.5 464.7 1151.8 471.9 1140.7 465.4Z" fill="#69d4ed" stroke="#69d4ed"/><path d="M1158.5 464.7 1169.7 469.6 1163.1 476.4 1151.8 471.9Z" fill="#5bd9ed" stroke="#5bd9ed"/><path d="M1169.7 469.6 1181.0 472.4 1174.4 478.8 1163.1 476.4Z" fill="#56deed" stroke="#56deed"/><path d="M1181.0 472.4 1192.4 473.2 1185.8 479.3 1174.4 478.8Z" fill="#5ae3ed" stroke="#5ae3ed"/><path d="M1192.4 473.2 1203.9 472.5 1197.2 478.3 1185.8 479.3Z" fill="#67e8ed" stroke="#67e8ed"/><path d="M1203.9 472.5 1215.4 470.7 1208.7 476.5 1197.2 478.3Z" fill="#78eded" stroke="#78eded"/><path d="M1215.4 470.7 1226.9 468.6 1220.3 474.5 1208.7 476.5Z" fill="#8df2ed" stroke="#8df2ed"/><path d="M1226.9 468.6 1238.2 470.6 1231.6 477.1 1220.3 474.5Z" fill="#98f7ed" stroke="#98f7ed"/><path d="M1238.2 470.6 1249.5 473.2 1242.9 479.7 1231.6 477.1Z" fill="#99fced" stroke="#99fced"/><path d="M691.2 337.4 702.5 340.0 695.8 346.6 684.5 344.0Z" fill="#9903f2" stroke="#9903f2"/><path d="M702.5 340.0 713.7 343.7 707.1 349.8 695.8 346.6Z" fill="#9708f2" stroke="#9708f2"/><path d="M713.7 343.7 724.8 351.0 718.2 357.0 707.1 349.8Z" fill="#8a0df2" stroke="#8a0df2"/><path d="M724.8 351.0 735.9 357.9 729.2 363.9 718.2 357.0Z" fill="#7612f2" stroke="#7612f2"/><path d="M735.9 357.9 747.0 363.7 740.4 369.9 729.2 363.9Z" fill="#6417f2" stroke="#6417f2"/><path d="M747.0 363.7 758.2 367.8 751.6 374.3 740.4 369.9Z" fill="#591cf2" stroke="#591cf2"/><path d="M758.2 367.8 769.6 369.9 762.9 376.6 751.6 374.3Z" fill="#5621f2" stroke="#5621f2"/><path d="M769.6 369.9 781.0 369.8 774.3 376.9 762.9 376.6Z" fill="#5d26f2" stroke="#5d26f2"/><path d="M781.0 369.8 792.5 367.7 785.8 375.1 774.3 376.9Z" fill="#6d2bf2" stroke="#6d2bf2"/><path d="M792.5 367.7 804.1 364.2 797.4 371.8 785.8 375.1Z" fill="#8530f2" stroke="#8530f2"/><path d="M804.1 364.2 815.8 359.9 809.0 367.6 797.4 371.8Z" fill="#a236f2" stroke="#a236f2"/><path d="M815.8 359.9 827.4 355.8 820.7 363.5 809.0 367.6Z" fill="#c13bf2" stroke="#c13bf2"/><path d="M827.4 355.8 838.9 352.8 832.2 360.4 820.7 363.5Z" fill="#dd40f2" stroke="#dd40f2"/><path d="M838.9 352.8 850.4 352.0 843.7 359.1 832.2 360.4Z" fill="#f245f2" stroke="#f245f2"/><path d="M850.4 352.0 861.7 354.0 855.1 360.4 843.7 359.1Z" fill="#fc4af2" stroke="#fc4af2"/><path d="M861.7 354.0 872.9 359.2 866.3 364.7 855.1 360.4Z" fill="#fa4ff2" stroke="#fa4ff2"/><path d="M872.9 359.2 884.0 367.3 877.4 371.9 866.3 364.7Z" fill="#e954f2" stroke="#e954f2"/><path d="M884.0 367.3 894.9 377.9 888.4 381.4 877.4 371.9Z" fill="#cd59f2" stroke="#cd59f2"/><path d="M894.9 377.9 905.7 390.1 899.2 392.6 888.4 381.4Z" fill="#a75ef2" stroke="#a75ef2"/><path d="M905.7 390.1 916.5 402.5 910.1 404.4 899.2 392.6Z" fill="#7c63f2" stroke="#7c63f2"/><path d="M916.5 402.5 927.4 413.8 921.0 415.4 910.1 404.4Z" fill="#5369f2" stroke="#5369f2"/><path d="M927.4 413.8 938.4 422.9 932.0 424.8 921.0 415.4Z" fill="#306ef2" stroke="#306ef2"/><path d="M938.4 422.9 949.5 429.1 943.0 432.0 932.0 424.8Z" fill="#1773f2" stroke="#1773f2"/><path d="M949.5 429.1 960.8 432.7 954.2 437.0 943.0 432.0Z" fill="#0a78f2" stroke="#0a78f2"/><path d="M960.8 432.7 972.1 435.2 965.5 440.2 954.2 437.0Z" fill="#067df2" stroke="#067df2"/><path d="M972.1 435.2 983.4 437.9 976.8 442.1 965.5 440.2Z" fill="#0682f2" stroke="#0682f2"/><path d="M983.4 437.9 994.7 439.4 988.2 442.3 976.8 442.1Z" fill="#0a87f2" stroke="#0a87f2"/><path d="M994.7 439.4 1006.2 438.4 999.8 440.4 988.2 442.3Z" fill="#178cf2" stroke="#178cf2"/><path d="M1006.2 438.4 1017.8 434.5 1011.4 436.1 999.8 440.4Z" fill="#3091f2" stroke="#3091f2"/><path d="M1017.8 434.5 1029.5 428.3 1023.1 430.2 1011.4 436.1Z" fill="#5396f2" stroke="#5396f2"/><path d="M1029.5 428.3 1041.3 421.1 1034.8 423.6 1023.1 430.2Z" fill="#7c9cf2" stroke="#7c9cf2"/><path d="M1041.3 421.1 1053.1 414.1 1046.6 417.6 1034.8 423.6Z" fill="#a7a1f2" stroke="#a7a1f2"/><path d="M1053.1 414.1 1064.8 408.7 1058.2 413.2 1046.6 417.6Z" fill="#cda6f2" stroke="#cda6f2"/><path d="M1064.8 408.7 1076.3 405.7 1069.7 411.2 1058.2 413.2Z" fill="#e9abf2" stroke="#e9abf2"/><path d="M1076.3 405.7 1087.8 405.7 1081.1 412.1 1069.7 411.2Z" fill="#fab0f2" stroke="#fab0f2"/><path d="M1087.8 405.7 1099.0 408.9 1092.3 416.0 1081.1 412.1Z" fill="#fcb5f2" stroke="#fcb5f2"/><path d="M1099.0 408.9 1110.2 414.8 1103.5 422.4 1092.3 416.0Z" fill="#f2baf2" stroke="#f2baf2"/><path d="M1110.2 414.8 1121.2 422.9 1114.5 430.7 1103.5 422.4Z" fill="#ddbff2" stroke="#ddbff2"/><path d="M1121.2 422.9 1132.2 432.2 1125.5 440.0 1114.5 430.7Z" fill="#c1c4f2" stroke="#c1c4f2"/><path d="M1132.2 432.2 1143.1 441.7 1136.4 449.3 1125.5 440.0Z" fill="#a2c9f2" stroke="#a2c9f2"/><path d="M1143.1 441.7 1154.1 450.4 1147.4 457.8 1136.4 449.3Z" fill="#85cff2" stroke="#85cff2"/><path d="M1154.1 450.4 1165.2 457.7 1158.5 464.7 1147.4 457.8Z" fill="#6dd4f2" stroke="#6dd4f2"/><path d="M1165.2 457.7 1176.4 462.9 1169.7 469.6 1158.5 464.7Z" fill="#5dd9f2" stroke="#5dd9f2"/><path d="M1176.4 462.9 1187.7 466.0 1181.0 472.4 1169.7 469.6Z" fill="#56def2" stroke="#56def2"/><path d="M1187.7 466.0 1199.0 467.0 1192.4 473.2 1181.0 472.4Z" fill="#59e3f2" stroke="#59e3f2"/><path d="M1199.0 467.0 1210.5 466.4 1203.9 472.5 1192.4 473.2Z" fill="#64e8f2" stroke="#64e8f2"/><path d="M1210.5 466.4 1222.0 464.7 1215.4 470.7 1203.9 472.5Z" fill="#76edf2" stroke="#76edf2"/><path d="M1222.0 464.7 1233.5 462.6 1226.9 468.6 1215.4 470.7Z" fill="#8af2f2" stroke="#8af2f2"/><path d="M1233.5 462.6 1244.9 464.0 1238.2 470.6 1226.9 468.6Z" fill="#97f7f2" stroke="#97f7f2"/><path d="M1244.9 464.0 1256.2 466.6 1249.5 473.2 1238.2 470.6Z" fill="#99fcf2" stroke="#99fcf2"/><path d="M697.8 330.9 709.1 333.5 702.5 340.0 691.2 337.4Z" fill="#9903f7" stroke="#9903f7"/><path d="M709.1 333.5 720.4 337.5 713.7 343.7 702.5 340.0Z" fill="#9608f7" stroke="#9608f7"/><path d="M720.4 337.5 731.4 344.8 724.8 351.0 713.7 343.7Z" fill="#880df7" stroke="#880df7"/><path d="M731.4 344.8 742.5 351.6 735.9 357.9 724.8 351.0Z" fill="#7412f7" stroke="#7412f7"/><path d="M742.5 351.6 753.7 357.3 747.0 363.7 735.9 357.9Z" fill="#6317f7" stroke="#6317f7"/><path d="M753.7 357.3 764.9 361.3 758.2 367.8 747.0 363.7Z" fill="#581cf7" stroke="#581cf7"/><path d="M764.9 361.3 776.2 363.2 769.6 369.9 758.2 367.8Z" fill="#5621f7" stroke="#5621f7"/><path d="M776.2 363.2 787.7 362.9 781.0 369.8 769.6 369.9Z" fill="#5e26f7" stroke="#5e26f7"/><path d="M787.7 362.9 799.2 360.7 792.5 367.7 781.0 369.8Z" fill="#6f2bf7" stroke="#6f2bf7"/><path d="M799.2 360.7 810.8 357.0 804.1 364.2 792.5 367.7Z" fill="#8830f7" stroke="#8830f7"/><path d="M810.8 357.0 822.5 352.6 815.8 359.9 804.1 364.2Z" fill="#a636f7" stroke="#a636f7"/><path d="M822.5 352.6 834.1 348.5 827.4 355.8 815.8 359.9Z" fill="#c53bf7" stroke="#c53bf7"/><path d="M834.1 348.5 845.6 345.7 838.9 352.8 827.4 355.8Z" fill="#e140f7" stroke="#e140f7"/><path d="M845.6 345.7 857.1 345.2 850.4 352.0 838.9 352.8Z" fill="#f545f7" stroke="#f545f7"/><path d="M857.1 345.2 868.4 347.7 861.7 354.0 850.4 352.0Z" fill="#fd4af7" stroke="#fd4af7"/><path d="M868.4 347.7 879.5 353.4 872.9 359.2 861.7 354.0Z" fill="#f74ff7" stroke="#f74ff7"/><path d="M879.5 353.4 890.5 362.1 884.0 367.3 872.9 359.2Z" fill="#e454f7" stroke="#e454f7"/><path d="M890.5 362.1 901.4 373.4 894.9 377.9 884.0 367.3Z" fill="#c359f7" stroke="#c359f7"/><path d="M901.4 373.4 912.2 386.1 905.7 390.1 894.9 377.9Z" fill="#995ef7" stroke="#995ef7"/><path d="M912.2 386.1 923.0 398.8 916.5 402.5 905.7 390.1Z" fill="#6c63f7" stroke="#6c63f7"/><path d="M923.0 398.8 933.9 410.1 927.4 413.8 916.5 402.5Z" fill="#4169f7" stroke="#4169f7"/><path d="M933.9 410.1 944.9 418.7 938.4 422.9 927.4 413.8Z" fill="#1f6ef7" stroke="#1f6ef7"/><path d="M944.9 418.7 956.1 423.6 949.5 429.1 938.4 422.9Z" fill="#0a73f7" stroke="#0a73f7"/><path d="M956.1 423.6 967.5 424.8 960.8 432.7 949.5 429.1Z" fill="#0478f7" stroke="#0478f7"/><path d="M967.5 424.8 978.9 425.4 972.1 435.2 960.8 432.7Z" fill="#067df7" stroke="#067df7"/><path d="M978.9 425.4 990.1 430.0 983.4 437.9 972.1 435.2Z" fill="#0682f7" stroke="#0682f7"/><path d="M990.1 430.0 1001.3 433.9 994.7 439.4 983.4 437.9Z" fill="#0487f7" stroke="#0487f7"/><path d="M1001.3 433.9 1012.7 434.2 1006.2 438.4 994.7 439.4Z" fill="#0a8cf7" stroke="#0a8cf7"/><path d="M1012.7 434.2 1024.3 430.8 1017.8 434.5 1006.2 438.4Z" fill="#1f91f7" stroke="#1f91f7"/><path d="M1024.3 430.8 1036.0 424.6 1029.5 428.3 1017.8 434.5Z" fill="#4196f7" stroke="#4196f7"/><path d="M1036.0 424.6 1047.8 417.1 1041.3 421.1 1029.5 428.3Z" fill="#6c9cf7" stroke="#6c9cf7"/><path d="M1047.8 417.1 1059.6 409.6 1053.1 414.1 1041.3 421.1Z" fill="#99a1f7" stroke="#99a1f7"/><path d="M1059.6 409.6 1071.3 403.5 1064.8 408.7 1053.1 414.1Z" fill="#c3a6f7" stroke="#c3a6f7"/><path d="M1071.3 403.5 1082.9 399.9 1076.3 405.7 1064.8 408.7Z" fill="#e4abf7" stroke="#e4abf7"/><path d="M1082.9 399.9 1094.4 399.4 1087.8 405.7 1076.3 405.7Z" fill="#f7b0f7" stroke="#f7b0f7"/><path d="M1094.4 399.4 1105.7 402.1 1099.0 408.9 1087.8 405.7Z" fill="#fdb5f7" stroke="#fdb5f7"/><path d="M1105.7 402.1 1116.8 407.8 1110.2 414.8 1099.0 408.9Z" fill="#f5baf7" stroke="#f5baf7"/><path d="M1116.8 407.8 1127.9 415.7 1121.2 422.9 1110.2 414.8Z" fill="#e1bff7" stroke="#e1bff7"/><path d="M1127.9 415.7 1138.9 424.9 1132.2 432.2 1121.2 422.9Z" fill="#c5c4f7" stroke="#c5c4f7"/><path d="M1138.9 424.9 1149.8 434.5 1143.1 441.7 1132.2 432.2Z" fill="#a6c9f7" stroke="#a6c9f7"/><path d="M1149.8 434.5 1160.8 443.4 1154.1 450.4 1143.1 441.7Z" fill="#88cff7" stroke="#88cff7"/><path d="M1160.8 443.4 1171.9 450.8 1165.2 457.7 1154.1 450.4Z" fill="#6fd4f7" stroke="#6fd4f7"/><path d="M1171.9 450.8 1183.1 456.2 1176.4 462.9 1165.2 457.7Z" fill="#5ed9f7" stroke="#5ed9f7"/><path d="M1183.1 456.2 1194.3 459.5 1187.7 466.0 1176.4 462.9Z" fill="#56def7" stroke="#56def7"/><path d="M1194.3 459.5 1205.7 460.7 1199.0 467.0 1187.7 466.0Z" fill="#58e3f7" stroke="#58e3f7"/><path d="M1205.7 460.7 1217.1 460.1 1210.5 466.4 1199.0 467.0Z" fill="#63e8f7" stroke="#63e8f7"/><path d="M1217.1 460.1 1228.6 458.5 1222.0 464.7 1210.5 466.4Z" fill="#74edf7" stroke="#74edf7"/><path d="M1228.6 458.5 1240.2 456.4 1233.5 462.6 1222.0 464.7Z" fill="#88f2f7" stroke="#88f2f7"/><path d="M1240.2 456.4 1251.5 457.5 1244.9 464.0 1233.5 462.6Z" fill="#96f7f7" stroke="#96f7f7"/><path d="M1251.5 457.5 1262.8 460.1 1256.2 466.6 1244.9 464.0Z" fill="#99fcf7" stroke="#99fcf7"/><path d="M704.5 324.4 715.8 326.9 709.1 333.5 697.8 330.9Z" fill="#9903fc" stroke="#9903fc"/><path d="M715.8 326.9 727.0 331.1 720.4 337.5 709.1 333.5Z" fill="#9608fc" stroke="#9608fc"/><path d="M727.0 331.1 738.1 338.3 731.4 344.8 720.4 337.5Z" fill="#870dfc" stroke="#870dfc"/><path d="M738.1 338.3 749.2 345.2 742.5 351.6 731.4 344.8Z" fill="#7312fc" stroke="#7312fc"/><path d="M749.2 345.2 760.3 350.8 753.7 357.3 742.5 351.6Z" fill="#6217fc" stroke="#6217fc"/><path d="M760.3 350.8 771.6 354.8 764.9 361.3 753.7 357.3Z" fill="#581cfc" stroke="#581cfc"/><path d="M771.6 354.8 782.9 356.6 776.2 363.2 764.9 361.3Z" fill="#5621fc" stroke="#5621fc"/><path d="M782.9 356.6 794.3 356.3 787.7 362.9 776.2 363.2Z" fill="#5f26fc" stroke="#5f26fc"/><path d="M794.3 356.3 805.9 354.0 799.2 360.7 787.7 362.9Z" fill="#702bfc" stroke="#702bfc"/><path d="M805.9 354.0 817.5 350.2 810.8 357.0 799.2 360.7Z" fill="#8a30fc" stroke="#8a30fc"/><path d="M817.5 350.2 829.1 345.8 822.5 352.6 810.8 357.0Z" fill="#a836fc" stroke="#a836fc"/><path d="M829.1 345.8 840.7 341.7 834.1 348.5 822.5 352.6Z" fill="#c83bfc" stroke="#c83bfc"/><path d="M840.7 341.7 852.3 339.0 845.6 345.7 834.1 348.5Z" fill="#e340fc" stroke="#e340fc"/><path d="M852.3 339.0 863.7 338.6 857.1 345.2 845.6 345.7Z" fill="#f645fc" stroke="#f645fc"/><path d="M863.7 338.6 875.0 341.2 868.4 347.7 857.1 345.2Z" fill="#fd4afc" stroke="#fd4afc"/><path d="M875.0 341.2 886.2 347.1 879.5 353.4 868.4 347.7Z" fill="#f64ffc" stroke="#f64ffc"/><path d="M886.2 347.1 897.2 356.1 890.5 362.1 879.5 353.4Z" fill="#e054fc" stroke="#e054fc"/><path d="M897.2 356.1 908.0 367.5 901.4 373.4 890.5 362.1Z" fill="#be59fc" stroke="#be59fc"/><path d="M908.0 367.5 918.9 380.4 912.2 386.1 901.4 373.4Z" fill="#935efc" stroke="#935efc"/><path d="M918.9 380.4 929.7 393.2 923.0 398.8 912.2 386.1Z" fill="#6463fc" stroke="#6463fc"/><path d="M929.7 393.2 940.5 404.5 933.9 410.1 923.0 398.8Z" fill="#3969fc" stroke="#3969fc"/><path d="M940.5 404.5 951.6 412.8 944.9 418.7 933.9 410.1Z" fill="#176efc" stroke="#176efc"/><path d="M951.6 412.8 962.8 417.0 956.1 423.6 944.9 418.7Z" fill="#0673fc" stroke="#0673fc"/><path d="M962.8 417.0 974.2 416.3 967.5 424.8 956.1 423.6Z" fill="#0678fc" stroke="#0678fc"/><path d="M974.2 416.3 985.9 410.8 978.9 425.4 967.5 424.8Z" fill="#177dfc" stroke="#177dfc"/><path d="M985.9 410.8 996.8 421.5 990.1 430.0 978.9 425.4Z" fill="#1782fc" stroke="#1782fc"/><path d="M996.8 421.5 1008.0 427.3 1001.3 433.9 990.1 430.0Z" fill="#0687fc" stroke="#0687fc"/><path d="M1008.0 427.3 1019.4 428.3 1012.7 434.2 1001.3 433.9Z" fill="#068cfc" stroke="#068cfc"/><path d="M1019.4 428.3 1030.9 425.2 1024.3 430.8 1012.7 434.2Z" fill="#1791fc" stroke="#1791fc"/><path d="M1030.9 425.2 1042.7 419.1 1036.0 424.6 1024.3 430.8Z" fill="#3996fc" stroke="#3996fc"/><path d="M1042.7 419.1 1054.5 411.4 1047.8 417.1 1036.0 424.6Z" fill="#649cfc" stroke="#649cfc"/><path d="M1054.5 411.4 1066.3 403.7 1059.6 409.6 1047.8 417.1Z" fill="#93a1fc" stroke="#93a1fc"/><path d="M1066.3 403.7 1078.0 397.4 1071.3 403.5 1059.6 409.6Z" fill="#bea6fc" stroke="#bea6fc"/><path d="M1078.0 397.4 1089.6 393.6 1082.9 399.9 1071.3 403.5Z" fill="#e0abfc" stroke="#e0abfc"/><path d="M1089.6 393.6 1101.1 392.9 1094.4 399.4 1082.9 399.9Z" fill="#f6b0fc" stroke="#f6b0fc"/><path d="M1101.1 392.9 1112.4 395.5 1105.7 402.1 1094.4 399.4Z" fill="#fdb5fc" stroke="#fdb5fc"/><path d="M1112.4 395.5 1123.5 401.0 1116.8 407.8 1105.7 402.1Z" fill="#f6bafc" stroke="#f6bafc"/><path d="M1123.5 401.0 1134.6 408.9 1127.9 415.7 1116.8 407.8Z" fill="#e3bffc" stroke="#e3bffc"/><path d="M1134.6 408.9 1145.5 418.1 1138.9 424.9 1127.9 415.7Z" fill="#c8c4fc" stroke="#c8c4fc"/><path d="M1145.5 418.1 1156.5 427.7 1149.8 434.5 1138.9 424.9Z" fill="#a8c9fc" stroke="#a8c9fc"/><path d="M1156.5 427.7 1167.5 436.6 1160.8 443.4 1149.8 434.5Z" fill="#8acffc" stroke="#8acffc"/><path d="M1167.5 436.6 1178.6 444.1 1171.9 450.8 1160.8 443.4Z" fill="#70d4fc" stroke="#70d4fc"/><path d="M1178.6 444.1 1189.7 449.6 1183.1 456.2 1171.9 450.8Z" fill="#5fd9fc" stroke="#5fd9fc"/><path d="M1189.7 449.6 1201.0 453.0 1194.3 459.5 1183.1 456.2Z" fill="#56defc" stroke="#56defc"/><path d="M1201.0 453.0 1212.3 454.2 1205.7 460.7 1194.3 459.5Z" fill="#58e3fc" stroke="#58e3fc"/><path d="M1212.3 454.2 1223.8 453.7 1217.1 460.1 1205.7 460.7Z" fill="#62e8fc" stroke="#62e8fc"/><path d="M1223.8 453.7 1235.3 452.0 1228.6 458.5 1217.1 460.1Z" fill="#73edfc" stroke="#73edfc"/><path d="M1235.3 452.0 1246.8 449.9 1240.2 456.4 1228.6 458.5Z" fill="#87f2fc" stroke="#87f2fc"/><path d="M1246.8 449.9 1258.2 451.0 1251.5 457.5 1240.2 456.4Z" fill="#96f7fc" stroke="#96f7fc"/><path d="M1258.2 451.0 1269.5 453.5 1262.8 460.1 1251.5 457.5Z" fill="#99fcfc" stroke="#99fcfc"/></g></svg>
<div class="t" style="left:508.00px;top:121.75px;font-size:29px;color:#ff0033;font-weight:bold;font-style:italic;">Interferenzmuster ged&auml;mpfter Kreiswellen</div>
<div class="t" style="transform:scaleX(1.0134);left:513.00px;top:157.65px;font-size:14px;color:#66ff00;font-weight:bold;font-style:italic;">&Uuml;berlagerung von Wellen, die von zwei gleichzeitig schwingenden Wellenzentren ausgehen</div>
<div class="r" style="left:513px;top:180px;width:605px;height:34px;background:#00ffff;"></div>
<div class="r" style="left:570px;top:225px;width:417px;height:28px;background:#99ff00;"></div>
<div class="t" style="transform:scaleX(0.8089);left:517.00px;top:186.46px;font-size:18px;color:#000;font-weight:bold;font-style:italic;">Z1</div>
<div class="t" style="transform:scaleX(1.2800);left:543.00px;top:186.46px;font-size:18px;color:#000;font-family:'Liberation Serif', serif;">=</div>
<div class="t" style="transform:scaleX(1.2308);left:561.00px;top:186.46px;font-size:18px;color:#000;font-weight:bold;font-style:italic;">A</div>
<div class="t" style="transform:scaleX(0.7477);left:577.00px;top:194.54px;font-size:12px;color:#000;font-weight:bold;font-style:italic;">1</div>
<div class="t" style="left:584.00px;top:186.46px;font-size:18px;color:#000;font-weight:bold;font-style:italic;">e</div>
<div class="t" style="transform:scaleX(1.1069);left:596.00px;top:181.69px;font-size:13px;color:#000;font-style:italic;font-family:'Liberation Serif', serif;">&minus;&delta;r</div>
<div class="t" style="transform:scaleX(0.6355);left:619.00px;top:188.08px;font-size:9px;color:#000;font-style:italic;">S1</div>
<div class="t" style="transform:scaleX(1.1532);left:637.00px;top:186.46px;font-size:18px;color:#000;font-weight:bold;font-style:italic;">sin</div>
<div class="t" style="transform:scaleX(0.8333);left:668.00px;top:186.46px;font-size:18px;color:#000;font-style:italic;font-family:'Liberation Serif', serif;">(</div>
<div class="t" style="transform:scaleX(1.0983);left:675.00px;top:186.46px;font-size:18px;color:#000;font-weight:bold;font-style:italic;">k</div>
<div class="t" style="left:690.00px;top:186.46px;font-size:18px;color:#000;font-weight:bold;font-style:italic;">r</div>
<div class="t" style="transform:scaleX(0.9430);left:698.00px;top:193.69px;font-size:13px;color:#000;font-weight:bold;font-style:italic;">S1</div>
<div class="t" style="transform:scaleX(1.4769);left:717.00px;top:186.46px;font-size:18px;color:#000;font-family:'Liberation Serif', serif;">&minus;</div>
<div class="t" style="transform:scaleX(1.0221);left:735.00px;top:186.46px;font-size:18px;color:#000;font-style:italic;font-family:'Liberation Serif', serif;">&omega;</div>
<div class="t" style="transform:scaleX(0.8333);left:752.00px;top:186.46px;font-size:18px;color:#000;font-weight:bold;font-style:italic;">t</div>
<div class="t" style="transform:scaleX(0.8333);left:759.00px;top:186.46px;font-size:18px;color:#000;font-style:italic;font-family:'Liberation Serif', serif;">)</div>
<div class="t" style="transform:scaleX(1.2800);left:768.00px;top:186.46px;font-size:18px;color:#000;font-family:'Liberation Serif', serif;">+</div>
<div class="t" style="transform:scaleX(1.2308);left:789.00px;top:186.46px;font-size:18px;color:#000;font-weight:bold;font-style:italic;">A</div>
<div class="t" style="transform:scaleX(1.0467);left:805.00px;top:194.54px;font-size:12px;color:#000;font-weight:bold;font-style:italic;">2</div>
<div class="t" style="left:814.00px;top:186.46px;font-size:18px;color:#000;font-weight:bold;font-style:italic;">e</div>
<div class="t" style="transform:scaleX(1.1069);left:824.00px;top:181.69px;font-size:13px;color:#000;font-style:italic;font-family:'Liberation Serif', serif;">&minus;&delta;r</div>
<div class="t" style="transform:scaleX(1.0509);left:847.00px;top:188.08px;font-size:9px;color:#000;font-style:italic;">s2</div>
<div class="t" style="transform:scaleX(1.1532);left:868.00px;top:186.46px;font-size:18px;color:#000;font-weight:bold;font-style:italic;">sin</div>
<div class="t" style="transform:scaleX(0.8333);left:898.00px;top:186.46px;font-size:18px;color:#000;font-style:italic;font-family:'Liberation Serif', serif;">(</div>
<div class="t" style="left:906.00px;top:186.46px;font-size:18px;color:#000;font-weight:bold;font-style:italic;">k</div>
<div class="t" style="left:920.00px;top:186.46px;font-size:18px;color:#000;font-weight:bold;font-style:italic;">r</div>
<div class="t" style="transform:scaleX(0.9430);left:928.00px;top:193.69px;font-size:13px;color:#000;font-weight:bold;font-style:italic;">S2</div>
<div class="t" style="transform:scaleX(1.3785);left:948.00px;top:186.46px;font-size:18px;color:#000;font-family:'Liberation Serif', serif;">&minus;</div>
<div class="t" style="transform:scaleX(1.0221);left:964.00px;top:186.46px;font-size:18px;color:#000;font-style:italic;font-family:'Liberation Serif', serif;">&omega;</div>
<div class="t" style="transform:scaleX(0.8333);left:988.00px;top:186.46px;font-size:18px;color:#000;font-style:italic;font-family:'Liberation Serif', serif;">(</div>
<div class="t" style="transform:scaleX(0.8333);left:996.00px;top:186.46px;font-size:18px;color:#000;font-weight:bold;font-style:italic;">t</div>
<div class="t" style="transform:scaleX(1.3785);left:1006.00px;top:186.46px;font-size:18px;color:#000;font-family:'Liberation Serif', serif;">&minus;</div>
<div class="t" style="transform:scaleX(0.8333);left:1024.00px;top:186.46px;font-size:18px;color:#000;font-weight:bold;font-style:italic;">t</div>
<div class="t" style="transform:scaleX(0.8985);left:1030.00px;top:193.69px;font-size:13px;color:#000;font-weight:bold;font-style:italic;">12</div>
<div class="t" style="left:1044.00px;top:186.46px;font-size:18px;color:#000;font-style:italic;font-family:'Liberation Serif', serif;">)</div>
<div class="t" style="transform:scaleX(1.2800);left:1056.00px;top:186.46px;font-size:18px;color:#000;font-family:'Liberation Serif', serif;">+</div>
<div class="t" style="transform:scaleX(1.4180);left:1078.00px;top:186.46px;font-size:18px;color:#000;font-style:italic;font-family:'Liberation Serif', serif;">&Delta;</div>
<div class="t" style="transform:scaleX(1.4044);left:1093.00px;top:186.46px;font-size:18px;color:#000;font-style:italic;font-family:'Liberation Serif', serif;">&phi;</div>
<div class="t" style="transform:scaleX(0.8333);left:1108.00px;top:186.46px;font-size:18px;color:#000;font-style:italic;font-family:'Liberation Serif', serif;">)</div>
<div class="t" style="transform:scaleX(1.0903);left:578.00px;top:229.80px;font-size:15px;color:#000;font-weight:bold;font-style:italic;">d</div>
<div class="t" style="transform:scaleX(0.8563);left:587.00px;top:235.80px;font-size:15px;color:#000;font-weight:bold;font-style:italic;">S1,S2</div>
<div class="t" style="transform:scaleX(0.9789);left:622.00px;top:229.80px;font-size:15px;color:#000;font-weight:bold;font-style:italic;">= 60</div>
<div class="t" style="transform:scaleX(0.9535);left:664.00px;top:229.80px;font-size:15px;color:#000;font-weight:bold;font-style:italic;">t= 14</div>
<div class="t" style="transform:scaleX(0.9588);left:710.00px;top:229.80px;font-size:15px;color:#000;font-weight:bold;font-style:italic;">s</div>
<div class="t" style="transform:scaleX(1.0909);left:718.00px;top:238.19px;font-size:11px;color:#000;font-style:italic;">z</div>
<div class="t" style="transform:scaleX(0.9868);left:724.00px;top:229.80px;font-size:15px;color:#000;font-weight:bold;font-style:italic;">= 4</div>
<div class="t" style="left:757.00px;top:229.80px;font-size:15px;color:#000;font-weight:bold;font-style:italic;">&delta; = 0.04</div>
<div class="t" style="transform:scaleX(0.9312);left:825.00px;top:229.80px;font-size:15px;color:#000;font-weight:bold;font-style:italic;">T = 10</div>
<div class="t" style="transform:scaleX(0.9733);left:877.00px;top:229.80px;font-size:15px;color:#000;font-weight:bold;font-style:italic;">&lambda; = 20</div>
<div class="t" style="left:934.00px;top:229.80px;font-size:15px;color:#000;font-weight:bold;font-style:italic;">&Delta;&phi; = 0</div>
<div class="r" style="left:371px;top:897px;width:13px;height:13px;background:#fff;box-shadow:inset 1px 1px #808080,inset 2px 2px #404040,inset -1px -1px #fff,inset -2px -2px #d4d0c8;"></div>
<svg class="r" style="left:371px;top:897px" width="13" height="13"><path d="M3 6 L5.5 9 L10 3.5" fill="none" stroke="#000" stroke-width="2"/></svg>
<div class="t" style="transform:scaleX(1.0239);left:402.00px;top:897.65px;font-size:14px;color:#33e8b0;font-weight:bold;font-style:italic;">3D: Farbe Oberfl&auml;che</div>
<div class="t" style="transform:scaleX(0.9759);left:985.00px;top:887.49px;font-size:13px;color:#8080ff;font-weight:bold;font-style:italic;letter-spacing:1px;">&copy; Roman Chijner, &nbsp;Heidelberg &nbsp;2013</div>
<div class="t" style="transform:scaleX(0.8884);left:1006.00px;top:903.99px;font-size:13px;color:#8080ff;font-weight:bold;font-style:italic;letter-spacing:1px;">Gestaltungshilfe : Werner Knobloch</div>
<div class="r" style="left:0px;top:950px;width:1280px;height:34px;background:#d4d0c8;"></div>
<div class="r" style="left:0px;top:950px;width:1280px;height:1px;background:#8a8a8a;"></div>
<div class="t" style="transform:scaleX(1.0715);left:10.00px;top:959.49px;font-size:13px;color:#000;">Eingabe:</div>
<div class="r" style="left:68px;top:953px;width:1150px;height:25px;background:#fff;box-shadow:inset 1px 1px #707070,inset 2px 2px #404040,inset -1px -1px #fff,inset 0 -2px #d4d0c8;"></div>
<svg class="r" style="left:1235px;top:957px" width="18" height="16"><rect x="1" y="1" width="16" height="13" fill="#d4d0c8" stroke="#555" stroke-width="1.5" rx="1"/><path d="M6 7.5 L11 4 L11 11 Z" fill="#555"/></svg>
<div class="r" style="left:0px;top:981px;width:1280px;height:1px;background:#fff;"></div>
<div class="r" style="left:1053px;top:973px;width:113px;height:11px;background:#ffffe1;overflow:hidden;"></div>
<div class="t" style="transform:scaleX(0.9012);left:1055.00px;top:976.84px;font-size:12px;color:#000;">Deutsch (Deutschland)</div></body></html>
